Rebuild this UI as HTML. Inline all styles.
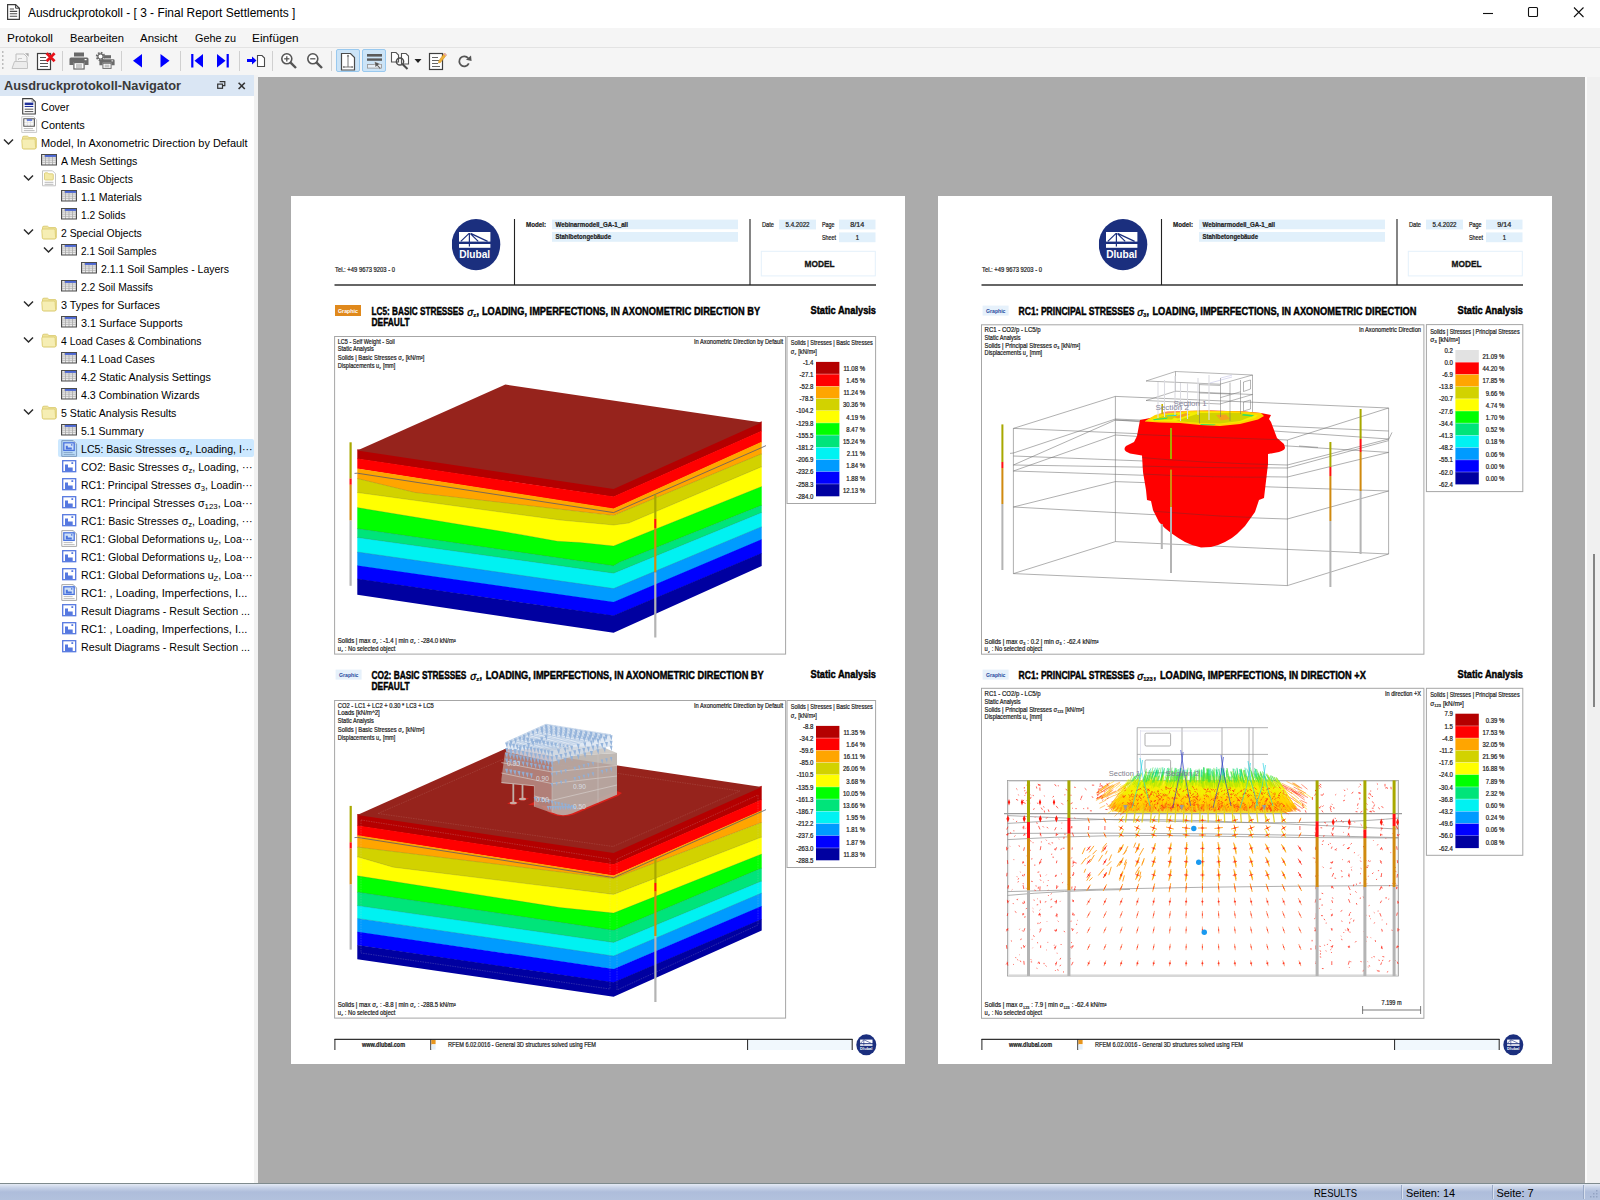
<!DOCTYPE html><html lang="de"><head><meta charset="utf-8"><title>Ausdruckprotokoll - [ 3 - Final Report Settlements ]</title><style>

html,body{margin:0;padding:0;}
body{width:1600px;height:1200px;overflow:hidden;position:relative;background:#fff;font-family:"Liberation Sans",sans-serif;}
.t{position:absolute;white-space:nowrap;transform-origin:0 0;}
.a{position:absolute;}
#titlebar{left:0;top:0;width:1600px;height:28px;background:#fff;}
#menubar{left:0;top:28px;width:1600px;height:19px;background:#f5f5f5;}
#menusep{left:0;top:47px;width:1600px;height:1px;background:#e3e3e3;}
#toolbar{left:0;top:48px;width:1600px;height:29px;background:#f5f5f5;}
#nav{left:0;top:75px;width:254px;height:1108px;background:#fff;}
#navhead{left:0;top:75px;width:254px;height:21px;background:#dae6f4;}
#split{left:254px;top:75px;width:4px;height:1108px;background:#f2f2f2;}
#main{left:258px;top:77px;width:1327px;height:1106px;background:#ababab;}
#vscroll{left:1585px;top:77px;width:15px;height:1106px;background:#f0f0f0;border-left:2px solid #fbfbfb;box-sizing:border-box;}
#status{left:0;top:1183px;width:1600px;height:17px;background:linear-gradient(#7f8b8e 0,#7f8b8e 1px,#e4eaf4 1px,#c4d0e6 5px,#aebddb 9px,#b2c1dd 17px);}
.page{position:absolute;top:196px;width:614px;height:868px;background:#fff;}
.row{position:absolute;left:0;height:18px;width:254px;}
.sel{position:absolute;top:439px;left:58px;width:196px;height:18px;background:#cce8ff;border-radius:2px;}
.tsep{position:absolute;top:51px;width:1px;height:20px;background:#d0d0d0;}
.tbtn{position:absolute;top:49px;width:24px;height:23px;box-sizing:border-box;background:#cce4f7;border:1px solid #99c9ef;border-radius:2px;}

sub{font-size:8px;vertical-align:-2px;line-height:0;}
</style></head><body>
<div class="a" id="titlebar"></div>
<svg class="a" style="left:6px;top:3px" width="15" height="18" viewBox="0 0 15 18"><path d="M1.6 1.6 L9.6 1.6 L13.4 5.2 L13.4 16.4 L1.6 16.4 Z" fill="#fff" stroke="#3c3c3c" stroke-width="1.2"/><path d="M9.6 1.6 L9.6 5.2 L13.4 5.2" fill="none" stroke="#3c3c3c" stroke-width="1"/><path d="M3.8 6 H8 M3.8 8.4 H11.2 M3.8 10.8 H11.2 M3.8 13.2 H11.2" stroke="#4a4a4a" stroke-width="1.1"/></svg>
<span class="t" style="left:27.5px;top:5.96px;font-size:12.3px;line-height:14.76px;color:#000;transform:scaleX(0.9710);">Ausdruckprotokoll - [ 3 - Final Report Settlements ]</span>
<svg class="a" style="left:1480px;top:5px" width="20" height="16" viewBox="0 0 20 16"><path d="M3 8.5 H13" stroke="#111" stroke-width="1.1"/></svg>
<svg class="a" style="left:1525px;top:4px" width="18" height="18" viewBox="0 0 18 18"><rect x="3.5" y="3.5" width="9" height="9" rx="1" fill="none" stroke="#111" stroke-width="1.1"/></svg>
<svg class="a" style="left:1570px;top:4px" width="18" height="18" viewBox="0 0 18 18"><path d="M4 3.5 L13.5 13 M13.5 3.5 L4 13" stroke="#111" stroke-width="1.1"/></svg>
<div class="a" id="menubar"></div><div class="a" id="menusep"></div>
<span class="t" style="left:6.5px;top:31.79px;font-size:11px;line-height:13.2px;color:#000;transform:scaleX(1.0748);">Protokoll</span>
<span class="t" style="left:69.5px;top:31.79px;font-size:11px;line-height:13.2px;color:#000;transform:scaleX(1.0149);">Bearbeiten</span>
<span class="t" style="left:140px;top:31.79px;font-size:11px;line-height:13.2px;color:#000;transform:scaleX(1.0396);">Ansicht</span>
<span class="t" style="left:194.5px;top:31.79px;font-size:11px;line-height:13.2px;color:#000;transform:scaleX(0.9860);">Gehe zu</span>
<span class="t" style="left:252px;top:31.79px;font-size:11px;line-height:13.2px;color:#000;transform:scaleX(1.0754);">Einfügen</span>
<div class="a" id="toolbar"></div>
<svg class="a" style="left:1px;top:50px" width="4" height="20" viewBox="0 0 4 20"><rect x="1" y="1" width="1.5" height="2" fill="#bdbdbd"/><rect x="1" y="5" width="1.5" height="2" fill="#bdbdbd"/><rect x="1" y="9" width="1.5" height="2" fill="#bdbdbd"/><rect x="1" y="13" width="1.5" height="2" fill="#bdbdbd"/><rect x="1" y="17" width="1.5" height="2" fill="#bdbdbd"/></svg>
<svg class="a" style="left:10px;top:51px" width="20" height="20" viewBox="0 0 20 20"><path d="M6 3 H14 L17 6 V13 H6 Z" fill="#f4f4f4" stroke="#bdbdbd"/><path d="M15 2.2 H18.6 V5.8 Z" fill="#a9a9a9"/><path d="M8.5 7.5 H12 M8.5 7.5 V9" stroke="#c9c9c9" fill="none"/><path d="M2 17.5 L4.5 10.5 H16.5 L17.5 12 V17.5 Z" fill="#ececec" stroke="#c4c4c4"/></svg>
<svg class="a" style="left:36px;top:51px" width="21" height="20" viewBox="0 0 21 20"><rect x="1.5" y="2.5" width="13" height="16" fill="#fff" stroke="#3f3f3f" stroke-width="1.2"/><path d="M4 6.5 H10 M4 9.5 H12 M4 12.5 H12 M4 15.5 H12" stroke="#555" stroke-width="1.2"/><path d="M10.6 2.2 L18.6 10.2 M18.6 2.2 L10.6 10.2" stroke="#e8121a" stroke-width="2.7"/></svg>
<div class="tsep" style="left:62px"></div>
<svg class="a" style="left:69px;top:51px" width="20" height="20" viewBox="0 0 20 20"><rect x="5" y="1.5" width="10" height="4" fill="#6a6a6a"/><path d="M2 6.5 H18 Q19.5 6.5 19.5 8 V14 H15.5 V11 H4.5 V14 H0.5 V8 Q0.5 6.5 2 6.5 Z" fill="#6a6a6a"/><rect x="4.9" y="11.6" width="10.2" height="6.4" fill="#fff" stroke="#6a6a6a" stroke-width="1.2"/><path d="M7 14 H13 M7 16 H13" stroke="#8a8a8a" stroke-width="0.9"/><rect x="15.6" y="8" width="2" height="1.2" fill="#fff"/></svg>
<svg class="a" style="left:95px;top:51px" width="20" height="20" viewBox="0 0 20 20"><g transform="translate(4,3) scale(0.8)"><rect x="5" y="1.5" width="10" height="4" fill="#6a6a6a"/><path d="M2 6.5 H18 Q19.5 6.5 19.5 8 V14 H15.5 V11 H4.5 V14 H0.5 V8 Q0.5 6.5 2 6.5 Z" fill="#6a6a6a"/><rect x="4.9" y="11.6" width="10.2" height="6.4" fill="#fff" stroke="#6a6a6a" stroke-width="1.2"/><path d="M7 14 H13 M7 16 H13" stroke="#8a8a8a" stroke-width="0.9"/><rect x="15.6" y="8" width="2" height="1.2" fill="#fff"/></g><circle cx="5.5" cy="5.5" r="3.6" fill="#fff" stroke="#6a6a6a" stroke-width="2.2" stroke-dasharray="1.6 1.2"/><circle cx="5.5" cy="5.5" r="2.6" fill="none" stroke="#6a6a6a" stroke-width="1.2"/></svg>
<div class="tsep" style="left:121px"></div>
<svg class="a" style="left:132px;top:53px" width="12" height="16" viewBox="0 0 12 16"><path d="M10 1 L10 14.5 L1 7.7 Z" fill="#0000ff"/></svg>
<svg class="a" style="left:159px;top:53px" width="12" height="16" viewBox="0 0 12 16"><path d="M1.5 1 L1.5 14.5 L10.5 7.7 Z" fill="#0000ff"/></svg>
<div class="tsep" style="left:180px"></div>
<svg class="a" style="left:190px;top:53px" width="14" height="16" viewBox="0 0 14 16"><path d="M13 1 L13 14.5 L4.5 7.7 Z" fill="#0000ff"/><rect x="1.2" y="1" width="2.2" height="13.5" fill="#0000ff"/></svg>
<svg class="a" style="left:216px;top:53px" width="14" height="16" viewBox="0 0 14 16"><path d="M1 1 L1 14.5 L9.5 7.7 Z" fill="#0000ff"/><rect x="10.6" y="1" width="2.2" height="13.5" fill="#0000ff"/></svg>
<div class="tsep" style="left:239px"></div>
<svg class="a" style="left:246px;top:52px" width="20" height="18" viewBox="0 0 20 18"><path d="M1 7 H6 V4.5 L10.5 8.5 L6 12.5 V10 H1 Z" fill="#0000ff"/><path d="M11.5 3.5 H16 L18.5 6 V14.5 H11.5 Z" fill="#fff" stroke="#4a4a4a" stroke-width="1.1"/></svg>
<div class="tsep" style="left:272px"></div>
<svg class="a" style="left:280px;top:52px" width="18" height="18" viewBox="0 0 18 18"><circle cx="6.8" cy="6.8" r="5" fill="#fff" stroke="#555" stroke-width="1.6"/><path d="M10.6 10.6 L16 16" stroke="#555" stroke-width="2.4"/><path d="M4.2 6.8 H9.4" stroke="#555" stroke-width="1.3"/><path d="M6.8 4.2 V9.4" stroke="#555" stroke-width="1.3"/></svg>
<svg class="a" style="left:306px;top:52px" width="18" height="18" viewBox="0 0 18 18"><circle cx="6.8" cy="6.8" r="5" fill="#fff" stroke="#555" stroke-width="1.6"/><path d="M10.6 10.6 L16 16" stroke="#555" stroke-width="2.4"/><path d="M4.2 6.8 H9.4" stroke="#555" stroke-width="1.3"/></svg>
<div class="tsep" style="left:331px"></div>
<div class="tbtn" style="left:336px"></div><div class="tbtn" style="left:362px"></div>
<svg class="a" style="left:340px;top:52px" width="17" height="20" viewBox="0 0 17 20"><path d="M1.5 1.5 H10.5 L14.5 5.5 V18 H1.5 Z" fill="#fff" stroke="#4a4a4a" stroke-width="1.2"/><path d="M8 3 V15 M3 15 H13" stroke="#6a6a6a" stroke-width="0.9"/><path d="M8 2.6 L6.8 4.6 H9.2 Z M2.6 15 L4.4 13.9 V16.1 Z M13.4 15 L11.6 13.9 V16.1 Z" fill="#6a6a6a"/></svg>
<svg class="a" style="left:365px;top:52px" width="19" height="20" viewBox="0 0 19 20"><rect x="2" y="2" width="15" height="2.6" fill="#5a5a5a"/><rect x="2" y="6.4" width="15" height="2.4" fill="#5a5a5a"/><rect x="2.5" y="12.5" width="14" height="3.6" fill="#e6eef6" stroke="#9a9a9a" stroke-width="0.9"/><path d="M9.5 9.5 L15.5 12 L13 13 L16 16.5 L14.8 17.3 L12 13.8 L10.4 15.6 Z" fill="#555" stroke="#fff" stroke-width="0.4"/></svg>
<svg class="a" style="left:390px;top:51px" width="22" height="20" viewBox="0 0 22 20"><path d="M1.5 1.5 H6 L8.5 4 V11 H1.5 Z" fill="#fff" stroke="#555" stroke-width="1.1"/><path d="M11.5 2.5 H16 L18.5 5 V13 H11.5 Z" fill="#fff" stroke="#555" stroke-width="1.1"/><circle cx="10" cy="10.5" r="3.6" fill="none" stroke="#4a4a4a" stroke-width="1.5"/><path d="M12.6 13.2 L17.5 18" stroke="#4a4a4a" stroke-width="2"/></svg>
<svg class="a" style="left:414px;top:58px" width="8" height="6" viewBox="0 0 8 6"><path d="M0.5 1 H7.5 L4 5 Z" fill="#222"/></svg>
<svg class="a" style="left:428px;top:51px" width="20" height="20" viewBox="0 0 20 20"><rect x="1.5" y="2.5" width="13" height="16" fill="#fff" stroke="#3f3f3f" stroke-width="1.2"/><path d="M4 6.5 H10 M4 9.5 H11 M4 12.5 H10 M4 15.5 H12" stroke="#666" stroke-width="1.2"/><path d="M16.5 2 L18.5 4 L12.5 11.5 L10.5 12 L10.8 9.8 Z" fill="#f0b23a" stroke="#c98a1a" stroke-width="0.5"/><path d="M16.5 2 L18.5 4 L17.7 5 L15.7 3 Z" fill="#e9a3c0"/></svg>
<svg class="a" style="left:456px;top:53px" width="17" height="17" viewBox="0 0 17 17"><path d="M12.8 10.4 A5 5 0 1 1 12.2 5.2" fill="none" stroke="#555" stroke-width="1.8"/><path d="M10 6.8 L15.6 8 L15 2.6 Z" fill="#555"/></svg>
<div class="a" id="nav"></div><div class="a" id="navhead"></div>
<span class="t" style="left:4px;top:77.88px;font-size:12.8px;line-height:15.36px;color:#3a3a3a;font-weight:bold;">Ausdruckprotokoll-Navigator</span>
<svg class="a" style="left:216px;top:80px" width="11" height="11" viewBox="0 0 11 11"><path d="M3.6 1.7 H8.8 V5.6 H7" fill="none" stroke="#333" stroke-width="1.2"/><rect x="1.7" y="4.1" width="4.8" height="4.2" fill="none" stroke="#333" stroke-width="1.2"/></svg>
<svg class="a" style="left:237px;top:81px" width="10" height="10" viewBox="0 0 10 10"><path d="M1.6 1.8 L7.8 8 M7.8 1.8 L1.6 8" stroke="#333" stroke-width="1.6"/></svg>
<div class="sel"></div>
<svg class="a" style="left:22px;top:98px" width="15" height="17" viewBox="0 0 15 17"><path d="M0.7 0.6 L10 0.6 L13.3 3.8 L13.3 16 L0.7 16 Z" fill="#fff" stroke="#3e3e3e" stroke-width="1.1"/><path d="M10 0.6 L10 3.8 L13.3 3.8" fill="none" stroke="#8a8a8a" stroke-width="0.8"/><rect x="2.7" y="4.6" width="8.6" height="2.4" fill="#22329a"/><rect x="2.7" y="7.9" width="8.6" height="1.1" fill="#22329a"/><path d="M2.7 11.2 H11.3 M2.7 13.6 H11.3" stroke="#555" stroke-width="1"/></svg>
<span class="t" style="left:41.1px;top:100.59px;font-size:11px;line-height:13.2px;color:#000;transform:scaleX(0.9644);">Cover</span>
<svg class="a" style="left:21px;top:116px" width="17" height="17" viewBox="0 0 17 17"><path d="M0.8 0.6 L12.6 0.6 L15.6 3.6 L15.6 16.4 L0.8 16.4 Z" fill="#fff" stroke="#c9c9c9" stroke-width="1"/><rect x="2.8" y="2.8" width="10.6" height="7.4" fill="#e0e0e0" stroke="#4f4f4f" stroke-width="1"/><rect x="6" y="3.4" width="5" height="1.3" fill="#3557e0"/><rect x="3.5" y="3.4" width="1.8" height="1.2" fill="#fff"/><rect x="3.5" y="5.3" width="2.4" height="0.9" fill="#fff"/><rect x="6.7" y="5.3" width="2.4" height="0.9" fill="#fff"/><rect x="9.9" y="5.3" width="2.4" height="0.9" fill="#fff"/><rect x="3.5" y="6.9" width="2.4" height="0.9" fill="#fff"/><rect x="6.7" y="6.9" width="2.4" height="0.9" fill="#fff"/><rect x="9.9" y="6.9" width="2.4" height="0.9" fill="#fff"/><rect x="3.5" y="8.5" width="2.4" height="0.9" fill="#fff"/><rect x="6.7" y="8.5" width="2.4" height="0.9" fill="#fff"/><rect x="9.9" y="8.5" width="2.4" height="0.9" fill="#fff"/><path d="M2.8 12.6 H12 M2.8 14.6 H13.6" stroke="#bdbdbd" stroke-width="1"/></svg>
<span class="t" style="left:41.1px;top:118.59px;font-size:11px;line-height:13.2px;color:#000;transform:scaleX(0.9937);">Contents</span>
<svg class="a" style="left:2.5px;top:138px" width="11" height="8" viewBox="0 0 11 8"><path d="M1 1.5 L5.5 6 L10 1.5" fill="none" stroke="#2b2b2b" stroke-width="1.5"/></svg>
<svg class="a" style="left:21px;top:135px" width="17" height="15" viewBox="0 0 17 15"><path d="M1.5 2.5 Q1.5 1.2 3 1.2 L6.5 1.2 L8 2.6 L14 2.6 Q15.3 2.6 15.3 4 L15.3 12.5 Q15.3 13.8 14 13.8 L3 13.8 Q1.5 13.8 1.5 12.5 Z" fill="#efe39a" stroke="#d9c96f" stroke-width="0.9"/><path d="M0.8 5.2 Q0.7 4 2 4 L12.8 4 Q14 4 14.1 5.2 L14.6 12.6 Q14.7 13.9 13.4 13.9 L2.6 13.9 Q1.4 13.9 1.3 12.7 Z" fill="#f6eeb4" stroke="#dccd74" stroke-width="0.9"/></svg>
<span class="t" style="left:41.1px;top:136.59px;font-size:11px;line-height:13.2px;color:#000;transform:scaleX(0.9934);">Model, In Axonometric Direction by Default</span>
<svg class="a" style="left:41px;top:154px" width="16" height="12" viewBox="0 0 16 12"><rect x="0.5" y="0.5" width="15" height="10.5" fill="#a9a9a9" stroke="#4c4c4c"/><rect x="4" y="1.2" width="11" height="1.5" fill="#3557e0"/><rect x="1.4" y="1.3" width="1.9" height="1.2" fill="#fff"/><rect x="1.4" y="3.4" width="2.7" height="1.15" fill="#f4f4f4"/><rect x="4.9" y="3.4" width="2.7" height="1.15" fill="#f4f4f4"/><rect x="8.4" y="3.4" width="2.7" height="1.15" fill="#f4f4f4"/><rect x="11.9" y="3.4" width="2.7" height="1.15" fill="#f4f4f4"/><rect x="1.4" y="5.3" width="2.7" height="1.15" fill="#f4f4f4"/><rect x="4.9" y="5.3" width="2.7" height="1.15" fill="#f4f4f4"/><rect x="8.4" y="5.3" width="2.7" height="1.15" fill="#f4f4f4"/><rect x="11.9" y="5.3" width="2.7" height="1.15" fill="#f4f4f4"/><rect x="1.4" y="7.2" width="2.7" height="1.15" fill="#f4f4f4"/><rect x="4.9" y="7.2" width="2.7" height="1.15" fill="#f4f4f4"/><rect x="8.4" y="7.2" width="2.7" height="1.15" fill="#f4f4f4"/><rect x="11.9" y="7.2" width="2.7" height="1.15" fill="#f4f4f4"/><rect x="1.4" y="9.1" width="2.7" height="1.15" fill="#f4f4f4"/><rect x="4.9" y="9.1" width="2.7" height="1.15" fill="#f4f4f4"/><rect x="8.4" y="9.1" width="2.7" height="1.15" fill="#f4f4f4"/><rect x="11.9" y="9.1" width="2.7" height="1.15" fill="#f4f4f4"/></svg>
<span class="t" style="left:61.1px;top:154.59px;font-size:11px;line-height:13.2px;color:#000;transform:scaleX(0.9599);">A Mesh Settings</span>
<svg class="a" style="left:22.5px;top:174px" width="11" height="8" viewBox="0 0 11 8"><path d="M1 1.5 L5.5 6 L10 1.5" fill="none" stroke="#2b2b2b" stroke-width="1.5"/></svg>
<svg class="a" style="left:41px;top:170px" width="17" height="17" viewBox="0 0 17 17"><path d="M1.5 0.8 L11.5 0.8 L14.5 3.8 L14.5 15.8 L1.5 15.8 Z" fill="#fff" stroke="#c4c4c4" stroke-width="1"/><path d="M3.5 3.6 Q3.5 2.8 4.4 2.8 L6.6 2.8 L7.6 3.8 L11.4 3.8 Q12.3 3.8 12.3 4.7 L12.3 9.2 Q12.3 10 11.4 10 L4.4 10 Q3.5 10 3.5 9.2 Z" fill="#f3e9a6" stroke="#d6c66c" stroke-width="0.8"/><path d="M3.6 12.3 H12.4 M3.6 14.3 H12.4" stroke="#b9b9b9" stroke-width="1"/></svg>
<span class="t" style="left:61.1px;top:172.59px;font-size:11px;line-height:13.2px;color:#000;transform:scaleX(0.9395);">1 Basic Objects</span>
<svg class="a" style="left:61px;top:190px" width="16" height="12" viewBox="0 0 16 12"><rect x="0.5" y="0.5" width="15" height="10.5" fill="#a9a9a9" stroke="#4c4c4c"/><rect x="4" y="1.2" width="11" height="1.5" fill="#3557e0"/><rect x="1.4" y="1.3" width="1.9" height="1.2" fill="#fff"/><rect x="1.4" y="3.4" width="2.7" height="1.15" fill="#f4f4f4"/><rect x="4.9" y="3.4" width="2.7" height="1.15" fill="#f4f4f4"/><rect x="8.4" y="3.4" width="2.7" height="1.15" fill="#f4f4f4"/><rect x="11.9" y="3.4" width="2.7" height="1.15" fill="#f4f4f4"/><rect x="1.4" y="5.3" width="2.7" height="1.15" fill="#f4f4f4"/><rect x="4.9" y="5.3" width="2.7" height="1.15" fill="#f4f4f4"/><rect x="8.4" y="5.3" width="2.7" height="1.15" fill="#f4f4f4"/><rect x="11.9" y="5.3" width="2.7" height="1.15" fill="#f4f4f4"/><rect x="1.4" y="7.2" width="2.7" height="1.15" fill="#f4f4f4"/><rect x="4.9" y="7.2" width="2.7" height="1.15" fill="#f4f4f4"/><rect x="8.4" y="7.2" width="2.7" height="1.15" fill="#f4f4f4"/><rect x="11.9" y="7.2" width="2.7" height="1.15" fill="#f4f4f4"/><rect x="1.4" y="9.1" width="2.7" height="1.15" fill="#f4f4f4"/><rect x="4.9" y="9.1" width="2.7" height="1.15" fill="#f4f4f4"/><rect x="8.4" y="9.1" width="2.7" height="1.15" fill="#f4f4f4"/><rect x="11.9" y="9.1" width="2.7" height="1.15" fill="#f4f4f4"/></svg>
<span class="t" style="left:81.1px;top:190.59px;font-size:11px;line-height:13.2px;color:#000;transform:scaleX(0.9655);">1.1 Materials</span>
<svg class="a" style="left:61px;top:208px" width="16" height="12" viewBox="0 0 16 12"><rect x="0.5" y="0.5" width="15" height="10.5" fill="#a9a9a9" stroke="#4c4c4c"/><rect x="4" y="1.2" width="11" height="1.5" fill="#3557e0"/><rect x="1.4" y="1.3" width="1.9" height="1.2" fill="#fff"/><rect x="1.4" y="3.4" width="2.7" height="1.15" fill="#f4f4f4"/><rect x="4.9" y="3.4" width="2.7" height="1.15" fill="#f4f4f4"/><rect x="8.4" y="3.4" width="2.7" height="1.15" fill="#f4f4f4"/><rect x="11.9" y="3.4" width="2.7" height="1.15" fill="#f4f4f4"/><rect x="1.4" y="5.3" width="2.7" height="1.15" fill="#f4f4f4"/><rect x="4.9" y="5.3" width="2.7" height="1.15" fill="#f4f4f4"/><rect x="8.4" y="5.3" width="2.7" height="1.15" fill="#f4f4f4"/><rect x="11.9" y="5.3" width="2.7" height="1.15" fill="#f4f4f4"/><rect x="1.4" y="7.2" width="2.7" height="1.15" fill="#f4f4f4"/><rect x="4.9" y="7.2" width="2.7" height="1.15" fill="#f4f4f4"/><rect x="8.4" y="7.2" width="2.7" height="1.15" fill="#f4f4f4"/><rect x="11.9" y="7.2" width="2.7" height="1.15" fill="#f4f4f4"/><rect x="1.4" y="9.1" width="2.7" height="1.15" fill="#f4f4f4"/><rect x="4.9" y="9.1" width="2.7" height="1.15" fill="#f4f4f4"/><rect x="8.4" y="9.1" width="2.7" height="1.15" fill="#f4f4f4"/><rect x="11.9" y="9.1" width="2.7" height="1.15" fill="#f4f4f4"/></svg>
<span class="t" style="left:81.1px;top:208.59px;font-size:11px;line-height:13.2px;color:#000;transform:scaleX(0.9212);">1.2 Solids</span>
<svg class="a" style="left:22.5px;top:228px" width="11" height="8" viewBox="0 0 11 8"><path d="M1 1.5 L5.5 6 L10 1.5" fill="none" stroke="#2b2b2b" stroke-width="1.5"/></svg>
<svg class="a" style="left:41px;top:225px" width="17" height="15" viewBox="0 0 17 15"><path d="M1.5 2.5 Q1.5 1.2 3 1.2 L6.5 1.2 L8 2.6 L14 2.6 Q15.3 2.6 15.3 4 L15.3 12.5 Q15.3 13.8 14 13.8 L3 13.8 Q1.5 13.8 1.5 12.5 Z" fill="#efe39a" stroke="#d9c96f" stroke-width="0.9"/><path d="M0.8 5.2 Q0.7 4 2 4 L12.8 4 Q14 4 14.1 5.2 L14.6 12.6 Q14.7 13.9 13.4 13.9 L2.6 13.9 Q1.4 13.9 1.3 12.7 Z" fill="#f6eeb4" stroke="#dccd74" stroke-width="0.9"/></svg>
<span class="t" style="left:61.1px;top:226.59px;font-size:11px;line-height:13.2px;color:#000;transform:scaleX(0.9439);">2 Special Objects</span>
<svg class="a" style="left:42.5px;top:246px" width="11" height="8" viewBox="0 0 11 8"><path d="M1 1.5 L5.5 6 L10 1.5" fill="none" stroke="#2b2b2b" stroke-width="1.5"/></svg>
<svg class="a" style="left:61px;top:244px" width="16" height="12" viewBox="0 0 16 12"><rect x="0.5" y="0.5" width="15" height="10.5" fill="#a9a9a9" stroke="#4c4c4c"/><rect x="4" y="1.2" width="11" height="1.5" fill="#3557e0"/><rect x="1.4" y="1.3" width="1.9" height="1.2" fill="#fff"/><rect x="1.4" y="3.4" width="2.7" height="1.15" fill="#f4f4f4"/><rect x="4.9" y="3.4" width="2.7" height="1.15" fill="#f4f4f4"/><rect x="8.4" y="3.4" width="2.7" height="1.15" fill="#f4f4f4"/><rect x="11.9" y="3.4" width="2.7" height="1.15" fill="#f4f4f4"/><rect x="1.4" y="5.3" width="2.7" height="1.15" fill="#f4f4f4"/><rect x="4.9" y="5.3" width="2.7" height="1.15" fill="#f4f4f4"/><rect x="8.4" y="5.3" width="2.7" height="1.15" fill="#f4f4f4"/><rect x="11.9" y="5.3" width="2.7" height="1.15" fill="#f4f4f4"/><rect x="1.4" y="7.2" width="2.7" height="1.15" fill="#f4f4f4"/><rect x="4.9" y="7.2" width="2.7" height="1.15" fill="#f4f4f4"/><rect x="8.4" y="7.2" width="2.7" height="1.15" fill="#f4f4f4"/><rect x="11.9" y="7.2" width="2.7" height="1.15" fill="#f4f4f4"/><rect x="1.4" y="9.1" width="2.7" height="1.15" fill="#f4f4f4"/><rect x="4.9" y="9.1" width="2.7" height="1.15" fill="#f4f4f4"/><rect x="8.4" y="9.1" width="2.7" height="1.15" fill="#f4f4f4"/><rect x="11.9" y="9.1" width="2.7" height="1.15" fill="#f4f4f4"/></svg>
<span class="t" style="left:81.1px;top:244.59px;font-size:11px;line-height:13.2px;color:#000;transform:scaleX(0.9146);">2.1 Soil Samples</span>
<svg class="a" style="left:81px;top:262px" width="16" height="12" viewBox="0 0 16 12"><rect x="0.5" y="0.5" width="15" height="10.5" fill="#a9a9a9" stroke="#4c4c4c"/><rect x="4" y="1.2" width="11" height="1.5" fill="#3557e0"/><rect x="1.4" y="1.3" width="1.9" height="1.2" fill="#fff"/><rect x="1.4" y="3.4" width="2.7" height="1.15" fill="#f4f4f4"/><rect x="4.9" y="3.4" width="2.7" height="1.15" fill="#f4f4f4"/><rect x="8.4" y="3.4" width="2.7" height="1.15" fill="#f4f4f4"/><rect x="11.9" y="3.4" width="2.7" height="1.15" fill="#f4f4f4"/><rect x="1.4" y="5.3" width="2.7" height="1.15" fill="#f4f4f4"/><rect x="4.9" y="5.3" width="2.7" height="1.15" fill="#f4f4f4"/><rect x="8.4" y="5.3" width="2.7" height="1.15" fill="#f4f4f4"/><rect x="11.9" y="5.3" width="2.7" height="1.15" fill="#f4f4f4"/><rect x="1.4" y="7.2" width="2.7" height="1.15" fill="#f4f4f4"/><rect x="4.9" y="7.2" width="2.7" height="1.15" fill="#f4f4f4"/><rect x="8.4" y="7.2" width="2.7" height="1.15" fill="#f4f4f4"/><rect x="11.9" y="7.2" width="2.7" height="1.15" fill="#f4f4f4"/><rect x="1.4" y="9.1" width="2.7" height="1.15" fill="#f4f4f4"/><rect x="4.9" y="9.1" width="2.7" height="1.15" fill="#f4f4f4"/><rect x="8.4" y="9.1" width="2.7" height="1.15" fill="#f4f4f4"/><rect x="11.9" y="9.1" width="2.7" height="1.15" fill="#f4f4f4"/></svg>
<span class="t" style="left:101.1px;top:262.59px;font-size:11px;line-height:13.2px;color:#000;transform:scaleX(0.9516);">2.1.1 Soil Samples - Layers</span>
<svg class="a" style="left:61px;top:280px" width="16" height="12" viewBox="0 0 16 12"><rect x="0.5" y="0.5" width="15" height="10.5" fill="#a9a9a9" stroke="#4c4c4c"/><rect x="4" y="1.2" width="11" height="1.5" fill="#3557e0"/><rect x="1.4" y="1.3" width="1.9" height="1.2" fill="#fff"/><rect x="1.4" y="3.4" width="2.7" height="1.15" fill="#f4f4f4"/><rect x="4.9" y="3.4" width="2.7" height="1.15" fill="#f4f4f4"/><rect x="8.4" y="3.4" width="2.7" height="1.15" fill="#f4f4f4"/><rect x="11.9" y="3.4" width="2.7" height="1.15" fill="#f4f4f4"/><rect x="1.4" y="5.3" width="2.7" height="1.15" fill="#f4f4f4"/><rect x="4.9" y="5.3" width="2.7" height="1.15" fill="#f4f4f4"/><rect x="8.4" y="5.3" width="2.7" height="1.15" fill="#f4f4f4"/><rect x="11.9" y="5.3" width="2.7" height="1.15" fill="#f4f4f4"/><rect x="1.4" y="7.2" width="2.7" height="1.15" fill="#f4f4f4"/><rect x="4.9" y="7.2" width="2.7" height="1.15" fill="#f4f4f4"/><rect x="8.4" y="7.2" width="2.7" height="1.15" fill="#f4f4f4"/><rect x="11.9" y="7.2" width="2.7" height="1.15" fill="#f4f4f4"/><rect x="1.4" y="9.1" width="2.7" height="1.15" fill="#f4f4f4"/><rect x="4.9" y="9.1" width="2.7" height="1.15" fill="#f4f4f4"/><rect x="8.4" y="9.1" width="2.7" height="1.15" fill="#f4f4f4"/><rect x="11.9" y="9.1" width="2.7" height="1.15" fill="#f4f4f4"/></svg>
<span class="t" style="left:81.1px;top:280.59px;font-size:11px;line-height:13.2px;color:#000;transform:scaleX(0.9347);">2.2 Soil Massifs</span>
<svg class="a" style="left:22.5px;top:300px" width="11" height="8" viewBox="0 0 11 8"><path d="M1 1.5 L5.5 6 L10 1.5" fill="none" stroke="#2b2b2b" stroke-width="1.5"/></svg>
<svg class="a" style="left:41px;top:297px" width="17" height="15" viewBox="0 0 17 15"><path d="M1.5 2.5 Q1.5 1.2 3 1.2 L6.5 1.2 L8 2.6 L14 2.6 Q15.3 2.6 15.3 4 L15.3 12.5 Q15.3 13.8 14 13.8 L3 13.8 Q1.5 13.8 1.5 12.5 Z" fill="#efe39a" stroke="#d9c96f" stroke-width="0.9"/><path d="M0.8 5.2 Q0.7 4 2 4 L12.8 4 Q14 4 14.1 5.2 L14.6 12.6 Q14.7 13.9 13.4 13.9 L2.6 13.9 Q1.4 13.9 1.3 12.7 Z" fill="#f6eeb4" stroke="#dccd74" stroke-width="0.9"/></svg>
<span class="t" style="left:61.1px;top:298.59px;font-size:11px;line-height:13.2px;color:#000;transform:scaleX(0.9833);">3 Types for Surfaces</span>
<svg class="a" style="left:61px;top:316px" width="16" height="12" viewBox="0 0 16 12"><rect x="0.5" y="0.5" width="15" height="10.5" fill="#a9a9a9" stroke="#4c4c4c"/><rect x="4" y="1.2" width="11" height="1.5" fill="#3557e0"/><rect x="1.4" y="1.3" width="1.9" height="1.2" fill="#fff"/><rect x="1.4" y="3.4" width="2.7" height="1.15" fill="#f4f4f4"/><rect x="4.9" y="3.4" width="2.7" height="1.15" fill="#f4f4f4"/><rect x="8.4" y="3.4" width="2.7" height="1.15" fill="#f4f4f4"/><rect x="11.9" y="3.4" width="2.7" height="1.15" fill="#f4f4f4"/><rect x="1.4" y="5.3" width="2.7" height="1.15" fill="#f4f4f4"/><rect x="4.9" y="5.3" width="2.7" height="1.15" fill="#f4f4f4"/><rect x="8.4" y="5.3" width="2.7" height="1.15" fill="#f4f4f4"/><rect x="11.9" y="5.3" width="2.7" height="1.15" fill="#f4f4f4"/><rect x="1.4" y="7.2" width="2.7" height="1.15" fill="#f4f4f4"/><rect x="4.9" y="7.2" width="2.7" height="1.15" fill="#f4f4f4"/><rect x="8.4" y="7.2" width="2.7" height="1.15" fill="#f4f4f4"/><rect x="11.9" y="7.2" width="2.7" height="1.15" fill="#f4f4f4"/><rect x="1.4" y="9.1" width="2.7" height="1.15" fill="#f4f4f4"/><rect x="4.9" y="9.1" width="2.7" height="1.15" fill="#f4f4f4"/><rect x="8.4" y="9.1" width="2.7" height="1.15" fill="#f4f4f4"/><rect x="11.9" y="9.1" width="2.7" height="1.15" fill="#f4f4f4"/></svg>
<span class="t" style="left:81.1px;top:316.59px;font-size:11px;line-height:13.2px;color:#000;transform:scaleX(0.9841);">3.1 Surface Supports</span>
<svg class="a" style="left:22.5px;top:336px" width="11" height="8" viewBox="0 0 11 8"><path d="M1 1.5 L5.5 6 L10 1.5" fill="none" stroke="#2b2b2b" stroke-width="1.5"/></svg>
<svg class="a" style="left:41px;top:333px" width="17" height="15" viewBox="0 0 17 15"><path d="M1.5 2.5 Q1.5 1.2 3 1.2 L6.5 1.2 L8 2.6 L14 2.6 Q15.3 2.6 15.3 4 L15.3 12.5 Q15.3 13.8 14 13.8 L3 13.8 Q1.5 13.8 1.5 12.5 Z" fill="#efe39a" stroke="#d9c96f" stroke-width="0.9"/><path d="M0.8 5.2 Q0.7 4 2 4 L12.8 4 Q14 4 14.1 5.2 L14.6 12.6 Q14.7 13.9 13.4 13.9 L2.6 13.9 Q1.4 13.9 1.3 12.7 Z" fill="#f6eeb4" stroke="#dccd74" stroke-width="0.9"/></svg>
<span class="t" style="left:61.1px;top:334.59px;font-size:11px;line-height:13.2px;color:#000;transform:scaleX(0.9449);">4 Load Cases &amp; Combinations</span>
<svg class="a" style="left:61px;top:352px" width="16" height="12" viewBox="0 0 16 12"><rect x="0.5" y="0.5" width="15" height="10.5" fill="#a9a9a9" stroke="#4c4c4c"/><rect x="4" y="1.2" width="11" height="1.5" fill="#3557e0"/><rect x="1.4" y="1.3" width="1.9" height="1.2" fill="#fff"/><rect x="1.4" y="3.4" width="2.7" height="1.15" fill="#f4f4f4"/><rect x="4.9" y="3.4" width="2.7" height="1.15" fill="#f4f4f4"/><rect x="8.4" y="3.4" width="2.7" height="1.15" fill="#f4f4f4"/><rect x="11.9" y="3.4" width="2.7" height="1.15" fill="#f4f4f4"/><rect x="1.4" y="5.3" width="2.7" height="1.15" fill="#f4f4f4"/><rect x="4.9" y="5.3" width="2.7" height="1.15" fill="#f4f4f4"/><rect x="8.4" y="5.3" width="2.7" height="1.15" fill="#f4f4f4"/><rect x="11.9" y="5.3" width="2.7" height="1.15" fill="#f4f4f4"/><rect x="1.4" y="7.2" width="2.7" height="1.15" fill="#f4f4f4"/><rect x="4.9" y="7.2" width="2.7" height="1.15" fill="#f4f4f4"/><rect x="8.4" y="7.2" width="2.7" height="1.15" fill="#f4f4f4"/><rect x="11.9" y="7.2" width="2.7" height="1.15" fill="#f4f4f4"/><rect x="1.4" y="9.1" width="2.7" height="1.15" fill="#f4f4f4"/><rect x="4.9" y="9.1" width="2.7" height="1.15" fill="#f4f4f4"/><rect x="8.4" y="9.1" width="2.7" height="1.15" fill="#f4f4f4"/><rect x="11.9" y="9.1" width="2.7" height="1.15" fill="#f4f4f4"/></svg>
<span class="t" style="left:81.1px;top:352.59px;font-size:11px;line-height:13.2px;color:#000;transform:scaleX(0.9578);">4.1 Load Cases</span>
<svg class="a" style="left:61px;top:370px" width="16" height="12" viewBox="0 0 16 12"><rect x="0.5" y="0.5" width="15" height="10.5" fill="#a9a9a9" stroke="#4c4c4c"/><rect x="4" y="1.2" width="11" height="1.5" fill="#3557e0"/><rect x="1.4" y="1.3" width="1.9" height="1.2" fill="#fff"/><rect x="1.4" y="3.4" width="2.7" height="1.15" fill="#f4f4f4"/><rect x="4.9" y="3.4" width="2.7" height="1.15" fill="#f4f4f4"/><rect x="8.4" y="3.4" width="2.7" height="1.15" fill="#f4f4f4"/><rect x="11.9" y="3.4" width="2.7" height="1.15" fill="#f4f4f4"/><rect x="1.4" y="5.3" width="2.7" height="1.15" fill="#f4f4f4"/><rect x="4.9" y="5.3" width="2.7" height="1.15" fill="#f4f4f4"/><rect x="8.4" y="5.3" width="2.7" height="1.15" fill="#f4f4f4"/><rect x="11.9" y="5.3" width="2.7" height="1.15" fill="#f4f4f4"/><rect x="1.4" y="7.2" width="2.7" height="1.15" fill="#f4f4f4"/><rect x="4.9" y="7.2" width="2.7" height="1.15" fill="#f4f4f4"/><rect x="8.4" y="7.2" width="2.7" height="1.15" fill="#f4f4f4"/><rect x="11.9" y="7.2" width="2.7" height="1.15" fill="#f4f4f4"/><rect x="1.4" y="9.1" width="2.7" height="1.15" fill="#f4f4f4"/><rect x="4.9" y="9.1" width="2.7" height="1.15" fill="#f4f4f4"/><rect x="8.4" y="9.1" width="2.7" height="1.15" fill="#f4f4f4"/><rect x="11.9" y="9.1" width="2.7" height="1.15" fill="#f4f4f4"/></svg>
<span class="t" style="left:81.1px;top:370.59px;font-size:11px;line-height:13.2px;color:#000;transform:scaleX(0.9843);">4.2 Static Analysis Settings</span>
<svg class="a" style="left:61px;top:388px" width="16" height="12" viewBox="0 0 16 12"><rect x="0.5" y="0.5" width="15" height="10.5" fill="#a9a9a9" stroke="#4c4c4c"/><rect x="4" y="1.2" width="11" height="1.5" fill="#3557e0"/><rect x="1.4" y="1.3" width="1.9" height="1.2" fill="#fff"/><rect x="1.4" y="3.4" width="2.7" height="1.15" fill="#f4f4f4"/><rect x="4.9" y="3.4" width="2.7" height="1.15" fill="#f4f4f4"/><rect x="8.4" y="3.4" width="2.7" height="1.15" fill="#f4f4f4"/><rect x="11.9" y="3.4" width="2.7" height="1.15" fill="#f4f4f4"/><rect x="1.4" y="5.3" width="2.7" height="1.15" fill="#f4f4f4"/><rect x="4.9" y="5.3" width="2.7" height="1.15" fill="#f4f4f4"/><rect x="8.4" y="5.3" width="2.7" height="1.15" fill="#f4f4f4"/><rect x="11.9" y="5.3" width="2.7" height="1.15" fill="#f4f4f4"/><rect x="1.4" y="7.2" width="2.7" height="1.15" fill="#f4f4f4"/><rect x="4.9" y="7.2" width="2.7" height="1.15" fill="#f4f4f4"/><rect x="8.4" y="7.2" width="2.7" height="1.15" fill="#f4f4f4"/><rect x="11.9" y="7.2" width="2.7" height="1.15" fill="#f4f4f4"/><rect x="1.4" y="9.1" width="2.7" height="1.15" fill="#f4f4f4"/><rect x="4.9" y="9.1" width="2.7" height="1.15" fill="#f4f4f4"/><rect x="8.4" y="9.1" width="2.7" height="1.15" fill="#f4f4f4"/><rect x="11.9" y="9.1" width="2.7" height="1.15" fill="#f4f4f4"/></svg>
<span class="t" style="left:81.1px;top:388.59px;font-size:11px;line-height:13.2px;color:#000;transform:scaleX(0.9651);">4.3 Combination Wizards</span>
<svg class="a" style="left:22.5px;top:408px" width="11" height="8" viewBox="0 0 11 8"><path d="M1 1.5 L5.5 6 L10 1.5" fill="none" stroke="#2b2b2b" stroke-width="1.5"/></svg>
<svg class="a" style="left:41px;top:405px" width="17" height="15" viewBox="0 0 17 15"><path d="M1.5 2.5 Q1.5 1.2 3 1.2 L6.5 1.2 L8 2.6 L14 2.6 Q15.3 2.6 15.3 4 L15.3 12.5 Q15.3 13.8 14 13.8 L3 13.8 Q1.5 13.8 1.5 12.5 Z" fill="#efe39a" stroke="#d9c96f" stroke-width="0.9"/><path d="M0.8 5.2 Q0.7 4 2 4 L12.8 4 Q14 4 14.1 5.2 L14.6 12.6 Q14.7 13.9 13.4 13.9 L2.6 13.9 Q1.4 13.9 1.3 12.7 Z" fill="#f6eeb4" stroke="#dccd74" stroke-width="0.9"/></svg>
<span class="t" style="left:61.1px;top:406.59px;font-size:11px;line-height:13.2px;color:#000;transform:scaleX(0.9630);">5 Static Analysis Results</span>
<svg class="a" style="left:61px;top:424px" width="16" height="12" viewBox="0 0 16 12"><rect x="0.5" y="0.5" width="15" height="10.5" fill="#a9a9a9" stroke="#4c4c4c"/><rect x="4" y="1.2" width="11" height="1.5" fill="#3557e0"/><rect x="1.4" y="1.3" width="1.9" height="1.2" fill="#fff"/><rect x="1.4" y="3.4" width="2.7" height="1.15" fill="#f4f4f4"/><rect x="4.9" y="3.4" width="2.7" height="1.15" fill="#f4f4f4"/><rect x="8.4" y="3.4" width="2.7" height="1.15" fill="#f4f4f4"/><rect x="11.9" y="3.4" width="2.7" height="1.15" fill="#f4f4f4"/><rect x="1.4" y="5.3" width="2.7" height="1.15" fill="#f4f4f4"/><rect x="4.9" y="5.3" width="2.7" height="1.15" fill="#f4f4f4"/><rect x="8.4" y="5.3" width="2.7" height="1.15" fill="#f4f4f4"/><rect x="11.9" y="5.3" width="2.7" height="1.15" fill="#f4f4f4"/><rect x="1.4" y="7.2" width="2.7" height="1.15" fill="#f4f4f4"/><rect x="4.9" y="7.2" width="2.7" height="1.15" fill="#f4f4f4"/><rect x="8.4" y="7.2" width="2.7" height="1.15" fill="#f4f4f4"/><rect x="11.9" y="7.2" width="2.7" height="1.15" fill="#f4f4f4"/><rect x="1.4" y="9.1" width="2.7" height="1.15" fill="#f4f4f4"/><rect x="4.9" y="9.1" width="2.7" height="1.15" fill="#f4f4f4"/><rect x="8.4" y="9.1" width="2.7" height="1.15" fill="#f4f4f4"/><rect x="11.9" y="9.1" width="2.7" height="1.15" fill="#f4f4f4"/></svg>
<span class="t" style="left:81.1px;top:424.59px;font-size:11px;line-height:13.2px;color:#000;transform:scaleX(0.9585);">5.1 Summary</span>
<svg class="a" style="left:61px;top:440px" width="17" height="17" viewBox="0 0 17 17"><path d="M0.8 0.6 L12.2 0.6 L15.6 4 L15.6 16.4 L0.8 16.4 Z" fill="#b9d9f6" stroke="#7d9cc0" stroke-width="1"/><path d="M12.2 0.6 L12.2 4 L15.6 4 Z" fill="#e8eef6" stroke="#a9b9cc" stroke-width="0.6"/><rect x="2.8" y="2.8" width="10.4" height="7.6" fill="#cfe0f7" stroke="#4a74de" stroke-width="1.3"/><path d="M4.8 9.6 L4.8 5.8 L6.8 5.8 L6.8 7.6 L10.8 7.6 L10.8 9.6 Z" fill="#4a74de"/><rect x="10" y="4.2" width="1.4" height="1.4" fill="#4a74de"/><path d="M2.6 12.6 H11.6 M2.6 14.6 H13.6" stroke="#86a6c8" stroke-width="1"/></svg>
<span class="t" style="left:81.1px;top:442.59px;font-size:11px;line-height:13.2px;color:#000;transform:scaleX(0.9618);">LC5: Basic Stresses σ<sub>z</sub>, Loading, I···</span>
<svg class="a" style="left:62px;top:460px" width="15" height="13" viewBox="0 0 15 13"><rect x="0.7" y="0.7" width="13" height="11" fill="#fff" stroke="#5578e0" stroke-width="1.3"/><path d="M3 11 L3 4.6 L6 4.6 L6 7.4 L10.7 7.4 L10.7 11 Z" fill="#5578e0"/><rect x="9.4" y="2.2" width="1.8" height="1.8" fill="#5578e0"/></svg>
<span class="t" style="left:81.1px;top:460.59px;font-size:11px;line-height:13.2px;color:#000;transform:scaleX(0.9652);">CO2: Basic Stresses σ<sub>z</sub>, Loading, ···</span>
<svg class="a" style="left:62px;top:478px" width="15" height="13" viewBox="0 0 15 13"><rect x="0.7" y="0.7" width="13" height="11" fill="#fff" stroke="#5578e0" stroke-width="1.3"/><path d="M3 11 L3 4.6 L6 4.6 L6 7.4 L10.7 7.4 L10.7 11 Z" fill="#5578e0"/><rect x="9.4" y="2.2" width="1.8" height="1.8" fill="#5578e0"/></svg>
<span class="t" style="left:81.1px;top:478.59px;font-size:11px;line-height:13.2px;color:#000;transform:scaleX(0.9497);">RC1: Principal Stresses σ<sub>3</sub>, Loadin···</span>
<svg class="a" style="left:62px;top:496px" width="15" height="13" viewBox="0 0 15 13"><rect x="0.7" y="0.7" width="13" height="11" fill="#fff" stroke="#5578e0" stroke-width="1.3"/><path d="M3 11 L3 4.6 L6 4.6 L6 7.4 L10.7 7.4 L10.7 11 Z" fill="#5578e0"/><rect x="9.4" y="2.2" width="1.8" height="1.8" fill="#5578e0"/></svg>
<span class="t" style="left:81.1px;top:496.59px;font-size:11px;line-height:13.2px;color:#000;transform:scaleX(0.9811);">RC1: Principal Stresses σ<sub>123</sub>, Loa···</span>
<svg class="a" style="left:62px;top:514px" width="15" height="13" viewBox="0 0 15 13"><rect x="0.7" y="0.7" width="13" height="11" fill="#fff" stroke="#5578e0" stroke-width="1.3"/><path d="M3 11 L3 4.6 L6 4.6 L6 7.4 L10.7 7.4 L10.7 11 Z" fill="#5578e0"/><rect x="9.4" y="2.2" width="1.8" height="1.8" fill="#5578e0"/></svg>
<span class="t" style="left:81.1px;top:514.59px;font-size:11px;line-height:13.2px;color:#000;transform:scaleX(0.9685);">RC1: Basic Stresses σ<sub>z</sub>, Loading, ···</span>
<svg class="a" style="left:61px;top:530px" width="17" height="17" viewBox="0 0 17 17"><path d="M0.8 0.6 L12.2 0.6 L15.6 4 L15.6 16.4 L0.8 16.4 Z" fill="#fff" stroke="#a9a9a9" stroke-width="1"/><path d="M12.2 0.6 L12.2 4 L15.6 4 Z" fill="#e8eef6" stroke="#a9b9cc" stroke-width="0.6"/><rect x="2.8" y="2.8" width="10.4" height="7.6" fill="#cfe0f7" stroke="#4a74de" stroke-width="1.3"/><path d="M4.8 9.6 L4.8 5.8 L6.8 5.8 L6.8 7.6 L10.8 7.6 L10.8 9.6 Z" fill="#4a74de"/><rect x="10" y="4.2" width="1.4" height="1.4" fill="#4a74de"/><path d="M2.6 12.6 H11.6 M2.6 14.6 H13.6" stroke="#bdbdbd" stroke-width="1"/></svg>
<span class="t" style="left:81.1px;top:532.59px;font-size:11px;line-height:13.2px;color:#000;transform:scaleX(0.9640);">RC1: Global Deformations u<sub>Z</sub>, Loa···</span>
<svg class="a" style="left:62px;top:550px" width="15" height="13" viewBox="0 0 15 13"><rect x="0.7" y="0.7" width="13" height="11" fill="#fff" stroke="#5578e0" stroke-width="1.3"/><path d="M3 11 L3 4.6 L6 4.6 L6 7.4 L10.7 7.4 L10.7 11 Z" fill="#5578e0"/><rect x="9.4" y="2.2" width="1.8" height="1.8" fill="#5578e0"/></svg>
<span class="t" style="left:81.1px;top:550.59px;font-size:11px;line-height:13.2px;color:#000;transform:scaleX(0.9640);">RC1: Global Deformations u<sub>Z</sub>, Loa···</span>
<svg class="a" style="left:62px;top:568px" width="15" height="13" viewBox="0 0 15 13"><rect x="0.7" y="0.7" width="13" height="11" fill="#fff" stroke="#5578e0" stroke-width="1.3"/><path d="M3 11 L3 4.6 L6 4.6 L6 7.4 L10.7 7.4 L10.7 11 Z" fill="#5578e0"/><rect x="9.4" y="2.2" width="1.8" height="1.8" fill="#5578e0"/></svg>
<span class="t" style="left:81.1px;top:568.59px;font-size:11px;line-height:13.2px;color:#000;transform:scaleX(0.9640);">RC1: Global Deformations u<sub>Z</sub>, Loa···</span>
<svg class="a" style="left:61px;top:584px" width="17" height="17" viewBox="0 0 17 17"><path d="M0.8 0.6 L12.2 0.6 L15.6 4 L15.6 16.4 L0.8 16.4 Z" fill="#fff" stroke="#a9a9a9" stroke-width="1"/><path d="M12.2 0.6 L12.2 4 L15.6 4 Z" fill="#e8eef6" stroke="#a9b9cc" stroke-width="0.6"/><rect x="2.8" y="2.8" width="10.4" height="7.6" fill="#cfe0f7" stroke="#4a74de" stroke-width="1.3"/><path d="M4.8 9.6 L4.8 5.8 L6.8 5.8 L6.8 7.6 L10.8 7.6 L10.8 9.6 Z" fill="#4a74de"/><rect x="10" y="4.2" width="1.4" height="1.4" fill="#4a74de"/><path d="M2.6 12.6 H11.6 M2.6 14.6 H13.6" stroke="#bdbdbd" stroke-width="1"/></svg>
<span class="t" style="left:81.1px;top:586.59px;font-size:11px;line-height:13.2px;color:#000;transform:scaleX(1.0155);">RC1: , Loading, Imperfections, I...</span>
<svg class="a" style="left:62px;top:604px" width="15" height="13" viewBox="0 0 15 13"><rect x="0.7" y="0.7" width="13" height="11" fill="#fff" stroke="#5578e0" stroke-width="1.3"/><path d="M3 11 L3 4.6 L6 4.6 L6 7.4 L10.7 7.4 L10.7 11 Z" fill="#5578e0"/><rect x="9.4" y="2.2" width="1.8" height="1.8" fill="#5578e0"/></svg>
<span class="t" style="left:81.1px;top:604.59px;font-size:11px;line-height:13.2px;color:#000;transform:scaleX(0.9700);">Result Diagrams - Result Section ...</span>
<svg class="a" style="left:62px;top:622px" width="15" height="13" viewBox="0 0 15 13"><rect x="0.7" y="0.7" width="13" height="11" fill="#fff" stroke="#5578e0" stroke-width="1.3"/><path d="M3 11 L3 4.6 L6 4.6 L6 7.4 L10.7 7.4 L10.7 11 Z" fill="#5578e0"/><rect x="9.4" y="2.2" width="1.8" height="1.8" fill="#5578e0"/></svg>
<span class="t" style="left:81.1px;top:622.59px;font-size:11px;line-height:13.2px;color:#000;transform:scaleX(1.0155);">RC1: , Loading, Imperfections, I...</span>
<svg class="a" style="left:62px;top:640px" width="15" height="13" viewBox="0 0 15 13"><rect x="0.7" y="0.7" width="13" height="11" fill="#fff" stroke="#5578e0" stroke-width="1.3"/><path d="M3 11 L3 4.6 L6 4.6 L6 7.4 L10.7 7.4 L10.7 11 Z" fill="#5578e0"/><rect x="9.4" y="2.2" width="1.8" height="1.8" fill="#5578e0"/></svg>
<span class="t" style="left:81.1px;top:640.59px;font-size:11px;line-height:13.2px;color:#000;transform:scaleX(0.9700);">Result Diagrams - Result Section ...</span>
<div class="a" id="split"></div><div class="a" id="main"></div>
<svg class="page" style="left:291px" width="614" height="868" viewBox="291 196 614 868" font-family="'Liberation Sans', sans-serif"><ellipse cx="476" cy="244.6" rx="24.3" ry="25.6" fill="#1b2f7e"/><rect x="459" y="232.0" width="31.4" height="9.6" fill="#fff"/><rect x="459" y="244.0" width="31.4" height="3.8" fill="#fff"/><path d="M469.4 233.0 V246.6 M469.09999999999997 233.4 L460.8 241.4 M470.4 233.6 L478.2 241.4 M470.59999999999997 233.4 L487.6 241.4" stroke="#1b2f7e" stroke-width="1.2" fill="none"/><text x="459.20" y="257.80" font-size="10" textLength="31.00" lengthAdjust="spacingAndGlyphs" font-weight="bold" fill="#fff">Dlubal</text><rect x="450" y="225" width="1.9" height="40" fill="#fff"/><text x="335.00" y="272.00" font-size="6.8" textLength="60.00" lengthAdjust="spacingAndGlyphs" fill="#222" stroke="#222" stroke-width="0.22">Tel.: +49 9673 9203 - 0</text><path d="M334.5 285 H876" stroke="#333" stroke-width="1.3"/><path d="M514.5 219 V285 M750 219 V285" stroke="#222" stroke-width="1.1"/><text x="526.00" y="227.00" font-size="6.6" textLength="20.00" lengthAdjust="spacingAndGlyphs" font-weight="bold" fill="#222" stroke="#222" stroke-width="0.22">Model:</text><rect x="552" y="219.6" width="186" height="9.6" fill="#e1f0fb"/><rect x="552" y="232" width="186" height="9.8" fill="#e1f0fb"/><text x="555.50" y="227.00" font-size="6.9" textLength="72.50" lengthAdjust="spacingAndGlyphs" font-weight="bold" fill="#222" stroke="#222" stroke-width="0.22">Webinarmodell_GA-1_all</text><text x="555.50" y="239.40" font-size="6.9" textLength="55.50" lengthAdjust="spacingAndGlyphs" font-weight="bold" fill="#222" stroke="#222" stroke-width="0.22">Stahlbetongebäude</text><text x="762.00" y="227.00" font-size="6.8" textLength="12.00" lengthAdjust="spacingAndGlyphs" fill="#222" stroke="#222" stroke-width="0.22">Date</text><rect x="779" y="219.6" width="37" height="9.8" fill="#e1f0fb"/><text x="797.50" y="227.00" font-size="6.8" textLength="24.00" lengthAdjust="spacingAndGlyphs" fill="#222" text-anchor="middle" stroke="#222" stroke-width="0.22">5.4.2022</text><text x="822.00" y="227.00" font-size="6.8" textLength="12.50" lengthAdjust="spacingAndGlyphs" fill="#222" stroke="#222" stroke-width="0.22">Page</text><rect x="839" y="219.6" width="36.5" height="9.8" fill="#e1f0fb"/><rect x="839" y="232.4" width="36.5" height="9.8" fill="#e1f0fb"/><text x="857.30" y="227.00" font-size="6.8" textLength="14.00" lengthAdjust="spacingAndGlyphs" fill="#222" text-anchor="middle" stroke="#222" stroke-width="0.22">8/14</text><text x="822.00" y="240.00" font-size="6.8" textLength="14.00" lengthAdjust="spacingAndGlyphs" fill="#222" stroke="#222" stroke-width="0.22">Sheet</text><text x="857.30" y="240.00" font-size="6.8" textLength="3.29" lengthAdjust="spacingAndGlyphs" fill="#222" text-anchor="middle" stroke="#222" stroke-width="0.22">1</text><rect x="761.3" y="251.3" width="114" height="24.6" fill="#fff" stroke="#e4f1fb" stroke-width="1"/><text x="819.50" y="267.00" font-size="8.6" textLength="30.00" lengthAdjust="spacingAndGlyphs" font-weight="bold" fill="#111" text-anchor="middle" stroke="#111" stroke-width="0.3">MODEL</text><rect x="335" y="305" width="26" height="11" fill="#e0891c"/><text x="338.00" y="312.80" font-size="6" textLength="20.00" lengthAdjust="spacingAndGlyphs" font-weight="bold" fill="#fff">Graphic</text><text><tspan x="371.50" y="315.00" font-size="10.6" textLength="92.30" lengthAdjust="spacingAndGlyphs" font-weight="bold" stroke="#000" stroke-width="0.42">LC5: BASIC STRESSES</tspan> <tspan x="467.30" y="315.60" font-size="10" textLength="6.00" lengthAdjust="spacingAndGlyphs" font-style="italic" stroke="#000" stroke-width="0.42">σ</tspan> <tspan x="473.30" y="316.60" font-size="5.5" textLength="3.00" lengthAdjust="spacingAndGlyphs" font-weight="bold" stroke="#000" stroke-width="0.22">z</tspan> <tspan x="476.60" y="315.00" font-size="10.6" textLength="2.56" lengthAdjust="spacingAndGlyphs" font-weight="bold" stroke="#000" stroke-width="0.42">,</tspan> <tspan x="481.90" y="315.00" font-size="10.6" textLength="278.20" lengthAdjust="spacingAndGlyphs" font-weight="bold" stroke="#000" stroke-width="0.42">LOADING, IMPERFECTIONS, IN AXONOMETRIC DIRECTION BY</tspan></text><text x="371.50" y="326.00" font-size="10.6" textLength="38.00" lengthAdjust="spacingAndGlyphs" font-weight="bold" stroke="#000" stroke-width="0.42">DEFAULT</text><text x="876.00" y="314.00" font-size="10.4" textLength="65.50" lengthAdjust="spacingAndGlyphs" font-weight="bold" text-anchor="end" stroke="#000" stroke-width="0.42">Static Analysis</text><rect x="334.6" y="336.5" width="451" height="317.6" fill="#fff" stroke="#a6a6a6"/><path d="M357.3 449.30 L613.6 487.90 L761.7 421.30 L761.7 431.25 L613.6 496.95 L357.3 459.05 Z" fill="#b40000"/><path d="M357.3 458.60 L613.6 496.50 L761.7 430.80 L761.7 442.15 L613.6 509.05 L357.3 468.85 Z" fill="#ff0000"/><path d="M357.3 468.40 L613.6 508.60 L761.7 441.70 L761.7 454.20 L613.6 515.85 L415.0 492.95 L357.3 478.95 Z" fill="#ffa500"/><path d="M357.3 478.50 L415.0 492.50 L613.6 515.40 L761.7 453.75 L761.7 467.15 L628.8 523.45 L613.6 525.45 L560.0 520.45 L495.0 511.75 L357.3 492.95 Z" fill="#d2d200"/><path d="M357.3 492.50 L495.0 511.30 L560.0 520.00 L613.6 525.00 L628.8 523.00 L761.7 466.70 L761.7 486.95 L613.6 546.45 L580.0 542.95 L557.5 541.75 L520.0 534.85 L357.3 508.05 Z" fill="#ffff00"/><path d="M357.3 507.60 L520.0 534.40 L557.5 541.30 L580.0 542.50 L613.6 546.00 L761.7 486.50 L761.7 505.65 L620.0 562.45 L613.6 566.25 L357.3 529.05 Z" fill="#00ff00"/><path d="M357.3 528.60 L613.6 565.80 L620.0 562.00 L761.7 505.20 L761.7 512.95 L613.6 573.65 L357.3 537.95 Z" fill="#00e47a"/><path d="M357.3 537.50 L613.6 573.20 L761.7 512.50 L761.7 527.15 L613.6 589.05 L357.3 552.45 Z" fill="#00f2f2"/><path d="M357.3 552.00 L613.6 588.60 L761.7 526.70 L761.7 539.65 L613.6 602.45 L357.3 565.95 Z" fill="#009bff"/><path d="M357.3 565.50 L613.6 602.00 L761.7 539.20 L761.7 553.55 L613.6 615.95 L357.3 579.25 Z" fill="#0000ff"/><path d="M357.3 578.80 L613.6 615.50 L761.7 553.10 L761.7 566.05 L613.6 632.85 L357.3 594.85 Z" fill="#0000a0"/><path d="M357.3 478.50 L415.0 492.50 L613.6 515.40 L761.7 453.75" fill="none" stroke="#555" stroke-width="0.35" opacity="0.6"/><path d="M357.3 492.50 L495.0 511.30 L560.0 520.00 L613.6 525.00 L628.8 523.00 L761.7 466.70" fill="none" stroke="#555" stroke-width="0.35" opacity="0.6"/><path d="M357.3 507.60 L520.0 534.40 L557.5 541.30 L580.0 542.50 L613.6 546.00 L761.7 486.50" fill="none" stroke="#555" stroke-width="0.35" opacity="0.6"/><path d="M357.3 528.60 L613.6 565.80 L620.0 562.00 L761.7 505.20" fill="none" stroke="#555" stroke-width="0.35" opacity="0.6"/><path d="M357.3 537.50 L613.6 573.20 L761.7 512.50" fill="none" stroke="#555" stroke-width="0.35" opacity="0.6"/><path d="M357.3 552.00 L613.6 588.60 L761.7 526.70" fill="none" stroke="#555" stroke-width="0.35" opacity="0.6"/><path d="M357.3 450.50 L505.4 384.50 L761.7 422.50 L613.6 489.10 Z" fill="#96231c"/><path d="M354.5 473.4 L357.3 473.2 L613.6 512.6 L761.7 447.6 L766 445.6" fill="none" stroke="#5a5a6a" stroke-width="0.8"/><rect x="349.50" y="442.30" width="2.2" height="36.20" fill="#a8a800"/><rect x="349.50" y="478.50" width="2.2" height="6.30" fill="#ff1010"/><rect x="349.50" y="484.80" width="2.2" height="35.70" fill="#d08a10"/><rect x="349.50" y="520.50" width="2.2" height="65.30" fill="#b4b4b4"/><rect x="654.20" y="494.80" width="2.2" height="24.00" fill="#a8a800"/><rect x="654.20" y="518.80" width="2.2" height="9.20" fill="#ff1010"/><rect x="654.20" y="528.00" width="2.2" height="44.50" fill="#d08a10"/><rect x="654.20" y="572.50" width="2.2" height="65.00" fill="#b4b4b4"/><text x="337.80" y="344.10" font-size="6.8" textLength="57.00" lengthAdjust="spacingAndGlyphs" fill="#222" stroke="#222" stroke-width="0.22">LC5 - Self Weight - Soil</text><text x="337.80" y="351.10" font-size="6.8" textLength="36.00" lengthAdjust="spacingAndGlyphs" fill="#222" stroke="#222" stroke-width="0.22">Static Analysis</text><text><tspan x="337.80" y="360.10" font-size="6.8" textLength="63.95" lengthAdjust="spacingAndGlyphs" fill="#222" stroke="#222" stroke-width="0.22">Solids | Basic Stresses σ</tspan> <tspan x="401.95" y="361.40" font-size="4.22" textLength="1.80" lengthAdjust="spacingAndGlyphs" fill="#222" stroke="#222" stroke-width="0.22">z</tspan> <tspan x="405.65" y="360.10" font-size="6.8" textLength="18.65" lengthAdjust="spacingAndGlyphs" fill="#222" stroke="#222" stroke-width="0.22">[kN/m²]</tspan></text><text><tspan x="337.80" y="367.50" font-size="6.8" textLength="41.30" lengthAdjust="spacingAndGlyphs" fill="#222" stroke="#222" stroke-width="0.22">Displacements u</tspan> <tspan x="379.30" y="368.80" font-size="4.22" textLength="1.73" lengthAdjust="spacingAndGlyphs" fill="#222" stroke="#222" stroke-width="0.22">z</tspan> <tspan x="382.89" y="367.50" font-size="6.8" textLength="12.41" lengthAdjust="spacingAndGlyphs" fill="#222" stroke="#222" stroke-width="0.22">[mm]</tspan></text><text x="783.00" y="344.20" font-size="6.8" textLength="89.00" lengthAdjust="spacingAndGlyphs" fill="#222" text-anchor="end" stroke="#222" stroke-width="0.22">In Axonometric Direction by Default</text><text><tspan x="337.80" y="642.90" font-size="6.8" textLength="38.07" lengthAdjust="spacingAndGlyphs" fill="#222" stroke="#222" stroke-width="0.22">Solids | max σ</tspan> <tspan x="376.07" y="644.20" font-size="4.22" textLength="1.87" lengthAdjust="spacingAndGlyphs" fill="#222" stroke="#222" stroke-width="0.22">z</tspan> <tspan x="379.91" y="642.90" font-size="6.8" textLength="33.72" lengthAdjust="spacingAndGlyphs" fill="#222" stroke="#222" stroke-width="0.22">: -1.4 | min σ</tspan> <tspan x="413.82" y="644.20" font-size="4.22" textLength="1.87" lengthAdjust="spacingAndGlyphs" fill="#222" stroke="#222" stroke-width="0.22">z</tspan> <tspan x="417.66" y="642.90" font-size="6.8" textLength="38.14" lengthAdjust="spacingAndGlyphs" fill="#222" stroke="#222" stroke-width="0.22">: -284.0 kN/m²</tspan></text><text><tspan x="337.80" y="650.50" font-size="6.8" textLength="3.19" lengthAdjust="spacingAndGlyphs" fill="#222" stroke="#222" stroke-width="0.22">u</tspan> <tspan x="341.19" y="651.80" font-size="4.22" textLength="1.78" lengthAdjust="spacingAndGlyphs" fill="#222" stroke="#222" stroke-width="0.22">z</tspan> <tspan x="344.87" y="650.50" font-size="6.8" textLength="50.43" lengthAdjust="spacingAndGlyphs" fill="#222" stroke="#222" stroke-width="0.22">: No selected object</tspan></text><rect x="787" y="336.5" width="88.6" height="167" fill="#fff" stroke="#a6a6a6" stroke-width="1"/><text x="790.80" y="345.40" font-size="6.8" textLength="82.00" lengthAdjust="spacingAndGlyphs" fill="#222" stroke="#222" stroke-width="0.22">Solids | Stresses | Basic Stresses</text><text><tspan x="790.80" y="353.80" font-size="6.8" textLength="3.56" lengthAdjust="spacingAndGlyphs" fill="#222" stroke="#222" stroke-width="0.22">σ</tspan> <tspan x="794.56" y="355.10" font-size="4.22" textLength="1.79" lengthAdjust="spacingAndGlyphs" fill="#222" stroke="#222" stroke-width="0.22">z</tspan> <tspan x="798.24" y="353.80" font-size="6.8" textLength="18.56" lengthAdjust="spacingAndGlyphs" fill="#222" stroke="#222" stroke-width="0.22">[kN/m²]</tspan></text><rect x="816" y="361.90" width="23.4" height="12.399999999999999" fill="#b40000"/><rect x="816" y="374.10" width="23.4" height="12.399999999999999" fill="#ff0000"/><path d="M816 374.10 h23.4" stroke="#fff" stroke-width="0.5" opacity="0.7"/><rect x="816" y="386.30" width="23.4" height="12.399999999999999" fill="#ffa500"/><path d="M816 386.30 h23.4" stroke="#fff" stroke-width="0.5" opacity="0.7"/><rect x="816" y="398.50" width="23.4" height="12.399999999999999" fill="#d2d200"/><path d="M816 398.50 h23.4" stroke="#fff" stroke-width="0.5" opacity="0.7"/><rect x="816" y="410.70" width="23.4" height="12.399999999999999" fill="#ffff00"/><path d="M816 410.70 h23.4" stroke="#fff" stroke-width="0.5" opacity="0.7"/><rect x="816" y="422.90" width="23.4" height="12.399999999999999" fill="#00ff00"/><path d="M816 422.90 h23.4" stroke="#fff" stroke-width="0.5" opacity="0.7"/><rect x="816" y="435.10" width="23.4" height="12.399999999999999" fill="#00e47a"/><path d="M816 435.10 h23.4" stroke="#fff" stroke-width="0.5" opacity="0.7"/><rect x="816" y="447.30" width="23.4" height="12.399999999999999" fill="#00f2f2"/><path d="M816 447.30 h23.4" stroke="#fff" stroke-width="0.5" opacity="0.7"/><rect x="816" y="459.50" width="23.4" height="12.399999999999999" fill="#009bff"/><path d="M816 459.50 h23.4" stroke="#fff" stroke-width="0.5" opacity="0.7"/><rect x="816" y="471.70" width="23.4" height="12.399999999999999" fill="#0000ff"/><path d="M816 471.70 h23.4" stroke="#fff" stroke-width="0.5" opacity="0.7"/><rect x="816" y="483.90" width="23.4" height="12.399999999999999" fill="#0000a0"/><path d="M816 483.90 h23.4" stroke="#fff" stroke-width="0.5" opacity="0.7"/><text x="813.40" y="364.50" font-size="6.8" textLength="10.43" lengthAdjust="spacingAndGlyphs" fill="#222" text-anchor="end" stroke="#222" stroke-width="0.22">-1.4</text><text x="813.40" y="376.70" font-size="6.8" textLength="13.79" lengthAdjust="spacingAndGlyphs" fill="#222" text-anchor="end" stroke="#222" stroke-width="0.22">-27.1</text><text x="813.40" y="388.90" font-size="6.8" textLength="13.79" lengthAdjust="spacingAndGlyphs" fill="#222" text-anchor="end" stroke="#222" stroke-width="0.22">-52.8</text><text x="813.40" y="401.10" font-size="6.8" textLength="13.79" lengthAdjust="spacingAndGlyphs" fill="#222" text-anchor="end" stroke="#222" stroke-width="0.22">-78.5</text><text x="813.40" y="413.30" font-size="6.8" textLength="17.16" lengthAdjust="spacingAndGlyphs" fill="#222" text-anchor="end" stroke="#222" stroke-width="0.22">-104.2</text><text x="813.40" y="425.50" font-size="6.8" textLength="17.16" lengthAdjust="spacingAndGlyphs" fill="#222" text-anchor="end" stroke="#222" stroke-width="0.22">-129.8</text><text x="813.40" y="437.70" font-size="6.8" textLength="17.16" lengthAdjust="spacingAndGlyphs" fill="#222" text-anchor="end" stroke="#222" stroke-width="0.22">-155.5</text><text x="813.40" y="449.90" font-size="6.8" textLength="17.16" lengthAdjust="spacingAndGlyphs" fill="#222" text-anchor="end" stroke="#222" stroke-width="0.22">-181.2</text><text x="813.40" y="462.10" font-size="6.8" textLength="17.16" lengthAdjust="spacingAndGlyphs" fill="#222" text-anchor="end" stroke="#222" stroke-width="0.22">-206.9</text><text x="813.40" y="474.30" font-size="6.8" textLength="17.16" lengthAdjust="spacingAndGlyphs" fill="#222" text-anchor="end" stroke="#222" stroke-width="0.22">-232.6</text><text x="813.40" y="486.50" font-size="6.8" textLength="17.16" lengthAdjust="spacingAndGlyphs" fill="#222" text-anchor="end" stroke="#222" stroke-width="0.22">-258.3</text><text x="813.40" y="498.70" font-size="6.8" textLength="17.16" lengthAdjust="spacingAndGlyphs" fill="#222" text-anchor="end" stroke="#222" stroke-width="0.22">-284.0</text><text x="865.00" y="370.80" font-size="6.8" textLength="21.51" lengthAdjust="spacingAndGlyphs" fill="#222" text-anchor="end" stroke="#222" stroke-width="0.22">11.08 %</text><text x="865.00" y="383.00" font-size="6.8" textLength="18.63" lengthAdjust="spacingAndGlyphs" fill="#222" text-anchor="end" stroke="#222" stroke-width="0.22">1.45 %</text><text x="865.00" y="395.20" font-size="6.8" textLength="21.51" lengthAdjust="spacingAndGlyphs" fill="#222" text-anchor="end" stroke="#222" stroke-width="0.22">11.24 %</text><text x="865.00" y="407.40" font-size="6.8" textLength="21.96" lengthAdjust="spacingAndGlyphs" fill="#222" text-anchor="end" stroke="#222" stroke-width="0.22">30.36 %</text><text x="865.00" y="419.60" font-size="6.8" textLength="18.63" lengthAdjust="spacingAndGlyphs" fill="#222" text-anchor="end" stroke="#222" stroke-width="0.22">4.19 %</text><text x="865.00" y="431.80" font-size="6.8" textLength="18.63" lengthAdjust="spacingAndGlyphs" fill="#222" text-anchor="end" stroke="#222" stroke-width="0.22">8.47 %</text><text x="865.00" y="444.00" font-size="6.8" textLength="21.96" lengthAdjust="spacingAndGlyphs" fill="#222" text-anchor="end" stroke="#222" stroke-width="0.22">15.24 %</text><text x="865.00" y="456.20" font-size="6.8" textLength="18.19" lengthAdjust="spacingAndGlyphs" fill="#222" text-anchor="end" stroke="#222" stroke-width="0.22">2.11 %</text><text x="865.00" y="468.40" font-size="6.8" textLength="18.63" lengthAdjust="spacingAndGlyphs" fill="#222" text-anchor="end" stroke="#222" stroke-width="0.22">1.84 %</text><text x="865.00" y="480.60" font-size="6.8" textLength="18.63" lengthAdjust="spacingAndGlyphs" fill="#222" text-anchor="end" stroke="#222" stroke-width="0.22">1.88 %</text><text x="865.00" y="492.80" font-size="6.8" textLength="21.96" lengthAdjust="spacingAndGlyphs" fill="#222" text-anchor="end" stroke="#222" stroke-width="0.22">12.13 %</text><rect x="335.6" y="669.6" width="26" height="10" fill="#e6f1fb"/><text x="339.00" y="676.80" font-size="6" textLength="19.50" lengthAdjust="spacingAndGlyphs" font-weight="bold" fill="#274a9e">Graphic</text><text><tspan x="371.40" y="679.00" font-size="10.6" textLength="95.00" lengthAdjust="spacingAndGlyphs" font-weight="bold" stroke="#000" stroke-width="0.42">CO2: BASIC STRESSES</tspan> <tspan x="470.20" y="679.60" font-size="10" textLength="6.00" lengthAdjust="spacingAndGlyphs" font-style="italic" stroke="#000" stroke-width="0.42">σ</tspan> <tspan x="476.20" y="680.60" font-size="5.5" textLength="3.00" lengthAdjust="spacingAndGlyphs" font-weight="bold" stroke="#000" stroke-width="0.22">z</tspan> <tspan x="479.60" y="679.00" font-size="10.6" textLength="2.56" lengthAdjust="spacingAndGlyphs" font-weight="bold" stroke="#000" stroke-width="0.42">,</tspan> <tspan x="485.70" y="679.00" font-size="10.6" textLength="278.00" lengthAdjust="spacingAndGlyphs" font-weight="bold" stroke="#000" stroke-width="0.42">LOADING, IMPERFECTIONS, IN AXONOMETRIC DIRECTION BY</tspan></text><text x="371.50" y="690.00" font-size="10.6" textLength="38.00" lengthAdjust="spacingAndGlyphs" font-weight="bold" stroke="#000" stroke-width="0.42">DEFAULT</text><text x="876.00" y="678.00" font-size="10.4" textLength="65.50" lengthAdjust="spacingAndGlyphs" font-weight="bold" text-anchor="end" stroke="#000" stroke-width="0.42">Static Analysis</text><rect x="334.6" y="700.5" width="451" height="317.6" fill="#fff" stroke="#a6a6a6"/><path d="M357.3 813.90 L613.6 851.80 L761.7 785.80 L761.7 800.05 L613.6 864.65 L357.3 826.05 Z" fill="#b40000"/><path d="M357.3 825.60 L613.6 864.20 L761.7 799.60 L761.7 810.65 L613.6 875.85 L357.3 835.65 Z" fill="#ff0000"/><path d="M357.3 835.20 L613.6 875.40 L761.7 810.20 L761.7 822.85 L613.6 878.95 L357.3 847.55 Z" fill="#ffa500"/><path d="M357.3 847.10 L613.6 878.50 L761.7 822.40 L761.7 837.45 L613.6 894.85 L393.3 867.65 L357.3 857.15 Z" fill="#d2d200"/><path d="M357.3 856.70 L393.3 867.20 L613.6 894.40 L761.7 837.00 L761.7 854.45 L613.6 913.55 L560.0 907.95 L357.3 876.25 Z" fill="#ffff00"/><path d="M357.3 875.80 L560.0 907.50 L613.6 913.10 L761.7 854.00 L761.7 868.45 L613.6 930.75 L357.3 892.55 Z" fill="#00ff00"/><path d="M357.3 892.10 L613.6 930.30 L761.7 868.00 L761.7 881.45 L613.6 942.95 L357.3 906.05 Z" fill="#00e47a"/><path d="M357.3 905.60 L613.6 942.50 L761.7 881.00 L761.7 893.45 L613.6 956.45 L357.3 918.85 Z" fill="#00f2f2"/><path d="M357.3 918.40 L613.6 956.00 L761.7 893.00 L761.7 906.45 L613.6 969.35 L357.3 932.25 Z" fill="#009bff"/><path d="M357.3 931.80 L613.6 968.90 L761.7 906.00 L761.7 919.45 L613.6 982.75 L357.3 945.35 Z" fill="#0000ff"/><path d="M357.3 944.90 L613.6 982.30 L761.7 919.00 L761.7 930.45 L613.6 996.75 L357.3 959.15 Z" fill="#0000a0"/><path d="M357.3 847.10 L613.6 878.50 L761.7 822.40" fill="none" stroke="#555" stroke-width="0.35" opacity="0.6"/><path d="M357.3 856.70 L393.3 867.20 L613.6 894.40 L761.7 837.00" fill="none" stroke="#555" stroke-width="0.35" opacity="0.6"/><path d="M357.3 875.80 L560.0 907.50 L613.6 913.10 L761.7 854.00" fill="none" stroke="#555" stroke-width="0.35" opacity="0.6"/><path d="M357.3 892.10 L613.6 930.30 L761.7 868.00" fill="none" stroke="#555" stroke-width="0.35" opacity="0.6"/><path d="M357.3 905.60 L613.6 942.50 L761.7 881.00" fill="none" stroke="#555" stroke-width="0.35" opacity="0.6"/><path d="M357.3 918.40 L613.6 956.00 L761.7 893.00" fill="none" stroke="#555" stroke-width="0.35" opacity="0.6"/><path d="M357.3 815.10 L505.4 748.80 L761.7 787.00 L613.6 853.00 Z" fill="#96231c"/><path d="M354.5 837.6 L357.3 837.4 L613.6 877.6 L761.7 811.6 L766 809.6" fill="none" stroke="#5a5a6a" stroke-width="0.8"/><path d="M378 813.5 L507 757.5 L740 791 L613 846.5 Z" fill="none" stroke="#c89088" stroke-width="0.4" stroke-dasharray="1.5 1" opacity="0.55"/><path d="M361 820 L610 859 L610 989 L361 953 Z M617 859 L758 795 L758 925 L617 990 Z" fill="none" stroke="#d8d8d8" stroke-width="0.4" stroke-dasharray="1.5 1" opacity="0.5"/><path d="M507 803.5 l6 -2.4 l6 1.4 l-5 2.6 Z M517 799.4 l6 -2.2 l6 1.2 l-5 2.4 Z M528 805 L536 801 L541 806 L548 812 Q560 819 574 814.6 L618 796 L622 793 L617 791 L575 808 L552 806 Z" fill="#e8201a" opacity="0.8"/><path d="M505 752 L534 748 L552 757 L552 812.6 L550 812.2 L534.4 806.7 L534.4 786 L501.4 783 L501.4 779 Z" fill="#b89a92" opacity="0.78"/><path d="M552 757 L617 753 L617 794.7 L572 813.5 Q562 817.4 552 812.6 Z" fill="#b9b1ac" opacity="0.9"/><path d="M534 748 L552 757 L617 753 L600 746 Z" fill="#c9c4c0" opacity="0.9"/><path d="M501.4 762.6 L552 772 L617 765.4 M501.4 773 L552 783.6 L617 776 M501.4 782.6 L534.4 785.8 M534.4 796 L552 800.4 L617 785" stroke="#d6d0cc" stroke-width="0.9" fill="none" opacity="0.75"/><path d="M552 757 V812.6 M598 754 V802.6 M534.4 786 V806.7" stroke="#cfc8c4" stroke-width="0.7" fill="none" opacity="0.8"/><path d="M513.3 784 V802.6 M522.5 784.6 V798.6" stroke="#c0aea6" stroke-width="1.8"/><ellipse cx="513.3" cy="803" rx="3.6" ry="1.3" fill="#c8aaa2"/><ellipse cx="522.5" cy="799" rx="3.6" ry="1.3" fill="#c8aaa2"/><path d="M546 724.2 L506.5 742 L506.5 752 L551.8 762 L611 746 L611 734.7 Z" fill="#d3e0f0" opacity="0.7"/><path d="M546.0 724.2L506.5 742.0M551.0 725.0L510.0 742.6M556.0 725.8L513.5 743.3M561.0 726.6L517.0 743.9M566.0 727.4L520.4 744.6M571.0 728.2L523.9 745.2M576.0 729.0L527.4 745.8M581.0 729.9L530.9 746.5M586.0 730.7L534.4 747.1M591.0 731.5L537.9 747.7M596.0 732.3L541.3 748.4M601.0 733.1L544.8 749.0M606.0 733.9L548.3 749.7M611.0 734.7L551.8 750.3M546.0 724.2L611.0 734.7M541.6 726.2L604.4 736.4M537.2 728.2L597.8 738.2M532.8 730.1L591.3 739.9M528.4 732.1L584.7 741.6M524.1 734.1L578.1 743.4M519.7 736.1L571.5 745.1M515.3 738.0L565.0 746.8M510.9 740.0L558.4 748.6M506.5 742.0L551.8 750.3" stroke="#a9c0de" stroke-width="0.5" fill="none"/><path d="M544.5 724.8L547.5 724.8L546.6 730.2ZM544.5 735.2L547.5 735.2L546.6 740.6ZM540.1 726.8L543.1 726.8L542.2 732.2ZM540.1 737.2L543.1 737.2L542.2 742.6ZM535.7 728.8L538.7 728.8L537.8 734.2ZM535.7 739.2L538.7 739.2L537.8 744.6ZM531.3 730.7L534.3 730.7L533.4 736.1ZM531.3 741.1L534.3 741.1L533.4 746.5ZM526.9 732.7L529.9 732.7L529.0 738.1ZM526.9 743.1L529.9 743.1L529.0 748.5ZM522.6 734.7L525.6 734.7L524.7 740.1ZM522.6 745.1L525.6 745.1L524.7 750.5ZM518.2 736.7L521.2 736.7L520.3 742.1ZM518.2 747.1L521.2 747.1L520.3 752.5ZM513.8 738.6L516.8 738.6L515.9 744.0ZM513.8 749.0L516.8 749.0L515.9 754.4ZM509.4 740.6L512.4 740.6L511.5 746.0ZM509.4 751.0L512.4 751.0L511.5 756.4ZM505.0 742.6L508.0 742.6L507.1 748.0ZM505.0 753.0L508.0 753.0L507.1 758.4ZM549.5 725.6L552.5 725.6L551.6 731.0ZM544.9 727.6L547.9 727.6L547.0 733.0ZM540.4 729.5L543.4 729.5L542.5 734.9ZM522.2 737.4L525.2 737.4L524.3 742.8ZM508.5 743.2L511.5 743.2L510.6 748.6ZM508.5 753.6L511.5 753.6L510.6 759.0ZM554.5 726.4L557.5 726.4L556.6 731.8ZM549.8 728.4L552.8 728.4L551.9 733.8ZM545.0 730.3L548.0 730.3L547.1 735.7ZM526.1 738.1L529.1 738.1L528.2 743.5ZM512.0 743.9L515.0 743.9L514.1 749.3ZM512.0 754.3L515.0 754.3L514.1 759.7ZM559.5 727.2L562.5 727.2L561.6 732.6ZM554.6 729.1L557.6 729.1L556.7 734.5ZM549.7 731.1L552.7 731.1L551.8 736.5ZM530.1 738.8L533.1 738.8L532.2 744.2ZM515.5 744.5L518.5 744.5L517.6 749.9ZM515.5 754.9L518.5 754.9L517.6 760.3ZM564.5 728.0L567.5 728.0L566.6 733.4ZM559.4 729.9L562.4 729.9L561.5 735.3ZM554.4 731.8L557.4 731.8L556.5 737.2ZM534.1 739.4L537.1 739.4L536.2 744.8ZM518.9 745.2L521.9 745.2L521.0 750.6ZM518.9 755.6L521.9 755.6L521.0 761.0ZM569.5 728.8L572.5 728.8L571.6 734.2ZM564.3 730.7L567.3 730.7L566.4 736.1ZM559.0 732.6L562.0 732.6L561.1 738.0ZM538.1 740.1L541.1 740.1L540.2 745.5ZM522.4 745.8L525.4 745.8L524.5 751.2ZM522.4 756.2L525.4 756.2L524.5 761.6ZM574.5 729.6L577.5 729.6L576.6 735.0ZM569.1 731.5L572.1 731.5L571.2 736.9ZM563.7 733.4L566.7 733.4L565.8 738.8ZM542.1 740.8L545.1 740.8L544.2 746.2ZM525.9 746.4L528.9 746.4L528.0 751.8ZM525.9 756.8L528.9 756.8L528.0 762.2ZM579.5 730.5L582.5 730.5L581.6 735.9ZM573.9 732.3L576.9 732.3L576.0 737.7ZM568.4 734.1L571.4 734.1L570.5 739.5ZM546.1 741.5L549.1 741.5L548.2 746.9ZM529.4 747.1L532.4 747.1L531.5 752.5ZM529.4 757.5L532.4 757.5L531.5 762.9ZM584.5 731.3L587.5 731.3L586.6 736.7ZM578.8 733.1L581.8 733.1L580.9 738.5ZM573.0 734.9L576.0 734.9L575.1 740.3ZM550.1 742.2L553.1 742.2L552.2 747.6ZM532.9 747.7L535.9 747.7L535.0 753.1ZM532.9 758.1L535.9 758.1L535.0 763.5ZM589.5 732.1L592.5 732.1L591.6 737.5ZM583.6 733.9L586.6 733.9L585.7 739.3ZM577.7 735.7L580.7 735.7L579.8 741.1ZM554.1 742.9L557.1 742.9L556.2 748.3ZM536.4 748.3L539.4 748.3L538.5 753.7ZM536.4 758.7L539.4 758.7L538.5 764.1ZM594.5 732.9L597.5 732.9L596.6 738.3ZM588.4 734.7L591.4 734.7L590.5 740.1ZM582.4 736.5L585.4 736.5L584.5 741.9ZM558.1 743.6L561.1 743.6L560.2 749.0ZM539.8 749.0L542.8 749.0L541.9 754.4ZM539.8 759.4L542.8 759.4L541.9 764.8ZM599.5 733.7L602.5 733.7L601.6 739.1ZM593.3 735.5L596.3 735.5L595.4 740.9ZM587.0 737.2L590.0 737.2L589.1 742.6ZM562.1 744.3L565.1 744.3L564.2 749.7ZM543.3 749.6L546.3 749.6L545.4 755.0ZM543.3 760.0L546.3 760.0L545.4 765.4ZM604.5 734.5L607.5 734.5L606.6 739.9ZM598.1 736.2L601.1 736.2L600.2 741.6ZM591.7 738.0L594.7 738.0L593.8 743.4ZM566.0 745.0L569.0 745.0L568.1 750.4ZM546.8 750.3L549.8 750.3L548.9 755.7ZM546.8 760.7L549.8 760.7L548.9 766.1ZM609.5 735.3L612.5 735.3L611.6 740.7ZM609.5 745.7L612.5 745.7L611.6 751.1ZM602.9 737.0L605.9 737.0L605.0 742.4ZM602.9 747.4L605.9 747.4L605.0 752.8ZM596.3 738.8L599.3 738.8L598.4 744.2ZM596.3 749.2L599.3 749.2L598.4 754.6ZM589.8 740.5L592.8 740.5L591.9 745.9ZM589.8 750.9L592.8 750.9L591.9 756.3ZM583.2 742.2L586.2 742.2L585.3 747.6ZM583.2 752.6L586.2 752.6L585.3 758.0ZM576.6 744.0L579.6 744.0L578.7 749.4ZM576.6 754.4L579.6 754.4L578.7 759.8ZM570.0 745.7L573.0 745.7L572.1 751.1ZM570.0 756.1L573.0 756.1L572.1 761.5ZM563.5 747.4L566.5 747.4L565.6 752.8ZM563.5 757.8L566.5 757.8L565.6 763.2ZM556.9 749.2L559.9 749.2L559.0 754.6ZM556.9 759.6L559.9 759.6L559.0 765.0ZM550.3 750.9L553.3 750.9L552.4 756.3ZM550.3 761.3L553.3 761.3L552.4 766.7ZM505.0 748.0L508.0 748.0L507.1 753.4ZM509.1 748.8L512.1 748.8L511.2 754.2ZM513.2 749.5L516.2 749.5L515.3 754.9ZM517.4 750.3L520.4 750.3L519.5 755.7ZM521.5 751.0L524.5 751.0L523.6 756.4ZM525.6 751.8L528.6 751.8L527.7 757.2ZM529.7 752.5L532.7 752.5L531.8 757.9ZM533.8 753.3L536.8 753.3L535.9 758.7ZM537.9 754.0L540.9 754.0L540.0 759.4ZM542.1 754.8L545.1 754.8L544.2 760.2ZM546.2 755.5L549.2 755.5L548.3 760.9ZM550.3 756.3L553.3 756.3L552.4 761.7ZM550.3 756.3L553.3 756.3L552.4 761.7ZM554.9 755.1L557.9 755.1L557.0 760.5ZM559.4 753.9L562.4 753.9L561.5 759.3ZM564.0 752.7L567.0 752.7L566.1 758.1ZM568.5 751.5L571.5 751.5L570.6 756.9ZM573.1 750.3L576.1 750.3L575.2 755.7ZM577.6 749.1L580.6 749.1L579.7 754.5ZM582.2 747.9L585.2 747.9L584.3 753.3ZM586.7 746.7L589.7 746.7L588.8 752.1ZM591.3 745.5L594.3 745.5L593.4 750.9ZM595.8 744.3L598.8 744.3L597.9 749.7ZM600.4 743.1L603.4 743.1L602.5 748.5ZM604.9 741.9L607.9 741.9L607.0 747.3ZM609.5 740.7L612.5 740.7L611.6 746.1ZM505.0 758.4L508.0 758.4L507.1 763.8ZM509.1 759.2L512.1 759.2L511.2 764.6ZM513.2 759.9L516.2 759.9L515.3 765.3ZM517.4 760.7L520.4 760.7L519.5 766.1ZM521.5 761.4L524.5 761.4L523.6 766.8ZM525.6 762.2L528.6 762.2L527.7 767.6ZM529.7 762.9L532.7 762.9L531.8 768.3ZM533.8 763.7L536.8 763.7L535.9 769.1ZM537.9 764.4L540.9 764.4L540.0 769.8ZM542.1 765.2L545.1 765.2L544.2 770.6ZM546.2 765.9L549.2 765.9L548.3 771.3ZM550.3 766.7L553.3 766.7L552.4 772.1ZM550.6 772.7L553.0 772.7L552.4 777.1ZM555.2 771.5L557.6 771.5L557.0 775.9ZM559.7 770.3L562.1 770.3L561.5 774.7ZM564.3 769.1L566.7 769.1L566.1 773.5ZM573.4 766.7L575.8 766.7L575.2 771.1ZM577.9 765.5L580.3 765.5L579.7 769.9ZM582.5 764.3L584.9 764.3L584.3 768.7ZM587.0 763.1L589.4 763.1L588.8 767.5ZM591.6 761.9L594.0 761.9L593.4 766.3ZM600.7 759.5L603.1 759.5L602.5 763.9ZM605.2 758.3L607.6 758.3L607.0 762.7ZM609.8 757.1L612.2 757.1L611.6 761.5ZM505.0 768.8L508.0 768.8L507.1 774.2ZM509.1 769.6L512.1 769.6L511.2 775.0ZM513.2 770.3L516.2 770.3L515.3 775.7ZM517.4 771.1L520.4 771.1L519.5 776.5ZM521.5 771.8L524.5 771.8L523.6 777.2ZM525.6 772.6L528.6 772.6L527.7 778.0ZM529.7 773.3L532.7 773.3L531.8 778.7ZM550.6 783.1L553.0 783.1L552.4 787.5ZM555.2 781.9L557.6 781.9L557.0 786.3ZM559.7 780.7L562.1 780.7L561.5 785.1ZM564.3 779.5L566.7 779.5L566.1 783.9ZM573.4 777.1L575.8 777.1L575.2 781.5ZM577.9 775.9L580.3 775.9L579.7 780.3ZM582.5 774.7L584.9 774.7L584.3 779.1ZM587.0 773.5L589.4 773.5L588.8 777.9ZM591.6 772.3L594.0 772.3L593.4 776.7ZM600.7 769.9L603.1 769.9L602.5 774.3ZM605.2 768.7L607.6 768.7L607.0 773.1ZM609.8 767.5L612.2 767.5L611.6 771.9ZM533.7 797.0L536.3 797.0L535.6 801.4ZM537.1 797.7L539.7 797.7L539.0 802.1ZM540.4 798.5L543.0 798.5L542.3 802.9ZM543.8 799.2L546.4 799.2L545.7 803.6ZM547.2 799.9L549.8 799.9L549.1 804.3ZM550.5 800.6L553.1 800.6L552.4 805.0ZM553.9 801.4L556.5 801.4L555.8 805.8ZM557.2 802.1L559.8 802.1L559.1 806.5ZM560.6 802.8L563.2 802.8L562.5 807.2ZM564.0 803.5L566.6 803.5L565.9 807.9ZM567.3 804.3L569.9 804.3L569.2 808.7ZM570.7 805.0L573.3 805.0L572.6 809.4ZM546.7 806.0L549.3 806.0L548.6 810.4ZM549.2 806.0L551.8 806.0L551.1 810.4ZM551.6 806.0L554.2 806.0L553.5 810.4ZM554.1 806.0L556.7 806.0L556.0 810.4ZM556.5 806.0L559.1 806.0L558.4 810.4ZM559.0 806.0L561.6 806.0L560.9 810.4ZM561.4 806.0L564.0 806.0L563.3 810.4ZM563.9 806.0L566.5 806.0L565.8 810.4ZM566.3 806.0L568.9 806.0L568.2 810.4ZM568.8 806.0L571.4 806.0L570.7 810.4ZM571.2 806.0L573.8 806.0L573.1 810.4ZM573.7 806.0L576.3 806.0L575.6 810.4Z" fill="#8fb0d9" opacity="0.92"/><text x="536.00" y="781.00" font-size="6.6" textLength="12.85" lengthAdjust="spacingAndGlyphs" fill="#dfe4ee" opacity="0.85">0.90</text><text x="573.00" y="788.60" font-size="6.6" textLength="12.85" lengthAdjust="spacingAndGlyphs" fill="#dfe4ee" opacity="0.85">0.90</text><text x="536.00" y="802.00" font-size="6.6" textLength="12.85" lengthAdjust="spacingAndGlyphs" fill="#dfe4ee" opacity="0.85">0.50</text><text x="573.00" y="808.60" font-size="6.6" textLength="12.85" lengthAdjust="spacingAndGlyphs" fill="#dfe4ee" opacity="0.85">0.50</text><text x="507.00" y="766.00" font-size="6.6" textLength="12.85" lengthAdjust="spacingAndGlyphs" fill="#dfe4ee" opacity="0.85">0.90</text><text x="556.00" y="747.60" font-size="6.6" textLength="12.85" lengthAdjust="spacingAndGlyphs" fill="#dfe4ee" opacity="0.85">0.90</text><rect x="349.60" y="805.90" width="2.2" height="36.40" fill="#a8a800"/><rect x="349.60" y="842.30" width="2.2" height="6.30" fill="#ff1010"/><rect x="349.60" y="848.60" width="2.2" height="35.90" fill="#d08a10"/><rect x="349.60" y="884.50" width="2.2" height="65.10" fill="#b4b4b4"/><rect x="654.30" y="859.00" width="2.2" height="24.00" fill="#a8a800"/><rect x="654.30" y="883.00" width="2.2" height="8.60" fill="#ff1010"/><rect x="654.30" y="891.60" width="2.2" height="44.40" fill="#d08a10"/><rect x="654.30" y="936.00" width="2.2" height="66.00" fill="#b4b4b4"/><text x="337.80" y="708.10" font-size="6.8" textLength="96.00" lengthAdjust="spacingAndGlyphs" fill="#222" stroke="#222" stroke-width="0.22">CO2 - LC1 + LC2 + 0.30 * LC3 + LC5</text><text x="337.80" y="715.10" font-size="6.8" textLength="42.00" lengthAdjust="spacingAndGlyphs" fill="#222" stroke="#222" stroke-width="0.22">Loads [kN/m^2]</text><text x="337.80" y="723.10" font-size="6.8" textLength="36.00" lengthAdjust="spacingAndGlyphs" fill="#222" stroke="#222" stroke-width="0.22">Static Analysis</text><text><tspan x="337.80" y="732.10" font-size="6.8" textLength="63.95" lengthAdjust="spacingAndGlyphs" fill="#222" stroke="#222" stroke-width="0.22">Solids | Basic Stresses σ</tspan> <tspan x="401.95" y="733.40" font-size="4.22" textLength="1.80" lengthAdjust="spacingAndGlyphs" fill="#222" stroke="#222" stroke-width="0.22">z</tspan> <tspan x="405.65" y="732.10" font-size="6.8" textLength="18.65" lengthAdjust="spacingAndGlyphs" fill="#222" stroke="#222" stroke-width="0.22">[kN/m²]</tspan></text><text><tspan x="337.80" y="739.50" font-size="6.8" textLength="41.30" lengthAdjust="spacingAndGlyphs" fill="#222" stroke="#222" stroke-width="0.22">Displacements u</tspan> <tspan x="379.30" y="740.80" font-size="4.22" textLength="1.73" lengthAdjust="spacingAndGlyphs" fill="#222" stroke="#222" stroke-width="0.22">z</tspan> <tspan x="382.89" y="739.50" font-size="6.8" textLength="12.41" lengthAdjust="spacingAndGlyphs" fill="#222" stroke="#222" stroke-width="0.22">[mm]</tspan></text><text x="783.00" y="708.20" font-size="6.8" textLength="89.00" lengthAdjust="spacingAndGlyphs" fill="#222" text-anchor="end" stroke="#222" stroke-width="0.22">In Axonometric Direction by Default</text><text><tspan x="337.80" y="1006.90" font-size="6.8" textLength="38.07" lengthAdjust="spacingAndGlyphs" fill="#222" stroke="#222" stroke-width="0.22">Solids | max σ</tspan> <tspan x="376.07" y="1008.20" font-size="4.22" textLength="1.87" lengthAdjust="spacingAndGlyphs" fill="#222" stroke="#222" stroke-width="0.22">z</tspan> <tspan x="379.91" y="1006.90" font-size="6.8" textLength="33.72" lengthAdjust="spacingAndGlyphs" fill="#222" stroke="#222" stroke-width="0.22">: -8.8 | min σ</tspan> <tspan x="413.82" y="1008.20" font-size="4.22" textLength="1.87" lengthAdjust="spacingAndGlyphs" fill="#222" stroke="#222" stroke-width="0.22">z</tspan> <tspan x="417.66" y="1006.90" font-size="6.8" textLength="38.14" lengthAdjust="spacingAndGlyphs" fill="#222" stroke="#222" stroke-width="0.22">: -288.5 kN/m²</tspan></text><text><tspan x="337.80" y="1014.50" font-size="6.8" textLength="3.19" lengthAdjust="spacingAndGlyphs" fill="#222" stroke="#222" stroke-width="0.22">u</tspan> <tspan x="341.19" y="1015.80" font-size="4.22" textLength="1.78" lengthAdjust="spacingAndGlyphs" fill="#222" stroke="#222" stroke-width="0.22">z</tspan> <tspan x="344.87" y="1014.50" font-size="6.8" textLength="50.43" lengthAdjust="spacingAndGlyphs" fill="#222" stroke="#222" stroke-width="0.22">: No selected object</tspan></text><rect x="787" y="700.5" width="88.6" height="167" fill="#fff" stroke="#a6a6a6" stroke-width="1"/><text x="790.80" y="709.40" font-size="6.8" textLength="82.00" lengthAdjust="spacingAndGlyphs" fill="#222" stroke="#222" stroke-width="0.22">Solids | Stresses | Basic Stresses</text><text><tspan x="790.80" y="717.80" font-size="6.8" textLength="3.56" lengthAdjust="spacingAndGlyphs" fill="#222" stroke="#222" stroke-width="0.22">σ</tspan> <tspan x="794.56" y="719.10" font-size="4.22" textLength="1.79" lengthAdjust="spacingAndGlyphs" fill="#222" stroke="#222" stroke-width="0.22">z</tspan> <tspan x="798.24" y="717.80" font-size="6.8" textLength="18.56" lengthAdjust="spacingAndGlyphs" fill="#222" stroke="#222" stroke-width="0.22">[kN/m²]</tspan></text><rect x="816" y="725.90" width="23.4" height="12.399999999999999" fill="#b40000"/><rect x="816" y="738.10" width="23.4" height="12.399999999999999" fill="#ff0000"/><path d="M816 738.10 h23.4" stroke="#fff" stroke-width="0.5" opacity="0.7"/><rect x="816" y="750.30" width="23.4" height="12.399999999999999" fill="#ffa500"/><path d="M816 750.30 h23.4" stroke="#fff" stroke-width="0.5" opacity="0.7"/><rect x="816" y="762.50" width="23.4" height="12.399999999999999" fill="#d2d200"/><path d="M816 762.50 h23.4" stroke="#fff" stroke-width="0.5" opacity="0.7"/><rect x="816" y="774.70" width="23.4" height="12.399999999999999" fill="#ffff00"/><path d="M816 774.70 h23.4" stroke="#fff" stroke-width="0.5" opacity="0.7"/><rect x="816" y="786.90" width="23.4" height="12.399999999999999" fill="#00ff00"/><path d="M816 786.90 h23.4" stroke="#fff" stroke-width="0.5" opacity="0.7"/><rect x="816" y="799.10" width="23.4" height="12.399999999999999" fill="#00e47a"/><path d="M816 799.10 h23.4" stroke="#fff" stroke-width="0.5" opacity="0.7"/><rect x="816" y="811.30" width="23.4" height="12.399999999999999" fill="#00f2f2"/><path d="M816 811.30 h23.4" stroke="#fff" stroke-width="0.5" opacity="0.7"/><rect x="816" y="823.50" width="23.4" height="12.399999999999999" fill="#009bff"/><path d="M816 823.50 h23.4" stroke="#fff" stroke-width="0.5" opacity="0.7"/><rect x="816" y="835.70" width="23.4" height="12.399999999999999" fill="#0000ff"/><path d="M816 835.70 h23.4" stroke="#fff" stroke-width="0.5" opacity="0.7"/><rect x="816" y="847.90" width="23.4" height="12.399999999999999" fill="#0000a0"/><path d="M816 847.90 h23.4" stroke="#fff" stroke-width="0.5" opacity="0.7"/><text x="813.40" y="728.50" font-size="6.8" textLength="10.43" lengthAdjust="spacingAndGlyphs" fill="#222" text-anchor="end" stroke="#222" stroke-width="0.22">-8.8</text><text x="813.40" y="740.70" font-size="6.8" textLength="13.79" lengthAdjust="spacingAndGlyphs" fill="#222" text-anchor="end" stroke="#222" stroke-width="0.22">-34.2</text><text x="813.40" y="752.90" font-size="6.8" textLength="13.79" lengthAdjust="spacingAndGlyphs" fill="#222" text-anchor="end" stroke="#222" stroke-width="0.22">-59.6</text><text x="813.40" y="765.10" font-size="6.8" textLength="13.79" lengthAdjust="spacingAndGlyphs" fill="#222" text-anchor="end" stroke="#222" stroke-width="0.22">-85.0</text><text x="813.40" y="777.30" font-size="6.8" textLength="16.71" lengthAdjust="spacingAndGlyphs" fill="#222" text-anchor="end" stroke="#222" stroke-width="0.22">-110.5</text><text x="813.40" y="789.50" font-size="6.8" textLength="17.16" lengthAdjust="spacingAndGlyphs" fill="#222" text-anchor="end" stroke="#222" stroke-width="0.22">-135.9</text><text x="813.40" y="801.70" font-size="6.8" textLength="17.16" lengthAdjust="spacingAndGlyphs" fill="#222" text-anchor="end" stroke="#222" stroke-width="0.22">-161.3</text><text x="813.40" y="813.90" font-size="6.8" textLength="17.16" lengthAdjust="spacingAndGlyphs" fill="#222" text-anchor="end" stroke="#222" stroke-width="0.22">-186.7</text><text x="813.40" y="826.10" font-size="6.8" textLength="17.16" lengthAdjust="spacingAndGlyphs" fill="#222" text-anchor="end" stroke="#222" stroke-width="0.22">-212.2</text><text x="813.40" y="838.30" font-size="6.8" textLength="17.16" lengthAdjust="spacingAndGlyphs" fill="#222" text-anchor="end" stroke="#222" stroke-width="0.22">-237.6</text><text x="813.40" y="850.50" font-size="6.8" textLength="17.16" lengthAdjust="spacingAndGlyphs" fill="#222" text-anchor="end" stroke="#222" stroke-width="0.22">-263.0</text><text x="813.40" y="862.70" font-size="6.8" textLength="17.16" lengthAdjust="spacingAndGlyphs" fill="#222" text-anchor="end" stroke="#222" stroke-width="0.22">-288.5</text><text x="865.00" y="734.80" font-size="6.8" textLength="21.51" lengthAdjust="spacingAndGlyphs" fill="#222" text-anchor="end" stroke="#222" stroke-width="0.22">11.35 %</text><text x="865.00" y="747.00" font-size="6.8" textLength="18.63" lengthAdjust="spacingAndGlyphs" fill="#222" text-anchor="end" stroke="#222" stroke-width="0.22">1.64 %</text><text x="865.00" y="759.20" font-size="6.8" textLength="21.51" lengthAdjust="spacingAndGlyphs" fill="#222" text-anchor="end" stroke="#222" stroke-width="0.22">16.11 %</text><text x="865.00" y="771.40" font-size="6.8" textLength="21.96" lengthAdjust="spacingAndGlyphs" fill="#222" text-anchor="end" stroke="#222" stroke-width="0.22">26.06 %</text><text x="865.00" y="783.60" font-size="6.8" textLength="18.63" lengthAdjust="spacingAndGlyphs" fill="#222" text-anchor="end" stroke="#222" stroke-width="0.22">3.68 %</text><text x="865.00" y="795.80" font-size="6.8" textLength="21.96" lengthAdjust="spacingAndGlyphs" fill="#222" text-anchor="end" stroke="#222" stroke-width="0.22">10.05 %</text><text x="865.00" y="808.00" font-size="6.8" textLength="21.96" lengthAdjust="spacingAndGlyphs" fill="#222" text-anchor="end" stroke="#222" stroke-width="0.22">13.66 %</text><text x="865.00" y="820.20" font-size="6.8" textLength="18.63" lengthAdjust="spacingAndGlyphs" fill="#222" text-anchor="end" stroke="#222" stroke-width="0.22">1.95 %</text><text x="865.00" y="832.40" font-size="6.8" textLength="18.63" lengthAdjust="spacingAndGlyphs" fill="#222" text-anchor="end" stroke="#222" stroke-width="0.22">1.81 %</text><text x="865.00" y="844.60" font-size="6.8" textLength="18.63" lengthAdjust="spacingAndGlyphs" fill="#222" text-anchor="end" stroke="#222" stroke-width="0.22">1.87 %</text><text x="865.00" y="856.80" font-size="6.8" textLength="21.51" lengthAdjust="spacingAndGlyphs" fill="#222" text-anchor="end" stroke="#222" stroke-width="0.22">11.83 %</text><rect x="748" y="1040" width="104" height="10" fill="#f1f8fd"/><path d="M334.5 1039.3 H852.5" stroke="#333" stroke-width="1.3"/><path d="M334.9 1039 V1050 M430.8 1039 V1050 M747.6 1039 V1050 M852.2 1039 V1050" stroke="#222" stroke-width="1"/><rect x="431.4" y="1040" width="4.2" height="4.2" fill="#e8961e"/><rect x="431.4" y="1044.6" width="4.2" height="5" fill="#e6f1fa"/><text x="383.50" y="1046.80" font-size="6.8" textLength="43.00" lengthAdjust="spacingAndGlyphs" font-weight="bold" fill="#222" text-anchor="middle" stroke="#222" stroke-width="0.22">www.dlubal.com</text><text x="448.00" y="1046.80" font-size="6.8" textLength="148.00" lengthAdjust="spacingAndGlyphs" fill="#222" stroke="#222" stroke-width="0.22">RFEM 6.02.0016 - General 3D structures solved using FEM</text><ellipse cx="866.3" cy="1044.8" rx="10" ry="10.5" fill="#1b2f7e"/><rect x="860.0999999999999" y="1039.6" width="12.4" height="3.6" fill="#fff"/><rect x="860.0999999999999" y="1044.2" width="12.4" height="1.6" fill="#fff"/><path d="M863.8 1039.8 V1045.3999999999999 M863.8 1039.8 L870.8 1043.0 M863.6999999999999 1039.8 L860.8 1043.0" stroke="#1b2f7e" stroke-width="0.6" fill="none"/><text x="860.10" y="1050.40" font-size="4.2" textLength="12.40" lengthAdjust="spacingAndGlyphs" font-weight="bold" fill="#fff">Dlubal</text></svg>
<svg class="page" style="left:938px" width="614" height="868" viewBox="938 196 614 868" font-family="'Liberation Sans', sans-serif"><ellipse cx="1123" cy="244.6" rx="24.3" ry="25.6" fill="#1b2f7e"/><rect x="1106" y="232.0" width="31.4" height="9.6" fill="#fff"/><rect x="1106" y="244.0" width="31.4" height="3.8" fill="#fff"/><path d="M1116.4 233.0 V246.6 M1116.1000000000001 233.4 L1107.8 241.4 M1117.4 233.6 L1125.2 241.4 M1117.6000000000001 233.4 L1134.6 241.4" stroke="#1b2f7e" stroke-width="1.2" fill="none"/><text x="1106.20" y="257.80" font-size="10" textLength="31.00" lengthAdjust="spacingAndGlyphs" font-weight="bold" fill="#fff">Dlubal</text><rect x="1097" y="225" width="1.9" height="40" fill="#fff"/><text x="982.00" y="272.00" font-size="6.8" textLength="60.00" lengthAdjust="spacingAndGlyphs" fill="#222" stroke="#222" stroke-width="0.22">Tel.: +49 9673 9203 - 0</text><path d="M981.5 285 H1523" stroke="#333" stroke-width="1.3"/><path d="M1161.5 219 V285 M1397 219 V285" stroke="#222" stroke-width="1.1"/><text x="1173.00" y="227.00" font-size="6.6" textLength="20.00" lengthAdjust="spacingAndGlyphs" font-weight="bold" fill="#222" stroke="#222" stroke-width="0.22">Model:</text><rect x="1199" y="219.6" width="186" height="9.6" fill="#e1f0fb"/><rect x="1199" y="232" width="186" height="9.8" fill="#e1f0fb"/><text x="1202.50" y="227.00" font-size="6.9" textLength="72.50" lengthAdjust="spacingAndGlyphs" font-weight="bold" fill="#222" stroke="#222" stroke-width="0.22">Webinarmodell_GA-1_all</text><text x="1202.50" y="239.40" font-size="6.9" textLength="55.50" lengthAdjust="spacingAndGlyphs" font-weight="bold" fill="#222" stroke="#222" stroke-width="0.22">Stahlbetongebäude</text><text x="1409.00" y="227.00" font-size="6.8" textLength="12.00" lengthAdjust="spacingAndGlyphs" fill="#222" stroke="#222" stroke-width="0.22">Date</text><rect x="1426" y="219.6" width="37" height="9.8" fill="#e1f0fb"/><text x="1444.50" y="227.00" font-size="6.8" textLength="24.00" lengthAdjust="spacingAndGlyphs" fill="#222" text-anchor="middle" stroke="#222" stroke-width="0.22">5.4.2022</text><text x="1469.00" y="227.00" font-size="6.8" textLength="12.50" lengthAdjust="spacingAndGlyphs" fill="#222" stroke="#222" stroke-width="0.22">Page</text><rect x="1486" y="219.6" width="36.5" height="9.8" fill="#e1f0fb"/><rect x="1486" y="232.4" width="36.5" height="9.8" fill="#e1f0fb"/><text x="1504.30" y="227.00" font-size="6.8" textLength="14.00" lengthAdjust="spacingAndGlyphs" fill="#222" text-anchor="middle" stroke="#222" stroke-width="0.22">9/14</text><text x="1469.00" y="240.00" font-size="6.8" textLength="14.00" lengthAdjust="spacingAndGlyphs" fill="#222" stroke="#222" stroke-width="0.22">Sheet</text><text x="1504.30" y="240.00" font-size="6.8" textLength="3.29" lengthAdjust="spacingAndGlyphs" fill="#222" text-anchor="middle" stroke="#222" stroke-width="0.22">1</text><rect x="1408.3" y="251.3" width="114" height="24.6" fill="#fff" stroke="#e4f1fb" stroke-width="1"/><text x="1466.50" y="267.00" font-size="8.6" textLength="30.00" lengthAdjust="spacingAndGlyphs" font-weight="bold" fill="#111" text-anchor="middle" stroke="#111" stroke-width="0.3">MODEL</text><rect x="982.6" y="305.6" width="26" height="10" fill="#e6f1fb"/><text x="986.00" y="312.80" font-size="6" textLength="19.50" lengthAdjust="spacingAndGlyphs" font-weight="bold" fill="#274a9e">Graphic</text><text><tspan x="1018.50" y="315.40" font-size="10.6" textLength="116.00" lengthAdjust="spacingAndGlyphs" font-weight="bold" stroke="#000" stroke-width="0.42">RC1: PRINCIPAL STRESSES</tspan> <tspan x="1137.20" y="316.00" font-size="10" textLength="6.00" lengthAdjust="spacingAndGlyphs" font-style="italic" stroke="#000" stroke-width="0.42">σ</tspan> <tspan x="1143.20" y="317.00" font-size="5.5" textLength="3.00" lengthAdjust="spacingAndGlyphs" font-weight="bold" stroke="#000" stroke-width="0.22">3</tspan> <tspan x="1146.60" y="315.40" font-size="10.6" textLength="2.56" lengthAdjust="spacingAndGlyphs" font-weight="bold" stroke="#000" stroke-width="0.42">,</tspan> <tspan x="1152.40" y="315.40" font-size="10.6" textLength="264.00" lengthAdjust="spacingAndGlyphs" font-weight="bold" stroke="#000" stroke-width="0.42">LOADING, IMPERFECTIONS, IN AXONOMETRIC DIRECTION</tspan></text><text x="1523.00" y="314.00" font-size="10.4" textLength="65.50" lengthAdjust="spacingAndGlyphs" font-weight="bold" text-anchor="end" stroke="#000" stroke-width="0.42">Static Analysis</text><rect x="981.5" y="324.8" width="442.4" height="329.4" fill="#fff" stroke="#a6a6a6"/><path d="M1013.4 428.4 V573.6 M1115.4 396.4 V541.6 M1287.4 440 V585.6 M1388.6 408 V554 M1013.4 428.4 L1115.4 396.4 L1388.6 408 L1287.4 440 Z M1013.4 573.6 L1115.4 541.6 L1388.6 554 L1287.4 585.6 Z " fill="none" stroke="#6e6e6e" stroke-width="0.55"/><path d="M1013.4 453 L1115.4 419 M1013.4 465 L1115.4 420 M1013.4 471 L1115.4 435 M1013.4 507 L1115.4 481.6 M1013.4 456 Q1150.4 462 1287.4 465 M1013.4 465 Q1150.4 468 1287.4 468 M1013.4 471 Q1150.4 477 1287.4 477 M1013.4 507 Q1150.4 516 1287.4 519 M1287.4 465 L1388.6 439 M1287.4 468 L1388.6 440.6 M1287.4 477 L1388.6 452.4 M1287.4 519 L1388.6 491 M1115.4 420 L1388.6 439 M1115.4 435 L1388.6 452.4 M1115.4 481.6 L1388.6 491 M1115.4 419 L1388.6 431 M1010 453.4 L1013.4 453 M1388.6 439.6 L1392 432.4 M1115.4 420 L1140 421 M1299 446 L1318 447.4" fill="none" stroke="#6e6e6e" stroke-width="0.55"/><path d="M1140 420 L1137 436 L1134 442 L1126 446 Q1123 449 1126 451.6 L1130 453.4 L1142 455.6 L1143 472 L1146 490 L1147 500 L1151 501 L1153 510 L1159 522 Q1164 528 1171 533 Q1178 538 1185 542 Q1193 546 1201 547.6 L1211 547 Q1218 545.6 1225 542 Q1232 538.6 1237 534 L1245 526 L1255 512 L1259 500 L1264 498 L1268 464 L1268 454 L1279 452 Q1285 450.6 1285 447.6 L1284 444 L1277 438 L1271 422 L1269 419 L1271 415 L1261 413 L1245 411.6 L1211 410.4 L1185 411 L1165 412.4 L1155 417 Z" fill="#ff0000"/><clipPath id="bulbclip"><path d="M1140 420 L1137 436 L1134 442 L1126 446 Q1123 449 1126 451.6 L1130 453.4 L1142 455.6 L1143 472 L1146 490 L1147 500 L1151 501 L1153 510 L1159 522 Q1164 528 1171 533 Q1178 538 1185 542 Q1193 546 1201 547.6 L1211 547 Q1218 545.6 1225 542 Q1232 538.6 1237 534 L1245 526 L1255 512 L1259 500 L1264 498 L1268 464 L1268 454 L1279 452 Q1285 450.6 1285 447.6 L1284 444 L1277 438 L1271 422 L1269 419 L1271 415 L1261 413 L1245 411.6 L1211 410.4 L1185 411 L1165 412.4 L1155 417 Z"/></clipPath><path d="M1145 421 L1155 415 L1168 411.5 L1200 410.5 L1240 411.2 L1261 413 L1264 416 L1258 419.5 L1240 424 L1220 426 L1200 425 L1180 423 L1160 422.5 L1145 421.6 Z" fill="#ffd400"/><path d="M1149 420.4 L1158 416.4 L1170 413.2 L1200 412 L1240 412.8 L1258 415 L1255 418 L1240 422 L1220 424 L1200 423.4 L1180 421.6 L1160 421 Z" fill="#f4f000"/><path d="M1176 421 L1200 413 L1240 413 L1255 415 L1240 421 L1220 423.6 L1200 423 Z M1152 420 L1166 415 L1178 414 L1172 419.4 Z" fill="#d2d200"/><path d="M1216 415 L1226 414.6 L1230 419 L1221 420.4 Z M1173 417 L1186 413 L1190 414.4 L1178 418.4 Z" fill="#f4a21c"/><path d="M1243 414 L1254 415.2 L1252 416.6 L1242 415.6 Z M1153 419.2 L1168 417.6 L1167 418.8 L1154 420.2 Z M1200 424 L1216 424.4 L1214 425.2 L1201 425 Z" fill="#2ee06a"/><path d="M1167 415.4 L1177 415 L1176 416 L1167 416.2 Z" fill="#20d8e0"/><path d="M1158 414 L1166 411.6 L1190 410.8 L1170 413 Z" fill="#ff7a70" opacity="0.8"/><path d="M1126 434 Q1200 437 1287.4 440 M1135 457 Q1200 463 1287.4 465 M1140 466 Q1200 468 1287.4 468 M1142 474 Q1210 478 1287.4 477 M1150 511 Q1220 517 1287.4 519" fill="none" stroke="#7a2a2a" stroke-width="0.6" opacity="0.8" clip-path="url(#bulbclip)"/><path d="M1146 381 L1175.5 371.5 L1252.5 375 L1252.5 412 M1146 381 L1220 384.2 L1252.5 375 M1146 400.5 L1175.5 391.2 L1252.5 394.5 M1146 400.5 L1220 404 L1252.5 394.5 M1175.5 371.5 V392 M1199.5 384 V423.5 M1220.5 378 V417 M1230 382.5 V421 M1240.5 380 V414 M1199.5 384.6 L1220 385.4 M1199.5 393 L1230 394 M1220.5 397.6 L1240.5 391.8 M1243.5 382 L1250.5 380 V389 L1243.5 391.5 Z M1243.5 402 L1250.5 400 V409 L1243.5 411 Z" fill="none" stroke="#6c6c6c" stroke-width="0.5"/><path d="M1220.5 378 L1232 375.2 M1210 383 L1232 377" fill="none" stroke="#b8b8e0" stroke-width="0.5"/><path d="M1158 382 V418 M1164.5 380 V417 M1175 376 V415 M1180.5 383 V421 M1187.5 383 V419 M1198 378 V415 M1209 375 V420" stroke="#dcdce2" stroke-width="1.1" fill="none"/><rect x="1001.40" y="424.40" width="2" height="37.60" fill="#a8a800"/><rect x="1001.40" y="462.00" width="2" height="6.00" fill="#ff1010"/><rect x="1001.40" y="468.00" width="2" height="36.00" fill="#d08a10"/><rect x="1001.40" y="504.00" width="2" height="66.00" fill="#b4b4b4"/><rect x="1329.40" y="442.00" width="2" height="25.00" fill="#a8a800"/><rect x="1329.40" y="467.00" width="2" height="9.00" fill="#ff1010"/><rect x="1329.40" y="476.00" width="2" height="45.00" fill="#d08a10"/><rect x="1329.40" y="521.00" width="2" height="66.00" fill="#b4b4b4"/><rect x="1359.60" y="409.00" width="2" height="30.00" fill="#a8a800"/><rect x="1359.60" y="439.00" width="2" height="13.00" fill="#ff1010"/><rect x="1359.60" y="452.00" width="2" height="39.00" fill="#d08a10"/><rect x="1359.60" y="491.00" width="2" height="63.00" fill="#b4b4b4"/><rect x="1170" y="428" width="2" height="31" fill="#a8a800"/><rect x="1170" y="469.6" width="2" height="37.4" fill="#d08a10"/><rect x="1170" y="507" width="2" height="66" fill="#b4b4b4"/><rect x="1160.8" y="524" width="2" height="25" fill="#b4b4b4"/><rect x="1161.4" y="404" width="1.6" height="10" fill="#c8b400"/><text x="1155.40" y="410.00" font-size="8" textLength="33.60" lengthAdjust="spacingAndGlyphs" fill="#84849a">Section 2</text><text x="1173.40" y="405.60" font-size="8" textLength="33.20" lengthAdjust="spacingAndGlyphs" fill="#84849a">Section 1</text><text x="984.60" y="332.40" font-size="6.8" textLength="56.00" lengthAdjust="spacingAndGlyphs" fill="#222" stroke="#222" stroke-width="0.22">RC1 - CO2/p - LC5/p</text><text x="984.60" y="339.80" font-size="6.8" textLength="36.00" lengthAdjust="spacingAndGlyphs" fill="#222" stroke="#222" stroke-width="0.22">Static Analysis</text><text><tspan x="984.60" y="347.80" font-size="6.8" textLength="72.57" lengthAdjust="spacingAndGlyphs" fill="#222" stroke="#222" stroke-width="0.22">Solids | Principal Stresses σ</tspan> <tspan x="1057.37" y="349.10" font-size="4.22" textLength="2.01" lengthAdjust="spacingAndGlyphs" fill="#222" stroke="#222" stroke-width="0.22">3</tspan> <tspan x="1061.30" y="347.80" font-size="6.8" textLength="18.80" lengthAdjust="spacingAndGlyphs" fill="#222" stroke="#222" stroke-width="0.22">[kN/m²]</tspan></text><text><tspan x="984.60" y="355.40" font-size="6.8" textLength="41.30" lengthAdjust="spacingAndGlyphs" fill="#222" stroke="#222" stroke-width="0.22">Displacements u</tspan> <tspan x="1026.10" y="356.70" font-size="4.22" textLength="1.73" lengthAdjust="spacingAndGlyphs" fill="#222" stroke="#222" stroke-width="0.22">z</tspan> <tspan x="1029.69" y="355.40" font-size="6.8" textLength="12.41" lengthAdjust="spacingAndGlyphs" fill="#222" stroke="#222" stroke-width="0.22">[mm]</tspan></text><text x="1421.00" y="332.40" font-size="6.8" textLength="62.00" lengthAdjust="spacingAndGlyphs" fill="#222" text-anchor="end" stroke="#222" stroke-width="0.22">In Axonometric Direction</text><text><tspan x="984.60" y="643.80" font-size="6.8" textLength="38.38" lengthAdjust="spacingAndGlyphs" fill="#222" stroke="#222" stroke-width="0.22">Solids | max σ</tspan> <tspan x="1023.18" y="645.10" font-size="4.22" textLength="2.10" lengthAdjust="spacingAndGlyphs" fill="#222" stroke="#222" stroke-width="0.22">3</tspan> <tspan x="1027.27" y="643.80" font-size="6.8" textLength="31.97" lengthAdjust="spacingAndGlyphs" fill="#222" stroke="#222" stroke-width="0.22">: 0.2 | min σ</tspan> <tspan x="1059.44" y="645.10" font-size="4.22" textLength="2.10" lengthAdjust="spacingAndGlyphs" fill="#222" stroke="#222" stroke-width="0.22">3</tspan> <tspan x="1063.52" y="643.80" font-size="6.8" textLength="35.08" lengthAdjust="spacingAndGlyphs" fill="#222" stroke="#222" stroke-width="0.22">: -62.4 kN/m²</tspan></text><text><tspan x="984.60" y="651.40" font-size="6.8" textLength="3.19" lengthAdjust="spacingAndGlyphs" fill="#222" stroke="#222" stroke-width="0.22">u</tspan> <tspan x="987.99" y="652.70" font-size="4.22" textLength="1.78" lengthAdjust="spacingAndGlyphs" fill="#222" stroke="#222" stroke-width="0.22">z</tspan> <tspan x="991.67" y="651.40" font-size="6.8" textLength="50.43" lengthAdjust="spacingAndGlyphs" fill="#222" stroke="#222" stroke-width="0.22">: No selected object</tspan></text><rect x="1426.4" y="324.6" width="96.4" height="167" fill="#fff" stroke="#a6a6a6" stroke-width="1"/><text x="1430.20" y="333.50" font-size="6.8" textLength="89.50" lengthAdjust="spacingAndGlyphs" fill="#222" stroke="#222" stroke-width="0.22">Solids | Stresses | Principal Stresses</text><text><tspan x="1430.20" y="341.90" font-size="6.8" textLength="4.01" lengthAdjust="spacingAndGlyphs" fill="#222" stroke="#222" stroke-width="0.22">σ</tspan> <tspan x="1434.41" y="343.20" font-size="4.22" textLength="2.24" lengthAdjust="spacingAndGlyphs" fill="#222" stroke="#222" stroke-width="0.22">3</tspan> <tspan x="1438.76" y="341.90" font-size="6.8" textLength="20.94" lengthAdjust="spacingAndGlyphs" fill="#222" stroke="#222" stroke-width="0.22">[kN/m²]</tspan></text><rect x="1455.4" y="350.00" width="23.4" height="12.399999999999999" fill="#e2e2e2"/><rect x="1455.4" y="362.20" width="23.4" height="12.399999999999999" fill="#ff0000"/><path d="M1455.4 362.20 h23.4" stroke="#fff" stroke-width="0.5" opacity="0.7"/><rect x="1455.4" y="374.40" width="23.4" height="12.399999999999999" fill="#ffa500"/><path d="M1455.4 374.40 h23.4" stroke="#fff" stroke-width="0.5" opacity="0.7"/><rect x="1455.4" y="386.60" width="23.4" height="12.399999999999999" fill="#d2d200"/><path d="M1455.4 386.60 h23.4" stroke="#fff" stroke-width="0.5" opacity="0.7"/><rect x="1455.4" y="398.80" width="23.4" height="12.399999999999999" fill="#ffff00"/><path d="M1455.4 398.80 h23.4" stroke="#fff" stroke-width="0.5" opacity="0.7"/><rect x="1455.4" y="411.00" width="23.4" height="12.399999999999999" fill="#00ff00"/><path d="M1455.4 411.00 h23.4" stroke="#fff" stroke-width="0.5" opacity="0.7"/><rect x="1455.4" y="423.20" width="23.4" height="12.399999999999999" fill="#00e47a"/><path d="M1455.4 423.20 h23.4" stroke="#fff" stroke-width="0.5" opacity="0.7"/><rect x="1455.4" y="435.40" width="23.4" height="12.399999999999999" fill="#00f2f2"/><path d="M1455.4 435.40 h23.4" stroke="#fff" stroke-width="0.5" opacity="0.7"/><rect x="1455.4" y="447.60" width="23.4" height="12.399999999999999" fill="#009bff"/><path d="M1455.4 447.60 h23.4" stroke="#fff" stroke-width="0.5" opacity="0.7"/><rect x="1455.4" y="459.80" width="23.4" height="12.399999999999999" fill="#0000ff"/><path d="M1455.4 459.80 h23.4" stroke="#fff" stroke-width="0.5" opacity="0.7"/><rect x="1455.4" y="472.00" width="23.4" height="12.399999999999999" fill="#0000a0"/><path d="M1455.4 472.00 h23.4" stroke="#fff" stroke-width="0.5" opacity="0.7"/><text x="1452.80" y="352.60" font-size="6.8" textLength="8.41" lengthAdjust="spacingAndGlyphs" fill="#222" text-anchor="end" stroke="#222" stroke-width="0.22">0.2</text><text x="1452.80" y="364.80" font-size="6.8" textLength="8.41" lengthAdjust="spacingAndGlyphs" fill="#222" text-anchor="end" stroke="#222" stroke-width="0.22">0.0</text><text x="1452.80" y="377.00" font-size="6.8" textLength="10.43" lengthAdjust="spacingAndGlyphs" fill="#222" text-anchor="end" stroke="#222" stroke-width="0.22">-6.9</text><text x="1452.80" y="389.20" font-size="6.8" textLength="13.79" lengthAdjust="spacingAndGlyphs" fill="#222" text-anchor="end" stroke="#222" stroke-width="0.22">-13.8</text><text x="1452.80" y="401.40" font-size="6.8" textLength="13.79" lengthAdjust="spacingAndGlyphs" fill="#222" text-anchor="end" stroke="#222" stroke-width="0.22">-20.7</text><text x="1452.80" y="413.60" font-size="6.8" textLength="13.79" lengthAdjust="spacingAndGlyphs" fill="#222" text-anchor="end" stroke="#222" stroke-width="0.22">-27.6</text><text x="1452.80" y="425.80" font-size="6.8" textLength="13.79" lengthAdjust="spacingAndGlyphs" fill="#222" text-anchor="end" stroke="#222" stroke-width="0.22">-34.4</text><text x="1452.80" y="438.00" font-size="6.8" textLength="13.79" lengthAdjust="spacingAndGlyphs" fill="#222" text-anchor="end" stroke="#222" stroke-width="0.22">-41.3</text><text x="1452.80" y="450.20" font-size="6.8" textLength="13.79" lengthAdjust="spacingAndGlyphs" fill="#222" text-anchor="end" stroke="#222" stroke-width="0.22">-48.2</text><text x="1452.80" y="462.40" font-size="6.8" textLength="13.79" lengthAdjust="spacingAndGlyphs" fill="#222" text-anchor="end" stroke="#222" stroke-width="0.22">-55.1</text><text x="1452.80" y="474.60" font-size="6.8" textLength="13.79" lengthAdjust="spacingAndGlyphs" fill="#222" text-anchor="end" stroke="#222" stroke-width="0.22">-62.0</text><text x="1452.80" y="486.80" font-size="6.8" textLength="13.79" lengthAdjust="spacingAndGlyphs" fill="#222" text-anchor="end" stroke="#222" stroke-width="0.22">-62.4</text><text x="1504.40" y="358.90" font-size="6.8" textLength="21.96" lengthAdjust="spacingAndGlyphs" fill="#222" text-anchor="end" stroke="#222" stroke-width="0.22">21.09 %</text><text x="1504.40" y="371.10" font-size="6.8" textLength="21.96" lengthAdjust="spacingAndGlyphs" fill="#222" text-anchor="end" stroke="#222" stroke-width="0.22">44.20 %</text><text x="1504.40" y="383.30" font-size="6.8" textLength="21.96" lengthAdjust="spacingAndGlyphs" fill="#222" text-anchor="end" stroke="#222" stroke-width="0.22">17.85 %</text><text x="1504.40" y="395.50" font-size="6.8" textLength="18.63" lengthAdjust="spacingAndGlyphs" fill="#222" text-anchor="end" stroke="#222" stroke-width="0.22">9.66 %</text><text x="1504.40" y="407.70" font-size="6.8" textLength="18.63" lengthAdjust="spacingAndGlyphs" fill="#222" text-anchor="end" stroke="#222" stroke-width="0.22">4.74 %</text><text x="1504.40" y="419.90" font-size="6.8" textLength="18.63" lengthAdjust="spacingAndGlyphs" fill="#222" text-anchor="end" stroke="#222" stroke-width="0.22">1.70 %</text><text x="1504.40" y="432.10" font-size="6.8" textLength="18.63" lengthAdjust="spacingAndGlyphs" fill="#222" text-anchor="end" stroke="#222" stroke-width="0.22">0.52 %</text><text x="1504.40" y="444.30" font-size="6.8" textLength="18.63" lengthAdjust="spacingAndGlyphs" fill="#222" text-anchor="end" stroke="#222" stroke-width="0.22">0.18 %</text><text x="1504.40" y="456.50" font-size="6.8" textLength="18.63" lengthAdjust="spacingAndGlyphs" fill="#222" text-anchor="end" stroke="#222" stroke-width="0.22">0.06 %</text><text x="1504.40" y="468.70" font-size="6.8" textLength="18.63" lengthAdjust="spacingAndGlyphs" fill="#222" text-anchor="end" stroke="#222" stroke-width="0.22">0.00 %</text><text x="1504.40" y="480.90" font-size="6.8" textLength="18.63" lengthAdjust="spacingAndGlyphs" fill="#222" text-anchor="end" stroke="#222" stroke-width="0.22">0.00 %</text><rect x="982.6" y="669.6" width="26" height="10" fill="#e6f1fb"/><text x="986.00" y="676.80" font-size="6" textLength="19.50" lengthAdjust="spacingAndGlyphs" font-weight="bold" fill="#274a9e">Graphic</text><text><tspan x="1018.50" y="679.40" font-size="10.6" textLength="116.00" lengthAdjust="spacingAndGlyphs" font-weight="bold" stroke="#000" stroke-width="0.42">RC1: PRINCIPAL STRESSES</tspan> <tspan x="1137.20" y="680.00" font-size="10" textLength="6.00" lengthAdjust="spacingAndGlyphs" font-style="italic" stroke="#000" stroke-width="0.42">σ</tspan> <tspan x="1143.20" y="681.00" font-size="5.5" textLength="9.50" lengthAdjust="spacingAndGlyphs" font-weight="bold" stroke="#000" stroke-width="0.22">123</tspan> <tspan x="1153.40" y="679.40" font-size="10.6" textLength="2.56" lengthAdjust="spacingAndGlyphs" font-weight="bold" stroke="#000" stroke-width="0.42">,</tspan> <tspan x="1159.90" y="679.40" font-size="10.6" textLength="206.00" lengthAdjust="spacingAndGlyphs" font-weight="bold" stroke="#000" stroke-width="0.42">LOADING, IMPERFECTIONS, IN DIRECTION +X</tspan></text><text x="1523.00" y="678.00" font-size="10.4" textLength="65.50" lengthAdjust="spacingAndGlyphs" font-weight="bold" text-anchor="end" stroke="#000" stroke-width="0.42">Static Analysis</text><rect x="981.5" y="688.3" width="442.4" height="330" fill="#fff" stroke="#a6a6a6"/><rect x="1007.6" y="780.4" width="390.80000000000007" height="195.60000000000002" fill="none" stroke="#9c9c9c" stroke-width="0.8"/><rect x="1008.8000000000001" y="781.6" width="388.4000000000001" height="193.20000000000002" fill="none" stroke="#d6d6d6" stroke-width="0.7"/><path d="M1137.2 780 V727.7 H1268 M1137.2 754.4 H1268 M1182 727.7 V780 M1222 727.7 V780 M1249 727.7 V780 M1253 727.7 V780" fill="none" stroke="#8e8e8e" stroke-width="0.7"/><path d="M1140.5 730 V780 M1140.5 731 H1222" fill="none" stroke="#d4d4e8" stroke-width="0.6"/><rect x="1145" y="733.2" width="25.6" height="12.8" rx="1.2" fill="none" stroke="#8e8e8e" stroke-width="0.7"/><rect x="1145" y="760" width="25.6" height="12.8" rx="1.2" fill="none" stroke="#8e8e8e" stroke-width="0.7"/><path d="M1004 813.6 H1402" stroke="#9a9a9a" stroke-width="1.1"/><path d="M1007.6 823.4 Q1100 817 1200 820.6 T1398.4 829 M1007.6 815.6 Q1150 822 1250 822.6 T1398.4 818 M1007.6 833.4 Q1200 832 1398.4 837.6 M1007.6 839.6 Q1100 834 1200 836 T1398.4 838 M1007.6 891.6 Q1200 886 1398.4 885.6 M1007.6 895.4 Q1060 890.6 1130 889.4" fill="none" stroke="#8c8c8c" stroke-width="0.7"/><defs><linearGradient id="crg" x1="0" y1="0" x2="0" y2="1"><stop offset="0" stop-color="#f0f400"/><stop offset="0.3" stop-color="#fff000"/><stop offset="0.6" stop-color="#ffc800"/><stop offset="0.85" stop-color="#f8c000"/><stop offset="1" stop-color="#e8d800"/></linearGradient></defs><path d="M1134 780.6 L1270 780.6 L1292 811 L1284 813 L1122 813 L1114 811 Z" fill="url(#crg)" opacity="0.8"/><path d="M1186.4 808.1L1187.4 802.6M1259.3 809.0L1257.9 802.9M1266.3 807.6L1264.4 801.0M1179.1 806.6L1179.6 802.1M1234.4 806.5L1233.2 801.1M1220.4 806.1L1219.9 802.6M1124.2 807.2L1126.2 802.8M1136.4 810.4L1137.9 805.8M1264.9 807.4L1262.7 802.1M1128.1 807.3L1130.4 802.9M1185.8 810.2L1186.6 806.1M1108.1 806.8L1111.6 804.7M1177.6 811.4L1178.1 804.2M1111.7 807.7L1114.0 805.0M1228.6 806.9L1228.0 802.7M1273.5 809.1L1270.8 805.1M1264.4 806.0L1263.0 801.5M1207.9 808.4L1207.6 802.6M1235.1 808.0L1233.9 803.2M1127.5 806.1L1129.4 801.9M1202.0 808.3L1202.2 804.2M1271.1 811.8L1268.5 804.7M1150.6 812.0L1152.4 806.8M1244.1 809.8L1242.5 805.4M1242.5 805.4L1241.0 800.9M1284.7 807.5L1281.9 804.0M1136.0 807.6L1137.7 803.3M1151.3 807.3L1152.8 802.9M1234.7 805.8L1234.0 800.9M1286.5 807.6L1284.3 803.9M1275.8 806.5L1273.0 803.1M1123.2 807.9L1126.1 803.8M1179.8 806.5L1180.3 802.9M1169.2 807.5L1170.4 801.3M1128.8 807.9L1130.7 803.9M1126.6 805.0L1129.0 801.8M1113.3 808.2L1116.3 805.6M1227.3 811.4L1226.4 804.3M1253.4 806.4L1252.2 801.8M1184.0 808.1L1184.6 803.3M1190.0 807.4L1190.0 802.9M1171.0 810.8L1171.4 806.1M1246.9 807.9L1245.1 804.0M1203.8 806.8L1203.9 803.5M1154.0 807.8L1154.9 803.1M1121.1 809.3L1123.2 805.6M1247.3 810.8L1246.0 803.9M1119.4 806.2L1121.6 800.9M1189.6 810.1L1190.5 804.2M1283.3 807.1L1281.3 803.2M1130.0 805.2L1132.6 801.2M1223.5 809.8L1222.3 804.7M1291.0 807.8L1288.3 805.1M1269.5 809.5L1267.9 805.4M1202.2 809.4L1202.2 804.4M1170.9 811.6L1171.5 806.7M1152.0 811.9L1153.7 806.4M1186.3 811.4L1186.7 806.9M1256.2 810.5L1254.0 803.8M1203.3 811.5L1203.4 804.7M1173.9 806.7L1174.4 802.9M1213.5 808.7L1213.1 804.8M1213.8 806.2L1213.4 800.3M1123.3 808.8L1125.5 804.5M1241.8 810.0L1240.0 803.8M1178.7 809.8L1179.4 803.1M1203.2 809.7L1203.1 803.4M1112.9 808.7L1115.7 806.1M1278.4 807.9L1275.7 803.6M1217.2 806.8L1216.3 802.8M1275.6 810.1L1273.3 804.8M1232.3 810.7L1231.8 806.0M1231.8 806.0L1231.2 801.4M1271.8 805.7L1269.1 801.1M1290.3 810.8L1287.9 807.7M1156.7 809.3L1157.7 802.3M1115.0 806.7L1118.1 803.3M1123.8 808.5L1125.9 803.6M1274.2 810.7L1272.3 804.6M1169.3 807.0L1170.8 802.6M1296.3 809.0L1292.9 805.2M1267.3 810.3L1264.9 805.1M1181.9 807.8L1182.7 801.7M1204.3 810.7L1203.9 804.7M1224.3 809.2L1223.9 803.5M1184.4 806.9L1184.4 801.0M1287.5 807.5L1285.1 803.8M1159.2 811.6L1160.1 804.3M1292.9 811.7L1290.4 807.3M1215.4 810.2L1215.2 805.1M1125.5 811.3L1127.6 806.6M1272.4 806.8L1269.8 800.5M1289.8 807.3L1287.0 803.6M1248.4 809.2L1247.3 804.3M1244.1 809.8L1242.5 805.2M1216.2 810.5L1215.2 806.0M1215.2 806.0L1214.2 801.5M1225.7 806.5L1225.5 800.9M1192.0 807.2L1192.3 803.0M1190.0 809.7L1190.0 802.8M1231.1 806.6L1230.8 801.7M1234.0 809.6L1232.8 805.0M1255.2 811.0L1253.2 804.2M1120.6 809.2L1123.0 804.1M1135.8 807.9L1137.4 804.3M1294.5 810.2L1291.5 807.3M1291.5 807.3L1288.5 804.5M1288.5 804.5L1285.5 801.6M1292.1 811.3L1289.3 808.2M1124.2 809.9L1126.6 806.1M1126.6 806.1L1129.0 802.2M1281.9 805.8L1279.8 801.1M1289.2 807.4L1286.6 802.3M1159.0 808.9L1160.8 804.3M1279.3 806.9L1276.8 803.8M1250.9 806.6L1249.1 801.7M1161.7 811.0L1163.2 806.3M1209.5 810.4L1209.5 804.3M1242.4 806.5L1241.0 802.6M1273.6 806.9L1271.8 802.9M1273.8 806.4L1271.5 801.6M1254.9 808.0L1253.1 801.6M1251.6 806.7L1249.5 801.6M1165.4 806.2L1166.6 801.3M1163.1 810.2L1163.8 806.3M1243.5 810.1L1241.8 803.2M1207.8 806.7L1207.1 800.1M1272.1 810.8L1269.5 805.7M1153.8 807.5L1154.8 804.0M1289.0 806.2L1285.8 802.5M1193.9 812.0L1193.6 807.5M1193.6 807.5L1193.4 803.0M1263.5 806.1L1261.7 802.8M1200.8 811.4L1201.3 805.1M1278.0 809.7L1275.3 805.5M1243.5 807.1L1242.4 800.6M1258.4 807.4L1256.6 802.8M1226.3 807.9L1225.3 803.7M1119.4 811.8L1122.1 807.5M1150.0 811.2L1151.2 806.3M1182.1 809.8L1182.8 805.9M1195.8 811.9L1195.4 806.9M1195.4 806.9L1195.1 802.0M1128.4 807.8L1131.2 803.1M1194.2 811.5L1194.6 807.1M1296.1 809.4L1293.2 806.2M1293.2 806.2L1290.2 802.9M1191.6 810.1L1191.5 803.1M1242.4 806.4L1241.5 800.1M1119.5 806.5L1121.5 803.6M1284.1 806.9L1281.5 802.6M1122.8 807.3L1125.1 803.4M1207.7 808.7L1207.8 802.1M1117.0 808.1L1119.7 804.8M1119.7 804.8L1122.4 801.6M1269.7 809.9L1267.7 803.9M1132.0 807.5L1134.2 802.9M1251.8 808.6L1250.6 804.7M1273.2 811.3L1270.5 807.2M1192.6 807.6L1192.5 802.4M1109.6 806.7L1112.7 802.1M1129.9 808.2L1131.7 804.1M1276.9 805.3L1274.5 800.7M1116.0 806.7L1119.0 803.5M1237.3 807.5L1236.2 802.3M1260.3 808.9L1258.0 802.2M1226.1 808.4L1225.1 802.7M1174.6 804.9L1175.3 801.2M1222.1 808.8L1221.6 803.9M1161.1 806.2L1162.1 801.3M1237.1 811.7L1236.0 806.6M1152.9 806.7L1154.4 803.3M1136.6 809.3L1138.3 803.1M1147.9 809.8L1149.1 805.0M1245.1 810.4L1243.5 804.0M1143.0 809.1L1144.9 803.0M1239.3 806.8L1237.9 802.4M1159.9 809.0L1161.5 804.7M1125.2 807.0L1127.7 803.8M1274.5 805.6L1272.5 800.5M1267.8 811.9L1265.4 807.5M1218.6 810.1L1217.6 803.3M1161.3 808.6L1162.8 804.1M1281.3 809.9L1279.1 804.1M1169.5 806.3L1170.0 800.9M1188.4 808.5L1189.2 802.5M1259.4 807.4L1258.1 801.4M1122.4 808.1L1125.2 804.3M1262.8 811.8L1261.4 807.5M1160.6 806.3L1162.1 802.2M1249.6 809.0L1248.1 802.5M1120.6 811.7L1122.7 807.2M1226.3 810.7L1225.1 806.4M1240.2 809.4L1239.5 803.0M1180.0 807.9L1180.4 803.3M1289.1 804.5L1286.4 802.1M1172.2 808.8L1173.0 804.4M1288.0 807.4L1284.9 804.8M1168.3 807.2L1169.8 801.9M1262.7 808.8L1260.6 801.8M1128.4 811.3L1130.9 807.2M1144.7 811.4L1146.3 806.1M1207.8 808.6L1208.1 803.1M1184.2 809.4L1184.4 804.3M1112.5 805.7L1115.6 801.9M1201.3 808.9L1201.6 804.7M1148.9 807.8L1150.3 803.6M1215.3 811.5L1214.9 805.4M1134.9 811.1L1136.6 805.0M1144.3 810.0L1145.6 805.9M1286.5 808.0L1284.4 804.2M1172.2 807.4L1172.7 803.1M1117.0 809.8L1119.1 805.8M1191.4 806.5L1191.6 801.6M1286.7 808.0L1284.5 804.3M1244.3 809.4L1243.6 802.9M1288.3 806.3L1285.7 803.8M1158.2 811.5L1160.1 805.8M1214.3 807.6L1214.4 801.1M1280.3 806.0L1277.8 801.1M1231.3 808.3L1230.0 804.4M1291.2 811.9L1288.7 808.3M1288.4 806.0L1285.2 801.3M1253.2 810.0L1251.8 805.0M1200.6 810.6L1200.4 804.0M1237.1 808.0L1236.6 803.8M1283.2 809.0L1281.1 805.4M1281.1 805.4L1279.1 801.8M1172.5 809.1L1174.0 802.2M1213.6 809.6L1213.4 804.9M1197.6 808.0L1197.2 803.6M1114.0 808.8L1116.4 805.6M1116.4 805.6L1118.9 802.5M1203.7 808.0L1204.0 803.7M1292.1 807.6L1289.2 804.5M1222.6 806.2L1221.5 801.7M1213.8 806.2L1213.2 801.2M1238.6 810.5L1237.4 806.1M1153.1 805.9L1155.1 801.7M1190.9 806.5L1191.7 802.6M1246.8 811.3L1245.0 806.4M1164.7 808.9L1165.8 804.1M1244.9 811.0L1243.2 805.1M1267.9 805.9L1266.2 802.0M1165.2 806.1L1166.4 800.3M1234.3 807.3L1233.4 803.5M1284.3 807.2L1281.6 802.8M1149.2 811.7L1150.7 804.8M1114.2 809.0L1117.3 805.7M1293.1 808.5L1290.5 805.1M1207.8 807.7L1208.0 803.0M1202.6 808.7L1202.3 804.2M1213.7 807.4L1213.1 803.0M1178.7 806.2L1179.5 802.6M1228.4 810.7L1227.2 806.3M1164.3 807.7L1165.4 803.5M1209.7 810.2L1209.7 804.1M1206.3 806.2L1206.3 801.5M1167.2 809.2L1168.5 802.3M1162.2 805.1L1163.0 800.9M1134.8 805.8L1136.4 801.8M1276.8 807.0L1274.1 802.6M1287.9 807.8L1284.7 804.0M1152.5 805.8L1154.2 800.6M1177.9 810.8L1178.3 805.6M1219.1 810.0L1218.6 804.1M1273.2 811.1L1271.3 806.1M1271.3 806.1L1269.4 801.1M1202.3 809.7L1202.8 805.0M1177.4 807.2L1178.5 803.8M1274.6 811.5L1272.7 804.9M1161.3 810.3L1162.8 805.5M1234.6 811.6L1234.1 807.0M1277.3 807.0L1275.0 803.0M1133.1 811.5L1134.8 805.8M1237.3 808.3L1236.0 804.0M1259.2 809.7L1258.0 803.8M1114.9 811.5L1118.0 808.1M1113.0 809.0L1115.7 804.6M1136.9 809.6L1138.4 805.1M1240.2 806.4L1238.8 802.1M1216.6 809.4L1215.7 805.0M1270.9 806.9L1268.7 803.0M1123.5 808.2L1125.6 803.5M1203.8 811.2L1203.5 806.3M1175.5 805.4L1176.5 800.7M1253.0 805.8L1251.2 800.7M1170.9 808.0L1172.1 802.4M1175.2 810.1L1175.8 803.7M1111.0 810.2L1113.7 805.4M1113.7 805.4L1116.5 800.7M1113.6 805.0L1115.9 802.2M1162.5 811.3L1163.8 804.7M1147.2 810.4L1149.5 806.1M1117.9 808.6L1120.8 803.2M1151.8 806.5L1153.5 803.1M1240.7 811.2L1240.1 805.4M1271.2 811.1L1268.6 805.0M1237.5 808.1L1235.8 802.8M1114.7 805.4L1121.6 801.6M1111.3 802.2L1124.5 796.1M1123.0 811.8L1132.2 807.0M1098.0 794.9L1106.5 788.3M1096.0 798.9L1105.3 793.3M1106.8 794.6L1113.3 789.6M1101.3 798.7L1116.1 790.9M1099.7 789.2L1109.8 782.9M1124.6 804.0L1138.6 797.5M1097.0 798.6L1104.8 794.8M1100.6 790.7L1107.5 785.6M1117.4 795.5L1125.6 787.9M1115.2 800.9L1123.3 795.1M1101.9 792.1L1110.7 786.4M1116.7 800.1L1122.1 797.4M1120.1 815.0L1132.0 805.7M1125.6 804.8L1138.5 797.9M1305.9 793.2L1293.6 787.0M1285.7 798.9L1279.1 795.0M1304.4 797.9L1290.4 788.8M1300.7 795.4L1285.5 787.9M1284.4 796.8L1277.2 792.4M1279.8 795.3L1267.7 784.2M1279.4 803.8L1269.9 798.2M1289.5 800.3L1276.7 790.7M1292.1 793.8L1280.1 784.6M1277.0 787.7L1269.8 783.8M1285.4 809.6L1271.0 802.9M1307.1 803.2L1300.4 800.2M1284.8 804.9L1279.0 801.0M1302.2 808.5L1294.0 802.8M1286.3 799.2L1274.7 792.9M1277.6 796.3L1269.6 791.3M1290.2 812.0L1278.7 806.2M1284.5 802.2L1273.4 792.7M1292.4 806.7L1282.3 799.0M1278.3 802.4L1272.9 798.3M1302.2 788.5L1292.3 783.0M1308.0 797.6L1294.9 790.7M1304.8 800.1L1291.6 790.8M1297.5 794.3L1291.5 789.1M1287.3 788.4L1274.1 780.2M1307.5 789.3L1301.4 784.3M1288.7 814.0L1274.4 807.4M1282.4 810.7L1274.0 802.7M1290.3 804.3L1278.3 792.6M1300.4 810.5L1292.3 805.9M1286.5 813.1L1281.2 808.0M1288.0 808.9L1277.3 802.9M1296.6 807.0L1289.4 803.0M1298.5 803.0L1288.3 796.4M1282.7 792.1L1270.5 781.4M1300.7 811.6L1293.7 808.0M1291.7 789.6L1282.3 784.9" stroke="#ff3a10" stroke-width="0.6" fill="none" opacity="0.9"/><path d="M1152.1 807.6L1154.2 803.6M1165.8 807.0L1166.9 803.5M1222.1 801.6L1221.0 794.7M1260.8 802.5L1259.1 798.3M1218.7 809.3L1218.5 804.4M1218.5 804.4L1218.3 799.4M1222.3 806.6L1221.3 803.2M1220.3 799.9L1219.3 796.5M1200.3 810.2L1200.2 805.9M1200.2 805.9L1200.1 801.6M1200.1 801.6L1200.0 797.2M1152.9 806.6L1154.7 801.3M1247.9 805.8L1246.4 801.3M1246.4 801.3L1245.0 796.7M1180.0 797.6L1180.5 793.1M1236.5 812.0L1235.6 806.6M1235.6 806.6L1234.6 801.3M1234.6 801.3L1233.7 795.9M1237.0 808.3L1235.7 802.9M1233.2 801.1L1232.1 795.6M1224.0 808.3L1223.5 804.6M1219.4 799.1L1218.9 795.6M1128.3 798.4L1130.4 794.0M1205.3 801.5L1205.0 794.7M1188.2 802.7L1188.5 798.5M1272.7 811.2L1270.2 805.9M1270.2 805.9L1267.8 800.6M1137.9 805.8L1139.4 801.3M1128.5 809.4L1130.4 803.8M1222.6 808.9L1221.7 804.6M1230.5 806.0L1229.8 800.3M1205.2 807.9L1205.3 804.2M1205.6 796.9L1205.8 793.2M1130.4 802.9L1132.7 798.5M1132.7 798.5L1135.0 794.1M1224.9 810.6L1224.5 805.7M1224.5 805.7L1224.1 800.9M1224.1 800.9L1223.7 796.0M1186.6 806.1L1187.5 802.1M1188.4 798.1L1189.2 794.1M1224.8 811.2L1224.3 806.2M1224.3 806.2L1223.8 801.1M1280.5 811.7L1278.2 807.4M1278.2 807.4L1275.9 803.0M1275.9 803.0L1273.7 798.7M1111.6 804.7L1115.0 802.6M1121.9 798.3L1125.3 796.2M1125.3 796.2L1128.7 794.1M1178.1 804.2L1178.6 797.0M1114.0 805.0L1116.3 802.3M1116.3 802.3L1118.6 799.5M1118.6 799.5L1120.9 796.8M1152.6 809.9L1153.7 805.5M1153.7 805.5L1154.9 801.0M1293.6 809.3L1290.7 804.0M1290.7 804.0L1287.8 798.7M1287.8 798.7L1284.9 793.4M1260.5 811.3L1258.5 806.6M1256.6 801.8L1254.6 797.1M1229.2 811.2L1228.6 806.9M1270.8 805.1L1268.2 801.2M1192.5 806.4L1193.1 801.6M1294.7 808.3L1291.8 805.5M1285.9 799.9L1283.0 797.1M1262.4 809.3L1260.6 805.4M1260.6 805.4L1258.8 801.4M1237.3 808.9L1236.1 804.1M1236.1 804.1L1234.8 799.3M1234.8 799.3L1233.6 794.5M1273.1 810.3L1270.5 805.3M1270.5 805.3L1267.9 800.3M1267.9 800.3L1265.4 795.3M1148.7 807.0L1150.5 800.5M1223.3 801.9L1222.5 797.6M1147.2 808.7L1149.5 803.9M1156.8 805.1L1158.0 799.0M1216.7 801.8L1216.7 795.3M1213.6 811.3L1213.4 806.2M1213.1 801.1L1212.8 796.1M1198.3 807.8L1198.3 803.8M1198.3 803.8L1198.2 799.9M1198.2 799.9L1198.1 795.9M1168.4 802.7L1169.4 798.7M1226.1 811.9L1225.3 804.6M1181.5 811.8L1182.5 806.8M1182.5 806.8L1183.5 801.7M1129.4 801.9L1131.2 797.6M1180.4 808.3L1180.5 802.7M1289.6 808.7L1286.5 805.0M1286.5 805.0L1283.4 801.3M1208.3 806.3L1207.8 802.5M1207.3 798.7L1206.9 794.9M1274.7 807.3L1272.0 803.8M1269.2 800.4L1266.5 797.0M1266.5 797.0L1263.8 793.6M1238.1 807.1L1236.8 801.2M1179.1 806.5L1179.8 802.0M1179.8 802.0L1180.6 797.6M1219.5 810.9L1219.0 804.0M1219.0 804.0L1218.4 797.1M1249.9 806.0L1248.5 802.0M1247.1 797.9L1245.6 793.8M1193.8 807.0L1193.8 803.2M1193.8 803.2L1193.7 799.5M1193.7 799.5L1193.7 795.8M1154.1 801.6L1155.9 796.5M1136.7 800.7L1139.1 797.1M1167.0 808.5L1167.7 804.2M1167.7 804.2L1168.3 799.9M1287.5 811.1L1284.7 807.5M1281.9 804.0L1279.2 800.4M1279.2 800.4L1276.4 796.9M1139.5 798.9L1141.2 794.5M1121.0 807.4L1123.8 803.0M1188.2 806.7L1188.1 802.8M1188.0 798.9L1187.9 795.0M1155.6 808.4L1157.1 804.2M1157.1 804.2L1158.7 800.0M1169.6 809.4L1170.5 803.1M1235.5 810.8L1234.7 805.8M1233.5 811.5L1232.0 807.2M1230.4 802.8L1228.9 798.4M1286.6 808.9L1283.9 804.2M1281.2 799.5L1278.4 794.8M1171.6 806.4L1172.6 802.7M1219.8 811.6L1219.2 806.7M1235.5 809.2L1234.8 803.7M1196.8 804.1L1197.4 799.6M1197.4 799.6L1198.0 795.2M1273.0 803.1L1270.3 799.6M1178.6 812.0L1179.0 805.5M1179.5 799.0L1179.9 792.6M1126.1 803.8L1128.9 799.8M1176.3 808.0L1176.6 802.0M1242.6 808.2L1241.5 804.2M1241.5 804.2L1240.4 800.1M1180.3 802.9L1180.8 799.3M1140.8 803.7L1142.9 799.6M1263.0 808.8L1261.6 802.5M1159.3 806.4L1160.7 800.0M1160.7 800.0L1162.1 793.6M1170.4 801.3L1171.6 795.0M1180.0 806.0L1181.2 801.9M1132.6 799.8L1134.5 795.7M1179.4 807.9L1180.5 803.7M1180.5 803.7L1181.6 799.4M1124.2 808.3L1126.6 805.0M1129.0 801.8L1131.5 798.5M1206.6 807.0L1206.3 801.4M1148.2 806.8L1150.1 802.8M1151.9 798.8L1153.8 794.9M1281.8 803.0L1278.8 797.3M1236.1 810.2L1235.6 803.3M1227.0 801.3L1226.0 794.7M1109.5 806.3L1112.9 801.9M1137.7 810.5L1140.2 805.3M1277.7 811.8L1275.3 807.0M1275.3 807.0L1272.8 802.1M1267.5 810.3L1266.0 806.3M1266.0 806.3L1264.5 802.3M1264.5 802.3L1262.9 798.3M1116.3 805.6L1119.2 802.9M1119.2 802.9L1122.1 800.3M1122.1 800.3L1125.0 797.7M1224.1 809.1L1223.5 805.4M1222.9 801.7L1222.3 798.0M1222.3 798.0L1221.7 794.3M1218.1 806.1L1217.1 800.3M1284.8 800.1L1281.8 796.9M1168.7 806.8L1169.9 800.3M1194.8 809.2L1194.9 804.2M1195.0 799.3L1195.0 794.4M1226.8 806.3L1225.9 801.6M1254.7 811.0L1253.4 806.4M1184.0 809.2L1184.7 802.3M1175.3 809.8L1176.1 803.8M1176.1 803.8L1176.8 797.8M1280.3 805.1L1278.4 800.9M1240.3 807.3L1239.2 803.3M1184.6 803.3L1185.3 798.5M1200.2 808.2L1200.2 803.7M1200.2 799.2L1200.2 794.6M1184.2 810.3L1184.8 805.4M1185.4 800.5L1186.0 795.7M1190.0 802.9L1190.0 798.4M1190.0 798.4L1190.0 793.9M1246.6 809.5L1245.7 802.7M1145.5 807.7L1147.1 803.3M1148.7 799.0L1150.3 794.6M1202.4 802.3L1202.5 798.2M1203.9 803.5L1203.9 800.1M1203.9 800.1L1203.9 796.8M1203.9 796.8L1203.9 793.5M1264.2 809.1L1261.9 804.4M1284.7 799.0L1282.2 794.7M1266.0 802.5L1263.6 796.1M1177.6 809.2L1178.7 802.8M1248.2 806.7L1247.2 802.9M1246.2 799.1L1245.2 795.3M1295.9 810.2L1293.0 805.2M1293.0 805.2L1290.1 800.2M1274.1 806.4L1271.8 800.7M1271.8 800.7L1269.5 794.9M1225.2 808.4L1224.4 802.9M1124.8 807.8L1127.4 803.6M1154.9 803.1L1155.9 798.5M1155.9 798.5L1156.8 793.8M1263.8 807.7L1262.3 803.2M1260.7 798.8L1259.1 794.3M1174.5 806.9L1175.1 800.6M1112.2 810.9L1114.5 807.4M1114.5 807.4L1116.9 803.9M1116.9 803.9L1119.2 800.4M1119.2 800.4L1121.6 796.9M1191.1 811.2L1191.0 804.4M1135.5 800.6L1137.1 795.6M1207.1 810.3L1207.3 803.3M1207.3 803.3L1207.5 796.3M1126.4 812.0L1128.6 807.7M1128.6 807.7L1130.8 803.4M1121.6 800.9L1123.8 795.6M1248.7 808.7L1247.6 803.3M1247.6 803.3L1246.6 797.9M1255.3 805.3L1253.9 801.0M1253.9 801.0L1252.4 796.6M1190.5 804.2L1191.3 798.2M1191.3 798.2L1192.2 792.3M1119.3 811.1L1122.3 807.6M1122.3 807.6L1125.4 804.1M1128.4 800.5L1131.4 797.0M1281.3 803.2L1279.2 799.2M1160.7 805.2L1161.7 801.1M1251.1 807.7L1249.8 801.9M1168.7 805.0L1170.4 800.8M1132.6 801.2L1135.1 797.2M1147.8 806.5L1149.6 800.5M1199.2 810.4L1199.6 805.6M1199.9 800.9L1200.2 796.2M1293.8 807.6L1291.3 805.0M1291.3 805.0L1288.8 802.5M1286.3 800.0L1283.8 797.5M1283.8 797.5L1281.3 795.0M1130.4 810.7L1133.1 804.6M1133.1 804.6L1135.8 798.6M1135.8 798.6L1138.5 792.5M1149.2 805.8L1150.8 800.4M1288.3 805.1L1285.7 802.5M1285.7 802.5L1283.0 799.9M1283.0 799.9L1280.4 797.2M1273.6 806.4L1271.1 802.5M1268.6 798.6L1266.1 794.6M1125.5 808.2L1128.2 802.2M1267.9 805.4L1266.3 801.3M1264.7 797.2L1263.1 793.2M1248.8 807.1L1247.5 800.7M1202.2 804.4L1202.2 799.3M1284.0 808.3L1281.1 803.5M1281.1 803.5L1278.2 798.6M1172.1 801.8L1172.7 797.0M1153.7 806.4L1155.4 801.0M1155.4 801.0L1157.1 795.5M1183.6 807.9L1184.5 804.2M1184.5 804.2L1185.4 800.5M1275.1 809.8L1272.5 805.6M1272.5 805.6L1270.0 801.4M1123.6 800.9L1126.3 797.1M1126.3 797.1L1128.9 793.2M1193.2 812.0L1194.0 807.0M1229.6 805.5L1228.9 801.7M1228.2 797.9L1227.5 794.1M1242.5 803.6L1240.7 797.5M1212.6 801.0L1212.2 797.1M1127.7 800.1L1129.9 795.8M1258.4 807.4L1256.8 801.4M1191.1 807.5L1191.0 803.0M1235.9 806.5L1234.4 801.5M1240.2 808.2L1239.5 803.9M1239.5 803.9L1238.7 799.7M1153.2 809.1L1154.8 804.4M1154.8 804.4L1156.3 799.8M1138.4 808.0L1140.7 804.2M1140.7 804.2L1142.9 800.5M1179.4 803.1L1180.1 796.4M1117.4 806.5L1120.4 801.3M1191.5 807.6L1191.4 801.8M1219.3 809.7L1218.7 805.0M1218.7 805.0L1218.2 800.3M1133.0 809.8L1135.2 805.7M1135.2 805.7L1137.4 801.5M1137.4 801.5L1139.7 797.3M1197.6 804.3L1198.2 799.5M1178.1 808.3L1179.0 803.5M1179.0 803.5L1180.0 798.7M1258.2 808.2L1256.3 802.8M1171.8 807.4L1172.6 801.1M1247.8 803.8L1246.3 800.3M1127.3 800.7L1130.1 796.8M1275.7 803.6L1273.0 799.3M1230.0 811.8L1229.1 806.7M1229.1 806.7L1228.3 801.6M1228.3 801.6L1227.5 796.6M1161.2 799.9L1162.8 795.4M1216.3 802.8L1215.4 798.8M1204.6 809.7L1205.1 805.0M1139.1 806.4L1140.6 802.3M1273.3 804.8L1271.1 799.6M1110.8 808.1L1113.3 805.0M1113.3 805.0L1115.9 801.8M1270.3 808.5L1268.0 803.3M1211.2 806.5L1211.1 802.1M1211.0 797.7L1210.9 793.3M1274.4 810.4L1271.8 805.7M1269.1 801.1L1266.4 796.4M1270.6 801.0L1268.0 795.8M1176.9 807.9L1177.4 801.3M1132.8 809.0L1135.2 804.9M1208.6 809.2L1208.0 804.4M1240.6 806.2L1240.0 802.7M1239.3 799.2L1238.7 795.7M1136.2 808.9L1138.3 803.9M1140.5 799.0L1142.6 794.0M1157.7 802.3L1158.7 795.3M1273.7 809.8L1271.1 803.6M1271.1 803.6L1268.4 797.4M1118.1 803.3L1121.2 800.0M1121.2 800.0L1124.2 796.6M1121.7 799.8L1124.7 795.8M1150.4 807.8L1151.7 804.2M1154.3 796.9L1155.6 793.2M1197.1 802.3L1197.4 798.4M1277.5 807.1L1274.7 803.5M1274.7 803.5L1271.8 799.9M1182.8 808.4L1183.6 802.0M1183.6 802.0L1184.3 795.5M1194.5 810.9L1194.5 804.4M1269.6 807.3L1267.0 801.6M1120.1 806.0L1123.0 801.9M1291.0 811.4L1288.5 805.8M1288.5 805.8L1286.0 800.2M1273.2 809.6L1270.9 804.0M1270.9 804.0L1268.5 798.3M1268.5 798.3L1266.2 792.7M1190.1 811.2L1190.8 805.1M1190.8 805.1L1191.4 798.9M1173.1 802.7L1174.4 796.5M1240.6 807.2L1238.9 803.1M1221.1 807.7L1221.1 803.5M1221.1 803.5L1221.0 799.4M1222.1 808.4L1221.0 804.0M1235.5 811.6L1234.0 804.3M1234.0 804.3L1232.6 797.0M1113.4 807.3L1116.7 803.4M1116.7 803.4L1119.9 799.6M1119.9 799.6L1123.2 795.7M1272.3 804.6L1270.4 798.4M1270.4 798.4L1268.5 792.2M1167.8 811.4L1169.3 807.0M1172.4 798.1L1173.9 793.7M1285.4 806.5L1282.6 803.2M1276.9 796.6L1274.0 793.4M1168.5 808.1L1169.1 803.3M1235.0 809.4L1234.5 804.5M1234.0 799.6L1233.6 794.7M1284.4 804.3L1281.7 800.8M1279.0 797.2L1276.3 793.6M1143.4 806.2L1145.0 801.7M1131.4 810.7L1133.3 805.5M1135.2 800.2L1137.0 795.0M1289.5 801.5L1286.1 797.7M1151.5 810.2L1153.3 804.3M1264.9 805.1L1262.5 799.9M1262.5 799.9L1260.1 794.7M1182.7 801.7L1183.6 795.7M1293.8 806.0L1291.0 803.2M1285.5 797.7L1282.7 794.9M1250.0 806.6L1248.2 801.8M1295.3 811.5L1292.1 806.2M1292.1 806.2L1288.9 800.9M1288.9 800.9L1285.6 795.6M1203.9 804.7L1203.5 798.7M1203.5 798.7L1203.1 792.8M1233.2 811.2L1232.5 807.0M1202.8 807.6L1202.4 804.0M1202.4 804.0L1202.0 800.5M1201.6 796.9L1201.2 793.4M1223.5 797.9L1223.1 792.3M1281.5 807.0L1278.7 801.9M1213.5 809.7L1213.3 805.5M1213.3 805.5L1213.1 801.4M1212.8 797.2L1212.6 793.1M1253.9 798.9L1251.7 792.8M1289.9 811.1L1287.5 807.5M1282.7 800.2L1280.3 796.5M1160.1 804.3L1161.0 797.1M1285.2 798.3L1282.7 793.8M1215.2 805.1L1215.1 800.0M1273.0 805.2L1270.5 801.0M1163.3 807.2L1164.6 803.1M1200.4 808.9L1200.7 802.5M1145.0 807.1L1147.3 802.9M1193.9 802.4L1193.6 798.5M1127.6 806.6L1129.6 801.9M1247.8 806.4L1245.9 802.2M1245.9 802.2L1244.0 797.9M1244.0 797.9L1242.0 793.6M1168.3 810.2L1169.5 804.5M1170.8 798.8L1172.1 793.1M1269.8 800.5L1267.1 794.2M1292.6 810.9L1289.8 807.3M1287.0 803.6L1284.2 800.0M1153.1 806.3L1154.9 800.6M1154.9 800.6L1156.7 794.8M1165.5 811.4L1166.6 804.1M1166.6 804.1L1167.7 796.8M1216.8 806.5L1215.9 802.9M1215.9 802.9L1214.9 799.3M1253.2 806.9L1251.7 801.9M1240.9 800.7L1239.3 796.1M1275.8 800.9L1273.8 795.4M1214.2 801.5L1213.3 797.0M1167.9 806.6L1169.0 801.7M1272.3 808.4L1269.9 802.6M1234.1 808.0L1233.1 804.1M1232.1 800.2L1231.0 796.3M1260.7 812.0L1259.3 806.8M1259.3 806.8L1257.9 801.7M1280.6 806.6L1278.4 801.9M1230.8 801.7L1230.5 796.7M1232.8 805.0L1231.7 800.3M1231.7 800.3L1230.6 795.7M1229.8 808.9L1229.3 804.0M1229.3 804.0L1228.9 799.1M1190.8 811.3L1191.5 805.5M1191.5 805.5L1192.2 799.8M1192.2 799.8L1192.9 794.1M1259.5 810.4L1258.0 805.5M1258.0 805.5L1256.6 800.6M1214.5 805.0L1214.4 799.3M1214.4 799.3L1214.3 793.5M1231.1 810.9L1229.7 804.0M1234.1 807.6L1233.4 803.5M1232.6 799.5L1231.9 795.5M1125.4 799.1L1127.8 794.0M1239.2 806.2L1238.3 801.6M1265.5 809.8L1263.8 803.8M1182.4 807.1L1182.6 803.7M1182.9 800.3L1183.1 797.0M1183.1 797.0L1183.3 793.6M1260.6 811.4L1259.1 807.2M1256.3 798.8L1254.9 794.6M1186.1 808.2L1186.8 804.7M1187.5 801.1L1188.2 797.6M1188.2 797.6L1188.8 794.1M1209.4 808.3L1209.1 802.4M1209.1 802.4L1208.8 796.6M1236.3 810.1L1235.1 805.7M1235.1 805.7L1234.0 801.4M1132.1 806.4L1133.9 803.1M1133.9 803.1L1135.6 799.9M1137.4 804.3L1139.1 800.8M1139.1 800.8L1140.8 797.2M1285.5 801.6L1282.5 798.7M1289.3 808.2L1286.6 805.0M1286.6 805.0L1283.8 801.9M1281.0 798.7L1278.2 795.6M1236.7 804.6L1236.1 800.2M1236.1 800.2L1235.4 795.7M1129.0 802.2L1131.4 798.4M1198.1 804.0L1198.1 800.0M1198.1 800.0L1198.2 796.1M1225.7 804.6L1224.6 800.2M1259.8 810.9L1257.5 806.7M1257.5 806.7L1255.2 802.4M1120.9 805.8L1122.9 802.3M1284.1 810.5L1281.9 805.8M1279.8 801.1L1277.6 796.4M1286.6 802.3L1284.1 797.2M1246.8 799.8L1245.8 796.2M1256.2 808.0L1254.9 803.9M1254.9 803.9L1253.5 799.7M1196.0 806.3L1196.1 802.1M1160.8 804.3L1162.5 799.8M1162.5 799.8L1164.3 795.2M1233.0 807.7L1231.9 803.8M1240.0 810.6L1239.3 804.6M1239.3 804.6L1238.7 798.6M1271.9 797.5L1269.4 794.3M1173.3 810.1L1174.1 805.8M1174.1 805.8L1174.9 801.4M1255.2 808.6L1254.0 803.9M1254.0 803.9L1252.9 799.2M1254.2 806.8L1252.2 803.1M1164.4 808.5L1166.0 804.2M1166.0 804.2L1167.7 800.0M1167.7 800.0L1169.3 795.7M1152.5 806.1L1153.5 800.4M1249.1 801.7L1247.2 796.7M1117.2 807.2L1119.8 804.5M1145.4 806.6L1146.6 801.1M1163.2 806.3L1164.8 801.7M1286.5 798.3L1284.0 794.3M1108.6 808.8L1111.8 804.5M1115.0 800.2L1118.2 795.9M1209.4 798.3L1209.3 792.3M1225.5 809.6L1225.2 803.8M1239.6 798.8L1238.2 794.9M1275.4 810.8L1273.6 806.9M1143.5 799.2L1145.1 793.2M1276.1 811.3L1273.8 806.4M1178.1 806.8L1178.4 802.7M1230.7 804.5L1230.3 800.0M1290.2 809.5L1287.3 806.5M1287.3 806.5L1284.5 803.5M1212.8 805.8L1212.8 801.1M1212.8 801.1L1212.7 796.3M1122.6 803.5L1125.4 800.1M1125.4 800.1L1128.3 796.7M1213.8 810.4L1213.1 803.4M1117.7 809.5L1120.3 805.9M1120.3 805.9L1122.8 802.4M1125.3 798.8L1127.8 795.2M1266.9 811.9L1265.3 806.9M1265.3 806.9L1263.7 801.8M1263.7 801.8L1262.1 796.8M1260.7 810.2L1258.4 805.9M1258.4 805.9L1256.2 801.7M1256.2 801.7L1254.0 797.5M1254.0 797.5L1251.8 793.2M1163.8 806.3L1164.5 802.3M1242.2 808.6L1240.9 803.3M1148.8 807.1L1150.1 800.8M1292.0 807.4L1289.4 802.8M1130.6 809.8L1132.2 805.7M1125.6 807.2L1128.5 803.4M1235.0 806.1L1233.4 802.8M1233.4 802.8L1231.9 799.5M1149.8 801.5L1151.7 796.5M1252.4 807.1L1251.3 802.5M1245.1 808.1L1243.5 803.5M1243.5 803.5L1241.8 799.0M1296.7 808.6L1293.5 804.0M1293.5 804.0L1290.2 799.3M1207.1 800.1L1206.4 793.6M1116.8 802.6L1120.1 800.0M1123.3 797.3L1126.6 794.7M1269.5 805.7L1266.9 800.6M1141.0 810.2L1143.4 803.1M1290.5 810.8L1288.2 806.8M1288.2 806.8L1285.8 802.7M1116.7 808.4L1119.8 803.4M1186.5 809.3L1187.4 802.7M1292.2 809.8L1289.0 806.2M1285.8 802.5L1282.6 798.8M1282.6 798.8L1279.4 795.1M1240.1 805.9L1238.7 802.1M1221.6 806.4L1220.5 803.0M1220.5 803.0L1219.5 799.5M1229.3 808.0L1227.9 803.2M1227.9 803.2L1226.5 798.5M1226.5 798.5L1225.1 793.7M1137.2 808.3L1138.7 802.7M1136.9 801.9L1138.8 795.3M1260.0 799.5L1258.3 796.2M1119.8 811.2L1122.1 807.5M1126.7 800.2L1129.1 796.5M1296.3 811.8L1293.4 807.9M1290.5 804.1L1287.6 800.2M1252.0 809.8L1250.1 806.0M1250.1 806.0L1248.1 802.1M1182.4 809.5L1182.7 805.4M1182.7 805.4L1183.1 801.3M1183.4 797.2L1183.8 793.1M1275.3 805.5L1272.7 801.3M1242.4 800.6L1241.3 794.0M1236.3 809.8L1235.5 805.9M1235.5 805.9L1234.7 802.1M1234.7 802.1L1233.8 798.2M1233.8 798.2L1233.0 794.3M1158.0 799.9L1159.8 796.2M1152.3 807.1L1154.1 801.5M1154.1 801.5L1155.9 796.0M1250.6 802.9L1248.6 796.2M1177.7 809.5L1178.4 803.5M1248.4 808.3L1246.8 804.1M1199.8 809.1L1200.2 805.0M1158.5 804.2L1159.4 797.7M1225.3 803.7L1224.4 799.5M1122.1 807.5L1124.8 803.3M1127.5 799.0L1130.3 794.7M1281.0 803.6L1278.0 797.7M1129.1 810.1L1131.4 805.4M1131.4 805.4L1133.8 800.7M1133.8 800.7L1136.1 796.1M1219.1 812.0L1218.6 805.0M1290.5 809.7L1287.8 804.2M1287.8 804.2L1285.0 798.8M1151.2 806.3L1152.4 801.5M1182.8 805.9L1183.4 802.1M1184.1 798.2L1184.8 794.3M1113.6 803.6L1116.1 800.1M1216.1 807.9L1215.2 804.2M1138.4 804.5L1140.6 799.6M1131.2 803.1L1134.1 798.4M1194.6 807.1L1195.1 802.7M1195.1 802.7L1195.5 798.3M1195.5 798.3L1195.9 793.9M1175.0 803.3L1176.3 797.2M1233.9 797.8L1233.0 793.4M1188.3 810.2L1189.0 805.1M1168.6 808.5L1170.1 804.8M1170.1 804.8L1171.5 801.2M1171.5 801.2L1173.0 797.5M1123.1 808.6L1125.8 802.9M1125.8 802.9L1128.6 797.2M1203.8 804.8L1203.4 798.9M1203.4 798.9L1203.0 793.0M1295.1 807.1L1292.6 804.0M1123.6 800.7L1125.6 797.8M1186.1 808.3L1186.0 802.3M1286.8 811.2L1284.1 806.9M1120.5 811.2L1122.8 807.3M1239.0 808.7L1238.4 803.9M1267.7 809.7L1266.2 804.4M1266.2 804.4L1264.6 799.0M1287.8 809.5L1285.2 805.3M1285.2 805.3L1282.7 801.1M1137.1 808.9L1138.8 803.6M1138.8 803.6L1140.6 798.4M1204.8 810.9L1205.2 804.6M1205.2 804.6L1205.7 798.3M1267.3 806.2L1265.6 802.7M1226.7 811.8L1226.5 807.2M1226.5 807.2L1226.2 802.7M1209.6 809.7L1208.9 805.0M1208.9 805.0L1208.2 800.3M1208.2 800.3L1207.5 795.6M1147.1 801.1L1149.4 796.4M1225.1 802.5L1224.8 798.0M1224.8 798.0L1224.6 793.4M1125.1 798.4L1127.8 795.2M1186.0 810.2L1186.9 804.2M1187.9 798.3L1188.8 792.3M1174.6 809.0L1175.2 802.4M1175.2 802.4L1175.7 795.8M1267.7 803.9L1265.6 797.9M1195.0 810.9L1195.0 805.2M1195.0 805.2L1194.9 799.5M1136.4 798.3L1138.6 793.7M1269.8 808.9L1268.2 803.1M1266.2 808.6L1264.5 804.5M1262.8 800.5L1261.2 796.5M1123.2 810.7L1125.4 806.5M1125.4 806.5L1127.6 802.3M1221.1 804.6L1220.7 798.9M1111.2 808.2L1113.5 806.0M1113.5 806.0L1115.9 803.7M1248.0 797.0L1246.8 793.1M1280.0 801.8L1277.6 797.4M1277.6 797.4L1275.2 793.0M1228.3 811.3L1228.0 804.4M1228.0 804.4L1227.7 797.5M1270.5 807.2L1267.8 803.0M1267.8 803.0L1265.2 798.9M1154.3 807.6L1155.9 801.1M1119.5 808.2L1121.8 804.8M1121.8 804.8L1124.1 801.5M1126.5 798.2L1128.8 794.9M1112.7 802.1L1115.9 797.6M1115.9 797.6L1119.0 793.0M1187.3 808.2L1187.6 803.9M1237.4 810.8L1236.1 806.2M1218.8 808.3L1218.1 802.3M1265.8 807.0L1264.1 802.6M1264.1 802.6L1262.4 798.3M1262.4 798.3L1260.7 793.9M1152.8 806.5L1154.8 801.5M1207.4 809.6L1206.8 804.9M1206.8 804.9L1206.1 800.1M1279.2 810.0L1276.9 805.3M1205.5 806.4L1205.6 800.7M1241.4 810.6L1240.7 803.9M1143.1 805.1L1145.3 798.5M1226.8 806.4L1225.6 802.7M1225.6 802.7L1224.4 799.1M1224.4 799.1L1223.2 795.4M1288.6 810.7L1286.0 806.1M1283.3 801.4L1280.6 796.8M1112.9 810.0L1116.0 806.7M1119.0 803.5L1122.1 800.2M1125.2 796.9L1128.3 793.7M1176.1 810.8L1177.5 806.6M1177.5 806.6L1178.8 802.4M1178.8 802.4L1180.1 798.2M1180.1 798.2L1181.4 794.1M1246.1 803.1L1244.9 798.9M1151.6 807.1L1152.8 803.7M1152.8 803.7L1154.0 800.3M1251.9 808.4L1250.6 802.8M1250.6 802.8L1249.4 797.3M1244.7 806.8L1243.6 802.2M1243.6 802.2L1242.5 797.6M1290.8 807.3L1287.7 804.2M1195.7 807.4L1195.8 801.8M1227.6 807.0L1226.2 802.8M1173.9 808.6L1174.6 804.9M1175.9 797.5L1176.6 793.7M1251.4 809.5L1249.8 804.6M1249.8 804.6L1248.1 799.7M1221.0 799.0L1220.4 794.2M1130.6 806.8L1133.1 802.5M1135.6 798.3L1138.1 794.1M1264.5 804.0L1262.7 799.8M1262.7 799.8L1260.9 795.6M1162.1 801.3L1163.1 796.4M1227.7 805.8L1226.7 801.7M1155.9 799.8L1157.4 796.3M1138.3 803.1L1140.0 796.8M1185.5 811.3L1186.5 807.0M1186.5 807.0L1187.6 802.7M1137.6 797.9L1139.5 793.1M1250.3 811.6L1248.5 805.4M1246.6 799.2L1244.7 793.0M1232.9 805.9L1231.8 801.4M1231.8 801.4L1230.8 797.0M1282.1 809.4L1280.2 803.7M1135.3 808.4L1137.9 804.1M1137.9 804.1L1140.5 799.9M1280.2 805.6L1277.3 801.8M1295.4 810.2L1292.0 805.9M1292.0 805.9L1288.6 801.5M1142.7 808.2L1145.0 801.9M1194.0 800.8L1194.7 794.6M1284.7 809.6L1281.9 805.2M1279.1 800.7L1276.4 796.3M1113.3 809.7L1115.5 806.1M1115.5 806.1L1117.7 802.5M1117.7 802.5L1120.0 798.9M1291.6 804.8L1288.8 802.3M1286.0 799.8L1283.2 797.3M1123.2 810.1L1125.6 806.3M1125.6 806.3L1127.9 802.6M1130.3 798.8L1132.7 795.0M1270.7 807.6L1268.4 804.1M1266.2 800.6L1263.9 797.1M1161.5 804.7L1163.2 800.4M1133.7 807.7L1136.1 803.5M1136.1 803.5L1138.5 799.3M1246.4 810.3L1245.2 806.1M1245.2 806.1L1244.0 801.9M1214.7 810.5L1214.0 806.3M1214.0 806.3L1213.2 802.2M1163.4 808.9L1164.4 802.2M1132.8 797.4L1135.4 794.2M1253.1 811.7L1251.6 804.8M1195.4 806.1L1195.5 801.7M1195.6 797.3L1195.7 792.9M1141.4 807.0L1143.3 800.4M1143.3 800.4L1145.3 793.8M1263.0 803.0L1260.6 798.6M1260.6 798.6L1258.2 794.1M1153.7 811.2L1155.7 807.0M1157.8 802.9L1159.8 798.8M1262.7 810.9L1261.2 805.8M1261.2 805.8L1259.7 800.7M1169.0 811.7L1169.5 806.3M1112.9 810.2L1115.8 806.1M1118.7 802.1L1121.6 798.0M1161.0 801.6L1162.7 795.0M1125.2 804.3L1128.1 800.5M1128.1 800.5L1130.9 796.7M1191.8 801.8L1192.5 795.8M1146.0 808.2L1148.1 802.7M1126.9 812.0L1129.1 807.1M1129.1 807.1L1131.3 802.1M1131.3 802.1L1133.5 797.2M1122.8 808.7L1125.7 805.2M1131.5 798.3L1134.3 794.8M1132.9 810.1L1134.7 805.3M1255.8 799.2L1254.4 794.2M1258.5 798.9L1257.1 794.6M1234.4 810.8L1233.9 806.1M1233.9 806.1L1233.3 801.4M1194.6 810.4L1194.8 806.3M1194.8 806.3L1195.0 802.3M1159.2 810.4L1160.6 806.3M1162.1 802.2L1163.5 798.1M1177.0 799.1L1178.4 795.2M1208.7 808.7L1208.1 803.0M1208.1 803.0L1207.4 797.2M1120.9 807.3L1124.0 803.5M1124.0 803.5L1127.1 799.7M1203.7 808.5L1204.2 804.8M1215.0 800.9L1214.7 794.3M1122.7 807.2L1124.7 802.7M1126.8 798.2L1128.9 793.7M1225.1 806.4L1223.9 802.2M1222.7 797.9L1221.4 793.7M1117.8 806.1L1119.8 802.6M1180.4 803.3L1180.7 798.7M1180.7 798.7L1181.0 794.1M1295.1 806.8L1292.0 801.9M1294.4 809.5L1291.7 807.0M1291.7 807.0L1289.1 804.5M1142.9 807.7L1144.6 803.7M1173.0 804.4L1173.7 800.0M1187.3 805.2L1188.0 800.2M1132.6 811.1L1134.9 804.5M1210.4 807.1L1210.0 800.8M1135.1 806.2L1137.6 801.4M1249.4 809.5L1248.1 804.4M1248.1 804.4L1246.8 799.3M1284.9 804.8L1281.7 802.1M1281.7 802.1L1278.6 799.5M1189.5 808.4L1189.4 804.0M1118.9 808.7L1121.8 804.9M1124.7 801.1L1127.5 797.3M1169.8 801.9L1171.2 796.7M1174.9 807.7L1176.1 803.7M1294.2 811.7L1291.0 808.5M1291.0 808.5L1287.8 805.4M1284.7 802.2L1281.5 799.1M1141.2 809.9L1143.3 803.3M1279.5 809.7L1277.1 805.7M1277.1 805.7L1274.7 801.8M1130.9 807.2L1133.3 803.0M1135.8 798.9L1138.3 794.7M1196.3 800.0L1197.1 794.9M1146.3 806.1L1147.9 800.9M1124.0 801.7L1126.8 796.1M1156.6 807.8L1158.4 803.5M1158.4 803.5L1160.3 799.2M1270.5 797.4L1268.3 792.8M1205.5 807.6L1204.9 803.3M1208.1 803.1L1208.3 797.6M1184.4 804.3L1184.5 799.3M1190.4 811.5L1190.9 805.2M1261.7 806.5L1260.1 802.4M1141.9 801.7L1143.3 797.3M1143.3 797.3L1144.8 792.9M1114.4 808.8L1116.9 803.8M1119.3 798.9L1121.8 794.0M1109.3 809.5L1112.5 805.7M1118.8 798.1L1121.9 794.3M1196.8 811.8L1197.4 807.4M1197.4 807.4L1198.0 803.0M1220.1 810.9L1219.7 806.0M1219.7 806.0L1219.2 801.1M1201.8 800.5L1202.1 796.3M1147.5 812.0L1148.9 807.8M1127.7 809.8L1130.2 806.0M1130.2 806.0L1132.6 802.2M1214.9 805.4L1214.5 799.4M1124.3 804.3L1127.0 798.1M1138.3 798.9L1140.0 792.8M1163.3 811.5L1164.6 806.2M1164.6 806.2L1165.8 801.0M1165.8 801.0L1167.1 795.7M1210.6 810.1L1210.0 803.8M1210.0 803.8L1209.4 797.5M1277.6 806.7L1275.2 802.3M1272.8 797.9L1270.3 793.5M1291.8 808.5L1288.6 803.7M1288.6 803.7L1285.4 799.0M1285.4 799.0L1282.2 794.3M1284.7 797.4L1281.5 793.0M1222.6 810.7L1221.7 804.3M1221.7 804.3L1220.9 797.8M1242.2 807.6L1241.5 802.9M1241.5 802.9L1240.7 798.2M1288.6 811.7L1286.5 808.0M1284.4 804.2L1282.2 800.5M1211.7 807.4L1210.8 801.0M1181.5 809.6L1182.0 805.2M1182.6 800.9L1183.2 796.6M1171.8 811.7L1172.2 807.4M1119.8 809.2L1121.9 805.4M1121.9 805.4L1124.0 801.5M1126.2 797.7L1128.3 793.8M1235.6 806.3L1234.3 802.0M1234.3 802.0L1233.1 797.8M1233.1 797.8L1231.9 793.5M1115.2 808.4L1118.0 803.6M1120.7 798.8L1123.5 794.0M1162.7 806.8L1164.0 802.6M1281.4 809.9L1279.2 804.3M1194.6 809.4L1195.3 803.4M1174.0 806.4L1174.4 801.2M1174.4 801.2L1174.9 795.9M1241.5 807.1L1240.6 803.5M1240.6 803.5L1239.8 800.0M1239.8 800.0L1238.9 796.4M1187.1 807.1L1187.6 803.6M1235.0 807.7L1234.2 803.6M1234.2 803.6L1233.4 799.4M1119.1 805.8L1121.2 801.7M1191.1 811.3L1191.4 806.5M1288.8 811.7L1286.7 808.0M1282.3 800.6L1280.1 796.9M1280.1 796.9L1278.0 793.2M1198.5 811.1L1199.1 804.2M1278.6 806.5L1276.1 802.5M1276.1 802.5L1273.7 798.4M1172.9 809.9L1173.7 805.5M1173.7 805.5L1174.6 801.2M1174.6 801.2L1175.5 796.9M1261.4 810.8L1259.3 805.0M1259.3 805.0L1257.1 799.2M1243.6 802.9L1242.8 796.4M1161.9 800.0L1163.7 794.2M1158.4 811.8L1160.0 806.8M1160.0 806.8L1161.5 801.9M1161.5 801.9L1163.1 796.9M1146.5 810.0L1148.3 803.2M1148.3 803.2L1150.1 796.5M1244.2 810.5L1242.9 806.1M1214.4 801.1L1214.5 794.7M1282.9 810.9L1280.3 806.0M1228.7 800.4L1227.4 796.4M1288.7 808.3L1286.2 804.7M1140.4 799.1L1142.2 794.4M1119.1 809.1L1121.3 805.3M1121.3 805.3L1123.5 801.4M1123.5 801.4L1125.7 797.6M1272.3 809.6L1270.3 804.9M1123.8 799.4L1126.5 796.4M1171.8 808.5L1173.2 804.3M1174.7 800.0L1176.2 795.7M1140.9 806.1L1143.1 801.7M1137.0 810.2L1139.3 803.2M1160.5 807.0L1161.9 801.3M1161.9 801.3L1163.4 795.6M1210.5 798.3L1210.5 792.6M1120.2 806.8L1123.3 802.2M1126.4 797.6L1129.5 793.1M1205.3 808.0L1205.7 801.3M1205.7 801.3L1206.0 794.7M1281.2 808.3L1278.4 804.5M1249.7 808.9L1248.1 802.3M1211.1 807.2L1210.9 802.5M1210.9 802.5L1210.7 797.8M1210.7 797.8L1210.6 793.1M1240.1 803.1L1238.9 799.2M1238.9 799.2L1237.7 795.4M1251.3 806.8L1249.4 801.8M1249.4 801.8L1247.4 796.9M1247.8 809.4L1246.7 805.2M1245.6 800.9L1244.5 796.7M1206.7 809.8L1206.7 804.0M1206.7 804.0L1206.8 798.2M1163.4 809.5L1164.3 805.5M1164.3 805.5L1165.2 801.4M1166.2 797.3L1167.1 793.3M1160.4 809.5L1161.6 805.2M1161.6 805.2L1162.8 801.0M1266.5 809.3L1265.0 803.8M1265.0 803.8L1263.6 798.3M1282.1 803.6L1279.9 801.0M1279.9 801.0L1277.6 798.4M1277.6 798.4L1275.3 795.8M1215.1 809.3L1214.9 805.5M1214.8 801.7L1214.7 797.9M1126.5 807.2L1128.9 802.9M1202.0 801.3L1202.0 796.4M1282.2 809.4L1279.2 803.9M1276.2 798.4L1273.3 792.9M1283.7 808.8L1281.5 804.2M1279.2 799.7L1277.0 795.1M1276.6 811.5L1274.9 806.9M1274.9 806.9L1273.1 802.3M1271.4 797.7L1269.7 793.1M1226.9 806.3L1226.1 802.7M1225.2 799.1L1224.3 795.5M1253.0 809.3L1251.0 804.5M1249.0 799.7L1247.1 794.9M1207.9 807.2L1207.4 803.3M1230.9 809.6L1229.6 803.7M1207.9 806.0L1208.0 801.7M1273.5 810.4L1270.9 805.6M1270.9 805.6L1268.2 800.8M1163.0 809.4L1164.6 804.5M1113.2 808.0L1116.1 805.4M1125.0 797.7L1127.9 795.1M1137.2 806.9L1138.7 801.9M1273.8 809.2L1271.3 803.9M1271.3 803.9L1268.8 798.7M1197.2 803.6L1196.8 799.2M1196.8 799.2L1196.5 794.7M1188.6 802.8L1188.7 799.0M1221.0 811.4L1220.5 806.1M1220.5 806.1L1220.0 800.7M1208.8 808.9L1208.7 804.2M1208.6 799.4L1208.4 794.6M1178.6 810.0L1179.7 805.1M1180.8 800.3L1181.9 795.5M1289.2 804.5L1286.2 801.4M1125.1 811.9L1127.2 806.3M1293.8 804.2L1290.7 799.8M1290.7 799.8L1287.7 795.5M1274.0 811.5L1271.4 806.5M1271.4 806.5L1268.8 801.4M1287.4 807.4L1284.4 802.4M1263.8 807.5L1262.3 802.9M1202.0 811.6L1201.9 804.5M1223.7 810.8L1222.6 806.2M1221.5 801.7L1220.4 797.1M1120.1 809.9L1122.4 805.4M1122.4 805.4L1124.7 800.8M1214.4 811.2L1213.8 806.2M1243.5 806.9L1241.8 802.9M1241.8 802.9L1240.2 798.9M1240.2 798.9L1238.5 794.9M1269.8 810.1L1268.2 803.7M1268.2 803.7L1266.7 797.2M1163.7 798.0L1165.0 793.6M1237.4 806.1L1236.2 801.8M1159.1 808.6L1160.7 802.7M1230.4 811.6L1229.5 805.8M1191.4 803.2L1192.2 799.4M1151.1 810.2L1153.1 805.9M1155.1 801.7L1157.1 797.4M1157.1 797.4L1159.1 793.1M1116.4 811.3L1119.4 805.4M1119.4 805.4L1122.3 799.5M1192.6 798.8L1193.4 794.9M1161.8 810.1L1163.0 805.0M1245.0 806.4L1243.3 801.4M1291.0 807.1L1288.2 804.4M1142.8 804.3L1144.4 798.0M1222.7 810.8L1222.1 803.8M1222.1 803.8L1221.5 796.7M1271.2 804.0L1268.5 800.3M1223.8 806.4L1223.6 803.1M1165.8 804.1L1166.9 799.3M1166.9 799.3L1168.0 794.5M1269.5 809.8L1267.9 805.9M1110.2 808.7L1112.8 806.4M1112.8 806.4L1115.5 804.0M1118.1 801.7L1120.8 799.4M1123.4 797.1L1126.0 794.7M1192.7 807.3L1192.8 802.8M1295.2 807.4L1292.5 802.9M1139.4 811.1L1140.8 805.1M1169.4 807.0L1169.9 801.0M1261.4 801.8L1259.2 795.4M1271.4 805.7L1269.6 801.9M1269.6 801.9L1267.8 798.1M1153.5 797.9L1154.7 793.8M1259.0 806.2L1257.4 802.3M1257.4 802.3L1255.7 798.4M1255.7 798.4L1254.1 794.5M1216.9 811.9L1216.1 807.3M1215.2 802.7L1214.4 798.1M1166.4 800.3L1167.7 794.4M1153.1 811.4L1154.2 806.5M1278.9 798.4L1276.2 794.1M1153.4 806.9L1154.7 802.8M1202.2 807.2L1202.5 800.7M1290.5 805.1L1288.0 801.8M1253.1 806.8L1251.6 801.4M1251.6 801.4L1250.1 796.1M1214.2 811.9L1213.7 807.4M1238.1 807.6L1237.5 801.9M1208.2 810.3L1208.2 804.1M1131.0 809.9L1132.9 804.9M1132.9 804.9L1134.8 799.9M1134.8 799.9L1136.7 794.9M1211.4 808.0L1211.1 801.6M1240.5 808.4L1239.4 802.9M1258.6 808.7L1256.6 803.8M1256.6 803.8L1254.7 798.8M1227.2 806.3L1226.0 802.0M1274.7 811.8L1272.3 806.0M1272.3 806.0L1269.9 800.3M1269.9 800.3L1267.5 794.5M1202.1 806.3L1201.6 800.2M1257.1 799.9L1255.8 795.1M1234.1 808.3L1233.5 804.1M1233.5 804.1L1232.8 799.9M1190.8 800.3L1191.4 795.5M1144.2 809.6L1145.9 803.9M1246.1 809.7L1244.2 802.9M1244.2 802.9L1242.3 796.1M1143.6 806.9L1144.8 801.8M1166.5 799.4L1167.6 795.2M1191.6 806.2L1192.3 800.1M1192.3 800.1L1193.1 794.0M1242.6 811.4L1241.0 807.3M1144.2 800.2L1146.3 795.3M1209.7 804.1L1209.6 797.9M1276.9 806.4L1274.4 802.1M1206.5 811.7L1206.0 805.9M1205.5 800.1L1205.0 794.3M1161.4 809.2L1162.2 805.1M1271.4 798.3L1268.7 793.9M1284.7 804.0L1281.5 800.1M1150.8 811.1L1152.5 805.8M1178.3 805.6L1178.7 800.5M1204.5 809.9L1204.1 805.3M1191.6 809.5L1191.4 805.2M1116.1 807.4L1119.2 803.8M1122.3 800.3L1125.4 796.8M1218.6 804.1L1218.0 798.2M1269.4 801.1L1267.5 796.1M1202.8 805.0L1203.3 800.4M1203.3 800.4L1203.8 795.7M1255.0 801.2L1253.4 796.3M1225.6 807.2L1225.4 801.5M1178.5 803.8L1179.7 800.4M1179.7 800.4L1180.9 797.0M1180.9 797.0L1182.0 793.5M1164.2 800.8L1165.7 796.0M1234.1 807.0L1233.5 802.4M1252.4 811.8L1250.6 806.3M1248.8 800.9L1247.0 795.4M1275.0 803.0L1272.8 798.9M1272.8 798.9L1270.5 794.9M1216.6 812.0L1216.1 805.1M1179.8 808.6L1180.0 804.1M1226.2 806.4L1225.0 801.3M1225.0 801.3L1223.8 796.1M1153.6 806.0L1154.9 799.6M1118.0 808.1L1121.2 804.8M1121.2 804.8L1124.3 801.5M1124.3 801.5L1127.4 798.2M1273.4 811.4L1271.2 804.9M1279.6 811.4L1277.1 807.6M1277.1 807.6L1274.5 803.8M1156.9 798.6L1158.3 792.4M1128.8 807.7L1130.7 801.9M1279.0 807.1L1276.1 803.0M1273.2 798.9L1270.3 794.8M1132.0 807.3L1133.9 803.2M1133.9 803.2L1135.9 799.2M1266.5 799.1L1264.2 795.3M1283.1 806.4L1280.5 803.0M1147.3 810.6L1149.3 806.0M1149.3 806.0L1151.3 801.5M1125.6 803.5L1127.7 798.9M1177.8 809.6L1178.6 805.5M1178.6 805.5L1179.3 801.4M1180.0 797.2L1180.7 793.1M1185.2 811.8L1186.1 805.8M1187.1 799.9L1188.1 794.0M1269.7 808.6L1267.2 803.3M1174.4 810.1L1175.5 805.4M1176.5 800.7L1177.6 796.0M1254.9 810.9L1253.0 805.8M1251.2 800.7L1249.4 795.7M1288.3 807.1L1285.7 802.9M1283.2 798.8L1280.6 794.6M1162.5 809.4L1163.5 802.4M1163.5 802.4L1164.5 795.5M1146.5 811.3L1148.0 806.4M1148.0 806.4L1149.4 801.5M1149.4 801.5L1150.9 796.6M1240.8 811.9L1239.6 806.0M1212.2 808.5L1212.0 802.8M1212.0 802.8L1211.7 797.1M1116.5 800.7L1119.3 796.0M1131.0 811.3L1132.7 805.1M1132.7 805.1L1134.5 798.9M1137.5 810.7L1139.2 804.7M1274.9 809.9L1273.1 804.1M1134.6 802.3L1136.9 797.0M1121.2 811.1L1124.1 806.6M1124.1 806.6L1126.9 802.0M1241.5 809.8L1239.7 803.4M1119.1 806.2L1122.3 803.3M1122.3 803.3L1125.4 800.5M1111.4 807.9L1113.6 805.0M1147.0 809.5L1148.7 802.5M1159.2 806.6L1160.9 801.3M1139.3 810.0L1141.5 803.5M1212.3 809.7L1212.2 805.8M1212.0 802.0L1211.9 798.1M1149.5 806.1L1151.7 801.9M1151.7 801.9L1154.0 797.7M1121.8 806.3L1124.1 802.0M1181.3 802.5L1181.5 798.0M1155.3 799.7L1157.0 796.3M1267.6 812.0L1265.1 806.6M1265.1 806.6L1262.6 801.3M1239.1 806.2L1238.0 800.3M1236.6 808.3L1235.0 803.4M1233.4 798.6L1231.8 793.8M1111.2 810.3L1113.8 805.9M1113.8 805.9L1116.4 801.5M1233.4 809.9L1232.1 805.4M1230.8 800.9L1229.5 796.5M1239.4 799.7L1238.8 793.9M1287.4 806.1L1284.3 802.9M1281.2 799.7L1278.1 796.5M1110.1 806.2L1113.1 804.1M1113.1 804.1L1116.0 802.0M1116.0 802.0L1119.0 799.8M1211.0 809.5L1211.2 804.6M1211.5 799.6L1211.8 794.7M1262.6 806.7L1261.1 801.1M1166.2 810.6L1167.8 803.5M1129.0 806.2L1131.2 802.8M1131.2 802.8L1133.4 799.4M1133.4 799.4L1135.6 796.0M1136.3 811.5L1138.7 805.2M1121.0 788.6L1131.5 781.6M1123.6 809.9L1128.9 805.6M1118.9 795.7L1130.1 787.5M1122.7 792.6L1129.9 789.2M1117.9 791.1L1129.8 783.2M1104.6 800.1L1114.0 795.4M1105.4 791.2L1114.5 785.1M1105.6 797.6L1119.9 789.4M1106.0 789.1L1112.8 784.7M1124.1 801.1L1135.5 793.7M1125.6 792.8L1134.5 784.3M1097.5 794.0L1103.2 791.1M1097.0 792.5L1109.3 785.7M1118.1 796.7L1124.4 792.8M1096.7 799.2L1106.1 794.5M1109.6 808.1L1122.0 796.6M1108.7 789.8L1114.0 785.6M1113.0 806.4L1120.2 803.1M1116.1 806.3L1121.6 801.0M1099.7 808.2L1105.2 805.4M1116.1 806.9L1124.5 798.8M1099.2 803.5L1106.2 800.0M1105.9 792.7L1111.1 789.7M1114.1 795.8L1128.4 788.3M1116.1 800.0L1125.5 795.2M1117.5 790.2L1127.1 785.1M1108.8 791.3L1119.7 783.1M1100.6 797.5L1111.8 790.8M1114.5 816.4L1126.6 804.5M1112.5 811.6L1125.6 804.8M1096.0 793.1L1106.6 785.0M1095.9 800.5L1110.5 793.1M1121.3 795.8L1132.1 790.0M1122.7 787.1L1127.8 783.4M1107.3 788.4L1120.2 782.0M1304.3 794.0L1297.7 790.8M1284.3 802.1L1271.6 792.8M1294.5 798.7L1284.3 790.0M1282.4 789.3L1272.9 780.4M1276.4 797.9L1269.5 794.7M1280.1 806.7L1268.2 796.6M1288.9 798.0L1275.9 787.5M1295.5 790.2L1281.5 783.1M1304.4 806.2L1291.6 796.3M1288.7 808.0L1280.3 801.8M1300.1 788.0L1286.5 781.4M1299.1 799.1L1291.0 792.1M1292.0 809.7L1279.0 802.6M1306.4 806.5L1299.2 800.4M1299.4 786.8L1293.7 782.8M1277.6 794.5L1269.2 788.2M1285.9 789.2L1274.6 782.7M1285.6 800.3L1274.1 793.1M1279.8 806.4L1273.0 800.8" stroke="#ff9a00" stroke-width="0.6" fill="none" opacity="0.9"/><path d="M1154.2 803.6L1156.3 799.7M1156.3 799.7L1158.4 795.7M1160.5 791.7L1162.6 787.7M1187.4 802.6L1188.3 797.2M1166.9 803.5L1168.0 800.0M1168.0 800.0L1169.1 796.6M1171.4 789.6L1172.5 786.2M1223.2 808.5L1222.1 801.6M1262.5 806.6L1260.8 802.5M1259.1 798.3L1257.3 794.1M1218.3 799.4L1218.1 794.5M1257.9 802.9L1256.5 796.8M1221.3 803.2L1220.3 799.9M1219.3 796.5L1218.3 793.2M1200.0 797.2L1199.9 792.9M1199.9 792.9L1199.8 788.6M1154.7 801.3L1156.5 796.0M1249.4 810.4L1247.9 805.8M1243.5 792.2L1242.0 787.6M1153.1 806.4L1154.2 803.1M1154.2 803.1L1155.3 799.8M1155.3 799.8L1156.5 796.5M1156.5 796.5L1157.6 793.2M1264.4 801.0L1262.4 794.4M1262.4 794.4L1260.4 787.8M1179.6 802.1L1180.0 797.6M1180.5 793.1L1181.0 788.6M1233.7 795.9L1232.8 790.6M1235.7 802.9L1234.4 797.5M1234.4 797.5L1233.0 792.0M1223.5 804.6L1222.9 800.9M1222.9 800.9L1222.4 797.1M1222.4 797.1L1221.9 793.4M1219.9 802.6L1219.4 799.1M1122.1 811.6L1124.2 807.2M1126.2 802.8L1128.3 798.4M1130.4 794.0L1132.4 789.6M1205.6 808.3L1205.3 801.5M1187.8 806.9L1188.2 802.7M1188.5 798.5L1188.8 794.3M1267.8 800.6L1265.3 795.3M1139.4 801.3L1140.9 796.7M1142.4 792.2L1143.9 787.6M1130.4 803.8L1132.3 798.2M1132.3 798.2L1134.2 792.6M1221.7 804.6L1220.9 800.2M1220.9 800.2L1220.1 795.9M1262.7 802.1L1260.5 796.7M1260.5 796.7L1258.3 791.4M1229.8 800.3L1229.1 794.6M1205.3 804.2L1205.5 800.6M1205.5 800.6L1205.6 796.9M1205.8 793.2L1205.9 789.6M1205.9 789.6L1206.1 785.9M1187.5 802.1L1188.4 798.1M1223.8 801.1L1223.3 796.1M1223.3 796.1L1222.8 791.0M1273.7 798.7L1271.4 794.4M1269.1 790.1L1266.9 785.7M1115.0 802.6L1118.4 800.5M1118.4 800.5L1121.9 798.3M1178.6 797.0L1179.1 789.8M1120.9 796.8L1123.2 794.1M1154.9 801.0L1156.0 796.5M1258.5 806.6L1256.6 801.8M1254.6 797.1L1252.6 792.3M1228.0 802.7L1227.4 798.4M1227.4 798.4L1226.8 794.1M1226.8 794.1L1226.2 789.9M1268.2 801.2L1265.5 797.3M1265.5 797.3L1262.8 793.3M1262.8 793.3L1260.2 789.4M1260.2 789.4L1257.5 785.5M1191.9 811.2L1192.5 806.4M1193.1 801.6L1193.7 796.9M1291.8 805.5L1288.8 802.7M1288.8 802.7L1285.9 799.9M1283.0 797.1L1280.1 794.3M1258.8 801.4L1257.0 797.5M1257.0 797.5L1255.2 793.6M1253.5 789.7L1251.7 785.8M1233.6 794.5L1232.3 789.7M1265.9 810.4L1264.4 806.0M1263.0 801.5L1261.5 797.1M1261.5 797.1L1260.1 792.6M1150.5 800.5L1152.3 794.0M1224.9 810.3L1224.1 806.1M1224.1 806.1L1223.3 801.9M1222.5 797.6L1221.7 793.4M1149.5 803.9L1151.7 799.2M1151.7 799.2L1154.0 794.5M1154.0 794.5L1156.2 789.8M1156.2 789.8L1158.4 785.1M1155.7 811.1L1156.8 805.1M1158.0 799.0L1159.1 793.0M1159.1 793.0L1160.3 786.9M1216.7 808.3L1216.7 801.8M1235.1 811.2L1233.8 804.0M1233.8 804.0L1232.4 796.8M1213.4 806.2L1213.1 801.1M1198.0 791.9L1197.9 787.9M1207.6 802.6L1207.3 796.7M1207.0 790.9L1206.7 785.1M1196.6 807.6L1196.7 803.1M1196.7 803.1L1196.8 798.6M1196.8 798.6L1196.9 794.2M1197.0 789.7L1197.0 785.2M1167.3 806.7L1168.4 802.7M1169.4 798.7L1170.4 794.8M1225.3 804.6L1224.5 797.2M1233.9 803.2L1232.6 798.5M1232.6 798.5L1231.4 793.8M1183.5 801.7L1184.6 796.6M1185.6 791.5L1186.7 786.5M1131.2 797.6L1133.1 793.3M1134.9 789.1L1136.8 784.8M1180.5 802.7L1180.7 797.2M1283.4 801.3L1280.3 797.6M1280.3 797.6L1277.2 794.0M1139.6 809.5L1141.4 803.1M1141.4 803.1L1143.3 796.8M1258.6 806.1L1256.8 801.9M1256.8 801.9L1255.0 797.7M1255.0 797.7L1253.3 793.5M1202.2 804.2L1202.3 800.1M1202.3 800.1L1202.5 796.1M1207.8 802.5L1207.3 798.7M1206.9 794.9L1206.4 791.1M1272.0 803.8L1269.2 800.4M1261.1 790.2L1258.4 786.8M1236.8 801.2L1235.6 795.3M1235.6 795.3L1234.4 789.4M1234.4 789.4L1233.1 783.5M1180.6 797.6L1181.3 793.2M1218.4 797.1L1217.9 790.1M1248.5 802.0L1247.1 797.9M1268.5 804.7L1266.0 797.5M1266.0 797.5L1263.4 790.4M1193.7 795.8L1193.6 792.1M1193.6 792.1L1193.5 788.3M1152.4 806.8L1154.1 801.6M1132.0 807.9L1134.4 804.3M1134.4 804.3L1136.7 800.7M1139.1 797.1L1141.5 793.5M1141.5 793.5L1143.9 790.0M1168.3 799.9L1169.0 795.6M1241.0 800.9L1239.5 796.5M1276.4 796.9L1273.6 793.3M1273.6 793.3L1270.8 789.8M1137.7 803.3L1139.5 798.9M1141.2 794.5L1143.0 790.2M1123.8 803.0L1126.7 798.6M1126.7 798.6L1129.5 794.2M1129.5 794.2L1132.3 789.7M1152.8 802.9L1154.4 798.6M1154.4 798.6L1156.0 794.3M1188.1 802.8L1188.0 798.9M1187.9 795.0L1187.8 791.1M1158.7 800.0L1160.2 795.9M1161.7 791.7L1163.2 787.6M1170.5 803.1L1171.3 796.8M1234.0 800.9L1233.2 796.0M1232.4 791.1L1231.7 786.2M1232.0 807.2L1230.4 802.8M1228.9 798.4L1227.4 794.0M1227.4 794.0L1225.9 789.7M1225.9 789.7L1224.3 785.3M1283.9 804.2L1281.2 799.5M1275.7 790.1L1272.9 785.4M1172.6 802.7L1173.6 799.0M1173.6 799.0L1174.6 795.4M1219.2 806.7L1218.6 801.7M1218.6 801.7L1218.0 796.8M1217.4 791.9L1216.7 787.0M1234.8 803.7L1234.1 798.3M1234.1 798.3L1233.5 792.8M1196.2 808.5L1196.8 804.1M1198.6 790.7L1199.2 786.3M1248.2 808.3L1246.6 803.0M1246.6 803.0L1245.0 797.6M1284.3 803.9L1282.0 800.3M1282.0 800.3L1279.8 796.6M1279.8 796.6L1277.6 793.0M1178.3 811.4L1178.7 804.7M1178.7 804.7L1179.1 798.0M1179.5 791.2L1179.9 784.5M1270.3 799.6L1267.5 796.1M1264.8 792.7L1262.0 789.2M1262.0 789.2L1259.2 785.7M1179.0 805.5L1179.5 799.0M1128.9 799.8L1131.7 795.8M1176.6 802.0L1176.9 796.1M1240.4 800.1L1239.3 796.1M1180.8 799.3L1181.3 795.8M1181.3 795.8L1181.8 792.2M1138.6 807.9L1140.8 803.7M1142.9 799.6L1145.1 795.5M1145.1 795.5L1147.3 791.4M1261.6 802.5L1260.1 796.3M1181.2 801.9L1182.4 797.8M1182.4 797.8L1183.6 793.7M1130.7 803.9L1132.6 799.8M1136.4 791.6L1138.4 787.5M1249.2 806.2L1247.5 803.0M1247.5 803.0L1245.7 799.7M1245.7 799.7L1244.0 796.5M1181.6 799.4L1182.7 795.2M1131.5 798.5L1133.9 795.2M1133.9 795.2L1136.3 792.0M1206.3 801.4L1206.0 795.7M1206.0 795.7L1205.7 790.1M1205.7 790.1L1205.4 784.4M1150.1 802.8L1151.9 798.8M1284.9 808.7L1281.8 803.0M1235.6 803.3L1235.1 796.4M1235.1 796.4L1234.6 789.5M1228.1 807.9L1227.0 801.3M1112.9 801.9L1116.3 797.6M1116.3 797.6L1119.7 793.2M1119.7 793.2L1123.1 788.9M1140.2 805.3L1142.6 800.2M1142.6 800.2L1145.0 795.0M1204.1 809.3L1203.9 804.9M1203.9 804.9L1203.7 800.4M1203.7 800.4L1203.5 796.0M1203.5 796.0L1203.3 791.6M1272.8 802.1L1270.4 797.3M1262.9 798.3L1261.4 794.3M1125.0 797.7L1127.9 795.0M1223.5 805.4L1222.9 801.7M1221.1 790.6L1220.5 786.9M1217.1 800.3L1216.0 794.6M1293.7 809.7L1290.7 806.5M1290.7 806.5L1287.8 803.3M1287.8 803.3L1284.8 800.1M1281.8 796.9L1278.9 793.7M1226.4 804.3L1225.4 797.2M1169.9 800.3L1171.2 793.9M1194.9 804.2L1195.0 799.3M1227.7 811.0L1226.8 806.3M1225.9 801.6L1224.9 796.9M1224.9 796.9L1224.0 792.1M1252.2 801.8L1251.0 797.3M1184.7 802.3L1185.3 795.3M1282.2 809.2L1280.3 805.1M1278.4 800.9L1276.5 796.7M1276.5 796.7L1274.5 792.6M1239.2 803.3L1238.2 799.2M1238.2 799.2L1237.1 795.1M1236.1 791.1L1235.0 787.0M1185.3 798.5L1185.9 793.7M1186.6 788.9L1187.2 784.1M1200.2 803.7L1200.2 799.2M1200.2 794.6L1200.2 790.1M1212.8 807.8L1211.9 801.5M1211.9 801.5L1211.0 795.2M1184.8 805.4L1185.4 800.5M1171.4 806.1L1171.8 801.4M1171.8 801.4L1172.2 796.8M1172.2 796.8L1172.6 792.1M1245.7 802.7L1244.8 795.9M1245.1 804.0L1243.2 800.2M1243.2 800.2L1241.4 796.4M1237.7 788.7L1235.8 784.9M1147.1 803.3L1148.7 799.0M1150.3 794.6L1151.9 790.2M1202.3 806.4L1202.4 802.3M1202.5 798.2L1202.7 794.1M1203.9 793.5L1204.0 790.2M1261.9 804.4L1259.5 799.7M1259.5 799.7L1257.2 794.9M1254.8 790.2L1252.5 785.5M1289.6 807.5L1287.1 803.2M1287.1 803.2L1284.7 799.0M1282.2 794.7L1279.7 790.5M1268.3 808.9L1266.0 802.5M1263.6 796.1L1261.3 789.7M1178.7 802.8L1179.8 796.4M1180.9 790.0L1182.0 783.7M1247.2 802.9L1246.2 799.1M1244.1 791.5L1243.1 787.6M1290.1 800.2L1287.1 795.2M1267.2 789.1L1264.9 783.3M1224.4 802.9L1223.5 797.4M1223.5 797.4L1222.7 791.9M1222.7 791.9L1221.9 786.4M1127.4 803.6L1129.9 799.4M1129.9 799.4L1132.5 795.2M1132.5 795.2L1135.1 791.0M1135.1 791.0L1137.6 786.8M1123.2 805.6L1125.3 802.0M1125.3 802.0L1127.5 798.3M1127.5 798.3L1129.6 794.6M1129.6 794.6L1131.7 790.9M1131.7 790.9L1133.8 787.3M1246.0 803.9L1244.7 796.9M1244.7 796.9L1243.4 790.0M1262.3 803.2L1260.7 798.8M1257.5 789.9L1256.0 785.5M1175.1 800.6L1175.8 794.3M1175.8 794.3L1176.5 788.0M1121.6 796.9L1123.9 793.4M1123.9 793.4L1126.3 789.8M1191.0 804.4L1190.9 797.7M1190.9 790.9L1190.8 784.1M1132.3 810.5L1133.9 805.6M1133.9 805.6L1135.5 800.6M1207.5 796.3L1207.8 789.2M1233.2 810.2L1232.1 805.9M1232.1 805.9L1230.9 801.6M1230.9 801.6L1229.8 797.3M1229.8 797.3L1228.6 793.1M1130.8 803.4L1133.1 799.1M1133.1 799.1L1135.3 794.8M1123.8 795.6L1126.0 790.3M1186.8 809.0L1186.9 804.8M1186.9 804.8L1187.0 800.7M1187.0 800.7L1187.1 796.5M1246.6 797.9L1245.5 792.4M1256.8 809.7L1255.3 805.3M1250.9 792.2L1249.4 787.9M1150.9 807.3L1152.3 802.1M1152.3 802.1L1153.6 796.9M1155.0 791.6L1156.3 786.4M1228.8 808.6L1228.4 804.4M1228.4 804.4L1227.9 800.3M1227.9 800.3L1227.4 796.1M1226.9 792.0L1226.4 787.8M1125.4 804.1L1128.4 800.5M1131.4 797.0L1134.5 793.5M1285.4 811.1L1283.3 807.1M1279.2 799.2L1277.1 795.3M1277.1 795.3L1275.1 791.3M1159.7 809.3L1160.7 805.2M1161.7 801.1L1162.6 797.0M1249.8 801.9L1248.4 796.0M1167.1 809.2L1168.7 805.0M1170.4 800.8L1172.0 796.6M1173.6 792.3L1175.2 788.1M1175.2 788.1L1176.8 783.9M1127.5 809.2L1130.0 805.2M1135.1 797.2L1137.7 793.1M1172.9 806.2L1174.3 802.9M1174.3 802.9L1175.7 799.5M1175.7 799.5L1177.1 796.2M1178.5 792.8L1179.9 789.5M1179.9 789.5L1181.3 786.1M1149.6 800.5L1151.3 794.6M1151.3 794.6L1153.0 788.6M1222.3 804.7L1221.1 799.6M1221.1 799.6L1219.9 794.5M1199.6 805.6L1199.9 800.9M1200.6 791.5L1200.9 786.8M1288.8 802.5L1286.3 800.0M1147.7 811.1L1149.2 805.8M1150.8 800.4L1152.3 795.1M1280.4 797.2L1277.7 794.6M1271.1 802.5L1268.6 798.6M1263.6 790.7L1261.1 786.8M1128.2 802.2L1131.0 796.3M1131.0 796.3L1133.7 790.4M1266.3 801.3L1264.7 797.2M1263.1 793.2L1261.5 789.1M1247.5 800.7L1246.2 794.3M1202.2 799.3L1202.1 794.3M1278.2 798.6L1275.3 793.8M1171.5 806.7L1172.1 801.8M1173.2 792.1L1173.8 787.2M1157.1 795.5L1158.8 790.1M1186.7 806.9L1187.0 802.3M1187.0 802.3L1187.4 797.8M1187.4 797.8L1187.7 793.2M1185.4 800.5L1186.4 796.8M1186.4 796.8L1187.3 793.1M1270.0 801.4L1267.5 797.2M1267.5 797.2L1265.0 793.0M1254.0 803.8L1251.8 797.2M1203.4 804.7L1203.4 797.9M1174.4 802.9L1174.9 799.1M1174.9 799.1L1175.4 795.4M1118.3 808.5L1121.0 804.7M1121.0 804.7L1123.6 800.9M1194.0 807.0L1194.9 802.1M1194.9 802.1L1195.7 797.1M1230.3 809.4L1229.6 805.5M1228.9 801.7L1228.2 797.9M1244.3 809.6L1242.5 803.6M1240.7 797.5L1238.9 791.4M1213.1 804.8L1212.6 801.0M1212.2 797.1L1211.7 793.2M1213.4 800.3L1213.0 794.5M1125.5 804.5L1127.7 800.1M1129.9 795.8L1132.1 791.4M1256.8 801.4L1255.2 795.5M1253.6 789.5L1252.0 783.5M1191.0 803.0L1190.9 798.5M1190.9 798.5L1190.8 794.1M1190.8 794.1L1190.6 789.6M1237.3 811.5L1235.9 806.5M1234.4 801.5L1233.0 796.4M1238.7 799.7L1238.0 795.5M1238.0 795.5L1237.3 791.2M1156.3 799.8L1157.9 795.2M1142.9 800.5L1145.1 796.8M1147.4 793.0L1149.6 789.3M1240.0 803.8L1238.3 797.5M1238.3 797.5L1236.6 791.2M1236.6 791.2L1234.8 784.9M1180.8 789.7L1181.5 783.0M1120.4 801.3L1123.4 796.1M1123.4 796.1L1126.5 791.0M1126.5 791.0L1129.5 785.8M1167.6 810.7L1168.3 804.1M1168.3 804.1L1169.0 797.5M1169.0 797.5L1169.6 790.9M1191.4 801.8L1191.4 795.9M1191.4 795.9L1191.3 790.0M1218.2 800.3L1217.7 795.6M1217.1 790.8L1216.6 786.1M1139.7 797.3L1141.9 793.1M1141.9 793.1L1144.1 789.0M1203.1 803.4L1203.1 797.2M1203.1 797.2L1203.0 790.9M1146.5 809.5L1148.3 802.9M1148.3 802.9L1150.0 796.4M1197.1 809.2L1197.6 804.3M1198.2 799.5L1198.8 794.6M1198.8 794.6L1199.4 789.8M1199.4 789.8L1199.9 784.9M1180.0 798.7L1180.9 793.9M1256.3 802.8L1254.3 797.5M1172.6 801.1L1173.4 794.8M1115.7 806.1L1118.5 803.4M1118.5 803.4L1121.2 800.8M1121.2 800.8L1124.0 798.2M1124.0 798.2L1126.7 795.6M1249.2 807.4L1247.8 803.8M1246.3 800.3L1244.8 796.7M1121.9 808.4L1124.6 804.6M1124.6 804.6L1127.3 800.7M1273.0 811.7L1270.6 805.6M1270.6 805.6L1268.2 799.5M1268.2 799.5L1265.8 793.3M1265.8 793.3L1263.4 787.2M1273.0 799.3L1270.3 795.0M1227.5 796.6L1226.6 791.5M1157.9 809.0L1159.5 804.4M1159.5 804.4L1161.2 799.9M1162.8 795.4L1164.4 790.9M1215.4 798.8L1214.4 794.8M1205.1 805.0L1205.6 800.2M1205.6 800.2L1206.1 795.4M1206.6 790.6L1207.1 785.9M1140.6 802.3L1142.0 798.3M1142.0 798.3L1143.5 794.3M1271.1 799.6L1268.8 794.3M1266.6 789.1L1264.3 783.9M1115.9 801.8L1118.4 798.7M1118.4 798.7L1120.9 795.6M1120.9 795.6L1123.5 792.4M1268.0 803.3L1265.8 798.1M1265.8 798.1L1263.6 792.9M1211.1 802.1L1211.0 797.7M1210.9 788.8L1210.8 784.4M1231.2 801.4L1230.7 796.7M1275.9 811.4L1273.2 806.2M1273.2 806.2L1270.6 801.0M1268.0 795.8L1265.3 790.5M1177.4 801.3L1178.0 794.7M1287.9 807.7L1285.4 804.7M1285.4 804.7L1283.0 801.6M1283.0 801.6L1280.5 798.6M1280.5 798.6L1278.1 795.5M1278.1 795.5L1275.6 792.5M1233.0 811.4L1231.7 805.7M1231.7 805.7L1230.3 800.0M1230.3 800.0L1229.0 794.2M1135.2 804.9L1137.7 800.8M1137.7 800.8L1140.2 796.8M1142.7 792.7L1145.2 788.6M1145.2 788.6L1147.7 784.6M1208.0 804.4L1207.5 799.6M1207.5 799.6L1206.9 794.8M1240.0 802.7L1239.3 799.2M1238.0 792.2L1237.4 788.7M1237.4 788.7L1236.7 785.2M1138.3 803.9L1140.5 799.0M1142.6 794.0L1144.8 789.1M1158.7 795.3L1159.8 788.3M1265.8 791.2L1263.1 785.1M1112.4 811.6L1115.5 807.7M1115.5 807.7L1118.6 803.7M1118.6 803.7L1121.7 799.8M1127.8 791.9L1130.9 787.9M1151.7 804.2L1153.0 800.5M1153.0 800.5L1154.3 796.9M1295.9 808.2L1292.7 803.4M1292.7 803.4L1289.5 798.5M1289.5 798.5L1286.3 793.7M1196.7 806.3L1197.1 802.3M1197.4 798.4L1197.8 794.4M1197.8 794.4L1198.2 790.5M1271.8 799.9L1268.9 796.2M1184.3 795.5L1185.1 789.0M1194.5 804.4L1194.4 797.9M1194.4 791.4L1194.4 784.9M1267.0 801.6L1264.5 796.0M1264.5 796.0L1261.9 790.4M1261.9 790.4L1259.4 784.8M1117.1 810.2L1120.1 806.0M1123.0 801.9L1126.0 797.7M1126.0 797.7L1128.9 793.5M1128.9 793.5L1131.9 789.3M1131.9 789.3L1134.8 785.2M1286.0 800.2L1283.5 794.5M1125.9 803.6L1128.1 798.6M1128.1 798.6L1130.3 793.7M1266.2 792.7L1263.8 787.1M1191.4 798.9L1192.1 792.8M1171.8 808.9L1173.1 802.7M1174.4 796.5L1175.7 790.3M1175.7 790.3L1176.9 784.2M1238.9 803.1L1237.2 798.9M1237.2 798.9L1235.6 794.7M1221.0 799.4L1221.0 795.2M1221.0 804.0L1219.8 799.6M1219.8 799.6L1218.7 795.2M1123.2 795.7L1126.5 791.9M1230.4 807.0L1229.1 800.5M1229.1 800.5L1227.8 793.9M1170.8 802.6L1172.4 798.1M1251.7 808.3L1249.6 802.4M1249.6 802.4L1247.5 796.6M1282.6 803.2L1279.7 799.9M1279.7 799.9L1276.9 796.6M1274.0 793.4L1271.2 790.1M1271.2 790.1L1268.3 786.8M1169.1 803.3L1169.7 798.4M1169.7 798.4L1170.3 793.6M1170.9 788.7L1171.4 783.9M1234.5 804.5L1234.0 799.6M1233.6 794.7L1233.1 789.8M1289.9 811.5L1287.2 807.9M1287.2 807.9L1284.4 804.3M1281.7 800.8L1279.0 797.2M1145.0 801.7L1146.6 797.3M1146.6 797.3L1148.2 792.8M1149.8 788.4L1151.4 783.9M1133.3 805.5L1135.2 800.2M1137.0 795.0L1138.9 789.7M1292.9 805.2L1289.5 801.5M1286.1 797.7L1282.8 794.0M1279.4 790.3L1276.0 786.5M1190.2 810.2L1190.9 803.5M1190.9 803.5L1191.7 796.9M1153.3 804.3L1155.2 798.4M1155.2 798.4L1157.0 792.5M1157.0 792.5L1158.8 786.7M1257.7 789.5L1255.4 784.3M1263.3 807.2L1261.3 802.9M1261.3 802.9L1259.2 798.5M1259.2 798.5L1257.2 794.2M1291.0 803.2L1288.3 800.5M1288.3 800.5L1285.5 797.7M1282.7 794.9L1279.9 792.1M1251.8 811.3L1250.0 806.6M1248.2 801.8L1246.5 797.0M1246.5 797.0L1244.7 792.3M1244.7 792.3L1242.9 787.5M1285.6 795.6L1282.4 790.3M1203.1 792.8L1202.7 786.8M1232.5 807.0L1231.9 802.8M1231.9 802.8L1231.3 798.6M1231.3 798.6L1230.7 794.4M1230.7 794.4L1230.1 790.2M1230.1 790.2L1229.5 786.0M1202.0 800.5L1201.6 796.9M1200.8 789.8L1200.4 786.2M1223.9 803.5L1223.5 797.9M1278.7 801.9L1276.0 796.8M1273.3 791.7L1270.5 786.6M1213.1 801.4L1212.8 797.2M1258.2 811.0L1256.0 805.0M1256.0 805.0L1253.9 798.9M1251.7 792.8L1249.6 786.7M1184.4 801.0L1184.5 795.2M1184.6 789.4L1184.7 783.6M1285.1 803.8L1282.7 800.2M1161.8 789.8L1162.7 782.6M1290.4 807.3L1287.8 802.8M1287.8 802.8L1285.2 798.3M1215.1 800.0L1214.9 794.9M1214.9 794.9L1214.8 789.8M1275.5 809.4L1273.0 805.2M1270.5 801.0L1268.0 796.8M1164.6 803.1L1165.9 798.9M1165.9 798.9L1167.1 794.8M1168.4 790.7L1169.7 786.6M1200.7 802.5L1201.0 796.1M1201.0 796.1L1201.3 789.7M1201.3 789.7L1201.6 783.3M1179.8 806.5L1180.1 800.9M1180.1 800.9L1180.4 795.3M1180.8 789.8L1181.1 784.2M1142.7 811.4L1145.0 807.1M1147.3 802.9L1149.6 798.7M1149.6 798.7L1152.0 794.5M1154.3 790.3L1156.6 786.1M1194.1 806.3L1193.9 802.4M1193.6 798.5L1193.4 794.6M1193.2 790.6L1193.0 786.7M1129.6 801.9L1131.7 797.2M1242.0 793.6L1240.1 789.4M1169.5 804.5L1170.8 798.8M1284.2 800.0L1281.4 796.4M1281.4 796.4L1278.6 792.7M1167.7 796.8L1168.8 789.5M1214.9 799.3L1213.9 795.7M1213.9 795.7L1212.9 792.1M1211.9 788.5L1211.0 784.9M1254.6 812.0L1253.2 806.9M1251.7 801.9L1250.3 796.8M1250.3 796.8L1248.8 791.7M1247.3 804.3L1246.2 799.4M1246.2 799.4L1245.1 794.4M1245.1 794.4L1244.0 789.5M1242.5 805.2L1240.9 800.7M1280.0 811.9L1277.9 806.4M1277.9 806.4L1275.8 800.9M1166.8 811.5L1167.9 806.6M1169.0 801.7L1170.1 796.9M1269.9 802.6L1267.5 796.8M1265.0 791.0L1262.6 785.2M1233.1 804.1L1232.1 800.2M1231.0 796.3L1230.0 792.3M1225.5 800.9L1225.2 795.2M1192.3 803.0L1192.5 798.7M1192.5 798.7L1192.8 794.5M1257.9 801.7L1256.6 796.5M1255.2 791.3L1253.8 786.1M1190.0 802.8L1190.1 795.9M1282.9 811.3L1280.6 806.6M1278.4 801.9L1276.1 797.1M1273.8 792.4L1271.6 787.7M1230.5 796.7L1230.1 791.7M1228.9 799.1L1228.4 794.2M1253.2 804.2L1251.2 797.4M1256.6 800.6L1255.1 795.8M1253.7 790.9L1252.2 786.0M1214.7 810.8L1214.5 805.0M1229.7 804.0L1228.4 797.0M1233.4 803.5L1232.6 799.5M1231.2 791.4L1230.5 787.4M1123.0 804.1L1125.4 799.1M1240.2 810.7L1239.2 806.2M1238.3 801.6L1237.4 797.1M1237.4 797.1L1236.5 792.5M1263.8 803.8L1262.1 797.8M1182.6 803.7L1182.9 800.3M1183.3 793.6L1183.6 790.2M1183.6 790.2L1183.8 786.8M1259.1 807.2L1257.7 803.0M1257.7 803.0L1256.3 798.8M1186.8 804.7L1187.5 801.1M1189.5 790.5L1190.2 787.0M1244.5 808.4L1243.2 802.7M1243.2 802.7L1241.8 797.1M1240.4 791.4L1239.0 785.8M1208.8 796.6L1208.5 790.8M1234.0 801.4L1232.8 797.0M1231.7 792.7L1230.5 788.3M1135.6 799.9L1137.4 796.6M1137.4 796.6L1139.1 793.4M1139.1 793.4L1140.8 790.1M1140.8 797.2L1142.4 793.7M1142.4 793.7L1144.1 790.1M1282.5 798.7L1279.5 795.9M1279.5 795.9L1276.5 793.0M1283.8 801.9L1281.0 798.7M1278.2 795.6L1275.4 792.4M1291.8 809.7L1289.2 805.2M1289.2 805.2L1286.6 800.6M1286.6 800.6L1283.9 796.1M1237.3 809.1L1236.7 804.6M1131.4 798.4L1133.7 794.5M1198.0 808.0L1198.1 804.0M1198.4 788.1L1198.5 784.1M1226.9 808.9L1225.7 804.6M1224.6 800.2L1223.4 795.9M1223.4 795.9L1222.3 791.6M1255.2 802.4L1252.8 798.2M1252.8 798.2L1250.5 794.0M1248.2 789.8L1245.8 785.6M1118.9 809.2L1120.9 805.8M1122.9 802.3L1125.0 798.9M1125.0 798.9L1127.0 795.5M1127.0 795.5L1129.0 792.0M1129.0 792.0L1131.0 788.6M1173.8 810.5L1174.8 805.5M1174.8 805.5L1175.7 800.4M1175.7 800.4L1176.7 795.3M1176.7 795.3L1177.6 790.3M1277.6 796.4L1275.4 791.7M1275.4 791.7L1273.2 787.0M1284.1 797.2L1281.5 792.1M1248.8 806.8L1247.8 803.3M1247.8 803.3L1246.8 799.8M1245.8 796.2L1244.8 792.7M1244.8 792.7L1243.7 789.2M1243.7 789.2L1242.7 785.7M1253.5 799.7L1252.1 795.6M1196.1 802.1L1196.1 797.9M1196.1 797.9L1196.2 793.7M1164.3 795.2L1166.0 790.7M1166.0 790.7L1167.7 786.1M1231.9 803.8L1230.9 800.0M1230.9 800.0L1229.8 796.1M1229.8 796.1L1228.8 792.2M1227.7 788.4L1226.6 784.5M1238.7 798.6L1238.0 792.6M1276.8 803.8L1274.3 800.6M1274.3 800.6L1271.9 797.5M1269.4 794.3L1266.9 791.2M1174.9 801.4L1175.7 797.0M1175.7 797.0L1176.5 792.6M1252.9 799.2L1251.8 794.5M1252.2 803.1L1250.2 799.5M1250.2 799.5L1248.2 795.9M1248.2 795.9L1246.2 792.2M1246.2 792.2L1244.2 788.6M1244.2 788.6L1242.2 784.9M1181.9 809.5L1182.0 803.6M1182.0 803.6L1182.1 797.7M1182.1 797.7L1182.3 791.8M1153.5 800.4L1154.5 794.8M1247.2 796.7L1245.4 791.8M1153.0 806.3L1154.7 800.3M1154.7 800.3L1156.3 794.4M1119.8 804.5L1122.3 801.7M1122.3 801.7L1124.9 798.9M1124.9 798.9L1127.4 796.1M1146.6 801.1L1147.8 795.5M1147.8 795.5L1149.0 790.0M1164.8 801.7L1166.4 797.0M1291.6 806.3L1289.1 802.3M1289.1 802.3L1286.5 798.3M1221.0 808.7L1220.5 804.4M1220.5 804.4L1220.0 800.2M1220.0 800.2L1219.5 795.9M1111.8 804.5L1115.0 800.2M1121.4 791.6L1124.5 787.2M1209.5 804.3L1209.4 798.3M1225.2 803.8L1224.9 798.0M1224.9 798.0L1224.6 792.2M1224.6 792.2L1224.3 786.3M1241.0 802.6L1239.6 798.8M1238.2 794.9L1236.8 791.0M1271.8 802.9L1270.0 799.0M1270.0 799.0L1268.2 795.1M1140.5 811.2L1142.0 805.2M1142.0 805.2L1143.5 799.2M1271.5 801.6L1269.1 796.7M1269.1 796.7L1266.8 791.9M1178.4 802.7L1178.7 798.5M1178.7 798.5L1179.0 794.4M1253.1 801.6L1251.3 795.2M1251.3 795.2L1249.5 788.8M1231.0 809.1L1230.7 804.5M1230.3 800.0L1230.0 795.4M1230.0 795.4L1229.7 790.8M1229.7 790.8L1229.4 786.3M1284.5 803.5L1281.6 800.5M1281.6 800.5L1278.7 797.5M1278.7 797.5L1275.8 794.6M1212.8 810.6L1212.8 805.8M1145.1 809.0L1146.4 803.1M1146.4 803.1L1147.7 797.2M1149.1 791.3L1150.4 785.5M1253.6 811.8L1251.6 806.7M1249.5 801.6L1247.5 796.6M1155.9 810.7L1157.6 805.6M1157.6 805.6L1159.3 800.5M1159.3 800.5L1160.9 795.3M1160.9 795.3L1162.6 790.2M1119.8 807.0L1122.6 803.5M1134.0 789.8L1136.8 786.4M1213.1 803.4L1212.4 796.3M1212.4 796.3L1211.8 789.3M1122.8 802.4L1125.3 798.8M1127.8 795.2L1130.4 791.6M1262.1 796.8L1260.6 791.8M1260.6 791.8L1259.0 786.8M1251.8 793.2L1249.6 789.0M1166.6 801.3L1167.8 796.4M1164.5 802.3L1165.1 798.4M1165.1 798.4L1165.8 794.5M1240.9 803.3L1239.6 798.0M1239.6 798.0L1238.2 792.7M1168.9 809.3L1169.9 803.2M1169.9 803.2L1171.0 797.2M1171.0 797.2L1172.1 791.1M1150.1 800.8L1151.3 794.5M1289.4 802.8L1286.8 798.2M1286.8 798.2L1284.2 793.5M1132.2 805.7L1133.9 801.6M1133.9 801.6L1135.6 797.6M1135.6 797.6L1137.2 793.5M1128.5 803.4L1131.3 799.6M1131.3 799.6L1134.2 795.8M1231.9 799.5L1230.4 796.1M1230.4 796.1L1228.9 792.8M1147.9 806.6L1149.8 801.5M1153.6 791.4L1155.5 786.4M1181.4 809.8L1182.0 804.7M1182.0 804.7L1182.6 799.6M1182.6 799.6L1183.2 794.5M1251.3 802.5L1250.2 797.9M1250.2 797.9L1249.2 793.3M1241.8 803.2L1240.1 796.2M1241.8 799.0L1240.2 794.4M1238.5 789.8L1236.8 785.3M1290.2 799.3L1286.9 794.7M1110.3 807.8L1113.6 805.2M1113.6 805.2L1116.8 802.6M1120.1 800.0L1123.3 797.3M1266.9 800.6L1264.4 795.6M1261.8 790.5L1259.2 785.5M1143.4 803.1L1145.8 796.0M1285.8 802.7L1283.5 798.7M1283.5 798.7L1281.2 794.6M1258.9 806.9L1256.7 803.3M1256.7 803.3L1254.4 799.6M1254.4 799.6L1252.2 795.9M1252.2 795.9L1249.9 792.3M1119.8 803.4L1122.9 798.5M1122.9 798.5L1126.0 793.6M1154.8 804.0L1155.8 800.5M1155.8 800.5L1156.8 797.0M1156.8 797.0L1157.8 793.5M1187.4 802.7L1188.2 796.1M1188.2 796.1L1189.1 789.5M1189.1 789.5L1189.9 782.9M1279.4 795.1L1276.2 791.4M1241.6 809.8L1240.1 805.9M1238.7 802.1L1237.3 798.2M1237.3 798.2L1235.8 794.4M1219.5 799.5L1218.4 796.0M1138.7 802.7L1140.3 797.0M1140.3 797.0L1141.9 791.4M1141.9 791.4L1143.4 785.8M1134.9 808.5L1136.9 801.9M1193.4 803.0L1193.1 798.5M1193.1 798.5L1192.9 794.1M1261.7 802.8L1260.0 799.5M1258.3 796.2L1256.5 792.9M1256.5 792.9L1254.8 789.6M1122.1 807.5L1124.4 803.8M1124.4 803.8L1126.7 800.2M1129.1 796.5L1131.4 792.8M1293.4 807.9L1290.5 804.1M1287.6 800.2L1284.6 796.4M1176.1 810.9L1177.3 804.0M1177.3 804.0L1178.6 797.2M1248.1 802.1L1246.2 798.3M1246.2 798.3L1244.2 794.4M1244.2 794.4L1242.2 790.5M1242.2 790.5L1240.3 786.7M1201.3 805.1L1201.7 798.8M1201.7 798.8L1202.2 792.5M1183.1 801.3L1183.4 797.2M1272.7 801.3L1270.1 797.1M1270.1 797.1L1267.5 792.9M1241.3 794.0L1240.2 787.5M1154.3 807.2L1156.1 803.5M1156.1 803.5L1158.0 799.9M1159.8 796.2L1161.6 792.6M1256.6 802.8L1254.8 798.2M1254.8 798.2L1252.9 793.5M1251.1 788.9L1249.3 784.3M1252.6 809.6L1250.6 802.9M1248.6 796.2L1246.7 789.6M1246.7 789.6L1244.7 782.9M1178.4 803.5L1179.1 797.4M1246.8 804.1L1245.3 800.0M1245.3 800.0L1243.8 795.9M1242.2 791.7L1240.7 787.6M1200.2 805.0L1200.5 800.9M1200.5 800.9L1200.9 796.8M1201.6 788.5L1202.0 784.4M1157.6 810.7L1158.5 804.2M1224.4 799.5L1223.4 795.3M1124.8 803.3L1127.5 799.0M1130.3 794.7L1133.0 790.4M1133.0 790.4L1135.7 786.1M1284.0 809.4L1281.0 803.6M1138.4 791.4L1140.7 786.7M1218.6 805.0L1218.2 798.0M1218.2 798.0L1217.7 791.0M1285.0 798.8L1282.3 793.4M1282.3 793.4L1279.6 787.9M1152.4 801.5L1153.6 796.6M1153.6 796.6L1154.8 791.7M1154.8 791.7L1156.0 786.9M1183.4 802.1L1184.1 798.2M1111.2 807.0L1113.6 803.6M1116.1 800.1L1118.5 796.7M1123.4 789.8L1125.9 786.3M1195.1 802.0L1194.8 797.1M1215.2 804.2L1214.3 800.6M1214.3 800.6L1213.3 796.9M1213.3 796.9L1212.4 793.3M1211.5 789.6L1210.5 786.0M1136.2 809.4L1138.4 804.5M1140.6 799.6L1142.9 794.7M1134.1 798.4L1136.9 793.7M1173.7 809.4L1175.0 803.3M1176.3 797.2L1177.7 791.1M1235.7 806.5L1234.8 802.1M1234.8 802.1L1233.9 797.8M1189.0 805.1L1189.7 800.1M1189.7 800.1L1190.4 795.0M1290.2 802.9L1287.3 799.7M1287.3 799.7L1284.4 796.4M1284.4 796.4L1281.4 793.2M1281.4 793.2L1278.5 790.0M1191.5 803.1L1191.3 796.1M1191.3 796.1L1191.1 789.1M1173.0 797.5L1174.5 793.8M1174.5 793.8L1175.9 790.1M1290.3 806.9L1287.3 801.7M1287.3 801.7L1284.2 796.6M1284.2 796.6L1281.2 791.4M1241.5 800.1L1240.6 793.8M1204.1 810.6L1203.8 804.8M1292.6 804.0L1290.1 800.8M1290.1 800.8L1287.5 797.7M1287.5 797.7L1285.0 794.5M1121.5 803.6L1123.6 800.7M1125.6 797.8L1127.6 794.9M1129.6 791.9L1131.6 789.0M1186.0 802.3L1186.0 796.4M1281.5 802.6L1278.8 798.3M1278.8 798.3L1276.1 794.0M1273.4 789.7L1270.8 785.4M1125.1 803.4L1127.4 799.4M1127.4 799.4L1129.7 795.5M1129.7 795.5L1132.0 791.5M1238.4 803.9L1237.7 799.1M1237.7 799.1L1237.0 794.3M1264.6 799.0L1263.1 793.7M1282.7 801.1L1280.1 796.9M1140.6 798.4L1142.4 793.1M1207.8 802.1L1208.0 795.5M1208.0 795.5L1208.1 788.9M1205.7 798.3L1206.1 791.9M1265.6 802.7L1263.9 799.1M1263.9 799.1L1262.2 795.6M1258.9 788.5L1257.2 784.9M1226.2 802.7L1226.0 798.2M1226.0 798.2L1225.7 793.7M1142.3 810.5L1144.7 805.8M1144.7 805.8L1147.1 801.1M1225.3 807.0L1225.1 802.5M1224.6 793.4L1224.4 788.9M1224.4 788.9L1224.2 784.4M1122.4 801.6L1125.1 798.4M1127.8 795.2L1130.5 792.0M1186.9 804.2L1187.9 798.3M1188.8 792.3L1189.8 786.3M1263.6 791.9L1261.6 785.8M1194.9 799.5L1194.9 793.8M1134.2 802.9L1136.4 798.3M1138.6 793.7L1140.8 789.1M1268.2 803.1L1266.6 797.3M1265.0 791.4L1263.3 785.6M1264.5 804.5L1262.8 800.5M1127.6 802.3L1129.8 798.1M1129.8 798.1L1132.0 793.9M1134.3 789.7L1136.5 785.4M1221.4 810.3L1221.1 804.6M1220.7 798.9L1220.4 793.2M1115.9 803.7L1118.2 801.4M1118.2 801.4L1120.5 799.2M1120.5 799.2L1122.8 796.9M1122.8 796.9L1125.1 794.6M1250.6 804.7L1249.3 800.8M1249.3 800.8L1248.0 797.0M1217.2 809.9L1216.3 803.1M1216.3 803.1L1215.4 796.4M1282.4 806.2L1280.0 801.8M1265.2 798.9L1262.5 794.7M1259.8 790.6L1257.1 786.4M1155.9 801.1L1157.6 794.6M1192.5 802.4L1192.4 797.3M1192.3 792.1L1192.2 786.9M1124.1 801.5L1126.5 798.2M1131.1 791.5L1133.4 788.2M1119.0 793.0L1122.1 788.4M1187.6 803.9L1187.8 799.5M1187.8 799.5L1188.1 795.2M1188.1 795.2L1188.3 790.8M1188.3 790.8L1188.5 786.4M1236.1 806.2L1234.7 801.7M1234.7 801.7L1233.4 797.2M1131.7 804.1L1133.4 800.0M1133.4 800.0L1135.2 795.9M1218.1 802.3L1217.3 796.3M1260.7 793.9L1259.0 789.6M1154.8 801.5L1156.7 796.6M1156.7 796.6L1158.6 791.6M1206.1 800.1L1205.4 795.4M1268.0 807.7L1265.5 803.5M1265.5 803.5L1263.1 799.2M1263.1 799.2L1260.7 795.0M1258.2 790.7L1255.8 786.4M1274.5 800.7L1272.1 796.1M1205.6 800.7L1205.7 795.1M1205.9 789.4L1206.0 783.7M1240.7 803.9L1240.0 797.2M1179.3 807.1L1179.7 802.8M1179.7 802.8L1180.0 798.4M1180.0 798.4L1180.3 794.0M1141.0 811.7L1143.1 805.1M1145.3 798.5L1147.4 792.0M1147.4 792.0L1149.5 785.4M1223.2 795.4L1222.0 791.7M1222.0 791.7L1220.8 788.0M1220.8 788.0L1219.7 784.3M1286.0 806.1L1283.3 801.4M1280.6 796.8L1277.9 792.1M1122.1 800.2L1125.2 796.9M1181.4 794.1L1182.7 789.9M1236.2 802.3L1235.0 797.2M1235.0 797.2L1233.9 792.0M1200.5 809.1L1200.9 804.3M1200.9 804.3L1201.3 799.5M1201.3 799.5L1201.8 794.7M1201.8 794.7L1202.2 789.9M1247.3 807.3L1246.1 803.1M1244.9 798.9L1243.6 794.7M1154.0 800.3L1155.2 796.9M1155.2 796.9L1156.3 793.5M1156.3 793.5L1157.5 790.1M1157.5 790.1L1158.7 786.7M1203.2 806.1L1203.3 800.5M1203.3 800.5L1203.4 794.9M1203.4 794.9L1203.5 789.3M1203.5 789.3L1203.6 783.7M1249.4 797.3L1248.1 791.7M1258.0 802.2L1255.8 795.5M1255.8 795.5L1253.5 788.8M1242.5 797.6L1241.3 792.9M1241.3 792.9L1240.2 788.3M1287.7 804.2L1284.5 801.1M1284.5 801.1L1281.3 798.0M1281.3 798.0L1278.1 794.9M1275.0 791.7L1271.8 788.6M1225.1 802.7L1224.1 797.0M1224.1 797.0L1223.1 791.3M1195.8 801.8L1195.9 796.1M1195.9 790.5L1196.0 784.8M1228.9 811.1L1227.6 807.0M1226.2 802.8L1224.8 798.7M1224.8 798.7L1223.4 794.6M1226.2 807.7L1224.9 801.3M1224.9 801.3L1223.7 794.9M1175.3 801.2L1175.9 797.5M1176.6 793.7L1177.3 790.0M1248.1 799.7L1246.5 794.8M1221.6 803.9L1221.0 799.0M1220.4 794.2L1219.9 789.3M1133.1 802.5L1135.6 798.3M1138.1 794.1L1140.6 789.8M1266.3 808.2L1264.5 804.0M1163.1 796.4L1164.0 791.5M1164.0 791.5L1165.0 786.6M1228.6 810.0L1227.7 805.8M1226.7 801.7L1225.8 797.5M1225.8 797.5L1224.8 793.4M1224.8 793.4L1223.8 789.3M1236.0 806.6L1234.9 801.5M1234.9 801.5L1233.8 796.3M1232.7 791.2L1231.6 786.1M1154.4 803.3L1155.9 799.8M1158.9 792.8L1160.4 789.3M1160.4 789.3L1161.9 785.9M1184.2 806.4L1184.5 800.3M1184.5 800.3L1184.9 794.1M1184.9 794.1L1185.2 788.0M1141.7 790.6L1143.4 784.3M1187.6 802.7L1188.6 798.4M1188.6 798.4L1189.7 794.1M1133.7 807.4L1135.7 802.6M1135.7 802.6L1137.6 797.9M1248.5 805.4L1246.6 799.2M1233.9 810.3L1232.9 805.9M1230.8 797.0L1229.7 792.6M1280.2 803.7L1278.2 798.1M1278.2 798.1L1276.3 792.4M1208.0 807.3L1207.5 801.6M1207.5 801.6L1207.0 795.9M1207.0 795.9L1206.6 790.2M1206.6 790.2L1206.1 784.5M1140.5 799.9L1143.0 795.6M1283.2 809.4L1280.2 805.6M1277.3 801.8L1274.4 798.0M1274.4 798.0L1271.5 794.1M1288.6 801.5L1285.3 797.1M1145.0 801.9L1147.4 795.6M1147.4 795.6L1149.7 789.3M1245.3 806.2L1244.5 801.1M1244.5 801.1L1243.7 796.1M1243.7 796.1L1242.8 791.0M1193.3 807.0L1194.0 800.8M1149.1 805.0L1150.3 800.2M1150.3 800.2L1151.5 795.3M1292.4 808.7L1289.5 805.1M1289.5 805.1L1286.7 801.5M1286.7 801.5L1283.9 798.0M1283.9 798.0L1281.1 794.4M1281.1 794.4L1278.3 790.8M1243.5 804.0L1241.8 797.6M1146.3 808.8L1148.1 803.9M1148.1 803.9L1149.8 799.0M1149.8 799.0L1151.5 794.1M1151.5 794.1L1153.2 789.2M1153.2 789.2L1154.9 784.3M1281.9 805.2L1279.1 800.7M1120.0 798.9L1122.2 795.3M1144.9 803.0L1146.8 796.9M1294.5 807.3L1291.6 804.8M1288.8 802.3L1286.0 799.8M1283.2 797.3L1280.3 794.8M1280.3 794.8L1277.5 792.2M1127.9 802.6L1130.3 798.8M1135.0 791.3L1137.4 787.5M1198.0 810.8L1198.2 803.8M1198.2 803.8L1198.4 796.7M1198.6 789.7L1198.8 782.7M1237.9 802.4L1236.5 798.0M1236.5 798.0L1235.1 793.6M1235.1 793.6L1233.6 789.2M1233.6 789.2L1232.2 784.7M1268.4 804.1L1266.2 800.6M1263.9 797.1L1261.7 793.6M1163.2 800.4L1164.8 796.1M1164.8 796.1L1166.4 791.8M1138.5 799.3L1140.9 795.2M1244.0 801.9L1242.8 797.7M1242.8 797.7L1241.5 793.5M1240.3 789.3L1239.1 785.1M1213.2 802.2L1212.5 798.0M1212.5 798.0L1211.8 793.8M1211.8 793.8L1211.0 789.6M1164.4 802.2L1165.3 795.5M1127.7 803.8L1130.3 800.6M1130.3 800.6L1132.8 797.4M1137.9 791.0L1140.5 787.8M1251.6 804.8L1250.2 797.9M1250.2 797.9L1248.8 790.9M1248.8 790.9L1247.4 784.0M1195.5 801.7L1195.6 797.3M1276.5 810.8L1274.5 805.6M1272.5 800.5L1270.5 795.3M1270.5 795.3L1268.5 790.1M1268.5 790.1L1266.5 784.9M1265.4 807.5L1263.0 803.0M1255.8 789.6L1253.4 785.2M1217.6 803.3L1216.6 796.6M1155.7 807.0L1157.8 802.9M1159.8 798.8L1161.8 794.6M1259.7 800.7L1258.2 795.7M1258.2 795.7L1256.7 790.6M1256.7 790.6L1255.1 785.5M1162.8 804.1L1164.3 799.7M1164.3 799.7L1165.8 795.3M1165.8 795.3L1167.3 790.9M1279.1 804.1L1276.9 798.2M1276.9 798.2L1274.7 792.4M1170.0 800.9L1170.5 795.5M1171.0 790.1L1171.5 784.7M1189.2 802.5L1190.0 796.4M1190.0 796.4L1190.9 790.4M1287.8 809.0L1285.6 805.8M1285.6 805.8L1283.3 802.6M1283.3 802.6L1281.0 799.4M1281.0 799.4L1278.8 796.1M1278.8 796.1L1276.5 792.9M1115.8 806.1L1118.7 802.1M1121.6 798.0L1124.4 793.9M1159.4 808.2L1161.0 801.6M1162.7 795.0L1164.3 788.4M1268.0 808.2L1265.7 803.7M1265.7 803.7L1263.3 799.3M1263.3 799.3L1261.0 794.8M1286.2 806.5L1283.8 801.4M1283.8 801.4L1281.3 796.2M1258.1 801.4L1256.8 795.4M1130.9 796.7L1133.7 792.9M1191.1 807.8L1191.8 801.8M1148.1 802.7L1150.3 797.3M1135.7 792.3L1137.9 787.3M1178.9 807.3L1179.7 801.1M1179.7 801.1L1180.6 794.9M1125.7 805.2L1128.6 801.7M1128.6 801.7L1131.5 798.3M1137.2 791.3L1140.1 787.8M1134.7 805.3L1136.4 800.6M1136.4 800.6L1138.1 795.8M1258.5 809.2L1257.1 804.2M1257.1 804.2L1255.8 799.2M1261.4 807.5L1260.0 803.2M1260.0 803.2L1258.5 798.9M1257.1 794.6L1255.7 790.2M1233.3 801.4L1232.7 796.7M1232.7 796.7L1232.1 792.1M1232.1 792.1L1231.5 787.4M1195.0 802.3L1195.3 798.2M1195.3 798.2L1195.5 794.2M1195.5 794.2L1195.7 790.1M1163.5 798.1L1165.0 794.1M1165.0 794.1L1166.4 790.0M1174.2 806.9L1175.6 803.0M1175.6 803.0L1177.0 799.1M1178.4 795.2L1179.8 791.4M1179.8 791.4L1181.2 787.5M1248.1 802.5L1246.7 796.1M1246.7 796.1L1245.2 789.7M1245.2 789.7L1243.8 783.2M1127.1 799.7L1130.1 795.9M1130.1 795.9L1133.2 792.1M1133.2 792.1L1136.2 788.3M1136.2 788.3L1139.3 784.5M1204.2 804.8L1204.7 801.1M1204.7 801.1L1205.3 797.4M1205.3 797.4L1205.8 793.7M1215.2 807.5L1215.0 800.9M1173.3 807.4L1173.9 802.0M1173.9 802.0L1174.5 796.7M1174.5 796.7L1175.1 791.3M1124.7 802.7L1126.8 798.2M1128.9 793.7L1130.9 789.2M1223.9 802.2L1222.7 797.9M1221.4 793.7L1220.2 789.4M1239.5 803.0L1238.7 796.7M1238.0 790.3L1237.2 783.9M1119.8 802.6L1121.9 799.0M1121.9 799.0L1124.0 795.5M1126.0 792.0L1128.1 788.5M1128.1 788.5L1130.2 784.9M1181.0 794.1L1181.4 789.5M1292.0 801.9L1288.9 797.0M1285.8 792.1L1282.7 787.2M1286.4 802.1L1283.7 799.6M1283.7 799.6L1281.0 797.1M1281.0 797.1L1278.4 794.6M1144.6 803.7L1146.3 799.7M1146.3 799.7L1148.1 795.6M1149.8 791.6L1151.5 787.6M1225.8 807.1L1225.5 800.6M1225.5 800.6L1225.2 794.1M1173.7 800.0L1174.4 795.7M1186.6 810.2L1187.3 805.2M1188.0 800.2L1188.8 795.1M1134.9 804.5L1137.2 797.8M1137.2 797.8L1139.4 791.1M1210.0 800.8L1209.5 794.5M1132.7 810.9L1135.1 806.2M1137.6 801.4L1140.0 796.7M1140.0 796.7L1142.4 791.9M1246.8 799.3L1245.5 794.3M1245.5 794.3L1244.2 789.2M1278.6 799.5L1275.5 796.8M1275.5 796.8L1272.3 794.1M1189.4 804.0L1189.3 799.7M1189.3 799.7L1189.1 795.3M1189.1 795.3L1189.0 790.9M1189.0 790.9L1188.9 786.5M1121.8 804.9L1124.7 801.1M1127.5 797.3L1130.4 793.6M1130.4 793.6L1133.3 789.8M1133.3 789.8L1136.1 786.0M1176.1 803.7L1177.2 799.8M1177.2 799.8L1178.4 795.9M1179.5 791.9L1180.7 788.0M1287.8 805.4L1284.7 802.2M1281.5 799.1L1278.3 795.9M1143.3 803.3L1145.4 796.8M1145.4 796.8L1147.5 790.2M1147.5 790.2L1149.6 783.7M1274.7 801.8L1272.3 797.8M1272.3 797.8L1269.9 793.9M1267.5 789.9L1265.1 786.0M1260.6 801.8L1258.5 794.9M1258.5 794.9L1256.3 788.0M1133.3 803.0L1135.8 798.9M1194.9 810.4L1195.6 805.2M1195.6 805.2L1196.3 800.0M1197.1 794.9L1197.8 789.7M1147.9 800.9L1149.5 795.6M1149.5 795.6L1151.1 790.4M1151.1 790.4L1152.7 785.1M1121.2 807.3L1124.0 801.7M1160.3 799.2L1162.2 794.9M1162.2 794.9L1164.0 790.6M1164.0 790.6L1165.9 786.3M1277.0 811.4L1274.8 806.7M1274.8 806.7L1272.7 802.1M1272.7 802.1L1270.5 797.4M1268.3 792.8L1266.2 788.1M1204.9 803.3L1204.4 798.9M1204.4 798.9L1203.9 794.6M1184.5 799.3L1184.7 794.3M1184.7 794.3L1184.8 789.3M1190.9 805.2L1191.4 799.0M1191.4 799.0L1191.8 792.8M1191.8 792.8L1192.3 786.5M1260.1 802.4L1258.4 798.2M1258.4 798.2L1256.7 794.1M1256.7 794.1L1255.0 790.0M1140.4 806.0L1141.9 801.7M1146.2 788.6L1147.7 784.2M1116.9 803.8L1119.3 798.9M1124.2 789.1L1126.7 784.2M1115.6 801.9L1118.8 798.1M1121.9 794.3L1125.1 790.5M1125.1 790.5L1128.2 786.7M1198.0 803.0L1198.6 798.5M1198.6 798.5L1199.1 794.1M1219.2 801.1L1218.8 796.2M1201.6 804.7L1201.8 800.5M1150.3 803.6L1151.7 799.4M1151.7 799.4L1153.1 795.2M1132.6 802.2L1135.1 798.4M1135.1 798.4L1137.6 794.6M1214.5 799.4L1214.1 793.3M1214.1 793.3L1213.7 787.3M1121.6 810.5L1124.3 804.3M1136.6 805.0L1138.3 798.9M1166.5 810.7L1167.6 804.1M1167.6 804.1L1168.8 797.4M1168.8 797.4L1169.9 790.8M1169.9 790.8L1171.0 784.1M1209.4 797.5L1208.8 791.2M1145.6 805.9L1147.0 801.8M1147.0 801.8L1148.3 797.7M1148.3 797.7L1149.7 793.7M1151.0 789.6L1152.4 785.5M1275.2 802.3L1272.8 797.9M1222.9 809.0L1222.4 804.9M1222.4 804.9L1221.8 800.8M1221.8 800.8L1221.3 796.6M1220.7 792.5L1220.2 788.4M1291.1 806.2L1287.9 801.8M1287.9 801.8L1284.7 797.4M1281.5 793.0L1278.3 788.6M1240.7 798.2L1240.0 793.5M1282.2 800.5L1280.1 796.7M1210.8 801.0L1210.0 794.5M1210.0 794.5L1209.1 788.1M1182.0 805.2L1182.6 800.9M1172.7 803.1L1173.2 798.7M1173.2 798.7L1173.7 794.4M1124.0 801.5L1126.2 797.7M1236.8 810.5L1235.6 806.3M1231.9 793.5L1230.6 789.3M1230.6 789.3L1229.4 785.0M1118.0 803.6L1120.7 798.8M1123.5 794.0L1126.2 789.2M1126.2 789.2L1129.0 784.4M1164.0 802.6L1165.2 798.4M1165.2 798.4L1166.5 794.3M1279.2 804.3L1277.0 798.7M1277.0 798.7L1274.8 793.1M1274.8 793.1L1272.5 787.5M1195.3 803.4L1196.0 797.3M1174.9 795.9L1175.4 790.7M1187.6 803.6L1188.1 800.2M1188.1 800.2L1188.6 796.7M1188.6 796.7L1189.1 793.3M1119.3 806.5L1122.0 801.5M1122.0 801.5L1124.7 796.4M1233.4 799.4L1232.6 795.3M1208.9 807.9L1209.1 801.4M1209.1 801.4L1209.4 794.8M1209.4 794.8L1209.6 788.3M1121.2 801.7L1123.3 797.6M1123.3 797.6L1125.5 793.6M1191.6 801.6L1191.9 796.7M1284.5 804.3L1282.3 800.6M1278.0 793.2L1275.8 789.5M1199.1 804.2L1199.6 797.3M1199.6 797.3L1200.1 790.4M1273.7 798.4L1271.2 794.3M1271.2 794.3L1268.8 790.2M1268.8 790.2L1266.3 786.2M1176.4 792.6L1177.2 788.3M1257.1 799.2L1254.9 793.4M1242.8 796.4L1242.1 789.9M1285.7 803.8L1283.1 801.3M1283.1 801.3L1280.5 798.8M1280.5 798.8L1278.0 796.3M1278.0 796.3L1275.4 793.8M1275.4 793.8L1272.8 791.3M1160.1 805.8L1161.9 800.0M1150.1 796.5L1151.9 789.7M1242.9 806.1L1241.5 801.7M1241.5 801.7L1240.1 797.3M1240.1 797.3L1238.7 792.9M1238.7 792.9L1237.4 788.5M1277.8 801.1L1275.2 796.2M1230.0 804.4L1228.7 800.4M1286.2 804.7L1283.7 801.1M1283.7 801.1L1281.2 797.5M1281.2 797.5L1278.7 793.9M1136.8 808.4L1138.6 803.7M1138.6 803.7L1140.4 799.1M1142.2 794.4L1144.0 789.7M1125.7 797.6L1127.9 793.8M1127.9 793.8L1130.1 789.9M1270.3 804.9L1268.3 800.2M1268.3 800.2L1266.2 795.4M1285.2 801.3L1282.1 796.6M1282.1 796.6L1278.9 791.9M1278.9 791.9L1275.8 787.2M1113.2 811.5L1115.8 808.5M1115.8 808.5L1118.5 805.5M1118.5 805.5L1121.2 802.4M1121.2 802.4L1123.8 799.4M1173.2 804.3L1174.7 800.0M1176.2 795.7L1177.6 791.4M1177.6 791.4L1179.1 787.2M1161.1 806.4L1161.9 801.9M1161.9 801.9L1162.8 797.4M1162.8 797.4L1163.6 792.9M1163.6 792.9L1164.4 788.4M1143.1 801.7L1145.4 797.3M1145.4 797.3L1147.6 793.0M1147.6 793.0L1149.8 788.6M1139.3 803.2L1141.6 796.2M1164.9 789.9L1166.3 784.2M1210.6 809.6L1210.6 804.0M1210.6 804.0L1210.5 798.3M1123.3 802.2L1126.4 797.6M1129.5 793.1L1132.6 788.5M1132.6 788.5L1135.6 784.0M1206.0 794.7L1206.3 788.1M1278.4 804.5L1275.7 800.7M1275.7 800.7L1273.0 796.9M1273.0 796.9L1270.3 793.1M1267.6 789.3L1264.9 785.5M1248.1 802.3L1246.5 795.7M1251.8 805.0L1250.3 800.0M1250.3 800.0L1248.8 795.1M1248.8 795.1L1247.3 790.1M1210.6 793.1L1210.4 788.4M1241.2 807.0L1240.1 803.1M1237.7 795.4L1236.5 791.5M1247.4 796.9L1245.4 791.9M1246.7 805.2L1245.6 800.9M1244.5 796.7L1243.4 792.4M1200.4 804.0L1200.3 797.5M1200.1 790.9L1200.0 784.3M1206.8 798.2L1206.8 792.4M1165.2 801.4L1166.2 797.3M1167.1 793.3L1168.0 789.2M1205.8 806.3L1206.1 800.0M1206.1 800.0L1206.4 793.8M1236.6 803.8L1236.1 799.5M1236.1 799.5L1235.5 795.3M1162.8 801.0L1164.0 796.8M1166.4 788.3L1167.6 784.1M1263.6 798.3L1262.2 792.8M1279.1 801.8L1277.0 798.3M1277.0 798.3L1274.9 794.7M1251.5 810.1L1250.4 805.4M1250.4 805.4L1249.2 800.6M1249.2 800.6L1248.0 795.9M1284.4 806.2L1282.1 803.6M1275.3 795.8L1273.1 793.2M1273.1 793.2L1270.8 790.7M1215.2 807.1L1214.3 802.9M1214.3 802.9L1213.3 798.7M1213.3 798.7L1212.4 794.6M1211.4 790.4L1210.5 786.3M1214.9 805.5L1214.8 801.7M1214.7 797.9L1214.5 794.1M1214.5 794.1L1214.4 790.4M1214.4 790.4L1214.2 786.6M1128.9 802.9L1131.4 798.6M1131.4 798.6L1133.8 794.3M1201.9 806.3L1202.0 801.3M1279.2 803.9L1276.2 798.4M1272.4 809.3L1270.3 804.9M1270.3 804.9L1268.1 800.4M1268.1 800.4L1265.9 796.0M1263.7 791.6L1261.5 787.1M1281.5 804.2L1279.2 799.7M1277.0 795.1L1274.8 790.5M1273.1 802.3L1271.4 797.7M1269.7 793.1L1267.9 788.5M1267.9 788.5L1266.2 783.9M1226.1 802.7L1225.2 799.1M1224.3 795.5L1223.4 791.9M1223.4 791.9L1222.5 788.3M1251.0 804.5L1249.0 799.7M1245.1 790.1L1243.1 785.2M1207.4 803.3L1207.0 799.3M1207.0 799.3L1206.5 795.3M1206.0 791.4L1205.5 787.4M1202.6 810.0L1202.8 802.8M1202.8 802.8L1203.1 795.7M1203.1 795.7L1203.3 788.5M1229.6 803.7L1228.4 797.8M1174.0 802.2L1175.5 795.4M1175.5 795.4L1177.0 788.6M1208.0 801.7L1208.0 797.3M1208.0 797.3L1208.0 793.0M1208.0 793.0L1208.0 788.6M1268.2 800.8L1265.5 796.0M1164.6 804.5L1166.2 799.6M1166.2 799.6L1167.8 794.7M1213.4 804.9L1213.2 800.2M1213.2 800.2L1213.0 795.5M1116.1 805.4L1119.1 802.9M1119.1 802.9L1122.0 800.3M1122.0 800.3L1125.0 797.7M1127.9 795.1L1130.8 792.5M1138.7 801.9L1140.2 797.0M1268.8 798.7L1266.2 793.5M1266.2 793.5L1263.7 788.3M1118.9 802.5L1121.3 799.3M1121.3 799.3L1123.8 796.2M1204.0 803.7L1204.2 799.4M1204.2 799.4L1204.4 795.1M1204.7 790.8L1204.9 786.5M1188.4 806.5L1188.6 802.8M1188.7 799.0L1188.9 795.3M1189.1 791.6L1189.2 787.9M1220.0 800.7L1219.5 795.4M1219.0 790.0L1218.5 784.7M1208.7 804.2L1208.6 799.4M1179.7 805.1L1180.8 800.3M1183.0 790.7L1184.1 785.9M1286.2 801.4L1283.3 798.3M1283.3 798.3L1280.3 795.2M1280.3 795.2L1277.4 792.1M1277.4 792.1L1274.5 789.0M1127.2 806.3L1129.3 800.7M1129.3 800.7L1131.5 795.2M1296.8 808.5L1293.8 804.2M1268.8 801.4L1266.1 796.3M1266.1 796.3L1263.5 791.3M1284.4 802.4L1281.4 797.3M1278.3 792.3L1275.3 787.3M1262.3 802.9L1260.8 798.3M1260.8 798.3L1259.2 793.7M1201.9 804.5L1201.9 797.5M1124.7 800.8L1126.9 796.3M1129.2 791.7L1131.5 787.2M1213.2 801.2L1212.6 796.3M1212.1 791.3L1211.5 786.3M1238.5 794.9L1236.8 791.0M1161.0 806.8L1162.3 802.4M1162.3 802.4L1163.7 798.0M1165.0 793.6L1166.4 789.2M1236.2 801.8L1235.0 797.4M1235.0 797.4L1233.9 793.0M1160.7 802.7L1162.2 796.8M1162.2 796.8L1163.8 790.9M1229.5 805.8L1228.5 799.9M1228.5 799.9L1227.6 794.1M1190.5 807.1L1191.4 803.2M1192.2 799.4L1193.0 795.5M1193.0 795.5L1193.8 791.7M1122.3 799.5L1125.3 793.6M1191.7 802.6L1192.6 798.8M1194.2 791.0L1195.1 787.1M1163.0 805.0L1164.1 799.9M1164.1 799.9L1165.3 794.8M1166.5 789.7L1167.6 784.6M1243.3 801.4L1241.6 796.4M1288.2 804.4L1285.5 801.7M1285.5 801.7L1282.7 799.1M1282.7 799.1L1280.0 796.4M1280.0 796.4L1277.3 793.7M1142.8 807.9L1145.0 802.3M1145.0 802.3L1147.2 796.8M1149.4 791.2L1151.6 785.7M1141.2 810.6L1142.8 804.3M1221.5 796.7L1220.9 789.7M1220.9 789.7L1220.3 782.7M1273.9 807.7L1271.2 804.0M1268.5 800.3L1265.8 796.6M1223.6 803.1L1223.4 799.9M1223.4 799.9L1223.2 796.6M1223.2 796.6L1223.0 793.4M1243.2 805.1L1241.4 799.1M1241.4 799.1L1239.7 793.2M1239.7 793.2L1238.0 787.2M1266.2 802.0L1264.6 798.2M1264.6 798.2L1263.0 794.3M1115.5 804.0L1118.1 801.7M1120.8 799.4L1123.4 797.1M1192.8 802.8L1193.0 798.2M1193.0 798.2L1193.1 793.7M1193.3 789.2L1193.4 784.7M1292.5 802.9L1289.7 798.4M1289.7 798.4L1287.0 793.9M1140.8 805.1L1142.3 799.2M1142.3 799.2L1143.8 793.2M1169.9 801.0L1170.4 794.9M1170.4 794.9L1170.9 788.8M1263.6 808.3L1261.4 801.8M1273.2 809.5L1271.4 805.7M1267.8 798.1L1266.1 794.3M1151.1 806.2L1152.3 802.1M1152.3 802.1L1153.5 797.9M1154.7 793.8L1155.9 789.6M1254.1 794.5L1252.5 790.6M1216.1 807.3L1215.2 802.7M1214.4 798.1L1213.6 793.4M1167.7 794.4L1168.9 788.6M1154.2 806.5L1155.3 801.6M1155.3 801.6L1156.4 796.6M1233.4 803.5L1232.5 799.7M1232.5 799.7L1231.7 795.8M1230.8 792.0L1229.9 788.2M1281.6 802.8L1278.9 798.4M1150.7 804.8L1152.2 797.8M1153.7 790.9L1155.1 784.0M1152.1 811.1L1153.4 806.9M1154.7 802.8L1156.0 798.7M1156.0 798.7L1157.3 794.6M1157.3 794.6L1158.6 790.5M1117.3 805.7L1120.3 802.5M1120.3 802.5L1123.4 799.3M1123.4 799.3L1126.4 796.1M1202.5 800.7L1202.8 794.2M1202.8 794.2L1203.1 787.7M1288.0 801.8L1285.4 798.5M1285.4 798.5L1282.9 795.2M1208.0 803.0L1208.3 798.2M1208.3 798.2L1208.6 793.5M1202.3 804.2L1202.0 799.6M1202.0 799.6L1201.7 795.1M1201.5 790.5L1201.2 785.9M1213.1 803.0L1212.6 798.5M1212.6 798.5L1212.1 794.1M1211.5 789.6L1211.0 785.1M1179.5 802.6L1180.3 799.0M1180.3 799.0L1181.2 795.4M1182.0 791.8L1182.8 788.1M1237.5 801.9L1236.8 796.2M1208.2 804.1L1208.1 797.9M1208.0 791.7L1208.0 785.5M1137.2 810.1L1138.9 806.2M1138.9 806.2L1140.6 802.3M1140.6 802.3L1142.3 798.4M1142.3 798.4L1144.0 794.5M1145.8 790.7L1147.5 786.8M1137.3 806.9L1139.3 800.8M1139.3 800.8L1141.3 794.6M1138.6 789.8L1140.5 784.8M1211.1 801.6L1210.7 795.2M1239.4 802.9L1238.4 797.5M1237.4 792.0L1236.3 786.6M1254.7 798.8L1252.7 793.9M1226.0 802.0L1224.8 797.7M1224.8 797.7L1223.6 793.3M1267.5 794.5L1265.1 788.7M1201.6 800.2L1201.0 794.2M1201.0 794.2L1200.5 788.1M1259.5 809.4L1258.3 804.6M1258.3 804.6L1257.1 799.9M1255.8 795.1L1254.6 790.3M1254.6 790.3L1253.3 785.6M1232.8 799.9L1232.2 795.8M1189.5 810.1L1190.1 805.2M1190.1 805.2L1190.8 800.3M1200.4 810.5L1200.3 803.7M1200.3 803.7L1200.2 797.0M1200.2 797.0L1200.1 790.2M1145.9 803.9L1147.6 798.3M1147.6 798.3L1149.3 792.6M1144.8 801.8L1146.1 796.7M1146.1 796.7L1147.3 791.6M1253.8 806.6L1252.3 800.1M1252.3 800.1L1250.8 793.6M1165.4 803.5L1166.5 799.4M1193.1 794.0L1193.8 787.9M1241.0 807.3L1239.5 803.2M1239.5 803.2L1238.0 799.1M1238.0 799.1L1236.4 795.0M1236.4 795.0L1234.9 790.9M1234.9 790.9L1233.4 786.8M1140.1 809.8L1142.2 805.0M1142.2 805.0L1144.2 800.2M1192.5 807.0L1192.5 802.6M1192.5 802.6L1192.5 798.1M1192.5 798.1L1192.5 793.7M1274.4 802.1L1271.9 797.9M1271.9 797.9L1269.4 793.7M1206.3 811.0L1206.3 806.2M1206.3 801.5L1206.3 796.8M1206.3 792.0L1206.3 787.3M1206.0 805.9L1205.5 800.1M1168.5 802.3L1169.8 795.4M1169.8 795.4L1171.2 788.5M1163.0 800.9L1163.9 796.8M1165.6 788.5L1166.4 784.3M1133.2 809.8L1134.8 805.8M1136.4 801.8L1138.1 797.9M1138.1 797.9L1139.7 793.9M1139.7 793.9L1141.3 789.9M1229.5 807.9L1229.0 801.7M1229.0 801.7L1228.4 795.4M1274.1 802.6L1271.4 798.3M1291.0 811.6L1287.9 807.8M1281.5 800.1L1278.3 796.3M1275.1 792.5L1271.9 788.6M1154.2 800.6L1155.9 795.3M1178.7 800.5L1179.1 795.3M1204.1 805.3L1203.7 800.6M1203.7 800.6L1203.3 796.0M1191.4 805.2L1191.2 801.0M1191.2 801.0L1191.0 796.7M1275.5 809.4L1273.1 803.4M1273.1 803.4L1270.8 797.4M1270.8 797.4L1268.4 791.5M1268.4 791.5L1266.0 785.5M1119.2 803.8L1122.3 800.3M1125.4 796.8L1128.6 793.2M1218.0 798.2L1217.5 792.2M1280.3 806.9L1278.1 801.4M1278.1 801.4L1275.8 795.8M1256.7 806.1L1255.0 801.2M1225.4 801.5L1225.2 795.8M1182.0 793.5L1183.2 790.1M1272.7 804.9L1270.9 798.4M1270.9 798.4L1269.1 791.8M1162.8 805.5L1164.2 800.8M1233.5 802.4L1233.0 797.8M1233.0 797.8L1232.4 793.2M1232.4 793.2L1231.8 788.6M1231.8 788.6L1231.3 784.0M1250.6 806.3L1248.8 800.9M1247.0 795.4L1245.2 790.0M1245.2 790.0L1243.3 784.5M1134.8 805.8L1136.5 800.1M1136.5 800.1L1138.2 794.5M1138.2 794.5L1140.0 788.8M1216.1 805.1L1215.5 798.2M1215.0 791.3L1214.4 784.4M1236.0 804.0L1234.8 799.8M1234.8 799.8L1233.5 795.6M1233.5 795.6L1232.3 791.4M1180.0 804.1L1180.1 799.6M1180.1 799.6L1180.2 795.2M1180.2 795.2L1180.4 790.7M1180.4 790.7L1180.5 786.2M1154.9 799.6L1156.1 793.2M1258.0 803.8L1256.7 798.0M1256.7 798.0L1255.5 792.2M1127.4 798.2L1130.5 794.8M1115.7 804.6L1118.4 800.1M1118.4 800.1L1121.2 795.7M1121.2 795.7L1123.9 791.3M1271.2 804.9L1268.9 798.4M1268.9 798.4L1266.7 791.9M1122.2 810.1L1124.8 806.1M1124.8 806.1L1127.5 802.1M1127.5 802.1L1130.1 798.1M1130.1 798.1L1132.8 794.1M1132.8 794.1L1135.4 790.0M1135.4 790.0L1138.1 786.0M1274.5 803.8L1272.0 799.9M1272.0 799.9L1269.4 796.1M1154.1 811.0L1155.5 804.8M1155.5 804.8L1156.9 798.6M1158.3 792.4L1159.7 786.2M1273.8 809.6L1271.9 803.2M1271.9 803.2L1270.0 796.8M1270.0 796.8L1268.1 790.4M1273.7 806.9L1271.5 803.1M1271.5 803.1L1269.3 799.2M1269.3 799.2L1267.1 795.3M1130.7 801.9L1132.5 796.1M1138.4 805.1L1139.9 800.6M1139.9 800.6L1141.4 796.1M1141.4 796.1L1142.9 791.5M1142.9 791.5L1144.4 787.0M1241.6 810.6L1240.2 806.4M1238.8 802.1L1237.4 797.9M1237.4 797.9L1235.9 793.7M1235.9 793.7L1234.5 789.5M1234.5 789.5L1233.1 785.2M1276.1 803.0L1273.2 798.9M1270.3 794.8L1267.5 790.7M1267.5 790.7L1264.6 786.6M1135.9 799.2L1137.8 795.1M1137.8 795.1L1139.8 791.1M1139.8 791.1L1141.7 787.0M1215.7 805.0L1214.7 800.5M1214.7 800.5L1213.8 796.0M1213.8 796.0L1212.9 791.5M1212.9 791.5L1211.9 787.1M1268.7 803.0L1266.5 799.1M1245.2 807.1L1244.0 801.7M1244.0 801.7L1242.9 796.3M1242.9 796.3L1241.8 790.9M1280.5 803.0L1277.9 799.6M1277.9 799.6L1275.3 796.2M1272.7 792.8L1270.1 789.4M1151.3 801.5L1153.4 796.9M1127.7 798.9L1129.7 794.2M1131.8 789.5L1133.9 784.8M1203.5 806.3L1203.2 801.5M1203.2 801.5L1202.9 796.7M1202.9 796.7L1202.6 791.9M1179.3 801.4L1180.0 797.2M1181.4 788.9L1182.1 784.8M1186.1 805.8L1187.1 799.9M1267.2 803.3L1264.6 797.9M1264.6 797.9L1262.0 792.6M1247.6 790.6L1245.7 785.5M1290.8 811.3L1288.3 807.1M1285.7 802.9L1283.2 798.8M1280.6 794.6L1278.1 790.4M1172.1 802.4L1173.3 796.7M1239.6 806.0L1238.3 800.2M1238.3 800.2L1237.1 794.3M1237.1 794.3L1235.9 788.5M1211.7 797.1L1211.5 791.5M1175.8 803.7L1176.5 797.3M1176.5 797.3L1177.1 790.9M1122.0 791.2L1124.8 786.5M1134.5 798.9L1136.3 792.8M1139.2 804.7L1141.0 798.8M1141.0 798.8L1142.8 792.8M1273.1 804.1L1271.3 798.3M1271.3 798.3L1269.5 792.6M1269.5 792.6L1267.7 786.8M1132.3 807.6L1134.6 802.3M1126.9 802.0L1129.8 797.4M1129.8 797.4L1132.7 792.8M1239.7 803.4L1238.0 796.9M1125.4 800.5L1128.5 797.7M1128.5 797.7L1131.6 794.9M1131.6 794.9L1134.7 792.0M1115.9 802.2L1118.2 799.3M1118.2 799.3L1120.4 796.5M1120.4 796.5L1122.7 793.7M1148.7 802.5L1150.5 795.5M1150.5 795.5L1152.3 788.6M1265.1 809.2L1263.4 802.5M1263.4 802.5L1261.8 795.8M1163.8 804.7L1165.0 798.2M1166.2 791.6L1167.4 785.1M1160.9 801.3L1162.7 796.0M1141.5 803.5L1143.8 796.9M1212.2 805.8L1212.0 802.0M1211.9 798.1L1211.8 794.3M1154.0 797.7L1156.3 793.4M1124.1 802.0L1126.4 797.8M1126.4 797.8L1128.7 793.5M1128.7 793.5L1131.1 789.2M1181.1 807.0L1181.3 802.5M1181.5 798.0L1181.7 793.5M1120.8 803.2L1123.7 797.8M1123.7 797.8L1126.5 792.4M1126.5 792.4L1129.4 787.0M1153.5 803.1L1155.3 799.7M1262.6 801.3L1260.1 796.0M1260.1 796.0L1257.6 790.7M1257.6 790.7L1255.0 785.3M1238.0 800.3L1237.0 794.5M1235.0 803.4L1233.4 798.6M1230.2 789.0L1228.6 784.1M1116.4 801.5L1119.1 797.2M1119.1 797.2L1121.7 792.8M1232.1 805.4L1230.8 800.9M1240.1 805.4L1239.4 799.7M1185.2 806.4L1185.6 802.5M1185.6 802.5L1186.0 798.5M1186.0 798.5L1186.4 794.6M1186.4 794.6L1186.8 790.7M1284.3 802.9L1281.2 799.7M1275.0 793.3L1271.9 790.0M1268.6 805.0L1266.1 799.0M1266.1 799.0L1263.5 793.0M1263.5 793.0L1260.9 786.9M1235.8 802.8L1234.2 797.4M1119.0 799.8L1121.9 797.7M1121.9 797.7L1124.9 795.6M1287.6 811.3L1284.7 805.5M1284.7 805.5L1281.8 799.7M1281.8 799.7L1278.9 793.8M1211.2 804.6L1211.5 799.6M1261.1 801.1L1259.6 795.4M1258.1 789.7L1256.6 784.0M1167.8 803.5L1169.4 796.4M1140.1 789.3L1142.3 785.9M1138.7 805.2L1141.1 798.9M1141.1 798.9L1143.4 792.7M1123.8 812.0L1135.8 805.9M1116.5 799.5L1125.4 795.2M1104.6 794.0L1111.6 790.6M1129.0 793.6L1133.5 789.1M1123.9 794.6L1129.9 790.5M1114.6 793.6L1124.7 788.6M1102.1 796.1L1114.3 785.7M1119.8 786.9L1129.4 782.3M1106.9 806.6L1120.1 797.7M1102.4 787.8L1114.2 781.3M1115.7 788.6L1121.2 783.9M1117.7 798.0L1130.6 791.6M1109.8 805.7L1117.7 798.4M1101.5 798.8L1113.6 791.7M1118.4 789.1L1129.1 782.2M1112.3 802.8L1120.9 798.7M1099.5 792.0L1108.2 784.2M1107.5 813.5L1119.3 805.8M1279.4 801.0L1271.5 796.4M1279.2 799.2L1272.0 793.3M1307.1 809.2L1293.5 799.9M1300.0 790.0L1292.8 783.1M1286.6 812.6L1274.0 804.9M1305.4 795.5L1299.4 791.5M1285.7 804.4L1272.7 794.7M1283.4 806.1L1269.3 799.3M1279.3 808.6L1271.2 804.4M1292.1 793.2L1285.8 789.9M1312.3 798.4L1300.4 789.8M1282.2 804.4L1268.5 798.0M1295.9 806.0L1285.9 801.3M1301.0 804.2L1294.1 797.9" stroke="#ffd800" stroke-width="0.6" fill="none" opacity="0.9"/><path d="M1158.4 795.7L1160.5 791.7M1162.6 787.7L1164.7 783.8M1188.3 797.2L1189.3 791.7M1189.3 791.7L1190.2 786.3M1190.2 786.3L1191.2 780.8M1169.1 796.6L1170.2 793.1M1170.2 793.1L1171.4 789.6M1221.0 794.7L1219.9 787.8M1219.9 787.8L1218.8 780.9M1257.3 794.1L1255.6 790.0M1255.6 790.0L1253.9 785.8M1253.9 785.8L1252.2 781.6M1218.1 794.5L1217.8 789.5M1217.8 789.5L1217.6 784.6M1217.6 784.6L1217.4 779.6M1256.5 796.8L1255.1 790.8M1255.1 790.8L1253.7 784.7M1218.3 793.2L1217.3 789.8M1217.3 789.8L1216.4 786.5M1199.8 788.6L1199.6 784.3M1156.5 796.0L1158.3 790.7M1158.3 790.7L1160.1 785.4M1245.0 796.7L1243.5 792.2M1242.0 787.6L1240.5 783.1M1157.6 793.2L1158.8 789.9M1158.8 789.9L1159.9 786.6M1181.0 788.6L1181.4 784.1M1232.8 790.6L1231.8 785.2M1231.8 785.2L1230.9 779.9M1233.0 792.0L1231.7 786.6M1231.7 786.6L1230.4 781.1M1232.1 795.6L1230.9 790.2M1230.9 790.2L1229.7 784.7M1229.7 784.7L1228.5 779.3M1221.9 793.4L1221.4 789.6M1221.4 789.6L1220.9 785.9M1218.9 795.6L1218.4 792.1M1218.4 792.1L1217.9 788.7M1217.9 788.7L1217.3 785.2M1132.4 789.6L1134.5 785.2M1205.0 794.7L1204.7 787.9M1204.7 787.9L1204.4 781.1M1188.8 794.3L1189.1 790.1M1189.1 790.1L1189.5 785.9M1189.5 785.9L1189.8 781.7M1265.3 795.3L1262.8 790.0M1262.8 790.0L1260.4 784.7M1140.9 796.7L1142.4 792.2M1134.2 792.6L1136.1 787.0M1220.1 795.9L1219.2 791.5M1219.2 791.5L1218.4 787.2M1218.4 787.2L1217.5 782.9M1258.3 791.4L1256.1 786.1M1229.1 794.6L1228.4 788.8M1227.8 783.1L1227.1 777.4M1135.0 794.1L1137.4 789.7M1137.4 789.7L1139.7 785.3M1223.7 796.0L1223.4 791.1M1223.4 791.1L1223.0 786.2M1189.2 794.1L1190.1 790.1M1190.1 790.1L1191.0 786.0M1222.8 791.0L1222.3 786.0M1271.4 794.4L1269.1 790.1M1179.1 789.8L1179.6 782.6M1123.2 794.1L1125.5 791.4M1156.0 796.5L1157.1 792.0M1157.1 792.0L1158.3 787.6M1284.9 793.4L1282.0 788.1M1282.0 788.1L1279.1 782.8M1252.6 792.3L1250.7 787.6M1226.2 789.9L1225.6 785.6M1193.7 796.9L1194.3 792.1M1194.3 792.1L1194.8 787.3M1194.8 787.3L1195.4 782.5M1280.1 794.3L1277.2 791.5M1255.2 793.6L1253.5 789.7M1232.3 789.7L1231.0 784.9M1231.0 784.9L1229.8 780.1M1265.4 795.3L1262.8 790.3M1262.8 790.3L1260.2 785.3M1260.2 785.3L1257.7 780.3M1260.1 792.6L1258.6 788.2M1258.6 788.2L1257.2 783.7M1152.3 794.0L1154.0 787.5M1221.7 793.4L1220.8 789.2M1220.8 789.2L1220.0 785.0M1158.4 785.1L1160.7 780.3M1160.3 786.9L1161.4 780.8M1216.7 795.3L1216.7 788.8M1232.4 796.8L1231.1 789.7M1231.1 789.7L1229.7 782.5M1212.8 796.1L1212.5 791.0M1212.5 791.0L1212.2 785.9M1198.1 795.9L1198.0 791.9M1197.9 787.9L1197.9 783.9M1207.3 796.7L1207.0 790.9M1196.9 794.2L1197.0 789.7M1170.4 794.8L1171.4 790.8M1171.4 790.8L1172.5 786.9M1224.5 797.2L1223.6 789.9M1223.6 789.9L1222.8 782.5M1231.4 793.8L1230.2 789.1M1230.2 789.1L1228.9 784.4M1228.9 784.4L1227.7 779.7M1184.6 796.6L1185.6 791.5M1133.1 793.3L1134.9 789.1M1180.7 797.2L1180.8 791.6M1180.8 791.6L1180.9 786.0M1277.2 794.0L1274.1 790.3M1274.1 790.3L1271.0 786.6M1143.3 796.8L1145.1 790.4M1145.1 790.4L1146.9 784.1M1253.3 793.5L1251.5 789.3M1251.5 789.3L1249.7 785.1M1202.5 796.1L1202.6 792.0M1202.6 792.0L1202.7 787.9M1202.7 787.9L1202.9 783.9M1206.4 791.1L1206.0 787.3M1206.0 787.3L1205.5 783.5M1263.8 793.6L1261.1 790.2M1233.1 783.5L1231.9 777.6M1181.3 793.2L1182.0 788.7M1182.0 788.7L1182.8 784.3M1182.8 784.3L1183.5 779.9M1217.9 790.1L1217.4 783.2M1245.6 793.8L1244.2 789.8M1244.2 789.8L1242.8 785.7M1242.8 785.7L1241.4 781.7M1263.4 790.4L1260.8 783.2M1193.5 788.3L1193.5 784.6M1155.9 796.5L1157.6 791.3M1157.6 791.3L1159.4 786.2M1143.9 790.0L1146.3 786.4M1169.0 795.6L1169.7 791.3M1169.7 791.3L1170.3 787.0M1239.5 796.5L1237.9 792.0M1237.9 792.0L1236.4 787.6M1143.0 790.2L1144.7 785.8M1132.3 789.7L1135.1 785.3M1135.1 785.3L1137.9 780.9M1156.0 794.3L1157.6 790.0M1157.6 790.0L1159.2 785.6M1187.8 791.1L1187.6 787.2M1160.2 795.9L1161.7 791.7M1163.2 787.6L1164.8 783.4M1171.3 796.8L1172.2 790.5M1172.2 790.5L1173.1 784.1M1233.2 796.0L1232.4 791.1M1278.4 794.8L1275.7 790.1M1174.6 795.4L1175.6 791.7M1175.6 791.7L1176.6 788.0M1176.6 788.0L1177.7 784.3M1218.0 796.8L1217.4 791.9M1233.5 792.8L1232.8 787.4M1198.0 795.2L1198.6 790.7M1245.0 797.6L1243.4 792.2M1243.4 792.2L1241.8 786.8M1241.8 786.8L1240.2 781.4M1277.6 793.0L1275.4 789.3M1275.4 789.3L1273.2 785.6M1179.1 798.0L1179.5 791.2M1267.5 796.1L1264.8 792.7M1179.9 792.6L1180.4 786.1M1180.4 786.1L1180.8 779.7M1131.7 795.8L1134.6 791.7M1134.6 791.7L1137.4 787.7M1176.9 796.1L1177.2 790.2M1177.2 790.2L1177.5 784.2M1239.3 796.1L1238.2 792.1M1238.2 792.1L1237.1 788.0M1237.1 788.0L1236.0 784.0M1181.8 792.2L1182.3 788.6M1182.3 788.6L1182.8 785.0M1147.3 791.4L1149.5 787.2M1149.5 787.2L1151.7 783.1M1260.1 796.3L1258.6 790.0M1258.6 790.0L1257.1 783.8M1257.1 783.8L1255.6 777.6M1162.1 793.6L1163.5 787.2M1163.5 787.2L1164.8 780.8M1171.6 795.0L1172.8 788.8M1172.8 788.8L1174.1 782.6M1183.6 793.7L1184.8 789.6M1184.8 789.6L1186.0 785.5M1134.5 795.7L1136.4 791.6M1138.4 787.5L1140.3 783.4M1244.0 796.5L1242.2 793.3M1242.2 793.3L1240.5 790.0M1240.5 790.0L1238.7 786.8M1182.7 795.2L1183.8 791.0M1183.8 791.0L1184.9 786.8M1136.3 792.0L1138.8 788.7M1205.4 784.4L1205.1 778.8M1153.8 794.9L1155.7 790.9M1155.7 790.9L1157.6 786.9M1278.8 797.3L1275.7 791.6M1275.7 791.6L1272.6 785.9M1272.6 785.9L1269.5 780.2M1234.6 789.5L1234.1 782.6M1226.0 794.7L1225.0 788.1M1225.0 788.1L1224.0 781.4M1123.1 788.9L1126.5 784.5M1145.0 795.0L1147.4 789.9M1147.4 789.9L1149.9 784.8M1203.3 791.6L1203.1 787.1M1270.4 797.3L1267.9 792.4M1267.9 792.4L1265.5 787.5M1265.5 787.5L1263.1 782.7M1261.4 794.3L1259.8 790.3M1259.8 790.3L1258.3 786.3M1127.9 795.0L1130.8 792.4M1221.7 794.3L1221.1 790.6M1216.0 794.6L1215.0 788.9M1215.0 788.9L1214.0 783.2M1278.9 793.7L1275.9 790.5M1225.4 797.2L1224.5 790.1M1224.5 790.1L1223.6 783.0M1171.2 793.9L1172.5 787.4M1195.0 794.4L1195.1 789.5M1195.1 789.5L1195.2 784.6M1195.2 784.6L1195.2 779.6M1224.0 792.1L1223.1 787.4M1223.1 787.4L1222.1 782.7M1251.0 797.3L1249.8 792.7M1249.8 792.7L1248.6 788.1M1248.6 788.1L1247.4 783.5M1185.3 795.3L1186.0 788.4M1186.0 788.4L1186.7 781.5M1176.8 797.8L1177.5 791.9M1177.5 791.9L1178.2 785.9M1274.5 792.6L1272.6 788.4M1272.6 788.4L1270.7 784.2M1237.1 795.1L1236.1 791.1M1235.0 787.0L1234.0 783.0M1185.9 793.7L1186.6 788.9M1187.2 784.1L1187.9 779.3M1200.2 790.1L1200.1 785.6M1200.1 785.6L1200.1 781.0M1211.0 795.2L1210.2 788.9M1186.0 795.7L1186.6 790.8M1186.6 790.8L1187.2 785.9M1187.2 785.9L1187.8 781.0M1190.0 793.9L1190.0 789.4M1190.0 789.4L1190.0 784.9M1172.6 792.1L1173.0 787.4M1173.0 787.4L1173.4 782.7M1244.8 795.9L1243.8 789.1M1241.4 796.4L1239.5 792.6M1239.5 792.6L1237.7 788.7M1151.9 790.2L1153.5 785.9M1202.7 794.1L1202.8 790.0M1202.8 790.0L1202.9 785.9M1202.9 785.9L1203.0 781.8M1204.0 790.2L1204.0 786.9M1257.2 794.9L1254.8 790.2M1252.5 785.5L1250.1 780.8M1279.7 790.5L1277.3 786.2M1277.3 786.2L1274.8 781.9M1261.3 789.7L1259.0 783.2M1179.8 796.4L1180.9 790.0M1182.0 783.7L1183.1 777.3M1245.2 795.3L1244.1 791.5M1243.1 787.6L1242.1 783.8M1287.1 795.2L1284.2 790.2M1284.2 790.2L1281.3 785.1M1281.3 785.1L1278.3 780.1M1269.5 794.9L1267.2 789.1M1264.9 783.3L1262.6 777.6M1156.8 793.8L1157.7 789.2M1157.7 789.2L1158.7 784.5M1158.7 784.5L1159.6 779.9M1243.4 790.0L1242.1 783.0M1259.1 794.3L1257.5 789.9M1256.0 785.5L1254.4 781.0M1176.5 788.0L1177.1 781.7M1190.9 797.7L1190.9 790.9M1190.8 784.1L1190.7 777.3M1137.1 795.6L1138.7 790.7M1138.7 790.7L1140.3 785.7M1140.3 785.7L1142.0 780.8M1207.8 789.2L1208.0 782.2M1228.6 793.1L1227.5 788.8M1227.5 788.8L1226.4 784.5M1135.3 794.8L1137.5 790.5M1137.5 790.5L1139.7 786.2M1126.0 790.3L1128.2 785.1M1187.1 796.5L1187.3 792.3M1187.3 792.3L1187.4 788.1M1187.4 788.1L1187.5 784.0M1245.5 792.4L1244.5 787.0M1252.4 796.6L1250.9 792.2M1153.6 796.9L1155.0 791.6M1156.3 786.4L1157.7 781.2M1192.2 792.3L1193.0 786.4M1193.0 786.4L1193.9 780.5M1227.4 796.1L1226.9 792.0M1134.5 793.5L1137.5 789.9M1275.1 791.3L1273.0 787.3M1162.6 797.0L1163.6 792.9M1163.6 792.9L1164.6 788.8M1164.6 788.8L1165.6 784.7M1248.4 796.0L1247.1 790.1M1247.1 790.1L1245.8 784.3M1245.8 784.3L1244.5 778.4M1172.0 796.6L1173.6 792.3M1137.7 793.1L1140.2 789.1M1140.2 789.1L1142.8 785.1M1177.1 796.2L1178.5 792.8M1219.9 794.5L1218.7 789.4M1218.7 789.4L1217.5 784.3M1217.5 784.3L1216.3 779.2M1200.2 796.2L1200.6 791.5M1281.3 795.0L1278.8 792.5M1138.5 792.5L1141.2 786.5M1141.2 786.5L1143.9 780.4M1152.3 795.1L1153.8 789.8M1153.8 789.8L1155.3 784.5M1155.3 784.5L1156.9 779.1M1277.7 794.6L1275.1 791.9M1266.1 794.6L1263.6 790.7M1133.7 790.4L1136.4 784.5M1136.4 784.5L1139.1 778.5M1261.5 789.1L1260.0 785.0M1246.2 794.3L1245.0 788.0M1245.0 788.0L1243.7 781.6M1202.1 794.3L1202.1 789.3M1202.1 789.3L1202.1 784.2M1202.1 784.2L1202.0 779.2M1275.3 793.8L1272.4 789.0M1272.4 789.0L1269.5 784.1M1269.5 784.1L1266.6 779.3M1172.7 797.0L1173.2 792.1M1173.8 787.2L1174.4 782.3M1158.8 790.1L1160.5 784.6M1187.7 793.2L1188.1 788.7M1188.1 788.7L1188.5 784.1M1187.3 793.1L1188.2 789.3M1188.2 789.3L1189.2 785.6M1265.0 793.0L1262.4 788.8M1262.4 788.8L1259.9 784.6M1251.8 797.2L1249.6 790.6M1249.6 790.6L1247.4 784.0M1247.4 784.0L1245.3 777.3M1203.4 797.9L1203.5 791.1M1203.5 791.1L1203.6 784.3M1203.6 784.3L1203.7 777.5M1175.4 795.4L1175.9 791.6M1175.9 791.6L1176.4 787.9M1176.4 787.9L1176.9 784.1M1128.9 793.2L1131.5 789.4M1131.5 789.4L1134.2 785.6M1195.7 797.1L1196.6 792.2M1196.6 792.2L1197.4 787.2M1197.4 787.2L1198.3 782.3M1227.5 794.1L1226.7 790.3M1226.7 790.3L1226.0 786.5M1238.9 791.4L1237.1 785.3M1211.7 793.2L1211.3 789.3M1211.3 789.3L1210.8 785.4M1213.0 794.5L1212.6 788.6M1132.1 791.4L1134.2 787.1M1255.2 795.5L1253.6 789.5M1190.6 789.6L1190.5 785.1M1190.5 785.1L1190.4 780.7M1233.0 796.4L1231.6 791.4M1231.6 791.4L1230.2 786.4M1237.3 791.2L1236.5 787.0M1236.5 787.0L1235.8 782.8M1157.9 795.2L1159.5 790.6M1159.5 790.6L1161.0 785.9M1145.1 796.8L1147.4 793.0M1149.6 789.3L1151.9 785.6M1180.1 796.4L1180.8 789.7M1129.5 785.8L1132.5 780.6M1169.6 790.9L1170.3 784.3M1170.3 784.3L1171.0 777.7M1191.3 790.0L1191.2 784.2M1217.7 795.6L1217.1 790.8M1144.1 789.0L1146.3 784.8M1203.0 790.9L1202.9 784.6M1150.0 796.4L1151.7 789.9M1151.7 789.9L1153.4 783.3M1153.4 783.3L1155.2 776.8M1199.9 784.9L1200.5 780.1M1180.9 793.9L1181.8 789.1M1181.8 789.1L1182.7 784.3M1254.3 797.5L1252.4 792.1M1252.4 792.1L1250.4 786.7M1250.4 786.7L1248.5 781.4M1173.4 794.8L1174.1 788.5M1174.1 788.5L1174.9 782.2M1126.7 795.6L1129.5 792.9M1244.8 796.7L1243.4 793.2M1243.4 793.2L1241.9 789.6M1241.9 789.6L1240.5 786.1M1130.1 796.8L1132.8 793.0M1132.8 793.0L1135.6 789.1M1135.6 789.1L1138.3 785.3M1270.3 795.0L1267.6 790.6M1267.6 790.6L1264.9 786.3M1226.6 791.5L1225.8 786.4M1225.8 786.4L1225.0 781.3M1164.4 790.9L1166.0 786.4M1166.0 786.4L1167.7 781.9M1214.4 794.8L1213.5 790.8M1213.5 790.8L1212.5 786.8M1206.1 795.4L1206.6 790.6M1143.5 794.3L1144.9 790.3M1144.9 790.3L1146.3 786.2M1146.3 786.2L1147.8 782.2M1268.8 794.3L1266.6 789.1M1264.3 783.9L1262.1 778.6M1123.5 792.4L1126.0 789.3M1263.6 792.9L1261.3 787.8M1261.3 787.8L1259.1 782.6M1210.9 793.3L1210.9 788.8M1230.7 796.7L1230.2 792.1M1230.2 792.1L1229.6 787.4M1266.4 796.4L1263.8 791.7M1263.8 791.7L1261.1 787.1M1261.1 787.1L1258.4 782.4M1265.3 790.5L1262.7 785.3M1178.0 794.7L1178.5 788.1M1229.0 794.2L1227.7 788.5M1227.7 788.5L1226.3 782.7M1140.2 796.8L1142.7 792.7M1206.9 794.8L1206.3 790.0M1206.3 790.0L1205.8 785.1M1238.7 795.7L1238.0 792.2M1144.8 789.1L1147.0 784.1M1159.8 788.3L1160.8 781.3M1268.4 797.4L1265.8 791.2M1124.2 796.6L1127.3 793.3M1127.3 793.3L1130.4 789.9M1130.4 789.9L1133.4 786.6M1124.7 795.8L1127.8 791.9M1155.6 793.2L1156.9 789.6M1156.9 789.6L1158.2 785.9M1286.3 793.7L1283.1 788.9M1283.1 788.9L1279.9 784.1M1279.9 784.1L1276.7 779.3M1198.2 790.5L1198.6 786.5M1268.9 796.2L1266.0 792.6M1266.0 792.6L1263.2 789.0M1263.2 789.0L1260.3 785.4M1194.4 797.9L1194.4 791.4M1194.4 784.9L1194.3 778.4M1259.4 784.8L1256.9 779.1M1283.5 794.5L1280.9 788.9M1280.9 788.9L1278.4 783.3M1130.3 793.7L1132.4 788.8M1132.4 788.8L1134.6 783.9M1192.1 792.8L1192.7 786.7M1235.6 794.7L1233.9 790.5M1233.9 790.5L1232.2 786.3M1232.2 786.3L1230.6 782.2M1221.0 795.2L1221.0 791.0M1221.0 791.0L1220.9 786.9M1218.7 795.2L1217.5 790.9M1217.5 790.9L1216.3 786.5M1232.6 797.0L1231.2 789.8M1231.2 789.8L1229.7 782.5M1126.5 791.9L1129.8 788.0M1129.8 788.0L1133.0 784.2M1227.8 793.9L1226.6 787.3M1226.6 787.3L1225.3 780.8M1268.5 792.2L1266.6 786.1M1266.6 786.1L1264.7 779.9M1173.9 793.7L1175.4 789.3M1175.4 789.3L1176.9 784.9M1247.5 796.6L1245.5 790.7M1245.5 790.7L1243.4 784.8M1243.4 784.8L1241.3 779.0M1170.3 793.6L1170.9 788.7M1233.1 789.8L1232.6 785.0M1232.6 785.0L1232.1 780.1M1276.3 793.6L1273.5 790.1M1148.2 792.8L1149.8 788.4M1151.4 783.9L1153.0 779.5M1138.9 789.7L1140.8 784.5M1140.8 784.5L1142.7 779.2M1282.8 794.0L1279.4 790.3M1191.7 796.9L1192.5 790.2M1192.5 790.2L1193.2 783.6M1158.8 786.7L1160.7 780.8M1260.1 794.7L1257.7 789.5M1255.4 784.3L1253.0 779.1M1183.6 795.7L1184.5 789.6M1184.5 789.6L1185.4 783.6M1185.4 783.6L1186.2 777.5M1257.2 794.2L1255.1 789.9M1255.1 789.9L1253.1 785.6M1253.1 785.6L1251.0 781.3M1279.9 792.1L1277.2 789.3M1242.9 787.5L1241.1 782.7M1282.4 790.3L1279.2 785.0M1279.2 785.0L1275.9 779.7M1202.7 786.8L1202.3 780.8M1201.2 793.4L1200.8 789.8M1223.1 792.3L1222.6 786.7M1276.0 796.8L1273.3 791.7M1212.6 793.1L1212.4 788.9M1212.4 788.9L1212.2 784.8M1249.6 786.7L1247.4 780.7M1184.5 795.2L1184.6 789.4M1184.7 783.6L1184.7 777.8M1280.3 796.5L1277.9 792.9M1277.9 792.9L1275.4 789.2M1161.0 797.1L1161.8 789.8M1282.7 793.8L1280.1 789.3M1280.1 789.3L1277.6 784.8M1214.8 789.8L1214.7 784.7M1214.7 784.7L1214.5 779.5M1268.0 796.8L1265.5 792.6M1265.5 792.6L1263.1 788.4M1263.1 788.4L1260.6 784.1M1167.1 794.8L1168.4 790.7M1169.7 786.6L1170.9 782.4M1201.6 783.3L1201.8 776.9M1180.4 795.3L1180.8 789.8M1181.1 784.2L1181.5 778.6M1152.0 794.5L1154.3 790.3M1193.4 794.6L1193.2 790.6M1131.7 797.2L1133.7 792.5M1133.7 792.5L1135.8 787.8M1240.1 789.4L1238.2 785.1M1238.2 785.1L1236.2 780.8M1172.1 793.1L1173.3 787.4M1267.1 794.2L1264.5 787.9M1264.5 787.9L1261.8 781.6M1278.6 792.7L1275.8 789.1M1156.7 794.8L1158.5 789.0M1158.5 789.0L1160.3 783.3M1160.3 783.3L1162.1 777.5M1168.8 789.5L1169.9 782.2M1212.9 792.1L1211.9 788.5M1248.8 791.7L1247.4 786.7M1244.0 789.5L1242.9 784.6M1239.3 796.1L1237.7 791.6M1237.7 791.6L1236.1 787.1M1236.1 787.1L1234.5 782.5M1273.8 795.4L1271.7 790.0M1271.7 790.0L1269.6 784.5M1213.3 797.0L1212.3 792.5M1212.3 792.5L1211.3 788.0M1170.1 796.9L1171.3 792.0M1171.3 792.0L1172.4 787.1M1267.5 796.8L1265.0 791.0M1262.6 785.2L1260.1 779.4M1230.0 792.3L1229.0 788.4M1229.0 788.4L1228.0 784.5M1225.2 795.2L1225.0 789.6M1225.0 789.6L1224.7 783.9M1192.8 794.5L1193.1 790.2M1193.1 790.2L1193.4 786.0M1193.4 786.0L1193.6 781.7M1256.6 796.5L1255.2 791.3M1190.1 795.9L1190.1 789.0M1190.1 789.0L1190.1 782.1M1276.1 797.1L1273.8 792.4M1230.1 791.7L1229.8 786.8M1230.6 795.7L1229.4 791.1M1229.4 791.1L1228.3 786.4M1228.3 786.4L1227.1 781.8M1228.4 794.2L1228.0 789.3M1228.0 789.3L1227.5 784.3M1227.5 784.3L1227.1 779.4M1251.2 797.4L1249.2 790.6M1249.2 790.6L1247.2 783.7M1192.9 794.1L1193.6 788.3M1193.6 788.3L1194.3 782.6M1255.1 795.8L1253.7 790.9M1214.3 793.5L1214.1 787.7M1228.4 797.0L1227.1 790.1M1227.1 790.1L1225.7 783.1M1231.9 795.5L1231.2 791.4M1230.5 787.4L1229.8 783.4M1127.8 794.0L1130.1 788.9M1130.1 788.9L1132.5 783.9M1132.5 783.9L1134.9 778.8M1236.5 792.5L1235.6 788.0M1235.6 788.0L1234.6 783.4M1262.1 797.8L1260.4 791.8M1260.4 791.8L1258.7 785.9M1258.7 785.9L1257.0 779.9M1254.9 794.6L1253.4 790.4M1253.4 790.4L1252.0 786.2M1188.8 794.1L1189.5 790.5M1241.8 797.1L1240.4 791.4M1208.5 790.8L1208.3 784.9M1208.3 784.9L1208.0 779.1M1232.8 797.0L1231.7 792.7M1230.5 788.3L1229.4 784.0M1140.8 790.1L1142.6 786.9M1144.1 790.1L1145.8 786.6M1283.9 796.1L1281.3 791.6M1281.3 791.6L1278.7 787.0M1235.4 795.7L1234.8 791.3M1234.8 791.3L1234.2 786.8M1133.7 794.5L1136.1 790.7M1136.1 790.7L1138.5 786.8M1198.2 796.1L1198.3 792.1M1198.3 792.1L1198.4 788.1M1222.3 791.6L1221.1 787.2M1250.5 794.0L1248.2 789.8M1177.6 790.3L1178.6 785.2M1178.6 785.2L1179.6 780.2M1281.5 792.1L1278.9 786.9M1278.9 786.9L1276.3 781.8M1252.1 795.6L1250.7 791.4M1250.7 791.4L1249.3 787.3M1196.2 793.7L1196.2 789.5M1196.2 789.5L1196.2 785.3M1228.8 792.2L1227.7 788.4M1238.0 792.6L1237.4 786.6M1266.9 791.2L1264.4 788.0M1176.5 792.6L1177.2 788.2M1177.2 788.2L1178.0 783.9M1251.8 794.5L1250.6 789.9M1250.6 789.9L1249.5 785.2M1249.5 785.2L1248.3 780.5M1182.3 791.8L1182.4 786.0M1182.4 786.0L1182.6 780.1M1169.3 795.7L1171.0 791.5M1171.0 791.5L1172.6 787.2M1154.5 794.8L1155.5 789.1M1155.5 789.1L1156.6 783.4M1245.4 791.8L1243.6 786.8M1243.6 786.8L1241.8 781.9M1156.3 794.4L1158.0 788.4M1158.0 788.4L1159.7 782.4M1127.4 796.1L1129.9 793.3M1129.9 793.3L1132.5 790.6M1149.0 790.0L1150.2 784.4M1166.4 797.0L1167.9 792.3M1167.9 792.3L1169.5 787.7M1169.5 787.7L1171.1 783.0M1284.0 794.3L1281.4 790.4M1281.4 790.4L1278.9 786.4M1278.9 786.4L1276.4 782.4M1219.5 795.9L1218.9 791.7M1218.9 791.7L1218.4 787.4M1118.2 795.9L1121.4 791.6M1209.3 792.3L1209.3 786.3M1224.3 786.3L1224.0 780.5M1236.8 791.0L1235.3 787.1M1268.2 795.1L1266.4 791.2M1266.4 791.2L1264.6 787.3M1145.1 793.2L1146.6 787.2M1146.6 787.2L1148.2 781.2M1266.8 791.9L1264.4 787.0M1264.4 787.0L1262.1 782.1M1179.0 794.4L1179.3 790.2M1179.3 790.2L1179.6 786.0M1179.6 786.0L1179.9 781.9M1249.5 788.8L1247.8 782.5M1275.8 794.6L1272.9 791.6M1212.7 796.3L1212.7 791.5M1212.7 791.5L1212.6 786.8M1212.6 786.8L1212.6 782.0M1147.7 797.2L1149.1 791.3M1150.4 785.5L1151.7 779.6M1247.5 796.6L1245.5 791.5M1245.5 791.5L1243.4 786.4M1243.4 786.4L1241.4 781.3M1162.6 790.2L1164.2 785.1M1164.2 785.1L1165.9 780.0M1128.3 796.7L1131.1 793.2M1131.1 793.2L1134.0 789.8M1211.8 789.3L1211.1 782.3M1130.4 791.6L1132.9 788.1M1259.0 786.8L1257.4 781.7M1249.6 789.0L1247.3 784.8M1167.8 796.4L1169.0 791.5M1169.0 791.5L1170.1 786.6M1170.1 786.6L1171.3 781.6M1165.8 794.5L1166.4 790.6M1166.4 790.6L1167.1 786.6M1238.2 792.7L1236.9 787.4M1172.1 791.1L1173.1 785.0M1173.1 785.0L1174.2 778.9M1151.3 794.5L1152.5 788.2M1152.5 788.2L1153.7 782.0M1284.2 793.5L1281.6 788.9M1281.6 788.9L1279.0 784.3M1279.0 784.3L1276.4 779.6M1137.2 793.5L1138.9 789.4M1138.9 789.4L1140.6 785.4M1134.2 795.8L1137.0 791.9M1137.0 791.9L1139.9 788.1M1139.9 788.1L1142.7 784.3M1228.9 792.8L1227.4 789.4M1227.4 789.4L1225.9 786.1M1151.7 796.5L1153.6 791.4M1183.2 794.5L1183.8 789.4M1183.8 789.4L1184.4 784.2M1184.4 784.2L1185.0 779.1M1249.2 793.3L1248.1 788.6M1248.1 788.6L1247.1 784.0M1247.1 784.0L1246.0 779.4M1240.1 796.2L1238.3 789.3M1238.3 789.3L1236.6 782.4M1240.2 794.4L1238.5 789.8M1236.8 785.3L1235.2 780.7M1286.9 794.7L1283.6 790.0M1283.6 790.0L1280.3 785.4M1206.4 793.6L1205.7 787.0M1205.7 787.0L1205.0 780.4M1126.6 794.7L1129.8 792.1M1264.4 795.6L1261.8 790.5M1145.8 796.0L1148.3 789.0M1148.3 789.0L1150.7 781.9M1281.2 794.6L1278.8 790.6M1278.8 790.6L1276.5 786.5M1249.9 792.3L1247.7 788.6M1247.7 788.6L1245.4 785.0M1126.0 793.6L1129.1 788.6M1129.1 788.6L1132.2 783.7M1132.2 783.7L1135.3 778.8M1157.8 793.5L1158.8 790.0M1158.8 790.0L1159.8 786.5M1276.2 791.4L1272.9 787.8M1235.8 794.4L1234.4 790.6M1234.4 790.6L1233.0 786.7M1218.4 796.0L1217.3 792.6M1217.3 792.6L1216.3 789.1M1216.3 789.1L1215.2 785.7M1225.1 793.7L1223.7 789.0M1223.7 789.0L1222.3 784.2M1222.3 784.2L1220.9 779.5M1138.8 795.3L1140.8 788.6M1140.8 788.6L1142.7 782.0M1192.9 794.1L1192.6 789.6M1192.6 789.6L1192.4 785.1M1254.8 789.6L1253.1 786.3M1131.4 792.8L1133.7 789.1M1284.6 796.4L1281.7 792.6M1281.7 792.6L1278.8 788.7M1178.6 797.2L1179.9 790.3M1179.9 790.3L1181.1 783.5M1181.1 783.5L1182.4 776.6M1202.2 792.5L1202.6 786.2M1202.6 786.2L1203.1 779.9M1183.8 793.1L1184.1 789.1M1184.1 789.1L1184.5 785.0M1267.5 792.9L1264.9 788.7M1264.9 788.7L1262.2 784.6M1233.0 794.3L1232.2 790.5M1232.2 790.5L1231.4 786.6M1161.6 792.6L1163.5 788.9M1163.5 788.9L1165.3 785.3M1252.9 793.5L1251.1 788.9M1155.9 796.0L1157.8 790.4M1157.8 790.4L1159.6 784.8M1179.1 797.4L1179.7 791.4M1179.7 791.4L1180.4 785.3M1243.8 795.9L1242.2 791.7M1240.7 787.6L1239.1 783.5M1200.9 796.8L1201.3 792.7M1201.3 792.7L1201.6 788.5M1159.4 797.7L1160.3 791.3M1160.3 791.3L1161.3 784.8M1161.3 784.8L1162.2 778.3M1223.4 795.3L1222.5 791.1M1222.5 791.1L1221.6 786.9M1221.6 786.9L1220.6 782.7M1278.0 797.7L1275.0 791.8M1275.0 791.8L1272.0 786.0M1136.1 796.1L1138.4 791.4M1140.7 786.7L1143.0 782.0M1217.7 791.0L1217.3 784.0M1184.8 794.3L1185.5 790.4M1185.5 790.4L1186.2 786.6M1118.5 796.7L1121.0 793.2M1121.0 793.2L1123.4 789.8M1194.8 797.1L1194.4 792.1M1194.4 792.1L1194.1 787.2M1194.1 787.2L1193.7 782.2M1212.4 793.3L1211.5 789.6M1142.9 794.7L1145.1 789.7M1145.1 789.7L1147.3 784.8M1147.3 784.8L1149.5 779.9M1136.9 793.7L1139.7 789.0M1139.7 789.0L1142.5 784.3M1142.5 784.3L1145.3 779.6M1195.9 793.9L1196.3 789.5M1196.3 789.5L1196.7 785.0M1177.7 791.1L1179.0 785.1M1179.0 785.1L1180.3 779.0M1233.0 793.4L1232.1 789.0M1232.1 789.0L1231.2 784.7M1231.2 784.7L1230.3 780.3M1190.4 795.0L1191.1 789.9M1191.1 789.9L1191.8 784.8M1175.9 790.1L1177.4 786.5M1128.6 797.2L1131.3 791.5M1131.3 791.5L1134.0 785.8M1134.0 785.8L1136.7 780.1M1281.2 791.4L1278.1 786.2M1278.1 786.2L1275.1 781.1M1240.6 793.8L1239.6 787.4M1203.0 793.0L1202.6 787.2M1285.0 794.5L1282.5 791.4M1282.5 791.4L1280.0 788.2M1127.6 794.9L1129.6 791.9M1186.0 796.4L1185.9 790.4M1185.9 790.4L1185.9 784.4M1185.9 784.4L1185.8 778.5M1276.1 794.0L1273.4 789.7M1132.0 791.5L1134.3 787.6M1237.0 794.3L1236.3 789.4M1236.3 789.4L1235.6 784.6M1235.6 784.6L1235.0 779.8M1263.1 793.7L1261.6 788.3M1261.6 788.3L1260.0 783.0M1280.1 796.9L1277.5 792.7M1277.5 792.7L1274.9 788.5M1274.9 788.5L1272.4 784.3M1142.4 793.1L1144.1 787.8M1206.1 791.9L1206.5 785.6M1262.2 795.6L1260.5 792.0M1260.5 792.0L1258.9 788.5M1225.7 793.7L1225.5 789.2M1225.5 789.2L1225.2 784.7M1207.5 795.6L1206.8 790.9M1206.8 790.9L1206.1 786.1M1206.1 786.1L1205.4 781.4M1149.4 796.4L1151.8 791.7M1151.8 791.7L1154.2 786.9M1154.2 786.9L1156.6 782.2M1130.5 792.0L1133.2 788.8M1189.8 786.3L1190.7 780.4M1175.7 795.8L1176.3 789.2M1176.3 789.2L1176.8 782.6M1265.6 797.9L1263.6 791.9M1194.9 793.8L1194.8 788.1M1194.8 788.1L1194.7 782.4M1140.8 789.1L1143.0 784.5M1143.0 784.5L1145.1 779.9M1266.6 797.3L1265.0 791.4M1261.2 796.5L1259.5 792.4M1259.5 792.4L1257.8 788.4M1257.8 788.4L1256.1 784.3M1132.0 793.9L1134.3 789.7M1220.4 793.2L1220.1 787.5M1220.1 787.5L1219.8 781.7M1246.8 793.1L1245.5 789.2M1245.5 789.2L1244.2 785.4M1215.4 796.4L1214.6 789.6M1214.6 789.6L1213.7 782.9M1275.2 793.0L1272.8 788.6M1272.8 788.6L1270.4 784.2M1227.7 797.5L1227.4 790.5M1227.4 790.5L1227.1 783.6M1227.1 783.6L1226.8 776.7M1262.5 794.7L1259.8 790.6M1157.6 794.6L1159.3 788.1M1192.4 797.3L1192.3 792.1M1192.2 786.9L1192.1 781.8M1128.8 794.9L1131.1 791.5M1122.1 788.4L1125.3 783.8M1125.3 783.8L1128.4 779.3M1233.4 797.2L1232.1 792.7M1232.1 792.7L1230.7 788.2M1135.2 795.9L1137.0 791.8M1137.0 791.8L1138.8 787.7M1217.3 796.3L1216.5 790.2M1216.5 790.2L1215.8 784.2M1215.8 784.2L1215.0 778.2M1259.0 789.6L1257.3 785.2M1158.6 791.6L1160.5 786.6M1160.5 786.6L1162.4 781.6M1205.4 795.4L1204.7 790.6M1204.7 790.6L1204.0 785.9M1204.0 785.9L1203.3 781.1M1260.7 795.0L1258.2 790.7M1255.8 786.4L1253.4 782.2M1272.1 796.1L1269.7 791.4M1269.7 791.4L1267.4 786.8M1205.7 795.1L1205.9 789.4M1240.0 797.2L1239.3 790.5M1239.3 790.5L1238.6 783.8M1180.3 794.0L1180.6 789.6M1180.6 789.6L1180.9 785.2M1149.5 785.4L1151.6 778.8M1277.9 792.1L1275.2 787.5M1128.3 793.7L1131.4 790.4M1182.7 789.9L1184.1 785.7M1233.9 792.0L1232.7 786.9M1202.2 789.9L1202.6 785.1M1243.6 794.7L1242.4 790.5M1242.4 790.5L1241.2 786.3M1241.2 786.3L1239.9 782.1M1203.6 783.7L1203.8 778.1M1248.1 791.7L1246.9 786.1M1246.9 786.1L1245.6 780.5M1240.2 788.3L1239.1 783.7M1278.1 794.9L1275.0 791.7M1223.1 791.3L1222.1 785.7M1222.1 785.7L1221.2 780.0M1195.9 796.1L1195.9 790.5M1196.0 784.8L1196.1 779.2M1223.4 794.6L1222.1 790.5M1222.1 790.5L1220.7 786.3M1223.7 794.9L1222.4 788.4M1177.3 790.0L1177.9 786.3M1246.5 794.8L1244.8 789.9M1244.8 789.9L1243.1 785.0M1219.9 789.3L1219.3 784.5M1140.6 789.8L1143.1 785.6M1260.9 795.6L1259.1 791.5M1259.1 791.5L1257.2 787.3M1257.2 787.3L1255.4 783.1M1165.0 786.6L1166.0 781.7M1223.8 789.3L1222.9 785.1M1233.8 796.3L1232.7 791.2M1157.4 796.3L1158.9 792.8M1140.0 796.8L1141.7 790.6M1143.4 784.3L1145.1 778.1M1189.7 794.1L1190.7 789.8M1190.7 789.8L1191.8 785.5M1139.5 793.1L1141.5 788.3M1244.7 793.0L1242.9 786.8M1229.7 792.6L1228.7 788.1M1276.3 792.4L1274.3 786.7M1274.3 786.7L1272.4 781.1M1143.0 795.6L1145.6 791.4M1145.6 791.4L1148.2 787.1M1148.2 787.1L1150.8 782.9M1271.5 794.1L1268.5 790.3M1268.5 790.3L1265.6 786.5M1285.3 797.1L1281.9 792.8M1281.9 792.8L1278.5 788.4M1278.5 788.4L1275.2 784.1M1149.7 789.3L1152.0 783.1M1242.8 791.0L1242.0 786.0M1242.0 786.0L1241.1 781.0M1194.7 794.6L1195.5 788.4M1195.5 788.4L1196.2 782.2M1151.5 795.3L1152.7 790.5M1152.7 790.5L1153.9 785.7M1153.9 785.7L1155.1 780.9M1278.3 790.8L1275.5 787.2M1241.8 797.6L1240.2 791.2M1240.2 791.2L1238.6 784.9M1238.6 784.9L1237.0 778.5M1154.9 784.3L1156.6 779.4M1276.4 796.3L1273.6 791.8M1273.6 791.8L1270.8 787.4M1270.8 787.4L1268.1 782.9M1122.2 795.3L1124.4 791.7M1124.4 791.7L1126.6 788.1M1146.8 796.9L1148.6 790.8M1148.6 790.8L1150.5 784.7M1132.7 795.0L1135.0 791.3M1198.4 796.7L1198.6 789.7M1232.2 784.7L1230.8 780.3M1261.7 793.6L1259.5 790.1M1259.5 790.1L1257.2 786.7M1166.4 791.8L1168.0 787.5M1168.0 787.5L1169.7 783.2M1140.9 795.2L1143.2 791.0M1143.2 791.0L1145.6 786.8M1145.6 786.8L1148.0 782.7M1241.5 793.5L1240.3 789.3M1211.0 789.6L1210.3 785.5M1165.3 795.5L1166.3 788.8M1166.3 788.8L1167.2 782.1M1135.4 794.2L1137.9 791.0M1247.4 784.0L1245.9 777.1M1195.7 792.9L1195.8 788.5M1195.8 788.5L1195.9 784.1M1266.5 784.9L1264.5 779.7M1145.3 793.8L1147.2 787.2M1147.2 787.2L1149.2 780.6M1258.2 794.1L1255.8 789.6M1216.6 796.6L1215.6 789.8M1215.6 789.8L1214.6 783.1M1161.8 794.6L1163.8 790.5M1163.8 790.5L1165.8 786.3M1255.1 785.5L1253.6 780.5M1167.3 790.9L1168.8 786.4M1168.8 786.4L1170.3 782.0M1274.7 792.4L1272.5 786.6M1170.5 795.5L1171.0 790.1M1171.5 784.7L1172.0 779.3M1190.9 790.4L1191.7 784.3M1276.5 792.9L1274.2 789.7M1124.4 793.9L1127.3 789.9M1127.3 789.9L1130.2 785.8M1164.3 788.4L1165.9 781.8M1261.0 794.8L1258.6 790.4M1258.6 790.4L1256.3 785.9M1256.3 785.9L1253.9 781.5M1281.3 796.2L1278.9 791.0M1278.9 791.0L1276.4 785.9M1256.8 795.4L1255.5 789.4M1255.5 789.4L1254.1 783.4M1133.7 792.9L1136.6 789.1M1136.6 789.1L1139.4 785.2M1192.5 795.8L1193.2 789.8M1193.2 789.8L1193.9 783.8M1193.9 783.8L1194.6 777.8M1150.3 797.3L1152.4 791.8M1152.4 791.8L1154.6 786.4M1133.5 797.2L1135.7 792.3M1180.6 794.9L1181.5 788.7M1134.3 794.8L1137.2 791.3M1138.1 795.8L1139.8 791.0M1139.8 791.0L1141.5 786.2M1141.5 786.2L1143.2 781.4M1254.4 794.2L1253.1 789.3M1253.1 789.3L1251.8 784.3M1251.8 784.3L1250.4 779.3M1255.7 790.2L1254.3 785.9M1231.5 787.4L1230.9 782.7M1195.7 790.1L1196.0 786.0M1166.4 790.0L1167.8 785.9M1207.4 797.2L1206.8 791.5M1206.8 791.5L1206.1 785.7M1206.1 785.7L1205.5 780.0M1205.8 793.7L1206.3 790.1M1206.3 790.1L1206.8 786.4M1214.7 794.3L1214.5 787.7M1175.1 791.3L1175.7 785.9M1175.7 785.9L1176.3 780.5M1130.9 789.2L1133.0 784.7M1220.2 789.4L1219.0 785.2M1238.7 796.7L1238.0 790.3M1124.0 795.5L1126.0 792.0M1181.4 789.5L1181.7 784.9M1181.7 784.9L1182.0 780.3M1288.9 797.0L1285.8 792.1M1148.1 795.6L1149.8 791.6M1225.2 794.1L1224.9 787.7M1224.9 787.7L1224.6 781.2M1174.4 795.7L1175.1 791.3M1175.1 791.3L1175.9 787.0M1188.8 795.1L1189.5 790.1M1189.5 790.1L1190.3 785.1M1190.3 785.1L1191.0 780.1M1139.4 791.1L1141.7 784.4M1141.7 784.4L1144.0 777.7M1209.5 794.5L1209.1 788.1M1209.1 788.1L1208.7 781.8M1142.4 791.9L1144.8 787.2M1244.2 789.2L1242.9 784.1M1242.9 784.1L1241.6 779.0M1272.3 794.1L1269.2 791.5M1188.9 786.5L1188.7 782.1M1171.2 796.7L1172.7 791.5M1172.7 791.5L1174.2 786.2M1174.2 786.2L1175.6 781.0M1178.4 795.9L1179.5 791.9M1180.7 788.0L1181.9 784.0M1278.3 795.9L1275.1 792.8M1149.6 783.7L1151.7 777.1M1269.9 793.9L1267.5 789.9M1256.3 788.0L1254.2 781.1M1138.3 794.7L1140.7 790.6M1140.7 790.6L1143.2 786.5M1197.8 789.7L1198.5 784.6M1198.5 784.6L1199.3 779.4M1152.7 785.1L1154.3 779.9M1126.8 796.1L1129.6 790.5M1129.6 790.5L1132.3 784.8M1165.9 786.3L1167.7 782.0M1266.2 788.1L1264.0 783.4M1203.9 794.6L1203.4 790.3M1203.4 790.3L1202.9 785.9M1202.9 785.9L1202.4 781.6M1208.3 797.6L1208.5 792.1M1208.5 792.1L1208.8 786.6M1208.8 786.6L1209.0 781.1M1184.8 789.3L1184.9 784.3M1184.9 784.3L1185.1 779.3M1255.0 790.0L1253.4 785.9M1144.8 792.9L1146.2 788.6M1147.7 784.2L1149.2 779.9M1121.8 794.0L1124.2 789.1M1199.1 794.1L1199.7 789.7M1199.7 789.7L1200.3 785.2M1218.8 796.2L1218.4 791.2M1218.4 791.2L1217.9 786.3M1202.1 796.3L1202.4 792.1M1202.4 792.1L1202.6 787.9M1153.1 795.2L1154.5 791.0M1154.5 791.0L1155.9 786.8M1137.6 794.6L1140.0 790.9M1140.0 790.9L1142.5 787.1M1213.7 787.3L1213.3 781.3M1127.0 798.1L1129.7 791.9M1129.7 791.9L1132.4 785.7M1132.4 785.7L1135.1 779.4M1140.0 792.8L1141.7 786.7M1141.7 786.7L1143.4 780.6M1167.1 795.7L1168.4 790.4M1168.4 790.4L1169.7 785.2M1169.7 785.2L1171.0 779.9M1171.0 784.1L1172.2 777.5M1208.8 791.2L1208.2 784.9M1208.2 784.9L1207.6 778.6M1149.7 793.7L1151.0 789.6M1270.3 793.5L1267.9 789.2M1267.9 789.2L1265.5 784.8M1265.5 784.8L1263.1 780.4M1221.3 796.6L1220.7 792.5M1220.2 788.4L1219.7 784.2M1282.2 794.3L1279.0 789.5M1279.0 789.5L1275.8 784.8M1275.8 784.8L1272.6 780.1M1278.3 788.6L1275.1 784.2M1275.1 784.2L1271.9 779.7M1220.9 797.8L1220.1 791.4M1220.1 791.4L1219.2 785.0M1240.0 793.5L1239.3 788.7M1239.3 788.7L1238.6 784.0M1238.6 784.0L1237.9 779.3M1280.1 796.7L1277.9 793.0M1277.9 793.0L1275.8 789.3M1209.1 788.1L1208.3 781.6M1183.2 796.6L1183.7 792.3M1183.7 792.3L1184.3 788.0M1184.3 788.0L1184.8 783.6M1173.7 794.4L1174.1 790.1M1174.1 790.1L1174.6 785.8M1128.3 793.8L1130.4 790.0M1130.4 790.0L1132.5 786.1M1166.5 794.3L1167.8 790.1M1167.8 790.1L1169.0 785.9M1169.0 785.9L1170.3 781.7M1272.5 787.5L1270.3 781.9M1196.0 797.3L1196.7 791.3M1196.7 791.3L1197.4 785.3M1197.4 785.3L1198.1 779.3M1175.4 790.7L1175.9 785.5M1238.9 796.4L1238.0 792.9M1238.0 792.9L1237.2 789.4M1237.2 789.4L1236.3 785.8M1189.1 793.3L1189.6 789.8M1189.6 789.8L1190.1 786.4M1124.7 796.4L1127.5 791.4M1127.5 791.4L1130.2 786.3M1130.2 786.3L1132.9 781.3M1232.6 795.3L1231.8 791.2M1231.8 791.2L1231.1 787.1M1125.5 793.6L1127.6 789.5M1127.6 789.5L1129.7 785.5M1191.9 796.7L1192.1 791.9M1192.1 791.9L1192.4 787.0M1200.1 790.4L1200.7 783.5M1266.3 786.2L1263.8 782.1M1175.5 796.9L1176.4 792.6M1177.2 788.3L1178.1 784.0M1254.9 793.4L1252.7 787.6M1252.7 787.6L1250.5 781.8M1242.1 789.9L1241.4 783.4M1241.4 783.4L1240.6 776.9M1163.7 794.2L1165.5 788.4M1163.1 796.9L1164.7 792.0M1164.7 792.0L1166.2 787.0M1151.9 789.7L1153.7 783.0M1237.4 788.5L1236.0 784.1M1214.5 794.7L1214.6 788.2M1275.2 796.2L1272.7 791.4M1272.7 791.4L1270.1 786.5M1270.1 786.5L1267.6 781.6M1227.4 796.4L1226.1 792.5M1226.1 792.5L1224.8 788.5M1224.8 788.5L1223.5 784.6M1278.7 793.9L1276.2 790.3M1144.0 789.7L1145.8 785.0M1130.1 789.9L1132.3 786.1M1266.2 795.4L1264.2 790.7M1264.2 790.7L1262.2 786.0M1275.8 787.2L1272.7 782.5M1272.7 782.5L1269.5 777.7M1126.5 796.4L1129.2 793.4M1179.1 787.2L1180.6 782.9M1164.4 788.4L1165.3 783.9M1149.8 788.6L1152.1 784.3M1141.6 796.2L1143.9 789.3M1143.9 789.3L1146.2 782.3M1163.4 795.6L1164.9 789.9M1210.5 792.6L1210.5 786.9M1270.3 793.1L1267.6 789.3M1246.5 795.7L1244.8 789.1M1244.8 789.1L1243.2 782.5M1247.3 790.1L1245.8 785.1M1210.4 788.4L1210.2 783.7M1236.5 791.5L1235.3 787.7M1235.3 787.7L1234.1 783.8M1245.4 791.9L1243.5 786.9M1243.5 786.9L1241.5 781.9M1243.4 792.4L1242.4 788.2M1242.4 788.2L1241.3 784.0M1200.3 797.5L1200.1 790.9M1200.0 784.3L1199.8 777.8M1206.8 792.4L1206.9 786.6M1206.9 786.6L1206.9 780.8M1168.0 789.2L1169.0 785.2M1206.4 793.8L1206.8 787.5M1206.8 787.5L1207.1 781.3M1235.5 795.3L1235.0 791.1M1235.0 791.1L1234.5 786.9M1234.5 786.9L1234.0 782.6M1164.0 796.8L1165.2 792.5M1165.2 792.5L1166.4 788.3M1262.2 792.8L1260.8 787.3M1260.8 787.3L1259.4 781.8M1274.9 794.7L1272.8 791.1M1272.8 791.1L1270.8 787.6M1248.0 795.9L1246.9 791.1M1246.9 791.1L1245.7 786.4M1212.4 794.6L1211.4 790.4M1210.5 786.3L1209.6 782.1M1133.8 794.3L1136.2 790.1M1136.2 790.1L1138.6 785.8M1202.0 796.4L1202.0 791.4M1202.0 791.4L1202.0 786.5M1202.0 786.5L1202.0 781.5M1273.3 792.9L1270.3 787.4M1270.3 787.4L1267.3 781.9M1265.9 796.0L1263.7 791.6M1274.8 790.5L1272.5 785.9M1272.5 785.9L1270.3 781.3M1222.5 788.3L1221.6 784.6M1247.1 794.9L1245.1 790.1M1243.1 785.2L1241.1 780.4M1206.5 795.3L1206.0 791.4M1205.5 787.4L1205.0 783.5M1228.4 797.8L1227.2 791.8M1227.2 791.8L1225.9 785.9M1208.0 788.6L1208.1 784.2M1265.5 796.0L1262.9 791.2M1262.9 791.2L1260.2 786.5M1260.2 786.5L1257.5 781.7M1167.8 794.7L1169.4 789.8M1169.4 789.8L1171.0 784.9M1213.0 795.5L1212.7 790.8M1212.7 790.8L1212.5 786.2M1140.2 797.0L1141.7 792.0M1141.7 792.0L1143.2 787.1M1263.7 788.3L1261.2 783.0M1261.2 783.0L1258.6 777.8M1196.5 794.7L1196.1 790.3M1196.1 790.3L1195.7 785.9M1123.8 796.2L1126.2 793.0M1126.2 793.0L1128.6 789.9M1204.4 795.1L1204.7 790.8M1204.9 786.5L1205.1 782.1M1188.9 795.3L1189.1 791.6M1189.2 787.9L1189.4 784.1M1219.5 795.4L1219.0 790.0M1218.5 784.7L1218.0 779.3M1208.4 794.6L1208.3 789.8M1208.3 789.8L1208.2 785.1M1181.9 795.5L1183.0 790.7M1184.1 785.9L1185.2 781.1M1131.5 795.2L1133.6 789.6M1133.6 789.6L1135.7 784.0M1135.7 784.0L1137.9 778.5M1287.7 795.5L1284.7 791.1M1284.7 791.1L1281.6 786.8M1281.6 786.8L1278.6 782.4M1263.5 791.3L1260.9 786.2M1281.4 797.3L1278.3 792.3M1259.2 793.7L1257.7 789.1M1257.7 789.1L1256.2 784.5M1256.2 784.5L1254.6 779.9M1201.9 797.5L1201.9 790.5M1201.9 790.5L1201.8 783.5M1220.4 797.1L1219.3 792.5M1219.3 792.5L1218.3 787.9M1126.9 796.3L1129.2 791.7M1131.5 787.2L1133.8 782.6M1212.6 796.3L1212.1 791.3M1236.8 791.0L1235.2 787.0M1235.2 787.0L1233.5 783.0M1266.7 797.2L1265.1 790.7M1265.1 790.7L1263.6 784.3M1263.6 784.3L1262.0 777.8M1166.4 789.2L1167.7 784.8M1233.9 793.0L1232.7 788.7M1232.7 788.7L1231.5 784.3M1163.8 790.9L1165.3 785.0M1165.3 785.0L1166.9 779.0M1227.6 794.1L1226.7 788.2M1193.8 791.7L1194.6 787.8M1194.6 787.8L1195.4 784.0M1159.1 793.1L1161.1 788.8M1161.1 788.8L1163.1 784.6M1125.3 793.6L1128.3 787.7M1193.4 794.9L1194.2 791.0M1195.1 787.1L1195.9 783.2M1165.3 794.8L1166.5 789.7M1167.6 784.6L1168.8 779.5M1241.6 796.4L1239.9 791.5M1239.9 791.5L1238.1 786.5M1277.3 793.7L1274.5 791.0M1147.2 796.8L1149.4 791.2M1144.4 798.0L1145.9 791.8M1145.9 791.8L1147.5 785.5M1265.8 796.6L1263.1 792.9M1263.1 792.9L1260.4 789.2M1260.4 789.2L1257.7 785.5M1223.0 793.4L1222.8 790.1M1222.8 790.1L1222.6 786.9M1168.0 794.5L1169.2 789.6M1169.2 789.6L1170.3 784.8M1170.3 784.8L1171.4 780.0M1263.0 794.3L1261.4 790.4M1261.4 790.4L1259.8 786.5M1193.1 793.7L1193.3 789.2M1193.4 784.7L1193.6 780.2M1287.0 793.9L1284.2 789.4M1284.2 789.4L1281.5 784.8M1143.8 793.2L1145.3 787.2M1170.9 788.8L1171.5 782.7M1259.2 795.4L1257.0 789.0M1257.0 789.0L1254.8 782.6M1266.1 794.3L1264.3 790.5M1264.3 790.5L1262.5 786.7M1155.9 789.6L1157.1 785.5M1157.1 785.5L1158.3 781.3M1252.5 790.6L1250.9 786.7M1213.6 793.4L1212.8 788.8M1212.8 788.8L1212.0 784.2M1168.9 788.6L1170.1 782.7M1156.4 796.6L1157.5 791.7M1157.5 791.7L1158.6 786.7M1158.6 786.7L1159.7 781.8M1231.7 795.8L1230.8 792.0M1229.9 788.2L1229.0 784.3M1276.2 794.1L1273.5 789.7M1273.5 789.7L1270.7 785.4M1270.7 785.4L1268.0 781.0M1152.2 797.8L1153.7 790.9M1155.1 784.0L1156.6 777.1M1158.6 790.5L1159.9 786.3M1126.4 796.1L1129.5 792.9M1129.5 792.9L1132.6 789.7M1282.9 795.2L1280.3 791.8M1280.3 791.8L1277.7 788.5M1208.6 793.5L1208.9 788.8M1208.9 788.8L1209.2 784.1M1201.7 795.1L1201.5 790.5M1250.1 796.1L1248.6 790.7M1248.6 790.7L1247.2 785.4M1212.1 794.1L1211.5 789.6M1181.2 795.4L1182.0 791.8M1182.8 788.1L1183.7 784.5M1236.8 796.2L1236.2 790.5M1236.2 790.5L1235.6 784.8M1235.6 784.8L1235.0 779.1M1208.1 797.9L1208.0 791.7M1144.0 794.5L1145.8 790.7M1141.3 794.6L1143.4 788.5M1143.4 788.5L1145.4 782.4M1136.7 794.9L1138.6 789.8M1140.5 784.8L1142.5 779.8M1210.7 795.2L1210.4 788.8M1210.4 788.8L1210.0 782.3M1238.4 797.5L1237.4 792.0M1252.7 793.9L1250.7 789.0M1250.7 789.0L1248.8 784.0M1248.8 784.0L1246.8 779.1M1223.6 793.3L1222.4 789.0M1222.4 789.0L1221.2 784.7M1265.1 788.7L1262.8 782.9M1200.5 788.1L1199.9 782.0M1232.2 795.8L1231.5 791.6M1231.5 791.6L1230.9 787.4M1230.9 787.4L1230.3 783.2M1191.4 795.5L1192.0 790.6M1192.0 790.6L1192.7 785.7M1192.7 785.7L1193.3 780.8M1200.1 790.2L1200.0 783.5M1149.3 792.6L1151.0 787.0M1151.0 787.0L1152.7 781.3M1242.3 796.1L1240.4 789.3M1240.4 789.3L1238.5 782.5M1147.3 791.6L1148.6 786.5M1250.8 793.6L1249.3 787.1M1249.3 787.1L1247.9 780.6M1167.6 795.2L1168.7 791.0M1168.7 791.0L1169.8 786.9M1193.8 787.9L1194.5 781.7M1146.3 795.3L1148.4 790.5M1148.4 790.5L1150.5 785.7M1192.5 793.7L1192.4 789.2M1192.4 789.2L1192.4 784.8M1192.4 784.8L1192.4 780.3M1209.6 797.9L1209.6 791.8M1209.6 791.8L1209.5 785.6M1209.5 785.6L1209.4 779.4M1269.4 793.7L1266.9 789.5M1266.9 789.5L1264.4 785.3M1264.4 785.3L1261.9 781.1M1206.3 796.8L1206.3 792.0M1206.3 787.3L1206.3 782.6M1205.0 794.3L1204.5 788.5M1171.2 788.5L1172.5 781.6M1163.9 796.8L1164.7 792.6M1164.7 792.6L1165.6 788.5M1141.3 789.9L1142.9 785.9M1228.4 795.4L1227.9 789.2M1227.9 789.2L1227.3 783.0M1268.7 793.9L1266.0 789.5M1266.0 789.5L1263.3 785.2M1263.3 785.2L1260.6 780.8M1278.3 796.3L1275.1 792.5M1155.9 795.3L1157.5 790.0M1157.5 790.0L1159.2 784.8M1179.1 795.3L1179.4 790.1M1179.4 790.1L1179.8 784.9M1203.3 796.0L1202.8 791.4M1202.8 791.4L1202.4 786.8M1191.0 796.7L1190.8 792.5M1190.8 792.5L1190.6 788.2M1190.6 788.2L1190.5 784.0M1128.6 793.2L1131.7 789.7M1131.7 789.7L1134.8 786.2M1217.5 792.2L1217.0 786.3M1267.5 796.1L1265.5 791.1M1265.5 791.1L1263.6 786.0M1263.6 786.0L1261.7 781.0M1203.8 795.7L1204.3 791.1M1204.3 791.1L1204.9 786.5M1275.8 795.8L1273.5 790.2M1273.5 790.2L1271.3 784.6M1253.4 796.3L1251.8 791.4M1251.8 791.4L1250.1 786.5M1225.2 795.8L1225.0 790.1M1225.0 790.1L1224.9 784.4M1224.9 784.4L1224.7 778.7M1183.2 790.1L1184.4 786.7M1269.1 791.8L1267.3 785.3M1267.3 785.3L1265.4 778.7M1165.7 796.0L1167.1 791.2M1167.1 791.2L1168.6 786.5M1243.3 784.5L1241.5 779.1M1270.5 794.9L1268.2 790.8M1268.2 790.8L1265.9 786.8M1140.0 788.8L1141.7 783.1M1141.7 783.1L1143.4 777.5M1215.5 798.2L1215.0 791.3M1232.3 791.4L1231.0 787.2M1223.8 796.1L1222.7 791.0M1222.7 791.0L1221.5 785.9M1156.1 793.2L1157.4 786.8M1255.5 792.2L1254.3 786.4M1130.5 794.8L1133.6 791.5M1123.9 791.3L1126.6 786.9M1266.7 791.9L1264.5 785.4M1269.4 796.1L1266.9 792.3M1266.9 792.3L1264.3 788.5M1159.7 786.2L1161.1 780.0M1268.1 790.4L1266.2 784.0M1266.2 784.0L1264.3 777.7M1267.1 795.3L1265.0 791.4M1265.0 791.4L1262.8 787.6M1132.5 796.1L1134.4 790.4M1134.4 790.4L1136.3 784.6M1136.3 784.6L1138.2 778.8M1144.4 787.0L1145.9 782.5M1264.6 786.6L1261.7 782.5M1141.7 787.0L1143.7 783.0M1264.2 795.3L1262.0 791.4M1262.0 791.4L1259.8 787.5M1241.8 790.9L1240.7 785.5M1275.3 796.2L1272.7 792.8M1270.1 789.4L1267.5 786.0M1153.4 796.9L1155.4 792.4M1155.4 792.4L1157.4 787.8M1157.4 787.8L1159.5 783.2M1129.7 794.2L1131.8 789.5M1202.6 791.9L1202.2 787.1M1180.7 793.1L1181.4 788.9M1188.1 794.0L1189.0 788.1M1189.0 788.1L1190.0 782.1M1262.0 792.6L1259.5 787.3M1259.5 787.3L1256.9 782.0M1177.6 796.0L1178.7 791.3M1178.7 791.3L1179.8 786.6M1179.8 786.6L1180.8 781.9M1249.4 795.7L1247.6 790.6M1245.7 785.5L1243.9 780.4M1278.1 790.4L1275.5 786.2M1164.5 795.5L1165.5 788.5M1165.5 788.5L1166.5 781.6M1173.3 796.7L1174.5 791.0M1174.5 791.0L1175.8 785.4M1175.8 785.4L1177.0 779.7M1150.9 796.6L1152.3 791.7M1152.3 791.7L1153.8 786.8M1211.5 791.5L1211.3 785.8M1177.1 790.9L1177.8 784.5M1177.8 784.5L1178.4 778.0M1119.3 796.0L1122.0 791.2M1124.8 786.5L1127.5 781.8M1136.3 792.8L1138.1 786.6M1142.8 792.8L1144.5 786.9M1144.5 786.9L1146.3 781.0M1136.9 797.0L1139.2 791.7M1139.2 791.7L1141.5 786.4M1141.5 786.4L1143.8 781.1M1132.7 792.8L1135.5 788.2M1135.5 788.2L1138.4 783.6M1238.0 796.9L1236.2 790.4M1236.2 790.4L1234.4 784.0M1234.4 784.0L1232.7 777.5M1134.7 792.0L1137.8 789.2M1122.7 793.7L1124.9 790.8M1152.3 788.6L1154.0 781.6M1261.8 795.8L1260.1 789.1M1165.0 798.2L1166.2 791.6M1167.4 785.1L1168.6 778.5M1162.7 796.0L1164.4 790.7M1164.4 790.7L1166.1 785.4M1143.8 796.9L1146.1 790.4M1146.1 790.4L1148.4 783.8M1211.8 794.3L1211.6 790.4M1211.6 790.4L1211.5 786.5M1156.3 793.4L1158.6 789.2M1158.6 789.2L1160.8 785.0M1131.1 789.2L1133.4 785.0M1181.7 793.5L1181.9 789.0M1181.9 789.0L1182.1 784.5M1182.1 784.5L1182.4 780.1M1157.0 796.3L1158.7 792.9M1158.7 792.9L1160.4 789.5M1160.4 789.5L1162.1 786.1M1255.0 785.3L1252.5 780.0M1237.0 794.5L1235.9 788.6M1235.9 788.6L1234.9 782.8M1231.8 793.8L1230.2 789.0M1121.7 792.8L1124.3 788.4M1124.3 788.4L1127.0 784.0M1229.5 796.5L1228.2 792.0M1228.2 792.0L1226.9 787.5M1226.9 787.5L1225.6 783.0M1238.8 793.9L1238.2 788.2M1238.2 788.2L1237.5 782.4M1186.8 790.7L1187.2 786.8M1187.2 786.8L1187.6 782.8M1278.1 796.5L1275.0 793.3M1271.9 790.0L1268.7 786.8M1260.9 786.9L1258.3 780.9M1234.2 797.4L1232.6 792.0M1232.6 792.0L1231.0 786.6M1231.0 786.6L1229.3 781.3M1124.9 795.6L1127.8 793.5M1278.9 793.8L1276.0 788.0M1211.8 794.7L1212.0 789.7M1212.0 789.7L1212.3 784.8M1212.3 784.8L1212.5 779.8M1259.6 795.4L1258.1 789.7M1256.6 784.0L1255.2 778.3M1169.4 796.4L1171.0 789.4M1171.0 789.4L1172.6 782.3M1135.6 796.0L1137.8 792.7M1137.8 792.7L1140.1 789.3M1143.4 792.7L1145.8 786.4M1145.8 786.4L1148.2 780.1" stroke="#f2f200" stroke-width="0.6" fill="none" opacity="0.9"/><path d="M1253.7 784.7L1252.3 778.6M1252.3 778.6L1250.9 772.5M1160.1 785.4L1161.9 780.2M1161.9 780.2L1163.7 774.9M1260.4 787.8L1258.5 781.2M1181.4 784.1L1181.9 779.5M1260.4 784.7L1257.9 779.4M1143.9 787.6L1145.3 783.1M1136.1 787.0L1138.0 781.4M1138.0 781.4L1139.9 775.8M1256.1 786.1L1253.9 780.8M1253.9 780.8L1251.7 775.5M1228.4 788.8L1227.8 783.1M1139.7 785.3L1142.0 780.9M1223.0 786.2L1222.6 781.4M1222.3 786.0L1221.8 781.0M1158.3 787.6L1159.4 783.1M1279.1 782.8L1276.2 777.5M1250.7 787.6L1248.7 782.8M1154.0 787.5L1155.8 781.0M1155.8 781.0L1157.6 774.4M1216.7 788.8L1216.7 782.3M1216.7 782.3L1216.7 775.8M1229.7 782.5L1228.3 775.3M1212.2 785.9L1212.0 780.9M1206.7 785.1L1206.4 779.3M1197.0 785.2L1197.1 780.7M1172.5 786.9L1173.5 782.9M1186.7 786.5L1187.7 781.4M1136.8 784.8L1138.6 780.6M1180.9 786.0L1181.1 780.4M1181.1 780.4L1181.2 774.9M1146.9 784.1L1148.8 777.8M1249.7 785.1L1247.9 780.9M1159.4 786.2L1161.1 781.0M1170.3 787.0L1171.0 782.7M1236.4 787.6L1234.9 783.2M1144.7 785.8L1146.5 781.4M1159.2 785.6L1160.8 781.3M1187.6 787.2L1187.5 783.3M1173.1 784.1L1173.9 777.8M1231.7 786.2L1230.9 781.3M1272.9 785.4L1270.2 780.7M1216.7 787.0L1216.1 782.0M1232.8 787.4L1232.1 781.9M1199.2 786.3L1199.7 781.8M1240.2 781.4L1238.6 776.0M1179.9 784.5L1180.3 777.7M1180.3 777.7L1180.7 771.0M1137.4 787.7L1140.3 783.7M1177.5 784.2L1177.8 778.3M1186.0 785.5L1187.2 781.4M1184.9 786.8L1186.0 782.6M1157.6 786.9L1159.5 783.0M1126.5 784.5L1129.9 780.1M1149.9 784.8L1152.3 779.6M1203.1 787.1L1202.8 782.7M1214.0 783.2L1212.9 777.5M1172.5 787.4L1173.8 781.0M1178.2 785.9L1178.9 779.9M1178.9 779.9L1179.7 774.0M1210.2 788.9L1209.3 782.6M1190.0 784.9L1190.0 780.4M1243.8 789.1L1242.9 782.3M1242.9 782.3L1242.0 775.5M1153.5 785.9L1155.1 781.5M1259.0 783.2L1256.6 776.8M1183.1 777.3L1184.1 770.9M1221.9 786.4L1221.0 781.0M1221.0 781.0L1220.2 775.5M1137.6 786.8L1140.2 782.6M1242.1 783.0L1240.8 776.1M1177.1 781.7L1177.8 775.5M1208.0 782.2L1208.2 775.1M1128.2 785.1L1130.4 779.8M1130.4 779.8L1132.6 774.5M1244.5 787.0L1243.4 781.6M1249.4 787.9L1248.0 783.5M1226.4 787.8L1225.9 783.7M1244.5 778.4L1243.1 772.6M1153.0 788.6L1154.7 782.6M1154.7 782.6L1156.5 776.7M1200.9 786.8L1201.2 782.1M1261.1 786.8L1258.6 782.9M1160.5 784.6L1162.2 779.2M1245.3 777.3L1243.1 770.7M1203.7 777.5L1203.8 770.7M1237.1 785.3L1235.3 779.2M1212.6 788.6L1212.3 782.8M1134.2 787.1L1136.4 782.7M1252.0 783.5L1250.4 777.5M1230.2 786.4L1228.8 781.3M1161.0 785.9L1162.6 781.3M1234.8 784.9L1233.1 778.6M1171.0 777.7L1171.6 771.1M1191.2 784.2L1191.2 778.3M1216.6 786.1L1216.0 781.4M1202.9 784.6L1202.8 778.3M1182.7 784.3L1183.6 779.6M1174.9 782.2L1175.7 775.9M1263.4 787.2L1261.0 781.1M1264.9 786.3L1262.2 782.0M1212.5 786.8L1211.6 782.8M1207.1 785.9L1207.6 781.1M1210.8 784.4L1210.7 780.0M1229.6 787.4L1229.1 782.8M1262.7 785.3L1260.0 780.1M1178.5 788.1L1179.0 781.5M1205.8 785.1L1205.2 780.3M1147.0 784.1L1149.1 779.2M1263.1 785.1L1260.5 778.9M1198.6 786.5L1199.0 782.5M1185.1 789.0L1185.9 782.6M1185.9 782.6L1186.7 776.1M1278.4 783.3L1275.9 777.7M1134.6 783.9L1136.8 779.0M1263.8 787.1L1261.5 781.4M1261.5 781.4L1259.2 775.8M1192.7 786.7L1193.3 780.6M1176.9 784.2L1178.2 778.0M1178.2 778.0L1179.5 771.8M1220.9 786.9L1220.9 782.7M1216.3 786.5L1215.2 782.1M1229.7 782.5L1228.3 775.2M1225.3 780.8L1224.1 774.2M1264.7 779.9L1262.8 773.7M1171.4 783.9L1172.0 779.0M1193.2 783.6L1194.0 776.9M1186.2 777.5L1187.1 771.5M1222.6 786.7L1222.2 781.1M1222.2 781.1L1221.8 775.5M1270.5 786.6L1267.8 781.5M1247.4 780.7L1245.3 774.6M1162.7 782.6L1163.6 775.4M1193.0 786.7L1192.7 782.8M1135.8 787.8L1137.8 783.1M1173.3 787.4L1174.6 781.7M1261.8 781.6L1259.1 775.3M1247.4 786.7L1245.9 781.6M1242.9 784.6L1241.9 779.6M1269.6 784.5L1267.5 779.0M1211.3 788.0L1210.3 783.5M1172.4 787.1L1173.5 782.3M1224.7 783.9L1224.5 778.3M1253.8 786.1L1252.4 781.0M1271.6 787.7L1269.3 783.0M1229.8 786.8L1229.5 781.8M1247.2 783.7L1245.3 776.9M1252.2 786.0L1250.8 781.2M1214.1 787.7L1214.0 781.9M1239.0 785.8L1237.6 780.1M1278.7 787.0L1276.0 782.5M1234.2 786.8L1233.5 782.4M1221.1 787.2L1219.9 782.9M1273.2 787.0L1271.1 782.3M1276.3 781.8L1273.8 776.7M1249.3 787.3L1247.9 783.1M1196.2 785.3L1196.3 781.0M1167.7 786.1L1169.5 781.5M1237.4 786.6L1236.7 780.5M1172.6 787.2L1174.3 783.0M1156.6 783.4L1157.6 777.8M1241.8 781.9L1240.0 776.9M1159.7 782.4L1161.4 776.5M1150.2 784.4L1151.4 778.9M1218.4 787.4L1217.9 783.1M1124.5 787.2L1127.7 782.9M1209.3 786.3L1209.2 780.2M1224.0 780.5L1223.7 774.7M1235.3 787.1L1233.9 783.2M1247.8 782.5L1246.0 776.1M1229.4 786.3L1229.0 781.7M1211.1 782.3L1210.5 775.3M1236.9 787.4L1235.6 782.1M1235.6 782.1L1234.3 776.9M1174.2 778.9L1175.3 772.8M1155.5 786.4L1157.4 781.3M1157.4 781.3L1159.3 776.3M1280.3 785.4L1277.0 780.7M1259.2 785.5L1256.7 780.4M1150.7 781.9L1153.1 774.8M1143.4 785.8L1145.0 780.1M1145.0 780.1L1146.5 774.5M1203.1 779.9L1203.6 773.6M1240.2 787.5L1239.1 780.9M1239.1 780.9L1238.0 774.4M1249.3 784.3L1247.5 779.7M1159.6 784.8L1161.4 779.2M1161.4 779.2L1163.2 773.6M1180.4 785.3L1181.0 779.3M1181.0 779.3L1181.7 773.2M1162.2 778.3L1163.1 771.8M1272.0 786.0L1269.0 780.1M1217.3 784.0L1216.8 777.0M1279.6 787.9L1276.9 782.5M1156.0 786.9L1157.2 782.0M1191.8 784.8L1192.5 779.7M1191.1 789.1L1190.9 782.1M1239.6 787.4L1238.7 781.1M1238.7 781.1L1237.8 774.8M1202.6 787.2L1202.3 781.3M1185.8 778.5L1185.8 772.5M1260.0 783.0L1258.5 777.6M1144.1 787.8L1145.9 782.5M1208.1 788.9L1208.2 782.4M1206.5 785.6L1206.9 779.2M1224.2 784.4L1224.0 779.9M1190.7 780.4L1191.7 774.4M1261.6 785.8L1259.6 779.8M1194.7 782.4L1194.7 776.7M1263.3 785.6L1261.7 779.7M1219.8 781.7L1219.4 776.0M1213.7 782.9L1212.8 776.2M1270.4 784.2L1268.0 779.8M1159.3 788.1L1161.0 781.5M1161.0 781.5L1162.6 775.0M1192.1 781.8L1192.0 776.6M1188.5 786.4L1188.8 782.1M1230.7 788.2L1229.4 783.6M1138.8 787.7L1140.5 783.6M1215.0 778.2L1214.2 772.2M1257.3 785.2L1255.6 780.9M1162.4 781.6L1164.3 776.6M1267.4 786.8L1265.0 782.2M1206.0 783.7L1206.1 778.0M1238.6 783.8L1237.9 777.1M1180.9 785.2L1181.3 780.8M1275.2 787.5L1272.6 782.8M1232.7 786.9L1231.5 781.7M1202.6 785.1L1203.1 780.4M1203.8 778.1L1203.9 772.4M1245.6 780.5L1244.4 775.0M1253.5 788.8L1251.2 782.1M1239.1 783.7L1238.0 779.1M1196.1 779.2L1196.2 773.5M1222.4 788.4L1221.1 782.0M1243.1 785.0L1241.5 780.1M1219.3 784.5L1218.7 779.6M1143.1 785.6L1145.6 781.4M1166.0 781.7L1166.9 776.7M1231.6 786.1L1230.6 781.0M1185.2 788.0L1185.5 781.8M1185.5 781.8L1185.8 775.7M1145.1 778.1L1146.8 771.8M1141.5 788.3L1143.4 783.6M1143.4 783.6L1145.3 778.8M1242.9 786.8L1241.0 780.6M1228.7 788.1L1227.6 783.7M1206.1 784.5L1205.6 778.9M1205.6 778.9L1205.1 773.2M1150.5 784.7L1152.4 778.6M1152.4 778.6L1154.2 772.5M1195.9 784.1L1196.0 779.7M1272.5 786.6L1270.3 780.7M1270.3 780.7L1268.1 774.9M1191.7 784.3L1192.6 778.3M1165.9 781.8L1167.6 775.2M1276.4 785.9L1274.0 780.7M1254.1 783.4L1252.8 777.4M1194.6 777.8L1195.3 771.9M1154.6 786.4L1156.7 781.0M1137.9 787.3L1140.1 782.4M1181.5 788.7L1182.3 782.5M1181.2 787.5L1182.6 783.6M1205.5 780.0L1204.8 774.3M1214.5 787.7L1214.3 781.1M1237.2 783.9L1236.5 777.5M1236.5 777.5L1235.7 771.1M1282.7 787.2L1279.6 782.3M1151.5 787.6L1153.2 783.6M1224.6 781.2L1224.3 774.8M1175.9 787.0L1176.6 782.6M1144.8 787.2L1147.2 782.4M1132.3 784.8L1135.1 779.2M1192.3 786.5L1192.8 780.3M1253.4 785.9L1251.7 781.7M1126.7 784.2L1129.1 779.3M1217.9 786.3L1217.5 781.4M1202.6 787.9L1202.9 783.7M1213.3 781.3L1212.9 775.2M1172.2 777.5L1173.3 770.8M1207.6 778.6L1206.9 772.3M1219.2 785.0L1218.4 778.5M1208.3 781.6L1207.5 775.2M1129.0 784.4L1131.7 779.6M1270.3 781.9L1268.1 776.3M1198.1 779.3L1198.8 773.2M1175.9 785.5L1176.4 780.2M1231.1 787.1L1230.3 783.0M1209.6 788.3L1209.8 781.7M1192.4 787.0L1192.6 782.2M1200.7 783.5L1201.2 776.6M1165.5 788.4L1167.4 782.6M1166.2 787.0L1167.8 782.1M1214.6 788.2L1214.7 781.7M1145.8 785.0L1147.7 780.3M1262.2 786.0L1260.1 781.3M1165.3 783.9L1166.1 779.4M1152.1 784.3L1154.3 779.9M1166.3 784.2L1167.8 778.5M1210.5 786.9L1210.5 781.2M1135.6 784.0L1138.7 779.4M1206.3 788.1L1206.6 781.4M1206.6 781.4L1206.9 774.8M1243.2 782.5L1241.6 775.8M1245.8 785.1L1244.3 780.1M1210.2 783.7L1210.1 779.0M1207.1 781.3L1207.5 775.0M1259.4 781.8L1257.9 776.3M1245.7 786.4L1244.5 781.6M1138.6 785.8L1141.0 781.5M1202.0 781.5L1202.1 776.5M1261.5 787.1L1259.3 782.7M1203.3 788.5L1203.5 781.4M1225.9 785.9L1224.7 780.0M1177.0 788.6L1178.5 781.8M1178.5 781.8L1180.0 774.9M1208.1 784.2L1208.1 779.9M1171.0 784.9L1172.6 780.0M1212.5 786.2L1212.3 781.5M1143.2 787.1L1144.7 782.1M1195.7 785.9L1195.3 781.4M1208.2 785.1L1208.1 780.3M1260.9 786.2L1258.3 781.1M1275.3 787.3L1272.3 782.2M1218.3 787.9L1217.2 783.3M1211.5 786.3L1210.9 781.3M1167.7 784.8L1169.0 780.4M1226.7 788.2L1225.7 782.4M1225.7 782.4L1224.8 776.6M1128.3 787.7L1131.2 781.8M1238.1 786.5L1236.4 781.5M1151.6 785.7L1153.8 780.1M1153.8 780.1L1156.0 774.6M1147.5 785.5L1149.1 779.2M1149.1 779.2L1150.7 772.9M1238.0 787.2L1236.3 781.3M1281.5 784.8L1278.7 780.3M1145.3 787.2L1146.8 781.3M1171.5 782.7L1172.0 776.7M1250.9 786.7L1249.3 782.8M1203.1 787.7L1203.4 781.2M1209.2 784.1L1209.4 779.4M1201.2 785.9L1200.9 781.4M1247.2 785.4L1245.7 780.0M1208.0 785.5L1207.9 779.2M1236.3 786.6L1235.3 781.2M1262.8 782.9L1260.4 777.1M1253.3 785.6L1252.1 780.8M1200.0 783.5L1199.9 776.7M1148.6 786.5L1149.8 781.3M1149.8 781.3L1151.1 776.2M1169.8 786.9L1170.9 782.7M1194.5 781.7L1195.3 775.6M1150.5 785.7L1152.6 780.9M1209.4 779.4L1209.4 773.3M1204.5 788.5L1204.0 782.7M1204.0 782.7L1203.5 776.9M1159.2 784.8L1160.9 779.5M1179.8 784.9L1180.2 779.7M1202.4 786.8L1202.0 782.2M1266.0 785.5L1263.6 779.5M1217.0 786.3L1216.4 780.3M1204.9 786.5L1205.4 781.8M1271.3 784.6L1269.0 779.0M1269.0 779.0L1266.8 773.4M1250.1 786.5L1248.5 781.6M1248.5 781.6L1246.9 776.7M1265.4 778.7L1263.6 772.2M1168.6 786.5L1170.0 781.7M1265.9 786.8L1263.6 782.8M1214.4 784.4L1213.9 777.5M1231.0 787.2L1229.8 782.9M1180.5 786.2L1180.7 781.8M1221.5 785.9L1220.4 780.7M1157.4 786.8L1158.7 780.4M1254.3 786.4L1253.1 780.6M1253.1 780.6L1251.8 774.8M1126.6 786.9L1129.3 782.5M1264.5 785.4L1262.2 779.0M1262.2 779.0L1260.0 772.5M1262.8 787.6L1260.6 783.7M1211.9 787.1L1211.0 782.6M1259.8 787.5L1257.6 783.6M1240.7 785.5L1239.6 780.1M1239.6 780.1L1238.4 774.7M1133.9 784.8L1135.9 780.1M1202.2 787.1L1201.9 782.3M1153.8 786.8L1155.2 781.9M1235.9 788.5L1234.7 782.6M1234.7 782.6L1233.5 776.7M1211.3 785.8L1211.1 780.1M1211.1 780.1L1210.8 774.4M1138.1 786.6L1139.9 780.4M1139.9 780.4L1141.7 774.2M1267.7 786.8L1265.9 781.0M1154.0 781.6L1155.8 774.6M1260.1 789.1L1258.5 782.4M1166.1 785.4L1167.8 780.1M1167.8 780.1L1169.5 774.8M1148.4 783.8L1150.6 777.3M1150.6 777.3L1152.9 770.7M1133.4 785.0L1135.7 780.7M1129.4 787.0L1132.3 781.6M1233.8 776.9L1232.8 771.1M1228.6 784.1L1227.0 779.3M1237.5 782.4L1236.9 776.6M1276.0 788.0L1273.1 782.2M1172.6 782.3L1174.2 775.2" stroke="#b4e600" stroke-width="0.6" fill="none" opacity="0.9"/><path d="M1191.2 780.8L1192.1 775.3M1218.8 780.9L1217.7 774.0M1258.5 781.2L1256.5 774.5M1230.4 781.1L1229.0 775.7M1228.5 779.3L1227.3 773.8M1204.4 781.1L1204.1 774.3M1227.1 777.4L1226.4 771.7M1179.6 782.6L1180.1 775.4M1157.6 774.4L1159.4 767.9M1161.4 780.8L1162.6 774.8M1216.7 775.8L1216.7 769.3M1228.3 775.3L1227.0 768.2M1206.4 779.3L1206.1 773.4M1222.8 782.5L1221.9 775.2M1148.8 777.8L1150.6 771.4M1231.9 777.6L1230.7 771.7M1217.4 783.2L1216.8 776.3M1260.8 783.2L1258.3 776.1M1258.3 776.1L1255.7 768.9M1173.9 777.8L1174.8 771.5M1232.1 781.9L1231.4 776.4M1180.8 779.7L1181.3 773.2M1177.8 778.3L1178.2 772.4M1255.6 777.6L1254.1 771.3M1164.8 780.8L1166.2 774.4M1174.1 782.6L1175.3 776.4M1175.3 776.4L1176.5 770.2M1205.1 778.8L1204.8 773.2M1269.5 780.2L1266.5 774.5M1234.1 782.6L1233.5 775.7M1233.5 775.7L1233.0 768.8M1224.0 781.4L1223.0 774.8M1212.9 777.5L1211.9 771.8M1223.6 783.0L1222.6 775.9M1173.8 781.0L1175.0 774.6M1175.0 774.6L1176.3 768.1M1186.7 781.5L1187.3 774.6M1187.3 774.6L1188.0 767.7M1209.3 782.6L1208.5 776.3M1208.5 776.3L1207.6 770.0M1242.0 775.5L1241.1 768.7M1262.6 777.6L1260.3 771.8M1177.8 775.5L1178.4 769.2M1208.2 775.1L1208.4 768.1M1243.4 781.6L1242.3 776.2M1157.7 781.2L1159.0 775.9M1193.9 780.5L1194.8 774.6M1143.9 780.4L1146.6 774.4M1139.1 778.5L1141.8 772.6M1243.7 781.6L1242.4 775.2M1242.4 775.2L1241.2 768.9M1235.3 779.2L1233.5 773.1M1212.3 782.8L1211.9 777.0M1211.9 777.0L1211.5 771.1M1250.4 777.5L1248.9 771.5M1233.1 778.6L1231.4 772.3M1181.5 783.0L1182.2 776.3M1132.5 780.6L1135.6 775.5M1191.2 778.3L1191.1 772.4M1202.8 778.3L1202.7 772.1M1155.2 776.8L1156.9 770.3M1248.5 781.4L1246.6 776.0M1175.7 775.9L1176.5 769.5M1261.0 781.1L1258.6 775.0M1259.1 782.6L1256.8 777.4M1179.0 781.5L1179.6 774.9M1226.3 782.7L1225.0 777.0M1160.8 781.3L1161.8 774.2M1260.5 778.9L1257.9 772.7M1194.3 778.4L1194.3 771.9M1256.9 779.1L1254.3 773.5M1193.3 780.6L1194.0 774.4M1228.3 775.2L1226.9 768.0M1224.1 774.2L1222.8 767.6M1241.3 779.0L1239.3 773.1M1160.7 780.8L1162.5 774.9M1202.3 780.8L1201.9 774.8M1267.8 781.5L1265.1 776.4M1184.7 777.8L1184.8 771.9M1181.5 778.6L1181.8 773.1M1174.6 781.7L1175.9 776.0M1259.1 775.3L1256.5 769.0M1162.1 777.5L1163.8 771.7M1169.9 782.2L1170.9 774.9M1170.9 774.9L1172.0 767.6M1260.1 779.4L1257.7 773.6M1224.5 778.3L1224.2 772.6M1190.1 782.1L1190.2 775.2M1190.2 775.2L1190.2 768.3M1229.5 781.8L1229.2 776.8M1245.3 776.9L1243.3 770.1M1194.3 782.6L1195.1 776.9M1214.0 781.9L1213.8 776.1M1225.7 783.1L1224.4 776.2M1257.0 779.9L1255.3 773.9M1237.6 780.1L1236.2 774.4M1208.0 779.1L1207.7 773.2M1236.7 780.5L1236.1 774.5M1182.6 780.1L1182.7 774.2M1157.6 777.8L1158.6 772.1M1151.4 778.9L1152.7 773.3M1209.2 780.2L1209.2 774.2M1148.2 781.2L1149.7 775.2M1246.0 776.1L1244.2 769.7M1151.7 779.6L1153.0 773.7M1210.5 775.3L1209.8 768.3M1171.3 781.6L1172.5 776.7M1153.7 782.0L1155.0 775.7M1155.0 775.7L1156.2 769.4M1236.6 782.4L1234.9 775.4M1205.0 780.4L1204.3 773.9M1204.3 773.9L1203.5 767.3M1189.9 782.9L1190.8 776.3M1190.8 776.3L1191.6 769.7M1142.7 782.0L1144.7 775.4M1144.7 775.4L1146.6 768.7M1182.4 776.6L1183.6 769.7M1244.7 782.9L1242.8 776.3M1242.8 776.3L1240.8 769.6M1269.0 780.1L1266.0 774.3M1216.8 777.0L1216.4 770.0M1276.9 782.5L1274.2 777.1M1180.3 779.0L1181.6 772.9M1190.9 782.1L1190.7 775.1M1136.7 780.1L1139.4 774.4M1275.1 781.1L1272.0 775.9M1237.8 774.8L1236.9 768.4M1202.3 781.3L1201.9 775.4M1145.9 782.5L1147.7 777.3M1208.2 782.4L1208.3 775.8M1206.9 779.2L1207.3 772.9M1176.8 782.6L1177.4 776.0M1259.6 779.8L1257.5 773.8M1261.7 779.7L1260.1 773.9M1226.8 776.7L1226.5 769.8M1162.6 775.0L1164.3 768.5M1206.1 778.0L1206.2 772.4M1237.9 777.1L1237.2 770.4M1151.6 778.8L1153.8 772.2M1231.5 781.7L1230.4 776.6M1251.2 782.1L1249.0 775.3M1221.2 780.0L1220.2 774.3M1221.1 782.0L1219.8 775.6M1241.0 780.6L1239.1 774.4M1272.4 781.1L1270.4 775.4M1152.0 783.1L1154.4 776.8M1241.1 781.0L1240.3 775.9M1196.2 782.2L1196.9 776.0M1237.0 778.5L1235.3 772.1M1198.8 782.7L1199.0 775.7M1199.0 775.7L1199.2 768.7M1167.2 782.1L1168.2 775.4M1168.2 775.4L1169.2 768.7M1245.9 777.1L1244.5 770.2M1149.2 780.6L1151.1 774.0M1151.1 774.0L1153.1 767.4M1214.6 783.1L1213.6 776.3M1213.6 776.3L1212.6 769.6M1192.6 778.3L1193.4 772.2M1274.0 780.7L1271.5 775.6M1252.8 777.4L1251.5 771.4M1156.7 781.0L1158.9 775.5M1182.3 782.5L1183.2 776.3M1243.8 783.2L1242.4 776.8M1214.3 781.1L1214.0 774.5M1214.0 774.5L1213.8 767.9M1176.3 780.5L1176.9 775.1M1279.6 782.3L1276.5 777.4M1144.0 777.7L1146.3 771.0M1208.7 781.8L1208.2 775.5M1208.2 775.5L1207.8 769.2M1175.6 781.0L1177.1 775.7M1254.2 781.1L1252.1 774.1M1252.1 774.1L1250.0 767.2M1135.1 779.2L1137.9 773.6M1209.0 781.1L1209.3 775.6M1192.8 780.3L1193.2 774.1M1135.1 779.4L1137.9 773.2M1143.4 780.6L1145.2 774.5M1218.4 778.5L1217.6 772.1M1207.5 775.2L1206.6 768.7M1176.4 780.2L1176.8 775.0M1132.9 781.3L1135.6 776.2M1209.8 781.7L1210.1 775.2M1250.5 781.8L1248.3 776.0M1167.4 782.6L1169.2 776.8M1153.7 783.0L1155.5 776.2M1214.7 781.7L1214.8 775.2M1214.8 775.2L1214.9 768.7M1146.2 782.3L1148.5 775.3M1167.8 778.5L1169.3 772.8M1210.5 781.2L1210.5 775.5M1206.9 774.8L1207.2 768.2M1241.6 775.8L1240.0 769.2M1241.5 781.9L1239.6 776.9M1199.8 777.8L1199.6 771.2M1206.9 780.8L1207.0 775.0M1207.5 775.0L1207.8 768.7M1267.3 781.9L1264.3 776.4M1203.5 781.4L1203.7 774.3M1203.7 774.3L1204.0 767.1M1224.7 780.0L1223.4 774.1M1180.0 774.9L1181.4 768.1M1144.7 782.1L1146.2 777.2M1272.3 782.2L1269.2 777.2M1201.8 783.5L1201.8 776.5M1201.8 776.5L1201.8 769.4M1262.0 777.8L1260.4 771.3M1166.9 779.0L1168.4 773.1M1131.2 781.8L1134.2 775.9M1220.3 782.7L1219.7 775.6M1219.7 775.6L1219.1 768.6M1236.3 781.3L1234.6 775.3M1146.8 781.3L1148.2 775.3M1254.8 782.6L1252.5 776.2M1252.5 776.2L1250.3 769.8M1170.1 782.7L1171.3 776.8M1171.3 776.8L1172.6 771.0M1156.6 777.1L1158.1 770.2M1203.4 781.2L1203.7 774.6M1203.7 774.6L1204.0 768.1M1245.7 780.0L1244.2 774.7M1235.0 779.1L1234.3 773.4M1207.9 779.2L1207.8 773.0M1145.4 782.4L1147.4 776.2M1147.4 776.2L1149.5 770.1M1210.0 782.3L1209.7 775.9M1235.3 781.2L1234.3 775.7M1199.9 782.0L1199.4 775.9M1199.4 775.9L1198.8 769.8M1199.9 776.7L1199.8 770.0M1152.7 781.3L1154.4 775.7M1238.5 782.5L1236.6 775.7M1247.9 780.6L1246.4 774.1M1195.3 775.6L1196.0 769.5M1172.5 781.6L1173.8 774.7M1227.3 783.0L1226.8 776.8M1226.8 776.8L1226.2 770.6M1263.6 779.5L1261.2 773.6M1216.4 780.3L1215.9 774.4M1224.7 778.7L1224.5 773.0M1213.9 777.5L1213.3 770.6M1220.4 780.7L1219.2 775.6M1158.7 780.4L1159.9 774.0M1159.9 774.0L1161.2 767.6M1161.1 780.0L1162.5 773.8M1264.3 777.7L1262.4 771.3M1138.2 778.8L1140.1 773.0M1190.0 782.1L1191.0 776.2M1256.9 782.0L1254.3 776.6M1166.5 781.6L1167.5 774.6M1167.5 774.6L1168.4 767.7M1177.0 779.7L1178.2 774.0M1178.4 778.0L1179.1 771.6M1146.3 781.0L1148.1 775.0M1265.9 781.0L1264.1 775.3M1143.8 781.1L1146.1 775.8M1232.7 777.5L1230.9 771.1M1258.5 782.4L1256.9 775.7M1168.6 778.5L1169.8 772.0M1132.3 781.6L1135.2 776.2M1234.9 782.8L1233.8 776.9M1258.3 780.9L1255.7 774.8M1229.3 781.3L1227.7 775.9M1273.1 782.2L1270.2 776.3M1255.2 778.3L1253.7 772.6M1174.2 775.2L1175.8 768.1M1148.2 780.1L1150.6 773.9" stroke="#3ce03c" stroke-width="0.6" fill="none" opacity="0.9"/><path d="M1217.7 774.0L1216.6 767.1M1256.5 774.5L1254.5 767.9M1204.1 774.3L1203.7 767.5M1180.1 775.4L1180.6 768.3M1221.9 775.2L1221.1 767.9M1216.8 776.3L1216.3 769.4M1166.2 774.4L1167.6 768.0M1223.0 774.8L1221.9 768.2M1222.6 775.9L1221.7 768.8M1256.6 776.8L1254.3 770.4M1240.8 776.1L1239.5 769.1M1190.7 777.3L1190.6 770.5M1156.5 776.7L1158.2 770.7M1182.2 776.3L1182.9 769.6M1179.6 774.9L1180.1 768.3M1161.8 774.2L1162.8 767.2M1186.7 776.1L1187.5 769.7M1194.0 776.9L1194.7 770.3M1163.6 775.4L1164.4 768.1M1201.8 776.9L1202.1 770.5M1224.4 776.2L1223.0 769.2M1161.4 776.5L1163.1 770.5M1234.9 775.4L1233.2 768.5M1153.1 774.8L1155.5 767.7M1238.0 774.4L1237.0 767.8M1190.7 775.1L1190.6 768.1M1208.3 775.8L1208.4 769.2M1177.4 776.0L1177.9 769.4M1212.8 776.2L1211.9 769.4M1249.0 775.3L1246.7 768.6M1219.8 775.6L1218.5 769.2M1185.8 775.7L1186.1 769.5M1154.4 776.8L1156.7 770.5M1196.9 776.0L1197.7 769.8M1167.6 775.2L1169.2 768.6M1183.2 776.3L1184.0 770.1M1242.4 776.8L1240.9 770.3M1224.3 774.8L1224.0 768.3M1151.7 777.1L1153.9 770.6M1210.1 775.2L1210.3 768.6M1201.2 776.6L1201.7 769.6M1240.6 776.9L1239.9 770.4M1155.5 776.2L1157.3 769.5M1148.5 775.3L1150.8 768.4M1172.0 776.7L1172.5 770.6M1209.7 775.9L1209.3 769.5M1236.6 775.7L1234.7 768.9M1246.4 774.1L1244.9 767.6M1173.8 774.7L1175.1 767.8M1155.8 774.6L1157.5 767.7M1256.9 775.7L1255.2 769.0" stroke="#00d890" stroke-width="0.6" fill="none" opacity="0.9"/><path d="M1158.7 800.4l1.5 -1.9M1193.4 805.9l1.5 -1.6M1207.3 797.2l-1.6 -1.7M1242.9 795.1l1.1 -1.9M1162.3 790.5l-1.0 -1.1M1208.3 789.0l-1.3 1.5M1156.2 808.2l-1.8 -1.7M1251.5 798.8l-0.9 1.7M1131.8 802.2l1.6 1.4M1146.3 788.6l-1.3 1.4M1248.8 793.8l-1.8 2.0M1188.7 789.8l1.9 1.2M1132.4 793.6l-1.5 1.4M1269.7 805.9l1.4 -1.5M1153.8 793.3l0.8 -1.7M1188.4 796.1l-1.4 1.1M1188.2 809.6l-0.8 -1.9M1252.4 803.6l0.8 -1.8M1178.1 806.0l-1.4 -0.8M1165.2 806.8l1.1 1.0M1214.5 797.2l1.9 -0.8M1230.8 788.9l-1.0 -1.8M1242.2 799.1l-1.0 1.1M1246.2 789.5l1.3 0.9M1219.0 808.9l-1.3 1.0M1151.5 792.5l1.1 -1.2M1148.1 791.7l-1.5 1.6M1122.6 795.4l1.2 1.1M1144.6 788.4l-0.9 -1.8M1127.6 802.1l1.0 1.8M1228.0 804.0l-1.4 1.4M1165.6 795.0l-1.0 -1.3M1162.7 807.0l1.4 1.3M1245.1 804.7l-1.4 -1.5M1169.9 807.4l1.5 1.9M1245.0 792.9l0.9 1.3M1124.4 796.7l1.3 -1.8M1186.5 797.6l-1.9 -1.2M1236.4 807.6l1.6 1.8M1178.8 795.2l-1.5 -1.3M1159.7 806.9l1.5 -1.7M1263.2 805.5l0.9 1.6M1226.3 793.8l1.9 -1.9M1149.6 790.7l-1.5 -1.0M1273.3 802.9l-1.8 1.8M1198.5 808.9l1.7 1.9M1176.4 791.7l1.4 1.9M1140.6 800.9l0.9 -1.2M1270.5 802.8l-1.3 -0.9M1158.3 803.1l-1.6 1.1M1122.5 797.2l1.1 -1.4M1280.3 796.4l-1.8 -1.7M1218.9 807.4l1.4 -1.2M1243.6 789.9l0.9 -1.3M1177.2 803.8l1.3 1.7M1254.4 794.7l0.8 1.6M1281.9 803.2l-1.1 1.1M1169.8 789.1l-1.7 -1.0M1210.8 792.1l-1.4 -1.2M1247.8 797.4l1.0 -1.5M1174.4 807.5l-1.9 -0.9M1241.5 790.2l-1.9 1.8M1200.6 799.1l-1.7 1.6M1206.2 790.2l-1.2 -1.0M1166.8 802.8l-1.0 1.1M1141.9 793.7l-1.5 1.7M1248.5 796.5l1.5 -1.7M1284.5 792.7l-1.5 -1.0M1132.7 805.6l-1.6 -1.0M1181.2 808.0l-1.1 1.3M1281.3 808.4l-1.0 -0.9M1267.2 789.0l1.6 -1.0M1198.3 806.7l1.4 -1.8M1140.4 788.1l-1.7 1.8M1128.6 806.0l-1.1 -1.0M1241.1 791.9l0.8 -1.8M1233.1 804.8l1.7 0.9M1218.6 803.6l0.8 1.4M1157.6 795.5l-1.7 1.8M1159.0 791.9l-1.3 -0.8M1269.9 802.9l1.9 1.3M1167.8 788.4l-2.0 -1.6M1161.6 804.9l1.2 2.0M1161.0 797.4l1.3 -1.1M1162.7 800.5l1.0 -1.4M1210.5 800.6l1.8 -1.9M1277.5 798.2l0.9 -1.3M1145.6 800.5l1.1 1.0M1138.9 803.0l-1.9 1.3M1266.2 790.1l1.7 -1.1M1265.0 801.5l1.4 -1.6M1151.1 794.1l-1.9 1.9M1225.6 801.0l1.0 -1.9M1155.4 803.8l-1.3 1.8M1214.6 809.4l1.2 0.9M1215.2 809.7l-0.9 1.7M1175.7 788.0l0.8 1.9M1159.8 799.6l1.3 -1.1M1159.0 796.1l-0.8 -1.3M1168.3 803.9l1.3 1.6M1257.8 800.4l-1.5 1.0M1187.0 802.8l1.3 1.2M1137.3 790.8l1.4 -1.7M1236.2 804.3l-1.6 1.0M1210.6 807.5l-1.0 1.1M1226.6 799.4l-1.9 1.2M1233.8 792.0l-1.2 -2.0M1149.7 790.4l-1.4 -1.0M1278.0 795.9l1.7 -0.8M1267.2 800.5l-1.9 1.6M1227.7 808.0l0.9 -1.8M1136.2 790.9l1.1 -1.3M1280.7 788.4l-1.7 -1.4M1163.2 799.3l-1.1 1.4M1191.0 809.7l1.6 1.1M1216.4 806.9l-1.5 1.0M1237.2 805.4l-0.8 1.6M1137.4 800.4l-1.1 -0.9M1125.0 796.4l-1.8 1.3M1276.0 807.2l-1.8 1.3M1192.3 796.1l-1.4 -1.1M1156.8 791.8l1.8 -1.6M1247.2 795.9l1.3 -0.9M1152.7 792.7l-1.7 -1.2M1192.6 797.3l1.3 -0.8M1196.0 788.7l1.3 1.0M1238.0 809.6l-1.8 1.8M1221.8 804.5l1.9 1.7M1276.3 808.4l-1.3 1.8M1261.7 798.8l-0.9 1.8M1177.8 791.7l-1.6 -1.8M1179.7 795.3l-1.1 -1.7M1248.3 790.5l-0.9 1.4M1269.9 807.5l1.2 1.3M1280.6 803.4l-1.5 0.9M1268.7 789.4l1.4 -1.6M1250.1 806.3l-0.9 1.9M1258.1 798.0l-1.4 1.5M1219.0 800.4l1.4 1.1M1146.6 802.7l-1.9 -1.5M1135.7 795.4l2.0 -1.1M1263.9 788.0l-1.8 -0.9M1160.5 796.3l1.7 1.2M1142.4 794.3l-1.3 1.5M1194.1 800.8l-1.5 1.0M1187.1 794.9l1.8 1.1M1131.1 802.9l1.6 1.6M1154.7 801.7l1.1 -1.8M1149.8 802.6l2.0 -1.3M1172.3 806.3l1.3 -1.8M1256.5 789.5l-1.7 -1.6M1231.9 795.1l-1.9 -1.0M1172.8 797.0l-0.8 1.9M1201.1 807.1l-1.5 2.0M1208.3 806.5l-1.0 -1.1M1257.2 795.1l-0.8 1.3M1225.1 789.6l-0.9 1.2M1265.9 801.1l1.8 -2.0M1222.0 802.3l-1.5 1.8M1237.1 794.1l1.4 -1.3M1207.3 795.8l-1.8 -1.9M1214.0 801.1l-1.0 -1.5M1195.8 801.8l-1.4 1.5M1256.2 805.0l1.1 1.2M1276.1 798.2l-1.4 1.4M1254.1 804.0l1.5 -1.7M1274.8 792.5l-1.7 2.0M1260.3 809.1l0.9 1.0M1193.4 804.5l1.5 1.2M1196.4 796.7l1.9 -0.9M1223.0 802.0l-1.0 1.9M1191.1 803.6l1.7 1.7M1189.2 798.6l1.8 -1.6M1134.4 796.0l-1.0 0.9M1147.2 802.9l1.3 1.3M1169.6 799.6l-0.9 0.9M1170.0 792.3l-1.4 1.3M1136.2 797.0l1.0 -1.7M1233.8 790.3l1.5 -0.9M1158.0 797.0l-1.9 -1.4M1167.5 794.7l-1.3 1.7M1171.7 807.5l-1.7 0.8M1123.5 802.5l-1.4 1.0M1146.6 791.5l1.1 -1.2M1194.1 809.8l1.3 2.0M1208.4 788.5l-1.3 0.9M1189.0 801.2l1.1 1.4M1277.7 801.0l1.1 1.6M1188.2 805.0l-1.9 -1.7M1203.8 805.7l-1.6 1.4M1221.6 788.3l-1.2 1.1M1264.3 804.9l1.6 0.8M1220.5 796.6l1.3 1.5M1242.8 798.4l-1.3 -1.4M1242.5 804.2l1.3 -1.6M1238.1 798.8l-1.8 -1.4M1204.9 796.1l-1.5 -1.1M1167.6 806.9l1.6 0.9M1197.4 806.9l1.9 1.7M1224.7 793.4l-1.0 1.7M1195.6 801.8l-1.5 1.1M1233.8 806.6l1.4 1.5M1162.3 804.8l-1.5 1.2M1154.2 795.7l-1.3 -1.2M1284.9 805.3l-1.9 1.6M1274.3 794.7l1.7 -1.0M1177.3 806.3l1.1 -1.4M1178.6 804.6l-1.7 1.8M1232.0 797.1l-1.6 0.9M1272.0 809.8l-1.9 1.5M1271.7 799.6l1.5 -2.0M1182.4 805.7l-1.0 -1.8M1251.8 796.1l-1.3 -1.3M1172.6 807.7l1.3 -1.9M1131.3 791.7l0.9 -1.6M1145.7 804.8l1.6 -1.0M1159.6 798.6l-1.6 -1.7M1251.3 806.2l-1.7 1.8M1219.0 799.8l-1.3 1.7M1230.2 802.5l1.9 1.2M1141.0 795.2l1.1 -1.3M1231.0 804.5l1.1 1.9M1283.8 791.3l-1.1 -1.3M1178.5 795.4l1.7 1.2M1213.5 799.4l1.0 -1.5M1205.6 792.4l2.0 -1.0M1166.8 788.3l-1.8 -1.6M1209.6 792.3l-1.0 -1.3M1234.3 806.9l1.5 -0.9M1217.4 796.2l-2.0 -1.7M1147.1 794.9l1.7 1.0M1201.9 809.2l-1.6 -1.7M1231.0 790.5l-2.0 -1.4M1155.1 807.8l1.1 1.6M1186.5 794.5l1.2 1.6M1182.8 792.0l1.2 -2.0M1268.4 795.8l1.3 -1.0M1129.4 799.6l1.1 1.5M1146.1 806.8l0.9 -1.7M1266.9 799.6l-1.1 -1.7M1159.4 794.5l-1.7 -2.0M1193.9 799.2l1.7 2.0M1168.7 805.7l-1.7 -0.9M1169.7 798.4l-2.0 -0.9M1188.1 795.4l-1.6 -1.1M1210.7 788.7l1.5 1.8M1175.9 797.3l1.4 1.7M1212.5 808.8l-1.6 1.7M1196.2 798.5l-1.7 -1.8M1189.0 796.5l-0.9 0.9M1230.6 802.4l-1.2 1.2M1249.7 789.9l0.8 -1.1M1152.1 794.1l-2.0 -1.1M1268.3 809.7l-1.9 -1.9M1215.1 790.2l1.1 -1.1M1281.1 791.9l-2.0 2.0M1217.9 796.2l-1.2 1.5M1215.0 791.6l-1.1 -1.1M1268.9 791.6l-1.0 1.1M1143.6 789.8l1.3 1.9M1256.5 807.9l0.9 1.0M1133.9 803.4l-1.1 1.7M1252.5 804.5l-1.3 1.8M1218.9 807.9l-1.2 1.9M1192.1 794.6l2.0 -0.9M1252.2 801.6l1.3 1.6M1240.0 801.0l-1.7 -1.8M1256.9 803.2l1.2 -1.2M1138.9 795.4l1.2 1.6M1285.6 794.3l1.5 1.3M1256.9 792.5l1.5 1.5M1174.4 798.4l-1.2 0.9M1232.8 802.5l1.7 -1.7M1147.2 798.0l1.9 -1.3M1150.0 796.1l-1.2 2.0M1156.8 794.2l-1.4 -1.0M1148.5 790.1l-1.5 -1.4M1196.3 798.6l1.9 1.5M1252.0 791.0l-1.9 -1.5M1279.7 798.3l-1.2 -0.9M1245.3 792.2l1.2 1.5M1265.5 792.4l-1.6 1.6M1279.1 806.1l1.0 -1.4M1189.8 791.9l0.9 2.0M1262.8 806.7l-1.5 1.5M1196.1 792.6l-1.5 -1.6M1129.7 795.5l-1.3 -0.9M1160.9 807.9l-1.4 1.7M1150.0 795.3l1.8 -1.2M1277.3 806.4l-1.7 -1.3M1181.9 801.6l-1.1 -1.2M1159.0 794.7l1.4 1.4M1225.4 805.7l-1.4 1.9M1228.3 798.0l-1.7 -2.0M1237.7 806.3l1.9 0.9M1242.7 794.8l1.9 -1.4M1220.1 806.8l-1.2 -1.2M1218.8 794.9l-2.0 -1.4M1268.3 808.8l-1.6 -1.3M1129.6 797.6l0.9 -1.9M1275.1 795.8l-1.7 0.8M1132.5 793.9l1.6 1.6M1233.6 793.4l-1.3 1.1M1183.5 804.9l1.1 1.3M1185.4 790.4l1.9 -1.7M1244.3 807.8l1.6 -1.4M1235.3 796.2l-1.2 -1.4M1221.4 804.9l0.8 1.8M1237.5 806.3l1.5 1.5M1260.5 801.9l-1.6 1.6M1254.1 791.6l-0.8 1.5M1185.6 808.7l2.0 2.0M1240.5 808.7l-0.9 -1.8M1278.1 809.2l-1.4 1.8M1221.4 792.0l0.9 -1.6M1235.6 794.1l0.8 1.5M1276.6 802.7l1.9 1.0M1207.8 795.6l0.9 1.8M1271.3 807.5l-1.1 1.0M1227.4 794.8l1.5 -1.1M1141.1 789.6l-0.9 -1.6M1191.2 807.8l-1.1 -1.3M1234.2 791.5l-2.0 -1.2M1145.7 793.6l-0.9 -1.7M1158.7 809.4l-1.0 1.5M1203.0 805.7l-1.2 -1.5M1198.0 805.5l-1.7 -1.2M1194.5 804.4l-1.0 -1.7M1165.6 788.6l0.8 1.3M1216.7 797.6l-1.9 1.4M1166.2 794.4l-1.7 1.8M1195.9 799.3l1.1 -1.8M1137.5 809.9l1.7 -1.6M1172.5 805.9l1.6 -1.9M1264.2 790.5l-1.7 -1.0M1131.9 799.8l1.0 -1.1M1270.2 807.0l-1.9 -1.7M1180.4 807.6l-1.8 -1.7M1148.1 789.9l1.0 -1.2M1282.6 792.9l1.6 1.8M1205.2 789.7l-1.7 -1.0M1160.2 792.9l0.9 1.0M1282.4 804.4l1.7 1.2M1202.7 802.1l1.5 -1.1M1173.0 805.5l1.7 -1.6M1273.1 788.4l1.4 -1.1M1211.3 807.6l1.0 -1.6M1212.6 790.1l1.1 -1.1M1219.3 809.5l-1.2 -1.9M1254.7 797.9l1.5 1.4M1193.9 788.0l-1.8 -1.7M1164.6 795.6l-1.8 -1.9M1262.2 808.7l-1.0 0.9M1162.5 794.8l1.5 1.6M1253.4 788.2l1.1 -0.8M1239.6 796.8l1.3 2.0M1204.1 803.1l1.2 -1.2M1204.1 798.0l0.9 1.4M1265.3 803.4l-1.0 1.8M1196.7 794.2l1.3 -1.3M1243.8 805.7l1.6 -1.1M1263.2 792.3l-1.7 2.0M1125.7 789.8l-1.1 1.3M1135.1 806.1l-1.9 -1.0M1237.5 799.6l1.8 1.2M1281.9 809.9l-1.5 -1.3M1252.7 801.3l-1.3 -1.4M1270.5 797.5l-1.9 -2.0M1221.1 801.1l0.8 0.9M1195.4 796.0l-1.9 1.3M1217.8 803.4l1.3 -1.1M1198.5 795.2l-1.1 -0.8M1132.9 797.1l-1.9 -1.6M1198.2 796.0l-1.0 1.3M1175.8 798.1l-2.0 1.5M1260.7 809.4l1.8 -1.3M1241.6 803.2l-1.5 -1.5M1150.8 800.1l1.1 2.0M1163.5 806.8l1.2 1.4M1269.9 808.7l-1.7 -1.4M1273.8 806.1l1.6 1.6M1181.1 788.7l-1.8 1.0M1141.7 798.9l-1.8 -1.0M1268.7 793.0l-1.8 1.9M1124.4 788.6l1.3 -0.9M1210.2 804.3l-1.9 1.7M1194.0 788.7l1.2 1.3M1157.0 802.5l1.0 1.6M1203.1 805.1l1.4 -1.1M1250.6 807.1l1.2 1.2M1170.0 789.1l1.8 -1.7M1143.2 797.8l1.1 -1.6M1131.4 802.2l-1.9 1.6M1184.4 806.0l-1.1 1.1M1262.6 795.0l-1.4 -2.0M1175.1 791.6l-1.9 -1.0M1227.5 790.3l1.9 -1.3M1168.3 807.6l-1.8 -1.0M1255.2 793.7l-1.7 -1.6M1239.0 799.5l-1.9 1.6M1171.9 806.2l1.2 1.9M1173.7 798.4l1.7 -1.8M1217.8 797.5l-1.0 1.7M1192.5 799.8l-2.0 2.0M1138.9 796.6l1.6 1.1M1155.3 800.0l-1.2 2.0M1217.7 794.0l1.3 -1.8M1148.7 794.2l-1.2 1.1M1199.3 805.8l-1.9 -2.0M1266.6 799.9l1.1 -1.7M1138.6 799.6l-1.5 0.8M1169.0 791.8l1.5 -1.4M1220.4 808.4l1.1 -1.9M1176.0 795.6l-1.0 -1.6M1181.7 799.5l1.9 -1.9M1262.4 797.9l1.5 -1.4M1231.0 794.3l1.1 -0.8M1271.0 809.6l0.8 1.0M1145.1 808.4l-0.8 -0.8M1260.8 791.4l1.2 1.4" stroke="#ff3010" stroke-width="0.9" fill="none" opacity="0.8"/><path d="M1128.0 805L1125.5 822.5M1136.0 805L1133.7 822.5M1144.0 805L1142.0 822.5M1152.0 805L1150.3 822.5M1160.0 805L1158.6 822.5M1168.0 805L1166.8 822.5M1176.0 805L1175.1 822.5M1184.0 805L1183.4 822.5M1192.0 805L1191.6 822.5M1200.0 805L1199.9 822.5M1208.0 805L1208.2 822.5M1216.0 805L1216.5 822.5M1224.0 805L1224.7 822.5M1232.0 805L1233.0 822.5M1240.0 805L1241.3 822.5M1248.0 805L1249.6 822.5M1256.0 805L1257.8 822.5M1264.0 805L1266.1 822.5M1272.0 805L1274.4 822.5M1280.0 805L1282.6 822.5" stroke="#e2cc10" stroke-width="1.3" fill="none" opacity="0.85"/><path d="M1140.0 758.0L1143.5 780.0L1150.0 806.0M1142.5 760.0L1139.0 782.0L1132.0 808.0" stroke="#20d0e0" stroke-width="0.7" fill="none" opacity="0.9"/><path d="M1180.7 750.0L1184.2 772.0L1190.7 806.0M1183.2 752.0L1179.7 774.0L1172.7 808.0" stroke="#2a3ad0" stroke-width="0.7" fill="none" opacity="0.9"/><path d="M1221.0 755.0L1224.5 777.0L1231.0 806.0M1223.5 757.0L1220.0 779.0L1213.0 808.0" stroke="#2a3ad0" stroke-width="0.7" fill="none" opacity="0.9"/><path d="M1248.0 761.0L1251.5 783.0L1258.0 806.0M1250.5 763.0L1247.0 785.0L1240.0 808.0" stroke="#20d0e0" stroke-width="0.7" fill="none" opacity="0.9"/><path d="M1263.0 763.0L1266.5 785.0L1273.0 806.0M1265.5 765.0L1262.0 787.0L1255.0 808.0" stroke="#20d0e0" stroke-width="0.7" fill="none" opacity="0.9"/><path d="M1123.4 816.0L1118.9 822.6M1139.3 815.8L1135.5 822.8M1155.2 815.6L1152.1 823.0M1170.9 815.4L1168.9 823.2M1186.7 815.3L1185.6 823.3M1202.4 815.3L1202.4 823.3M1218.1 815.3L1219.2 823.3M1233.9 815.4L1235.9 823.2M1249.6 815.6L1252.7 823.0M1265.5 815.8L1269.3 822.8M1281.4 816.0L1285.9 822.6M1123.2 830.6L1119.1 837.4M1139.1 830.4L1135.7 837.6M1155.0 830.2L1152.3 837.8M1170.8 830.1L1169.0 837.9M1186.6 830.0L1185.7 838.0M1202.4 830.0L1202.4 838.0M1218.2 830.0L1219.1 838.0M1234.0 830.1L1235.8 837.9M1249.8 830.2L1252.5 837.8M1265.7 830.4L1269.1 837.6M1281.6 830.6L1285.7 837.4M1123.2 845.5L1120.1 851.3M1139.3 845.1L1136.5 851.7M1155.4 844.7L1152.9 852.1M1171.3 844.3L1169.5 852.5M1187.1 844.0L1186.2 852.8M1202.9 843.7L1202.9 853.1M1218.7 844.0L1219.6 852.8M1234.5 844.3L1236.3 852.5M1250.4 844.7L1252.9 852.1M1266.5 845.1L1269.3 851.7M1282.6 845.5L1285.7 851.3M1123.1 858.7L1120.2 864.7M1139.2 858.4L1136.6 865.0M1155.3 858.0L1153.0 865.4M1171.2 857.6L1169.6 865.8M1187.1 857.3L1186.2 866.1M1202.9 857.0L1202.9 866.4M1218.7 857.3L1219.6 866.1M1234.6 857.6L1236.2 865.8M1250.5 858.0L1252.8 865.4M1266.6 858.4L1269.2 865.0M1282.7 858.7L1285.6 864.7M1123.0 872.0L1120.3 878.0M1139.1 871.6L1136.7 878.4M1155.2 871.3L1153.1 878.7M1171.2 870.9L1169.6 879.1M1187.1 870.6L1186.2 879.4M1202.9 870.3L1202.9 879.7M1218.7 870.6L1219.6 879.4M1234.6 870.9L1236.2 879.1M1250.6 871.3L1252.7 878.7M1266.7 871.6L1269.1 878.4M1282.8 872.0L1285.5 878.0" stroke="#e6d200" stroke-width="0.9" fill="none"/><path d="M1089.5 822.9L1087.8 817.7M1105.9 822.8L1103.9 817.8M1123.4 821.8L1118.9 818.8M1140.0 821.7L1134.8 818.9M1156.5 821.4L1150.8 819.2M1173.0 821.1L1166.8 819.5M1189.5 820.7L1182.8 819.9M1205.9 820.3L1198.9 820.3M1222.0 819.9L1215.3 820.7M1238.0 819.5L1231.8 821.1M1254.0 819.2L1248.3 821.4M1270.0 818.9L1264.8 821.7M1285.9 818.8L1281.4 821.8M1300.9 817.8L1298.9 822.8M1123.7 829.6L1118.6 826.4M1122.7 825.6L1119.6 830.4M1140.4 829.5L1134.4 826.5M1138.8 825.2L1136.0 830.8M1157.0 829.3L1150.3 826.7M1154.8 824.9L1152.5 831.1M1173.7 829.0L1166.1 827.0M1170.8 824.6L1169.0 831.4M1190.3 828.5L1182.0 827.5M1186.6 824.3L1185.7 831.7M1206.9 828.0L1197.9 828.0M1202.4 824.0L1202.4 832.0M1222.8 827.5L1214.5 828.5M1218.2 824.3L1219.1 831.7M1238.7 827.0L1231.1 829.0M1234.0 824.6L1235.8 831.4M1254.5 826.7L1247.8 829.3M1250.0 824.9L1252.3 831.1M1270.4 826.5L1264.4 829.5M1266.0 825.2L1268.8 830.8M1286.2 826.4L1281.1 829.6M1282.1 825.6L1285.2 830.4M1089.6 837.6L1087.7 832.4M1106.1 837.5L1103.7 832.5M1123.5 836.4L1118.8 833.6M1140.0 836.3L1134.8 833.7M1156.5 836.0L1150.8 834.0M1173.0 835.8L1166.8 834.2M1189.5 835.4L1182.8 834.6M1205.9 835.0L1198.9 835.0M1222.0 834.6L1215.3 835.4M1238.0 834.2L1231.8 835.8M1254.0 834.0L1248.3 836.0M1270.0 833.7L1264.8 836.3M1286.0 833.6L1281.3 836.4M1301.1 832.5L1298.7 837.5M1096.6 850.1L1092.5 854.3M1093.9 845.9L1089.1 852.5M1085.1 847.7L1082.2 854.1M1106.7 843.2L1102.6 848.2M1107.2 850.8L1105.4 854.4M1103.5 848.0L1101.5 852.4M1123.4 844.3L1118.9 852.5M1127.9 846.2L1124.1 853.8M1120.1 847.2L1118.0 852.9M1126.7 850.3L1122.9 854.8M1139.5 843.7L1135.3 853.1M1139.1 843.4L1137.7 849.7M1143.6 848.1L1139.3 855.7M1135.7 842.6L1133.7 847.6M1155.4 843.1L1151.9 853.7M1171.2 842.6L1168.6 854.2M1186.8 842.1L1185.5 854.7M1202.4 841.6L1202.4 855.1M1218.0 842.1L1219.3 854.7M1233.6 842.6L1236.2 854.2M1249.4 843.1L1252.9 853.7M1265.3 843.7L1269.5 853.1M1281.4 844.3L1285.9 852.5M1086.0 858.0L1081.3 864.3M1090.0 855.4L1087.0 858.5M1094.3 855.0L1090.2 861.9M1102.6 854.9L1098.6 861.4M1111.2 861.3L1106.7 865.9M1111.6 854.5L1109.0 860.6M1123.3 857.5L1119.0 865.9M1120.3 861.1L1116.9 866.8M1126.3 859.5L1124.2 865.1M1126.6 861.8L1124.0 869.6M1139.3 856.9L1135.5 866.5M1144.0 859.7L1142.0 864.2M1138.7 859.9L1137.0 863.6M1144.3 858.1L1141.7 865.6M1155.2 856.4L1152.1 867.0M1171.1 855.9L1168.7 867.5M1186.8 855.4L1185.5 868.0M1202.4 855.0L1202.4 868.5M1218.0 855.4L1219.3 868.0M1233.7 855.9L1236.1 867.5M1249.6 856.4L1252.7 867.0M1265.5 856.9L1269.3 866.5M1281.5 857.5L1285.8 865.9M1092.5 877.5L1089.2 880.7M1090.7 874.5L1086.7 880.7M1085.7 868.8L1084.1 872.7M1106.7 873.1L1104.3 877.2M1103.9 868.6L1098.3 875.5M1111.3 866.8L1108.8 875.1M1123.1 870.7L1119.2 879.3M1121.8 874.7L1119.6 880.6M1122.3 872.5L1120.4 876.1M1124.4 875.4L1122.7 881.5M1139.2 870.2L1135.6 879.8M1140.8 871.7L1139.8 876.4M1139.7 866.7L1135.5 873.6M1141.1 875.9L1138.6 881.4M1155.1 869.7L1152.2 880.3M1171.0 869.2L1168.8 880.8M1186.7 868.7L1185.6 881.3M1202.4 868.2L1202.4 881.8M1218.1 868.7L1219.2 881.3M1233.8 869.2L1236.0 880.8M1249.7 869.7L1252.6 880.3M1265.6 870.2L1269.2 879.8M1281.7 870.7L1285.6 879.3M1090.5 884.7L1086.8 890.7M1106.6 884.4L1103.2 891.0M1122.7 884.1L1119.6 891.3M1138.7 883.8L1136.1 891.6M1154.7 883.5L1152.6 891.9M1170.7 883.2L1169.1 892.2M1186.6 882.9L1185.7 892.5M1202.4 882.7L1202.4 892.7M1218.2 882.9L1219.1 892.5M1234.1 883.2L1235.7 892.2M1250.1 883.5L1252.2 891.9M1266.1 883.8L1268.7 891.6M1282.1 884.1L1285.2 891.3M1298.2 884.4L1301.6 891.0" stroke="#ff9c18" stroke-width="1" fill="none" opacity="0.9"/><path d="M1090.6 898.1L1086.7 905.1M1106.6 898.0L1103.2 905.2M1122.6 897.9L1119.7 905.3M1138.6 897.8L1136.2 905.4M1154.6 897.7L1152.7 905.5M1170.5 897.7L1169.3 905.5M1186.5 897.6L1185.8 905.6M1202.4 897.6L1202.4 905.6M1218.3 897.6L1219.0 905.6M1234.3 897.7L1235.5 905.5M1250.2 897.7L1252.1 905.5M1266.2 897.8L1268.6 905.4M1282.2 897.9L1285.1 905.3M1298.2 898.0L1301.6 905.2M1090.4 911.3L1086.9 917.9M1106.5 911.2L1103.3 918.0M1122.5 911.1L1119.8 918.1M1138.5 911.0L1136.3 918.2M1154.5 910.9L1152.8 918.3M1170.5 910.9L1169.3 918.3M1186.4 910.9L1185.9 918.3M1202.4 910.9L1202.4 918.4M1218.4 910.9L1218.9 918.3M1234.3 910.9L1235.5 918.3M1250.3 910.9L1252.0 918.3M1266.3 911.0L1268.5 918.2M1282.3 911.1L1285.0 918.1M1298.3 911.2L1301.5 918.0M1090.2 926.9L1087.1 933.1M1106.3 926.8L1103.5 933.2M1122.3 926.7L1120.0 933.3M1138.4 926.6L1136.4 933.4M1154.4 926.6L1152.9 933.4M1170.4 926.5L1169.4 933.5M1186.4 926.5L1185.9 933.5M1202.4 926.5L1202.4 933.5M1218.4 926.5L1218.9 933.5M1234.4 926.5L1235.4 933.5M1250.4 926.6L1251.9 933.4M1266.4 926.6L1268.4 933.4M1282.5 926.7L1284.8 933.3M1298.5 926.8L1301.3 933.2M1090.0 944.0L1087.3 950.0M1106.1 944.0L1103.7 950.0M1122.2 943.9L1120.1 950.1M1138.2 943.9L1136.6 950.1M1154.3 943.8L1153.0 950.2M1170.3 943.8L1169.5 950.2M1186.4 943.8L1185.9 950.2M1202.4 943.8L1202.4 950.2M1218.4 943.8L1218.9 950.2M1234.5 943.8L1235.3 950.2M1250.5 943.8L1251.8 950.2M1266.6 943.9L1268.2 950.1M1282.6 943.9L1284.7 950.1M1298.7 944.0L1301.1 950.0M1089.8 960.5L1087.5 966.1M1105.9 960.5L1103.9 966.1M1122.0 960.4L1120.3 966.2M1138.1 960.4L1136.7 966.2M1154.2 960.4L1153.1 966.2M1170.3 960.3L1169.5 966.3M1186.3 960.3L1186.0 966.3M1202.4 960.3L1202.4 966.3M1218.5 960.3L1218.8 966.3M1234.5 960.3L1235.3 966.3M1250.6 960.4L1251.7 966.2M1266.7 960.4L1268.1 966.2M1282.8 960.4L1284.5 966.2M1298.9 960.5L1300.9 966.1" stroke="#ff6a30" stroke-width="0.7" fill="none" opacity="0.85"/><path d="M1089.0 821.3L1088.3 819.3M1105.3 821.3L1104.5 819.3M1122.4 821.1L1119.9 819.5M1121.9 819.2L1120.4 821.4M1138.7 821.0L1136.1 819.6M1138.0 819.2L1136.8 821.4M1155.0 820.9L1152.3 819.7M1154.1 819.1L1153.2 821.5M1171.3 820.7L1168.5 819.9M1170.2 819.0L1169.6 821.6M1187.6 820.5L1184.7 820.1M1186.3 819.0L1186.0 821.6M1203.9 820.3L1200.9 820.3M1202.4 819.0L1202.4 821.6M1220.1 820.1L1217.2 820.5M1218.5 819.0L1218.8 821.6M1236.3 819.9L1233.5 820.7M1234.6 819.0L1235.2 821.6M1252.5 819.7L1249.8 820.9M1250.7 819.1L1251.6 821.5M1268.7 819.6L1266.1 821.0M1266.8 819.2L1268.0 821.4M1284.9 819.5L1282.4 821.1M1282.9 819.2L1284.4 821.4M1300.3 819.3L1299.5 821.3M1008.0 826.7L1006.7 829.5M1023.8 825.8L1023.8 829.2M1038.5 825.9L1040.0 829.4M1056.2 827.2L1054.6 830.3M1071.9 826.1L1071.8 828.4M1072.0 826.6L1070.6 827.8M1088.5 830.0L1088.8 826.0M1104.9 830.0L1104.9 826.0M1122.0 826.7L1120.3 829.3M1122.4 828.8L1119.9 827.2M1138.1 826.7L1136.7 829.3M1138.7 828.7L1136.1 827.3M1154.2 826.6L1153.1 829.4M1155.1 828.5L1152.2 827.5M1170.3 826.5L1169.5 829.5M1171.4 828.4L1168.4 827.6M1186.3 826.5L1186.0 829.5M1187.6 828.2L1184.7 827.8M1202.4 826.5L1202.4 829.5M1203.9 828.0L1200.9 828.0M1218.5 826.5L1218.8 829.5M1220.1 827.8L1217.2 828.2M1234.5 826.5L1235.3 829.5M1236.4 827.6L1233.4 828.4M1250.6 826.6L1251.7 829.4M1252.6 827.5L1249.7 828.5M1266.7 826.7L1268.1 829.3M1268.7 827.3L1266.1 828.7M1282.8 826.7L1284.5 829.3M1284.9 827.2L1282.4 828.8M1299.9 826.0L1299.9 830.0M1316.1 826.8L1316.0 830.3M1317.1 828.2L1315.6 828.8M1333.8 827.1L1332.6 830.5M1333.3 828.7L1332.0 828.9M1349.6 826.4L1348.6 829.2M1364.9 825.3L1366.0 829.1M1366.9 826.8L1365.9 827.6M1381.1 827.3L1381.6 829.6M1382.9 828.2L1381.7 828.7M1396.2 825.6L1397.8 829.1M1397.6 826.8L1396.6 827.9M1007.9 833.2L1007.6 835.6M1008.4 833.9L1006.0 834.9M1024.6 833.5L1023.6 835.9M1025.5 834.8L1024.2 834.6M1040.2 832.7L1041.1 836.4M1040.7 834.0L1039.9 835.1M1056.4 833.1L1056.1 836.1M1058.2 834.3L1056.2 834.9M1072.3 832.6L1073.7 836.4M1089.0 836.0L1088.3 834.0M1105.4 836.0L1104.4 834.0M1122.4 835.8L1119.9 834.2M1121.8 833.9L1120.5 836.1M1138.8 835.7L1136.0 834.3M1138.0 833.8L1136.8 836.2M1155.1 835.5L1152.2 834.5M1154.1 833.8L1153.2 836.2M1171.4 835.4L1168.4 834.6M1170.2 833.7L1169.6 836.3M1187.6 835.2L1184.7 834.8M1186.3 833.7L1186.0 836.3M1203.9 835.0L1200.9 835.0M1202.4 833.7L1202.4 836.3M1220.1 834.8L1217.2 835.2M1218.5 833.7L1218.8 836.3M1236.4 834.6L1233.4 835.4M1234.6 833.7L1235.2 836.3M1252.6 834.5L1249.7 835.5M1250.7 833.8L1251.6 836.2M1268.8 834.3L1266.0 835.7M1266.8 833.8L1268.0 836.2M1284.9 834.2L1282.4 835.8M1283.0 833.9L1284.3 836.1M1300.4 834.0L1299.4 836.0M1316.2 832.5L1315.3 836.5M1317.7 834.7L1315.6 834.3M1331.4 832.5L1333.2 836.2M1333.3 833.4L1332.1 835.4M1348.2 832.9L1349.4 836.4M1349.2 833.9L1347.3 835.4M1365.6 833.5L1364.6 835.8M1365.3 834.7L1364.0 834.6M1380.7 833.6L1380.5 836.0M1382.5 834.9L1380.4 834.7M1397.3 834.1L1398.1 836.2M1399.6 834.4L1397.5 835.8M1006.6 846.8L1006.7 850.4M1008.4 848.0L1006.9 849.3M1024.5 847.3L1023.6 850.8M1040.9 846.2L1040.2 850.1M1056.6 847.3L1055.4 850.4M1072.3 847.4L1072.1 849.7M1090.6 845.9L1086.7 850.9M1089.6 849.2L1087.7 847.6M1089.6 847.2L1087.7 849.6M1106.8 845.5L1103.0 851.3M1105.9 849.1L1103.9 847.7M1105.7 847.1L1104.1 849.7M1122.2 849.0L1120.1 847.8M1121.9 847.1L1120.4 849.7M1139.3 849.2L1135.5 847.6M1138.0 847.0L1136.8 849.8M1155.6 849.1L1151.7 847.7M1154.1 847.0L1153.2 849.8M1172.0 848.8L1167.8 848.0M1170.2 846.9L1169.6 849.9M1188.2 848.6L1184.1 848.2M1186.3 846.9L1186.0 849.9M1204.5 848.4L1200.3 848.4M1202.4 846.9L1202.4 849.9M1220.7 848.2L1216.6 848.6M1218.5 846.9L1218.8 849.9M1237.0 848.0L1232.8 848.8M1234.6 846.9L1235.2 849.9M1253.1 847.7L1249.2 849.1M1250.7 847.0L1251.6 849.8M1269.3 847.6L1265.5 849.2M1266.8 847.0L1268.0 849.8M1284.7 847.8L1282.6 849.0M1282.9 847.1L1284.4 849.7M1298.0 845.5L1301.8 851.3M1300.9 847.7L1298.9 849.1M1299.1 847.1L1300.7 849.7M1315.9 846.7L1315.5 849.8M1317.3 848.4L1315.5 848.1M1332.1 846.6L1331.3 848.7M1349.1 847.0L1348.4 849.2M1349.7 847.6L1347.6 848.6M1363.7 846.3L1365.2 849.4M1365.6 847.1L1363.8 848.6M1381.4 847.2L1382.4 850.2M1381.8 848.0L1380.1 849.4M1396.6 846.3L1397.2 849.8M1007.4 860.2L1007.8 864.0M1023.3 861.2L1022.7 863.6M1024.1 862.5L1022.4 862.2M1040.6 860.4L1039.4 864.3M1041.4 862.0L1039.3 862.6M1056.9 860.6L1056.4 863.2M1073.2 860.6L1073.1 864.4M1074.8 862.4L1073.1 862.5M1090.5 859.1L1086.8 864.3M1089.7 862.4L1087.6 861.0M1089.5 860.5L1087.8 862.9M1106.7 858.7L1103.1 864.7M1106.0 862.3L1103.8 861.1M1105.7 860.4L1104.1 863.0M1122.3 862.3L1120.0 861.1M1121.8 860.4L1120.5 863.0M1139.3 862.5L1135.5 860.9M1138.0 860.3L1136.8 863.1M1155.7 862.3L1151.6 861.1M1154.1 860.3L1153.2 863.1M1172.0 862.1L1167.8 861.3M1170.2 860.2L1169.6 863.2M1188.2 861.9L1184.1 861.5M1186.3 860.2L1186.0 863.2M1204.5 861.7L1200.3 861.7M1202.4 860.2L1202.4 863.2M1220.7 861.5L1216.6 861.9M1218.5 860.2L1218.8 863.2M1237.0 861.3L1232.8 862.1M1234.6 860.2L1235.2 863.2M1253.2 861.1L1249.1 862.3M1250.7 860.3L1251.6 863.1M1269.3 860.9L1265.5 862.5M1266.8 860.3L1268.0 863.1M1284.8 861.1L1282.5 862.3M1283.0 860.4L1284.3 863.0M1298.1 858.7L1301.7 864.7M1301.0 861.1L1298.8 862.3M1299.1 860.4L1300.7 863.0M1316.5 860.5L1316.0 862.8M1332.8 861.2L1331.7 863.7M1332.7 862.4L1330.3 862.4M1349.1 860.4L1349.5 862.9M1365.9 860.0L1365.3 862.2M1365.9 861.2L1364.2 861.1M1380.2 860.2L1381.6 863.6M1381.4 861.3L1380.5 862.5M1397.3 860.1L1397.6 863.1M1007.1 872.8L1006.6 876.3M1024.7 873.9L1023.7 876.4M1040.1 874.3L1040.7 877.0M1056.2 874.7L1055.2 876.9M1056.8 875.7L1055.5 875.9M1073.3 873.7L1072.6 876.0M1074.0 874.5L1072.6 875.2M1090.4 872.3L1086.9 877.7M1089.7 875.7L1087.6 874.3M1089.5 873.7L1087.8 876.3M1106.6 872.0L1103.2 878.0M1106.0 875.6L1103.8 874.4M1105.6 873.7L1104.2 876.3M1122.3 875.5L1120.0 874.5M1121.8 873.6L1120.5 876.4M1139.4 875.7L1135.4 874.3M1137.9 873.6L1136.9 876.4M1155.7 875.6L1151.6 874.4M1154.1 873.6L1153.2 876.4M1172.0 875.4L1167.8 874.6M1170.2 873.5L1169.6 876.5M1188.2 875.2L1184.1 874.8M1186.3 873.5L1186.0 876.5M1204.5 875.0L1200.3 875.0M1202.4 873.5L1202.4 876.5M1220.7 874.8L1216.6 875.2M1218.5 873.5L1218.8 876.5M1237.0 874.6L1232.8 875.4M1234.6 873.5L1235.2 876.5M1253.2 874.4L1249.1 875.6M1250.7 873.6L1251.6 876.4M1269.4 874.3L1265.4 875.7M1266.9 873.6L1267.9 876.4M1284.8 874.5L1282.5 875.5M1283.0 873.6L1284.3 876.4M1298.2 872.0L1301.6 878.0M1301.0 874.4L1298.8 875.6M1299.2 873.7L1300.6 876.3M1317.2 873.3L1315.4 876.7M1318.2 875.4L1316.0 874.7M1333.7 873.0L1332.1 876.7M1348.9 873.6L1349.2 877.2M1349.3 875.1L1348.2 875.7M1364.8 873.9L1364.5 876.5M1381.7 873.1L1381.2 876.4M1397.5 874.0L1397.0 877.6M1008.4 885.1L1008.0 888.8M1008.6 886.5L1007.4 887.4M1023.0 885.1L1023.9 889.0M1040.1 886.4L1039.8 890.5M1056.8 885.2L1056.5 888.9M1058.3 886.5L1056.7 887.5M1072.0 886.5L1071.7 888.8M1089.5 886.3L1087.8 889.1M1105.6 886.3L1104.2 889.1M1121.8 886.2L1120.5 889.2M1137.9 886.2L1136.9 889.2M1154.1 886.2L1153.2 889.2M1170.2 886.1L1169.6 889.3M1186.3 886.1L1186.0 889.3M1202.4 886.1L1202.4 889.3M1218.5 886.1L1218.8 889.3M1234.6 886.1L1235.2 889.3M1250.7 886.2L1251.6 889.2M1266.9 886.2L1267.9 889.2M1283.0 886.2L1284.3 889.2M1299.2 886.3L1300.6 889.1M1316.2 886.3L1315.9 889.2M1317.1 887.6L1315.6 887.9M1332.1 886.2L1333.4 888.6M1332.8 886.8L1331.4 887.9M1348.4 886.2L1350.2 890.0M1364.1 886.8L1364.3 889.9M1381.5 886.1L1380.0 889.4M1382.7 888.1L1380.7 887.4M1396.7 886.6L1396.8 889.2M1397.5 887.3L1396.2 888.5M1007.3 899.9L1008.1 903.2M1009.3 900.8L1007.1 902.2M1024.1 900.8L1024.7 903.1M1040.2 900.4L1040.5 903.2M1056.5 899.9L1056.0 903.6M1057.0 901.9L1054.5 901.6M1072.4 899.6L1073.6 902.1M1073.7 900.0L1072.8 901.7M1089.2 900.6L1088.1 902.6M1089.6 902.1L1087.7 901.1M1105.4 900.5L1104.4 902.7M1105.9 902.1L1103.9 901.1M1121.6 900.5L1120.7 902.7M1122.2 902.0L1120.1 901.2M1137.8 900.5L1137.0 902.7M1138.4 901.9L1136.4 901.3M1153.9 900.4L1153.4 902.8M1154.7 901.9L1152.6 901.3M1170.1 900.4L1169.7 902.8M1171.0 901.8L1168.8 901.4M1186.2 900.4L1186.1 902.8M1187.2 901.7L1185.1 901.5M1202.4 900.4L1202.4 902.8M1203.5 901.6L1201.3 901.6M1218.6 900.4L1218.7 902.8M1219.7 901.5L1217.6 901.7M1234.7 900.4L1235.1 902.8M1236.0 901.4L1233.8 901.8M1250.9 900.4L1251.4 902.8M1252.2 901.3L1250.1 901.9M1267.0 900.5L1267.8 902.7M1268.4 901.3L1266.4 901.9M1283.2 900.5L1284.1 902.7M1284.7 901.2L1282.6 902.0M1299.4 900.5L1300.4 902.7M1300.9 901.1L1298.9 902.1M1315.8 899.3L1315.2 902.6M1331.8 900.2L1332.6 902.9M1348.5 899.1L1349.9 902.7M1365.2 899.8L1365.4 902.5M1381.6 900.6L1380.3 903.1M1397.7 900.8L1397.9 903.7M1399.0 901.8L1398.1 902.7M1007.8 913.2L1007.2 916.0M1023.2 913.0L1022.8 915.3M1024.2 914.1L1022.6 914.2M1039.7 912.9L1039.0 915.8M1041.0 914.3L1038.5 914.5M1056.7 913.4L1057.0 917.2M1057.6 914.6L1055.4 915.9M1072.8 912.7L1073.2 915.6M1073.4 913.8L1072.2 914.6M1089.2 913.5L1088.1 915.7M1105.4 913.5L1104.4 915.7M1121.6 913.5L1120.7 915.7M1137.7 913.5L1137.1 915.7M1153.9 913.4L1153.4 915.8M1170.1 913.4L1169.7 915.8M1186.2 913.4L1186.1 915.8M1202.4 913.4L1202.4 915.8M1218.6 913.4L1218.7 915.8M1234.7 913.4L1235.1 915.8M1250.9 913.4L1251.4 915.8M1267.1 913.5L1267.7 915.7M1283.2 913.5L1284.1 915.7M1299.4 913.5L1300.4 915.7M1316.3 913.1L1316.2 917.0M1332.4 913.7L1331.4 916.3M1332.9 915.1L1330.9 915.0M1349.7 913.7L1349.0 916.0M1364.6 912.3L1366.1 915.6M1379.8 913.1L1381.1 916.5M1397.4 912.6L1396.6 915.7M1008.0 928.2L1006.4 931.3M1008.4 930.0L1006.3 929.4M1024.9 928.2L1023.7 931.5M1041.2 928.6L1039.6 932.4M1056.6 928.9L1055.7 931.8M1056.8 930.5L1054.2 930.2M1071.8 928.0L1072.6 930.9M1073.6 928.8L1072.7 930.2M1089.2 928.9L1088.1 931.1M1105.4 928.9L1104.4 931.1M1121.5 928.9L1120.8 931.1M1137.7 928.8L1137.1 931.2M1153.9 928.8L1153.4 931.2M1170.1 928.8L1169.7 931.2M1186.2 928.8L1186.1 931.2M1202.4 928.8L1202.4 931.2M1218.6 928.8L1218.7 931.2M1234.7 928.8L1235.1 931.2M1250.9 928.8L1251.4 931.2M1267.1 928.8L1267.7 931.2M1283.3 928.9L1284.0 931.1M1299.4 928.9L1300.4 931.1M1315.9 929.0L1315.2 931.5M1316.7 930.2L1314.2 930.3M1331.2 928.1L1332.1 930.6M1332.7 928.9L1331.5 929.8M1347.5 927.9L1348.7 931.4M1349.1 929.2L1347.4 930.1M1365.1 929.3L1363.9 931.9M1381.6 928.9L1382.2 931.1M1397.9 928.2L1397.8 931.4M1399.6 929.7L1398.1 930.0M1006.4 945.1L1006.9 948.8M1023.3 945.1L1024.3 947.8M1025.4 945.8L1023.8 947.1M1040.7 945.4L1040.6 947.9M1056.0 945.7L1054.7 949.3M1055.6 947.6L1054.2 947.4M1073.1 945.4L1071.6 948.5M1089.2 945.9L1088.1 948.1M1105.3 945.9L1104.5 948.1M1121.5 945.9L1120.8 948.1M1137.7 945.8L1137.1 948.2M1153.9 945.8L1153.4 948.2M1170.1 945.8L1169.7 948.2M1186.2 945.8L1186.1 948.2M1202.4 945.8L1202.4 948.2M1218.6 945.8L1218.7 948.2M1234.7 945.8L1235.1 948.2M1250.9 945.8L1251.4 948.2M1267.1 945.8L1267.7 948.2M1283.3 945.9L1284.0 948.1M1299.5 945.9L1300.3 948.1M1315.7 945.5L1316.0 949.5M1317.2 946.8L1315.7 948.1M1332.9 945.1L1332.0 947.8M1332.5 946.3L1330.7 946.6M1349.2 945.6L1348.8 948.0M1350.1 947.0L1347.8 946.6M1364.9 944.4L1365.4 948.0M1365.8 945.9L1364.7 946.5M1381.4 945.8L1382.4 949.1M1382.3 947.0L1381.0 948.0M1397.4 945.5L1396.9 948.2M1398.8 946.4L1396.4 947.2M1007.2 961.8L1007.8 965.6M1007.5 962.8L1006.1 964.5M1023.8 960.9L1024.2 964.7M1038.8 961.7L1039.7 964.0M1039.2 962.5L1037.6 963.2M1056.7 961.7L1055.7 965.4M1056.4 963.4L1055.2 963.6M1073.1 961.9L1071.4 965.3M1089.1 962.2L1088.2 964.4M1089.7 963.7L1087.6 962.9M1105.3 962.2L1104.5 964.4M1105.9 963.7L1103.9 962.9M1121.5 962.2L1120.8 964.4M1122.2 963.6L1120.1 963.0M1137.7 962.1L1137.1 964.5M1138.5 963.6L1136.3 963.0M1153.9 962.1L1153.4 964.5M1154.7 963.5L1152.6 963.1M1170.0 962.1L1169.8 964.5M1171.0 963.4L1168.8 963.2M1186.2 962.1L1186.1 964.5M1187.2 963.4L1185.1 963.2M1202.4 962.1L1202.4 964.5M1203.5 963.3L1201.3 963.3M1218.6 962.1L1218.7 964.5M1219.7 963.2L1217.6 963.4M1234.8 962.1L1235.0 964.5M1236.0 963.2L1233.8 963.4M1250.9 962.1L1251.4 964.5M1252.2 963.1L1250.1 963.5M1267.1 962.1L1267.7 964.5M1268.5 963.0L1266.3 963.6M1283.3 962.2L1284.0 964.4M1284.7 963.0L1282.6 963.6M1299.5 962.2L1300.3 964.4M1300.9 962.9L1298.9 963.7M1316.1 961.1L1316.6 964.0M1331.8 961.2L1331.8 965.0M1349.4 960.8L1348.3 964.7M1364.0 961.6L1365.3 965.0M1381.6 962.4L1380.7 964.9M1397.1 961.6L1398.1 964.0M1368.9 793.6L1369.0 794.7M1387.2 787.5L1385.2 788.1M1362.3 811.2L1360.4 812.4M1056.1 805.9L1058.0 808.3M1103.3 799.7L1102.2 800.4M1037.8 784.0L1040.4 785.7M1372.3 801.4L1373.7 803.4M1319.7 783.9L1321.3 785.0M1065.0 794.2L1064.8 795.4M1022.9 802.1L1025.6 803.5M1302.7 803.5L1302.9 806.6M1333.6 807.1L1334.1 808.8M1359.8 797.8L1359.7 799.6M1358.1 792.8L1360.6 793.2M1358.2 803.3L1357.4 805.7M1036.4 786.5L1036.8 788.5M1029.8 802.8L1029.6 804.1M1102.3 785.5L1099.3 786.3M1345.3 795.4L1344.2 796.2M1359.5 786.4L1358.6 787.1M1376.9 783.5L1378.0 784.5M1034.6 808.6L1033.1 809.5M1028.1 784.6L1026.6 785.1M1370.8 810.7L1370.9 812.0M1365.3 808.3L1367.6 809.9M1076.7 808.6L1075.4 808.6M1083.2 808.6L1084.2 808.7M1358.2 807.9L1357.5 808.8M1371.7 796.3L1373.0 796.6M1084.7 788.3L1086.5 789.9M1316.1 793.2L1314.6 795.7M1099.3 792.2L1097.0 792.7M1044.2 810.5L1044.6 812.5M1026.7 800.2L1027.6 801.3M1319.5 785.4L1321.1 787.5M1104.8 791.2L1104.6 792.4M1355.6 811.6L1357.5 811.8M1368.1 797.4L1369.9 798.6M1312.5 797.1L1312.4 799.9M1378.1 788.5L1377.2 789.3M1101.6 795.5L1099.6 797.2M1315.6 789.9L1315.6 791.3M1023.9 799.9L1022.6 801.6M1346.9 788.8L1347.6 789.2M1319.5 785.7L1317.4 786.3M1315.1 790.3L1316.5 791.0M1026.4 791.8L1025.6 793.8M1043.2 806.6L1044.4 807.3M1072.6 802.7L1070.3 804.0M1033.0 794.9L1033.5 796.1M1385.0 783.9L1385.0 786.5M1390.9 786.8L1391.2 789.3M1025.3 790.5L1024.2 790.9M1040.5 784.9L1037.9 785.0M1098.6 790.4L1098.4 791.8M1369.5 792.8L1371.0 795.6M1025.2 794.9L1024.7 795.7M1344.9 800.2L1343.1 800.9M1336.2 794.3L1335.2 795.1M1080.1 799.1L1081.2 799.7M1092.0 796.3L1093.1 797.9M1394.4 802.7L1393.2 803.3M1037.4 802.7L1038.1 804.0M1016.2 788.5L1017.4 789.7M1366.3 803.4L1367.4 804.6M1068.4 809.0L1069.5 811.4M1360.0 783.8L1360.9 785.3M1041.1 807.6L1042.5 809.8M1030.5 794.7L1031.2 795.3M1067.2 800.6L1068.7 800.7M1061.3 802.9L1063.1 804.7M1065.7 788.8L1067.3 790.7M1344.1 789.7L1345.1 791.0M1091.9 785.1L1094.2 785.2M1321.7 810.3L1323.1 812.3M1365.8 789.1L1364.4 791.0M1378.2 807.5L1379.9 809.1M1044.2 795.5L1044.5 796.4M1070.9 794.7L1071.0 795.9M1101.9 785.8L1102.8 787.4M1068.6 799.5L1067.3 801.2M1018.3 794.5L1018.7 795.4M1031.0 796.9L1030.5 798.8M1106.9 783.4L1108.3 786.0M1082.1 795.7L1081.0 798.6M1374.6 804.5L1373.7 806.7M1330.0 807.2L1331.0 810.0M1024.4 787.0L1024.3 788.6M1386.9 787.8L1388.0 788.6M1100.4 783.2L1100.2 784.9M1102.7 796.9L1101.7 798.8M1330.7 810.4L1331.5 811.8M1353.2 791.8L1351.7 793.7M1381.4 806.5L1383.4 807.6M1101.0 790.5L1101.6 791.5M1057.8 785.7L1058.8 785.9M1054.0 796.0L1052.5 797.3M1072.9 808.1L1072.1 808.4M1108.5 797.7L1107.1 798.7M1106.6 803.4L1107.4 804.7M1304.2 807.0L1302.4 808.2M1330.2 806.1L1331.8 806.8M1097.9 789.1L1100.1 789.2M1372.5 810.7L1374.7 811.7M1369.4 811.5L1371.9 811.9M1054.6 784.2L1056.2 786.2M1393.7 787.0L1394.2 787.7M1318.7 806.8L1319.8 808.2M1305.2 810.3L1306.1 812.6M1318.7 787.8L1319.6 788.4M1370.7 790.5L1370.7 791.6M1016.0 799.3L1018.1 800.3M1097.3 796.9L1097.9 798.2M1030.1 785.5L1028.7 786.1M1039.8 787.5L1040.0 790.7M1087.8 807.4L1087.9 809.2M1320.7 794.9L1322.8 795.3M1373.7 808.2L1371.8 808.2M1331.7 804.1L1332.5 804.5M1074.1 787.1L1075.7 787.5M1301.1 792.3L1301.1 793.1M1089.9 810.8L1091.9 810.9M1323.5 805.5L1322.4 806.8M1321.4 806.1L1319.1 808.2M1048.2 809.4L1049.0 811.8M1105.4 809.4L1107.6 809.6M1097.0 793.8L1098.0 796.0M1323.5 793.5L1322.9 795.0M1358.9 792.8L1360.5 793.2M1060.6 900.9L1060.1 901.6M1321.8 844.4L1322.9 844.5M1012.9 819.1L1013.5 819.4M1360.5 883.0L1359.6 883.1M1037.0 942.6L1038.1 942.9M1385.3 897.9L1387.0 897.9M1055.2 848.3L1054.6 850.0M1068.7 834.3L1067.6 835.5M1350.1 893.6L1350.6 894.9M1389.7 885.0L1389.3 886.4M1322.6 866.7L1323.6 867.7M1351.3 824.1L1349.7 824.3M1071.4 946.2L1070.5 947.9M1378.0 970.8L1379.8 971.2M1331.8 885.9L1331.6 887.7M1023.2 826.6L1022.9 828.3M1331.4 948.9L1330.4 949.8M1071.1 942.3L1072.0 942.9M1072.7 945.9L1073.5 946.2M1382.4 956.5L1384.3 956.9M1024.3 903.3L1023.2 903.4M1370.1 918.4L1370.8 919.0M1324.5 822.1L1325.1 822.8M1364.6 846.6L1363.0 846.6M1340.8 935.9L1341.4 936.3M1342.0 859.4L1342.7 859.7M1354.5 852.2L1354.3 853.2M1069.2 920.6L1069.4 922.5M1035.5 885.8L1036.7 886.1M1348.5 861.1L1347.7 862.3M1026.9 908.3L1025.8 908.8M1027.8 900.9L1029.5 901.4M1341.6 820.0L1341.2 821.5M1077.0 920.0L1077.6 920.4M1354.0 919.7L1353.4 921.6M1395.3 883.2L1396.3 884.1M1315.7 917.8L1314.2 918.9M1360.0 873.5L1361.0 874.0M1060.8 964.8L1059.8 966.2M1366.7 936.8L1367.9 937.3M1010.5 832.3L1010.9 833.7M1076.3 862.7L1076.2 863.4M1048.1 895.1L1048.8 896.0M1360.6 824.1L1361.5 824.9M1047.8 941.9L1047.8 942.7M1047.8 880.5L1048.6 880.5M1373.5 840.1L1373.4 840.7M1016.9 876.4L1017.4 877.2M1366.8 866.5L1366.8 868.0M1069.8 876.9L1070.7 878.2M1341.5 938.8L1342.1 940.2M1319.4 946.2L1320.7 946.5M1047.3 921.1L1046.9 921.6M1391.9 929.7L1392.4 931.0M1369.1 965.2L1369.7 966.5M1034.8 864.5L1034.8 865.8M1061.4 848.4L1060.9 850.1M1365.4 878.2L1366.4 879.4M1394.6 866.5L1395.5 867.9M1063.5 971.4L1063.5 972.5M1321.0 915.6L1322.9 915.7M1061.1 944.0L1061.1 945.0M1051.6 842.7L1053.1 843.1M1375.2 940.1L1375.6 941.9M1382.2 919.6L1382.1 920.3M1017.2 959.5L1018.2 960.2M1045.9 839.7L1046.7 840.6M1071.6 921.1L1070.3 921.3M1343.8 832.1L1343.2 832.7M1327.7 943.9L1327.2 944.9M1369.6 905.3L1368.6 905.8M1351.8 866.8L1351.2 867.5M1026.6 855.9L1028.3 856.3M1371.5 957.6L1372.3 957.7M1355.3 891.4L1356.5 892.5M1017.0 820.9L1016.2 822.0M1047.9 885.6L1046.8 885.7M1029.7 849.7L1030.8 850.5M1052.2 906.6L1050.4 907.2M1342.3 910.4L1340.6 911.4M1016.8 899.4L1017.5 900.2M1320.5 827.7L1322.2 827.9M1324.0 840.6L1322.3 841.4M1051.7 898.6L1050.8 900.2M1063.2 882.1L1062.0 883.1M1351.0 869.5L1352.1 870.4M1028.2 827.1L1028.0 828.4M1373.5 956.5L1374.8 956.9M1394.6 870.8L1396.3 871.6M1322.9 905.0L1321.4 905.1M1068.3 883.8L1067.9 884.4M1056.7 953.1L1057.5 953.3M1023.5 902.9L1022.1 903.0M1335.7 849.9L1336.2 850.5M1046.9 949.9L1046.3 950.0M1360.4 961.4L1361.7 961.8M1074.6 861.7L1075.8 863.3M1038.0 922.7L1037.9 924.1M1061.9 873.9L1061.0 874.0M1329.9 868.1L1330.2 868.6M1332.3 897.4L1333.0 898.7M1329.8 843.2L1330.7 843.6M1378.1 844.2L1377.3 845.4M1050.0 844.4L1050.7 845.1M1032.2 938.9L1032.1 939.6M1061.9 822.6L1061.8 823.4M1055.3 970.1L1055.5 970.9M1376.8 970.3L1378.3 971.4M1048.3 890.1L1047.8 890.4M1043.4 882.1L1044.0 882.4M1020.1 960.5L1021.0 962.1M1018.6 845.7L1020.0 846.4M1373.4 872.6L1372.1 874.0M1019.8 928.8L1019.4 929.5M1360.4 897.5L1360.2 898.9M1061.5 828.5L1062.0 828.9M1030.4 840.4L1031.1 841.6M1379.1 870.6L1377.9 870.7M1321.9 968.5L1323.6 968.6M1036.7 822.3L1037.3 823.9M1312.1 939.9L1312.1 941.4M1041.9 841.9L1040.9 842.0M1358.8 854.8L1358.3 855.4M1360.2 882.6L1359.9 883.5M1074.7 888.1L1074.4 890.0M1390.8 852.3L1390.6 853.1M1073.8 914.9L1075.0 914.9M1374.7 922.4L1374.1 923.5M1382.8 824.2L1383.6 825.4M1013.8 859.3L1013.9 860.1M1329.6 939.8L1330.9 941.1M1044.0 962.9L1044.1 964.2M1383.0 959.8L1382.3 961.2M1040.8 922.4L1039.5 923.4M1064.9 833.6L1065.0 835.1M1380.2 888.8L1379.5 890.2M1036.5 968.1L1037.4 968.5M1344.2 844.3L1343.2 845.7M1077.3 932.3L1076.7 933.4M1038.2 904.7L1036.7 904.9M1343.8 821.9L1342.6 822.3M1076.6 923.8L1076.6 924.9M1326.7 923.0L1325.7 923.2M1388.9 898.6L1388.6 899.6M1041.4 858.9L1041.3 860.2M1012.4 889.5L1011.7 890.1M1023.1 883.2L1023.4 884.2M1336.4 849.4L1334.7 849.8M1317.3 882.8L1316.4 884.2M1365.3 907.2L1365.5 907.8M1014.8 911.4L1016.4 912.5M1360.8 857.6L1360.2 858.0M1013.2 964.2L1014.0 964.8M1071.8 857.5L1071.1 858.5M1018.7 878.2L1018.0 879.6M1051.8 853.7L1051.6 854.8M1373.8 912.3L1374.6 912.9M1395.5 960.0L1395.0 961.0M1382.6 931.1L1381.8 931.5M1317.7 885.4L1318.2 886.5M1040.1 879.5L1041.1 880.8M1351.3 918.3L1350.6 919.4M1063.9 930.9L1064.8 932.2M1366.9 883.5L1366.4 884.3M1356.3 903.0L1356.9 904.7M1032.7 911.3L1033.6 912.1M1327.2 824.5L1326.8 826.2M1343.9 932.0L1343.7 932.9M1057.1 969.6L1058.6 970.3M1032.0 858.2L1031.7 859.5M1323.9 918.8L1325.0 920.2M1038.4 886.8L1038.2 888.8M1392.1 883.4L1392.7 883.5M1324.4 944.8L1324.7 945.7M1033.9 899.6L1034.3 900.7M1062.6 848.2L1064.5 848.3M1053.1 856.5L1053.2 858.0M1381.2 848.3L1380.3 849.6M1032.8 947.7L1032.5 948.2M1378.6 911.0L1377.6 911.1M1025.7 916.8L1024.0 917.2M1070.5 958.4L1070.0 959.2M1033.4 935.3L1034.4 936.9M1314.3 928.0L1315.9 928.2M1013.3 830.8L1014.4 830.9M1361.6 825.7L1362.1 825.9M1324.6 822.5L1325.9 823.2M1013.0 903.1L1013.5 904.1M1335.0 817.8L1335.5 818.9M1021.3 947.3L1021.5 948.6M1386.6 923.4L1386.6 924.6M1353.8 884.3L1353.3 886.2M1382.8 819.2L1383.2 819.7M1363.2 896.5L1364.0 898.3M1349.9 931.6L1350.1 932.7M1046.7 826.9L1048.1 828.3M1354.1 821.6L1354.8 822.5M1074.4 817.8L1075.4 818.3M1319.6 907.9L1319.5 908.6M1057.7 920.8L1058.6 921.6M1047.4 817.2L1046.2 818.6M1331.7 868.0L1330.3 868.2M1365.4 845.1L1364.7 845.6M1021.3 938.6L1020.6 940.1M1366.5 941.3L1364.9 941.8M1030.8 961.8L1032.1 962.0M1381.4 875.9L1380.9 877.0M1312.8 858.0L1313.3 858.4M1370.7 860.9L1369.4 861.6M1367.7 961.6L1368.0 962.1M1037.4 898.8L1038.0 898.9M1342.8 876.6L1341.3 876.9M1051.7 893.5L1050.7 894.4M1026.2 828.1L1025.6 828.3M1351.0 912.1L1349.8 913.3M1058.7 838.9L1059.3 839.2M1386.0 838.3L1385.5 838.9M1032.7 908.2L1033.3 908.7M1040.0 915.7L1040.8 916.1M1046.5 874.7L1046.0 875.3M1009.8 845.9L1010.1 846.4M1360.3 860.6L1361.2 861.8M1378.4 960.0L1379.8 960.5M1028.3 932.5L1027.0 933.5M1325.8 950.5L1326.3 951.4M1320.1 950.4L1320.7 951.7M1388.2 971.5L1386.9 972.2M1321.6 893.2L1323.2 893.7M1348.1 848.4L1347.0 848.6M1027.6 856.2L1028.2 857.7M1022.8 874.6L1022.3 876.1M1369.3 915.4L1369.5 916.7M1010.9 940.7L1012.0 941.3M1367.9 865.1L1368.2 866.1M1060.8 957.9L1059.9 959.6M1018.8 881.5L1017.6 882.1M1367.8 966.9L1368.5 967.1M1349.8 921.8L1349.6 923.6M1034.4 890.0L1035.7 890.5M1324.1 835.2L1323.6 836.8M1320.5 953.2L1320.3 954.6M1369.1 860.3L1367.9 861.3M1310.9 948.0L1311.0 949.9M1020.2 871.7L1020.5 872.4M1075.2 886.2L1075.2 887.9M1390.0 960.2L1389.1 961.7M1321.1 899.1L1319.2 899.3M1040.4 909.5L1039.5 910.3M1029.4 929.6L1030.2 929.7M1019.6 954.7L1019.1 955.1M1329.0 844.5L1328.0 844.6M1370.6 937.6L1371.2 937.8M1054.6 945.1L1053.8 945.4M1336.7 848.2L1336.4 848.8M1073.4 865.3L1072.2 866.7M1064.1 836.9L1063.8 838.8M1331.6 952.0L1331.4 952.9M1025.8 888.2L1026.5 888.4M1381.4 947.6L1381.4 948.5M1015.3 835.5L1014.4 836.6M1376.8 878.9L1376.3 880.0M1341.2 870.2L1342.0 871.8M1368.6 875.8L1368.2 876.7M1030.8 959.3L1031.5 960.2M1018.1 898.9L1017.1 899.7M1316.6 962.5L1315.0 963.6M1336.8 819.9L1336.0 821.5M1031.1 881.2L1032.7 881.6M1330.7 909.1L1331.1 909.7M1039.3 871.9L1037.5 872.3M1049.2 842.9L1048.6 844.1M1363.5 969.8L1363.1 971.6M1075.6 889.3L1074.4 890.3M1356.4 941.0L1355.2 942.4M1380.7 830.3L1381.3 830.6M1392.5 833.6L1393.2 833.9M1364.0 831.6L1364.6 832.7M1042.7 826.2L1043.8 827.4M1367.9 866.7L1367.3 867.8M1314.7 832.5L1315.5 832.8M1045.5 965.5L1046.6 966.4M1351.8 843.2L1350.5 844.4M1073.5 872.1L1073.9 873.9M1015.3 957.5L1016.3 957.8M1356.4 883.6L1356.5 884.8M1349.6 967.2L1349.1 967.9M1046.3 901.6L1044.8 902.1M1024.7 864.9L1025.2 865.9M1360.6 868.2L1361.5 868.8M1040.3 928.7L1039.7 929.2M1022.2 930.4L1022.9 931.4M1350.3 961.6L1351.3 961.8M1033.5 842.7L1032.6 842.7M1319.8 956.8L1321.2 957.2M1317.6 950.7L1317.5 951.3M1334.4 878.0L1336.1 878.4M1345.4 929.7L1345.8 930.5M1313.8 857.4L1315.0 858.9M1341.6 920.6L1342.2 921.8M1035.7 816.9L1035.1 817.5" stroke="#ff2010" stroke-width="0.7" fill="none"/><path d="M1007.9 815.2l1.5 3.6l-1.5 3.6l-1.5 -3.6ZM1024.2 815.2l1.5 3.6l-1.5 3.6l-1.5 -3.6ZM1040.3 815.2l1.5 3.6l-1.5 3.6l-1.5 -3.6ZM1056.4 815.2l1.5 3.6l-1.5 3.6l-1.5 -3.6ZM1333.2 818.6l1.5 3.6l-1.5 3.6l-1.5 -3.6ZM1349.3 818.6l1.5 3.6l-1.5 3.6l-1.5 -3.6ZM1381.3 818.6l1.5 3.6l-1.5 3.6l-1.5 -3.6ZM1397.6 818.6l1.5 3.6l-1.5 3.6l-1.5 -3.6ZM1009 799l1.2 3.2l-1.2 3.2l-1.2 -3.2ZM1022 799l1.2 3.2l-1.2 3.2l-1.2 -3.2ZM1040 799l1.2 3.2l-1.2 3.2l-1.2 -3.2ZM1054 799l1.2 3.2l-1.2 3.2l-1.2 -3.2Z" fill="#ff1a10"/><path d="M1123.2 805 l4.4 0 l-2.2 5.4 Z M1179.5 805 l4.4 0 l-2.2 5.4 Z M1262 805 l4.4 0 l-2.2 5.4 Z" fill="#9a9a9a"/><rect x="1027.00" y="780.40" width="3" height="41.60" fill="#a8a800"/><rect x="1027.00" y="822.00" width="3" height="16.00" fill="#ff1010"/><rect x="1027.00" y="838.00" width="3" height="52.50" fill="#d08a10"/><rect x="1027.00" y="890.50" width="3" height="85.50" fill="#b4b4b4"/><rect x="1067.40" y="780.40" width="3" height="37.60" fill="#a8a800"/><rect x="1067.40" y="818.00" width="3" height="15.70" fill="#ff1010"/><rect x="1067.40" y="833.70" width="3" height="56.80" fill="#d08a10"/><rect x="1067.40" y="890.50" width="3" height="85.50" fill="#b4b4b4"/><rect x="1315.60" y="780.40" width="3" height="40.90" fill="#a8a800"/><rect x="1315.60" y="821.30" width="3" height="15.70" fill="#ff1010"/><rect x="1315.60" y="837.00" width="3" height="50.00" fill="#d08a10"/><rect x="1315.60" y="887.00" width="3" height="89.00" fill="#b4b4b4"/><rect x="1363.40" y="780.40" width="3" height="49.20" fill="#a8a800"/><rect x="1363.40" y="829.60" width="3" height="8.40" fill="#ff1010"/><rect x="1363.40" y="838.00" width="3" height="49.00" fill="#d08a10"/><rect x="1363.40" y="887.00" width="3" height="89.00" fill="#b4b4b4"/><rect x="1392.60" y="780.40" width="3" height="33.40" fill="#a8a800"/><rect x="1392.60" y="813.80" width="3" height="12.20" fill="#ff1010"/><rect x="1392.60" y="826.00" width="3" height="61.00" fill="#d08a10"/><rect x="1392.60" y="887.00" width="3" height="89.00" fill="#b4b4b4"/><circle cx="1193.8" cy="828.5" r="2.7" fill="#1a9af0"/><circle cx="1198.7" cy="862.2" r="2.7" fill="#1a9af0"/><circle cx="1204.3" cy="932.2" r="2.7" fill="#1a9af0"/><text x="1108.70" y="776.00" font-size="8" textLength="31.50" lengthAdjust="spacingAndGlyphs" fill="#80808c">Section 1</text><text x="1165.70" y="776.00" font-size="8" textLength="33.40" lengthAdjust="spacingAndGlyphs" fill="#80808c">Section 2</text><text x="984.60" y="695.90" font-size="6.8" textLength="56.00" lengthAdjust="spacingAndGlyphs" fill="#222" stroke="#222" stroke-width="0.22">RC1 - CO2/p - LC5/p</text><text x="984.60" y="703.70" font-size="6.8" textLength="36.00" lengthAdjust="spacingAndGlyphs" fill="#222" stroke="#222" stroke-width="0.22">Static Analysis</text><text><tspan x="984.60" y="711.70" font-size="6.8" textLength="72.55" lengthAdjust="spacingAndGlyphs" fill="#222" stroke="#222" stroke-width="0.22">Solids | Principal Stresses σ</tspan> <tspan x="1057.35" y="713.00" font-size="4.22" textLength="6.04" lengthAdjust="spacingAndGlyphs" fill="#222" stroke="#222" stroke-width="0.22">123</tspan> <tspan x="1065.31" y="711.70" font-size="6.8" textLength="18.79" lengthAdjust="spacingAndGlyphs" fill="#222" stroke="#222" stroke-width="0.22">[kN/m²]</tspan></text><text><tspan x="984.60" y="718.90" font-size="6.8" textLength="41.30" lengthAdjust="spacingAndGlyphs" fill="#222" stroke="#222" stroke-width="0.22">Displacements u</tspan> <tspan x="1026.10" y="720.20" font-size="4.22" textLength="1.73" lengthAdjust="spacingAndGlyphs" fill="#222" stroke="#222" stroke-width="0.22">z</tspan> <tspan x="1029.69" y="718.90" font-size="6.8" textLength="12.41" lengthAdjust="spacingAndGlyphs" fill="#222" stroke="#222" stroke-width="0.22">[mm]</tspan></text><text x="1421.00" y="696.00" font-size="6.8" textLength="36.00" lengthAdjust="spacingAndGlyphs" fill="#222" text-anchor="end" stroke="#222" stroke-width="0.22">In direction +X</text><text><tspan x="984.60" y="1007.30" font-size="6.8" textLength="38.26" lengthAdjust="spacingAndGlyphs" fill="#222" stroke="#222" stroke-width="0.22">Solids | max σ</tspan> <tspan x="1023.06" y="1008.60" font-size="4.22" textLength="6.27" lengthAdjust="spacingAndGlyphs" fill="#222" stroke="#222" stroke-width="0.22">123</tspan> <tspan x="1031.31" y="1007.30" font-size="6.8" textLength="31.87" lengthAdjust="spacingAndGlyphs" fill="#222" stroke="#222" stroke-width="0.22">: 7.9 | min σ</tspan> <tspan x="1063.38" y="1008.60" font-size="4.22" textLength="6.27" lengthAdjust="spacingAndGlyphs" fill="#222" stroke="#222" stroke-width="0.22">123</tspan> <tspan x="1071.63" y="1007.30" font-size="6.8" textLength="34.97" lengthAdjust="spacingAndGlyphs" fill="#222" stroke="#222" stroke-width="0.22">: -62.4 kN/m²</tspan></text><text><tspan x="984.60" y="1014.90" font-size="6.8" textLength="3.19" lengthAdjust="spacingAndGlyphs" fill="#222" stroke="#222" stroke-width="0.22">u</tspan> <tspan x="987.99" y="1016.20" font-size="4.22" textLength="1.78" lengthAdjust="spacingAndGlyphs" fill="#222" stroke="#222" stroke-width="0.22">z</tspan> <tspan x="991.67" y="1014.90" font-size="6.8" textLength="50.43" lengthAdjust="spacingAndGlyphs" fill="#222" stroke="#222" stroke-width="0.22">: No selected object</tspan></text><path d="M1362.6 1006 V1014 M1420.6 1006 V1014 M1362.6 1010 H1420.6" stroke="#444" stroke-width="0.7" fill="none"/><text x="1391.60" y="1004.60" font-size="6.8" textLength="20.00" lengthAdjust="spacingAndGlyphs" fill="#222" text-anchor="middle" stroke="#222" stroke-width="0.22">7.199 m</text><rect x="1426.4" y="688.3" width="96.4" height="167" fill="#fff" stroke="#a6a6a6" stroke-width="1"/><text x="1430.20" y="697.20" font-size="6.8" textLength="89.50" lengthAdjust="spacingAndGlyphs" fill="#222" stroke="#222" stroke-width="0.22">Solids | Stresses | Principal Stresses</text><text><tspan x="1430.20" y="705.60" font-size="6.8" textLength="3.95" lengthAdjust="spacingAndGlyphs" fill="#222" stroke="#222" stroke-width="0.22">σ</tspan> <tspan x="1434.35" y="706.90" font-size="4.22" textLength="6.63" lengthAdjust="spacingAndGlyphs" fill="#222" stroke="#222" stroke-width="0.22">123</tspan> <tspan x="1443.06" y="705.60" font-size="6.8" textLength="20.64" lengthAdjust="spacingAndGlyphs" fill="#222" stroke="#222" stroke-width="0.22">[kN/m²]</tspan></text><rect x="1455.4" y="713.70" width="23.4" height="12.399999999999999" fill="#b40000"/><rect x="1455.4" y="725.90" width="23.4" height="12.399999999999999" fill="#ff0000"/><path d="M1455.4 725.90 h23.4" stroke="#fff" stroke-width="0.5" opacity="0.7"/><rect x="1455.4" y="738.10" width="23.4" height="12.399999999999999" fill="#ffa500"/><path d="M1455.4 738.10 h23.4" stroke="#fff" stroke-width="0.5" opacity="0.7"/><rect x="1455.4" y="750.30" width="23.4" height="12.399999999999999" fill="#d2d200"/><path d="M1455.4 750.30 h23.4" stroke="#fff" stroke-width="0.5" opacity="0.7"/><rect x="1455.4" y="762.50" width="23.4" height="12.399999999999999" fill="#ffff00"/><path d="M1455.4 762.50 h23.4" stroke="#fff" stroke-width="0.5" opacity="0.7"/><rect x="1455.4" y="774.70" width="23.4" height="12.399999999999999" fill="#00ff00"/><path d="M1455.4 774.70 h23.4" stroke="#fff" stroke-width="0.5" opacity="0.7"/><rect x="1455.4" y="786.90" width="23.4" height="12.399999999999999" fill="#00e47a"/><path d="M1455.4 786.90 h23.4" stroke="#fff" stroke-width="0.5" opacity="0.7"/><rect x="1455.4" y="799.10" width="23.4" height="12.399999999999999" fill="#00f2f2"/><path d="M1455.4 799.10 h23.4" stroke="#fff" stroke-width="0.5" opacity="0.7"/><rect x="1455.4" y="811.30" width="23.4" height="12.399999999999999" fill="#009bff"/><path d="M1455.4 811.30 h23.4" stroke="#fff" stroke-width="0.5" opacity="0.7"/><rect x="1455.4" y="823.50" width="23.4" height="12.399999999999999" fill="#0000ff"/><path d="M1455.4 823.50 h23.4" stroke="#fff" stroke-width="0.5" opacity="0.7"/><rect x="1455.4" y="835.70" width="23.4" height="12.399999999999999" fill="#0000a0"/><path d="M1455.4 835.70 h23.4" stroke="#fff" stroke-width="0.5" opacity="0.7"/><text x="1452.80" y="716.30" font-size="6.8" textLength="8.41" lengthAdjust="spacingAndGlyphs" fill="#222" text-anchor="end" stroke="#222" stroke-width="0.22">7.9</text><text x="1452.80" y="728.50" font-size="6.8" textLength="8.41" lengthAdjust="spacingAndGlyphs" fill="#222" text-anchor="end" stroke="#222" stroke-width="0.22">1.5</text><text x="1452.80" y="740.70" font-size="6.8" textLength="10.43" lengthAdjust="spacingAndGlyphs" fill="#222" text-anchor="end" stroke="#222" stroke-width="0.22">-4.8</text><text x="1452.80" y="752.90" font-size="6.8" textLength="13.35" lengthAdjust="spacingAndGlyphs" fill="#222" text-anchor="end" stroke="#222" stroke-width="0.22">-11.2</text><text x="1452.80" y="765.10" font-size="6.8" textLength="13.79" lengthAdjust="spacingAndGlyphs" fill="#222" text-anchor="end" stroke="#222" stroke-width="0.22">-17.6</text><text x="1452.80" y="777.30" font-size="6.8" textLength="13.79" lengthAdjust="spacingAndGlyphs" fill="#222" text-anchor="end" stroke="#222" stroke-width="0.22">-24.0</text><text x="1452.80" y="789.50" font-size="6.8" textLength="13.79" lengthAdjust="spacingAndGlyphs" fill="#222" text-anchor="end" stroke="#222" stroke-width="0.22">-30.4</text><text x="1452.80" y="801.70" font-size="6.8" textLength="13.79" lengthAdjust="spacingAndGlyphs" fill="#222" text-anchor="end" stroke="#222" stroke-width="0.22">-36.8</text><text x="1452.80" y="813.90" font-size="6.8" textLength="13.79" lengthAdjust="spacingAndGlyphs" fill="#222" text-anchor="end" stroke="#222" stroke-width="0.22">-43.2</text><text x="1452.80" y="826.10" font-size="6.8" textLength="13.79" lengthAdjust="spacingAndGlyphs" fill="#222" text-anchor="end" stroke="#222" stroke-width="0.22">-49.6</text><text x="1452.80" y="838.30" font-size="6.8" textLength="13.79" lengthAdjust="spacingAndGlyphs" fill="#222" text-anchor="end" stroke="#222" stroke-width="0.22">-56.0</text><text x="1452.80" y="850.50" font-size="6.8" textLength="13.79" lengthAdjust="spacingAndGlyphs" fill="#222" text-anchor="end" stroke="#222" stroke-width="0.22">-62.4</text><text x="1504.40" y="722.60" font-size="6.8" textLength="18.63" lengthAdjust="spacingAndGlyphs" fill="#222" text-anchor="end" stroke="#222" stroke-width="0.22">0.39 %</text><text x="1504.40" y="734.80" font-size="6.8" textLength="21.96" lengthAdjust="spacingAndGlyphs" fill="#222" text-anchor="end" stroke="#222" stroke-width="0.22">17.53 %</text><text x="1504.40" y="747.00" font-size="6.8" textLength="21.96" lengthAdjust="spacingAndGlyphs" fill="#222" text-anchor="end" stroke="#222" stroke-width="0.22">32.05 %</text><text x="1504.40" y="759.20" font-size="6.8" textLength="21.96" lengthAdjust="spacingAndGlyphs" fill="#222" text-anchor="end" stroke="#222" stroke-width="0.22">21.96 %</text><text x="1504.40" y="771.40" font-size="6.8" textLength="21.96" lengthAdjust="spacingAndGlyphs" fill="#222" text-anchor="end" stroke="#222" stroke-width="0.22">16.88 %</text><text x="1504.40" y="783.60" font-size="6.8" textLength="18.63" lengthAdjust="spacingAndGlyphs" fill="#222" text-anchor="end" stroke="#222" stroke-width="0.22">7.89 %</text><text x="1504.40" y="795.80" font-size="6.8" textLength="18.63" lengthAdjust="spacingAndGlyphs" fill="#222" text-anchor="end" stroke="#222" stroke-width="0.22">2.32 %</text><text x="1504.40" y="808.00" font-size="6.8" textLength="18.63" lengthAdjust="spacingAndGlyphs" fill="#222" text-anchor="end" stroke="#222" stroke-width="0.22">0.60 %</text><text x="1504.40" y="820.20" font-size="6.8" textLength="18.63" lengthAdjust="spacingAndGlyphs" fill="#222" text-anchor="end" stroke="#222" stroke-width="0.22">0.24 %</text><text x="1504.40" y="832.40" font-size="6.8" textLength="18.63" lengthAdjust="spacingAndGlyphs" fill="#222" text-anchor="end" stroke="#222" stroke-width="0.22">0.06 %</text><text x="1504.40" y="844.60" font-size="6.8" textLength="18.63" lengthAdjust="spacingAndGlyphs" fill="#222" text-anchor="end" stroke="#222" stroke-width="0.22">0.08 %</text><rect x="1395" y="1040" width="104" height="10" fill="#f1f8fd"/><path d="M981.5 1039.3 H1499.5" stroke="#333" stroke-width="1.3"/><path d="M981.9 1039 V1050 M1077.8 1039 V1050 M1394.6 1039 V1050 M1499.2 1039 V1050" stroke="#222" stroke-width="1"/><rect x="1078.4" y="1040" width="4.2" height="4.2" fill="#e8961e"/><rect x="1078.4" y="1044.6" width="4.2" height="5" fill="#e6f1fa"/><text x="1030.50" y="1046.80" font-size="6.8" textLength="43.00" lengthAdjust="spacingAndGlyphs" font-weight="bold" fill="#222" text-anchor="middle" stroke="#222" stroke-width="0.22">www.dlubal.com</text><text x="1095.00" y="1046.80" font-size="6.8" textLength="148.00" lengthAdjust="spacingAndGlyphs" fill="#222" stroke="#222" stroke-width="0.22">RFEM 6.02.0016 - General 3D structures solved using FEM</text><ellipse cx="1513.3" cy="1044.8" rx="10" ry="10.5" fill="#1b2f7e"/><rect x="1507.1" y="1039.6" width="12.4" height="3.6" fill="#fff"/><rect x="1507.1" y="1044.2" width="12.4" height="1.6" fill="#fff"/><path d="M1510.8 1039.8 V1045.3999999999999 M1510.8 1039.8 L1517.8 1043.0 M1510.7 1039.8 L1507.8 1043.0" stroke="#1b2f7e" stroke-width="0.6" fill="none"/><text x="1507.10" y="1050.40" font-size="4.2" textLength="12.40" lengthAdjust="spacingAndGlyphs" font-weight="bold" fill="#fff">Dlubal</text></svg>
<div class="a" id="vscroll"></div><div class="a" style="left:1593px;top:554px;width:2px;height:153px;background:#858585"></div>
<div class="a" id="status"></div>
<div class="a" style="left:1401px;top:1185px;width:1px;height:14px;background:#98a8c6"></div><div class="a" style="left:1402px;top:1185px;width:1px;height:14px;background:#d8e0ee"></div>
<div class="a" style="left:1492px;top:1185px;width:1px;height:14px;background:#98a8c6"></div><div class="a" style="left:1493px;top:1185px;width:1px;height:14px;background:#d8e0ee"></div>
<div class="a" style="left:1583px;top:1185px;width:1px;height:14px;background:#98a8c6"></div><div class="a" style="left:1584px;top:1185px;width:1px;height:14px;background:#d8e0ee"></div>
<span class="t" style="left:1314px;top:1187.19px;font-size:11px;line-height:13.2px;color:#000;transform:scaleX(0.8614);">RESULTS</span>
<span class="t" style="left:1405.7px;top:1187.19px;font-size:11px;line-height:13.2px;color:#000;transform:scaleX(0.9891);">Seiten: 14</span>
<span class="t" style="left:1496.4px;top:1187.19px;font-size:11px;line-height:13.2px;color:#000;">Seite: 7</span>
<svg class="a" style="left:1588px;top:1188px" width="12" height="12" viewBox="0 0 12 12"><rect x="8" y="2" width="1.5" height="1.5" fill="#93a3c3"/><rect x="5" y="5" width="1.5" height="1.5" fill="#93a3c3"/><rect x="8" y="5" width="1.5" height="1.5" fill="#93a3c3"/><rect x="2" y="8" width="1.5" height="1.5" fill="#93a3c3"/><rect x="5" y="8" width="1.5" height="1.5" fill="#93a3c3"/><rect x="8" y="8" width="1.5" height="1.5" fill="#93a3c3"/></svg>
</body></html>
